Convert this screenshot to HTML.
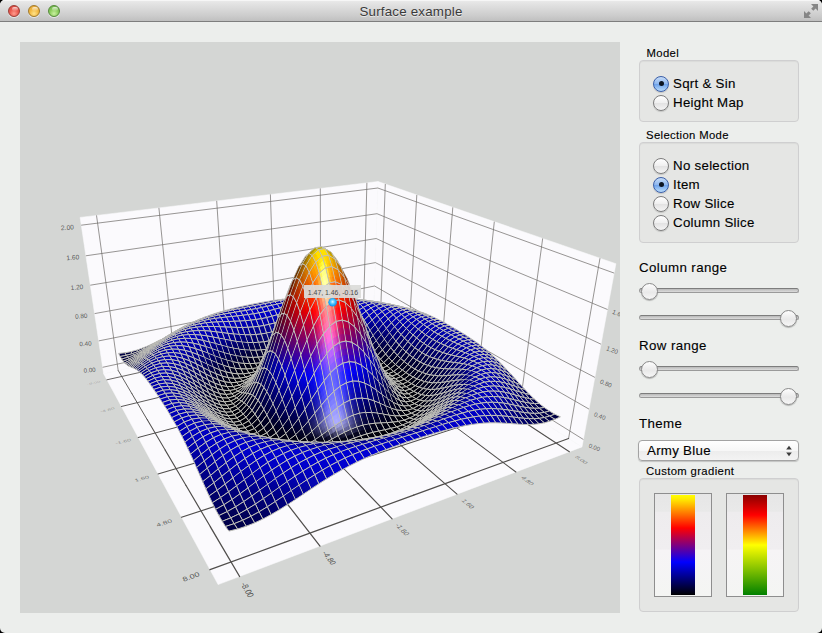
<!DOCTYPE html>
<html><head><meta charset="utf-8"><title>Surface example</title>
<style>
html,body{margin:0;padding:0;background:#000;}
body{width:822px;height:633px;overflow:hidden;position:relative;font-family:"Liberation Sans",sans-serif;color:#000;}
#win{position:absolute;left:0;top:0;width:822px;height:633px;border-radius:5px;background:#eceeec;overflow:hidden;}
#tb{position:absolute;left:0;top:0;width:822px;height:21px;background:linear-gradient(#ebebeb 0%,#e2e2e2 20%,#cccccc 75%,#bfbfbf 100%);border-bottom:1px solid #7e7e7e;box-shadow:inset 0 1px 0 #f6f6f6;}
#title{position:absolute;left:0;top:4px;width:822px;text-align:center;font-size:13.3px;color:#3a3a3a;letter-spacing:0.22px;text-shadow:0 1px 0 rgba(255,255,255,.6);}
.tl{position:absolute;top:5px;width:12px;height:12px;border-radius:6px;box-sizing:border-box;box-shadow:0 1px 0 rgba(255,255,255,.55);}
.tl:after{content:"";position:absolute;left:2.5px;top:1px;width:6px;height:4px;border-radius:3px;background:linear-gradient(rgba(255,255,255,.75),rgba(255,255,255,.05));}
#view{position:absolute;left:20px;top:42px;width:600px;height:571px;background:#d4d6d4;}
.gb{position:absolute;box-sizing:border-box;background:#e5e6e4;border:1px solid #cfcfd0;border-radius:4px;box-shadow:inset 0 1px 1px rgba(0,0,0,.05);}
.t11{position:absolute;font-size:11.3px;white-space:nowrap;line-height:14px;letter-spacing:0.36px;-webkit-text-stroke:0.12px #000;}
.t13{position:absolute;font-size:13.3px;white-space:nowrap;line-height:16px;letter-spacing:0.28px;-webkit-text-stroke:0.12px #000;}
.rb{position:absolute;width:16px;height:16px;border-radius:8px;box-sizing:border-box;border:1px solid #7d7d7d;background:linear-gradient(#ffffff,#efefef 50%,#e2e2e2 51%,#f4f4f4);box-shadow:0 1px 1px rgba(0,0,0,.15);}
.rb.on{border-color:#3b5fa8;background:linear-gradient(#c6dcf7,#8db6ee 50%,#6ea2ea 51%,#b9dcfb);}
.rb.on i{position:absolute;left:4.5px;top:4.5px;width:5px;height:5px;border-radius:3px;background:#0c1420;}
.sl{position:absolute;left:639px;width:160px;height:5px;box-sizing:border-box;border-radius:3px;border:1px solid #9a9a9a;border-top-color:#7d7d7d;background:linear-gradient(#b9b9b9,#dcdcdc);}
.kn{position:absolute;width:17px;height:17px;border-radius:9px;box-sizing:border-box;border:1px solid #8a8a8a;background:linear-gradient(#fdfdfd,#e9e9e9 55%,#f6f6f6);box-shadow:0 1px 1px rgba(0,0,0,.25);}
#combo{position:absolute;left:638px;top:440px;width:161px;height:21px;box-sizing:border-box;border:1px solid #a3a3a3;border-radius:4px;background:linear-gradient(#ffffff,#f7f7f7 50%,#ececec 51%,#f3f3f3);box-shadow:0 1px 1px rgba(0,0,0,.18);}
.gbtn{position:absolute;top:493px;width:58px;height:104px;box-sizing:border-box;border:1px solid #8e8e8e;background:linear-gradient(#e6e6e6 0%,#e9e9e9 17%,#eeecee 18%,#f0eef0 54%,#f6f4f6 55%,#f4f5f3 100%);}
#sf path{stroke:none}
.gbtn b{position:absolute;left:16px;top:1px;width:24px;height:100px;}
</style></head><body><div id="win">
<div id="tb"></div>
<div class="tl" style="left:8px;border:1px solid #9c3d36;background:radial-gradient(circle at 50% 75%,#ff9d8e 0%,#ec5d52 45%,#cf4038 100%)"></div>
<div class="tl" style="left:28px;border:1px solid #a17a2c;background:radial-gradient(circle at 50% 75%,#ffe38a 0%,#f3bb45 45%,#dd9c2a 100%)"></div>
<div class="tl" style="left:48px;border:1px solid #568a3c;background:radial-gradient(circle at 50% 75%,#c9f0a0 0%,#8fcf5f 45%,#62a843 100%)"></div>
<div id="title">Surface example</div>
<svg style="position:absolute;left:804px;top:4px" width="14" height="14" viewBox="0 0 14 14"><path d="M7 0H14V7L11.6 4.600L9.340 6.860L7.140 4.660L9.400 2.400ZM7 14H0V7L2.400 9.400L4.660 7.140L6.860 9.340L4.600 11.6Z" fill="#868686"/></svg>
<div id="view"><svg width="600" height="571" viewBox="20 42 600 571" style="position:absolute;left:0;top:0;font-family:'Liberation Sans',sans-serif">
<polygon points="103.6,373.7 373.7,314.3 582.0,446.9 218.1,584.6" fill="#fbfafd" stroke="#fbfafd" stroke-width="0.5"/>
<polygon points="103.6,373.7 373.7,314.3 378.0,181.5 80.1,217.4" fill="#fbfafd" stroke="#fbfafd" stroke-width="0.5"/>
<polygon points="373.7,314.3 582.0,446.9 615.9,263.7 378.0,181.5" fill="#fbfafd" stroke="#fbfafd" stroke-width="0.5"/>
<g stroke="#6b6966" stroke-width="0.7"><line x1="118.2" y1="370.5" x2="96.5" y2="215.4"/>
<line x1="380.4" y1="318.6" x2="385.3" y2="184.0"/>
<line x1="174.2" y1="358.2" x2="158.9" y2="207.9"/>
<line x1="408.8" y1="336.7" x2="416.8" y2="194.9"/>
<line x1="226.3" y1="346.7" x2="216.7" y2="200.9"/>
<line x1="441.0" y1="357.2" x2="452.8" y2="207.3"/>
<line x1="275.0" y1="336.0" x2="270.4" y2="194.4"/>
<line x1="477.6" y1="380.5" x2="494.3" y2="221.7"/>
<line x1="320.7" y1="326.0" x2="320.3" y2="188.4"/>
<line x1="519.7" y1="407.3" x2="542.7" y2="238.4"/>
<line x1="363.4" y1="316.6" x2="366.9" y2="182.8"/>
<line x1="568.6" y1="438.4" x2="600.0" y2="258.2"/>
<line x1="102.6" y1="367.3" x2="373.9" y2="308.8"/>
<line x1="373.9" y1="308.8" x2="583.4" y2="439.5"/>
<line x1="98.7" y1="340.9" x2="374.6" y2="286.0"/>
<line x1="374.6" y1="286.0" x2="589.0" y2="409.1"/>
<line x1="94.6" y1="313.6" x2="375.4" y2="262.6"/>
<line x1="375.4" y1="262.6" x2="594.9" y2="377.4"/>
<line x1="90.3" y1="285.2" x2="376.2" y2="238.5"/>
<line x1="376.2" y1="238.5" x2="601.0" y2="344.2"/>
<line x1="85.8" y1="255.8" x2="377.0" y2="213.7"/>
<line x1="377.0" y1="213.7" x2="607.5" y2="309.5"/>
<line x1="81.2" y1="225.2" x2="377.8" y2="188.0"/>
<line x1="377.8" y1="188.0" x2="614.2" y2="273.1"/></g>
<g stroke="#504e4c" stroke-linecap="round"><line x1="106.9" y1="379.8" x2="160.1" y2="367.9" stroke-width="0.86"/><line x1="160.1" y1="367.9" x2="209.8" y2="356.8" stroke-width="0.84"/><line x1="209.8" y1="356.8" x2="256.4" y2="346.3" stroke-width="0.81"/><line x1="256.4" y1="346.3" x2="300.2" y2="336.5" stroke-width="0.79"/><line x1="300.2" y1="336.5" x2="341.5" y2="327.3" stroke-width="0.76"/><line x1="341.5" y1="327.3" x2="380.4" y2="318.6" stroke-width="0.74"/>
<line x1="118.2" y1="370.5" x2="131.8" y2="393.5" stroke-width="0.88"/><line x1="131.8" y1="393.5" x2="147.3" y2="419.8" stroke-width="0.94"/><line x1="147.3" y1="419.8" x2="165.2" y2="450.1" stroke-width="1.01"/><line x1="165.2" y1="450.1" x2="185.9" y2="485.3" stroke-width="1.09"/><line x1="185.9" y1="485.3" x2="210.4" y2="526.8" stroke-width="1.19"/><line x1="210.4" y1="526.8" x2="239.6" y2="576.5" stroke-width="1.30"/>
<line x1="121.4" y1="406.5" x2="177.8" y2="392.8" stroke-width="0.93"/><line x1="177.8" y1="392.8" x2="230.4" y2="380.0" stroke-width="0.90"/><line x1="230.4" y1="380.0" x2="279.5" y2="368.1" stroke-width="0.86"/><line x1="279.5" y1="368.1" x2="325.4" y2="357.0" stroke-width="0.84"/><line x1="325.4" y1="357.0" x2="368.4" y2="346.5" stroke-width="0.81"/><line x1="368.4" y1="346.5" x2="408.8" y2="336.7" stroke-width="0.79"/>
<line x1="174.2" y1="358.2" x2="190.8" y2="379.6" stroke-width="0.85"/><line x1="190.8" y1="379.6" x2="209.7" y2="403.9" stroke-width="0.91"/><line x1="209.7" y1="403.9" x2="231.3" y2="431.7" stroke-width="0.97"/><line x1="231.3" y1="431.7" x2="256.2" y2="463.9" stroke-width="1.04"/><line x1="256.2" y1="463.9" x2="285.4" y2="501.5" stroke-width="1.13"/><line x1="285.4" y1="501.5" x2="320.0" y2="546.1" stroke-width="1.23"/>
<line x1="138.2" y1="437.5" x2="198.4" y2="421.5" stroke-width="1.00"/><line x1="198.4" y1="421.5" x2="254.1" y2="406.8" stroke-width="0.96"/><line x1="254.1" y1="406.8" x2="305.8" y2="393.0" stroke-width="0.93"/><line x1="305.8" y1="393.0" x2="354.0" y2="380.3" stroke-width="0.90"/><line x1="354.0" y1="380.3" x2="398.9" y2="368.3" stroke-width="0.87"/><line x1="398.9" y1="368.3" x2="441.0" y2="357.2" stroke-width="0.84"/>
<line x1="226.3" y1="346.7" x2="245.5" y2="366.7" stroke-width="0.82"/><line x1="245.5" y1="366.7" x2="267.2" y2="389.2" stroke-width="0.87"/><line x1="267.2" y1="389.2" x2="291.9" y2="414.8" stroke-width="0.93"/><line x1="291.9" y1="414.8" x2="320.3" y2="444.3" stroke-width="1.00"/><line x1="320.3" y1="444.3" x2="353.3" y2="478.5" stroke-width="1.08"/><line x1="353.3" y1="478.5" x2="392.1" y2="518.8" stroke-width="1.17"/>
<line x1="158.0" y1="473.9" x2="222.3" y2="455.1" stroke-width="1.09"/><line x1="222.3" y1="455.1" x2="281.5" y2="437.8" stroke-width="1.04"/><line x1="281.5" y1="437.8" x2="336.2" y2="421.8" stroke-width="1.00"/><line x1="336.2" y1="421.8" x2="386.8" y2="407.0" stroke-width="0.96"/><line x1="386.8" y1="407.0" x2="433.9" y2="393.3" stroke-width="0.93"/><line x1="433.9" y1="393.3" x2="477.6" y2="380.5" stroke-width="0.90"/>
<line x1="275.0" y1="336.0" x2="296.4" y2="354.6" stroke-width="0.79"/><line x1="296.4" y1="354.6" x2="320.5" y2="375.6" stroke-width="0.84"/><line x1="320.5" y1="375.6" x2="347.8" y2="399.3" stroke-width="0.90"/><line x1="347.8" y1="399.3" x2="379.0" y2="426.4" stroke-width="0.96"/><line x1="379.0" y1="426.4" x2="415.0" y2="457.7" stroke-width="1.03"/><line x1="415.0" y1="457.7" x2="457.0" y2="494.2" stroke-width="1.11"/>
<line x1="181.5" y1="517.2" x2="250.6" y2="494.8" stroke-width="1.19"/><line x1="250.6" y1="494.8" x2="313.8" y2="474.2" stroke-width="1.13"/><line x1="313.8" y1="474.2" x2="371.7" y2="455.4" stroke-width="1.09"/><line x1="371.7" y1="455.4" x2="425.0" y2="438.1" stroke-width="1.04"/><line x1="425.0" y1="438.1" x2="474.2" y2="422.1" stroke-width="1.00"/><line x1="474.2" y1="422.1" x2="519.7" y2="407.3" stroke-width="0.96"/>
<line x1="320.7" y1="326.0" x2="343.9" y2="343.4" stroke-width="0.77"/><line x1="343.9" y1="343.4" x2="370.0" y2="362.9" stroke-width="0.81"/><line x1="370.0" y1="362.9" x2="399.4" y2="384.9" stroke-width="0.86"/><line x1="399.4" y1="384.9" x2="432.9" y2="410.0" stroke-width="0.92"/><line x1="432.9" y1="410.0" x2="471.3" y2="438.7" stroke-width="0.99"/><line x1="471.3" y1="438.7" x2="515.9" y2="472.0" stroke-width="1.06"/>
<line x1="210.0" y1="569.7" x2="284.6" y2="542.4" stroke-width="1.31"/><line x1="284.6" y1="542.4" x2="352.2" y2="517.6" stroke-width="1.25"/><line x1="352.2" y1="517.6" x2="413.7" y2="495.1" stroke-width="1.19"/><line x1="413.7" y1="495.1" x2="469.8" y2="474.6" stroke-width="1.14"/><line x1="469.8" y1="474.6" x2="521.2" y2="455.7" stroke-width="1.09"/><line x1="521.2" y1="455.7" x2="568.6" y2="438.4" stroke-width="1.04"/>
<line x1="363.4" y1="316.6" x2="388.3" y2="332.9" stroke-width="0.74"/><line x1="388.3" y1="332.9" x2="416.1" y2="351.1" stroke-width="0.79"/><line x1="416.1" y1="351.1" x2="447.3" y2="371.6" stroke-width="0.83"/><line x1="447.3" y1="371.6" x2="482.6" y2="394.8" stroke-width="0.89"/><line x1="482.6" y1="394.8" x2="522.9" y2="421.2" stroke-width="0.95"/><line x1="522.9" y1="421.2" x2="569.4" y2="451.7" stroke-width="1.02"/></g>
<g id="sf" stroke="#c0c0b9" stroke-width="1.0" stroke-linejoin="round">
<polygon points="282.4,299.3 284.8,299.8 289.8,299.1 287.4,298.8" fill="#000075"/>
<polygon points="277.4,299.9 279.8,300.7 284.8,299.8 282.4,299.3" fill="#00007f"/>
<polygon points="272.4,300.6 274.7,301.7 279.8,300.7 277.4,299.9" fill="#000087"/>
<polygon points="267.3,301.5 269.6,302.7 274.7,301.7 272.4,300.6" fill="#00008d"/>
<polygon points="262.2,302.3 264.5,303.7 269.6,302.7 267.3,301.5" fill="#000092"/>
<polygon points="257.1,303.3 259.3,304.7 264.5,303.7 262.2,302.3" fill="#000094"/>
<polygon points="251.9,304.3 254.1,305.7 259.3,304.7 257.1,303.3" fill="#000096"/>
<polygon points="246.7,305.4 248.9,306.7 254.1,305.7 251.9,304.3" fill="#000095"/>
<polygon points="241.4,306.5 243.6,307.8 248.9,306.7 246.7,305.4" fill="#000093"/>
<polygon points="236.1,307.7 238.3,308.8 243.6,307.8 241.4,306.5" fill="#00008f"/>
<polygon points="230.8,309.0 232.9,309.9 238.3,308.8 236.1,307.7" fill="#000089"/>
<polygon points="225.5,310.4 227.5,311.1 232.9,309.9 230.8,309.0" fill="#000082"/>
<polygon points="220.1,311.9 222.1,312.3 227.5,311.1 225.5,310.4" fill="#00007a"/>
<polygon points="214.7,313.6 216.6,313.8 222.1,312.3 220.1,311.9" fill="#000071"/>
<polygon points="209.3,315.5 211.2,315.3 216.6,313.8 214.7,313.6" fill="#000068"/>
<polygon points="203.9,317.5 205.7,317.1 211.2,315.3 209.3,315.5" fill="#00005f"/>
<polygon points="198.4,319.8 200.1,319.2 205.7,317.1 203.9,317.5" fill="#000056"/>
<polygon points="192.9,322.3 194.6,321.5 200.1,319.2 198.4,319.8" fill="#000028"/>
<polygon points="187.4,325.0 189.1,324.0 194.6,321.5 192.9,322.3" fill="#000026"/>
<polygon points="181.9,327.9 183.5,326.8 189.1,324.0 187.4,325.0" fill="#000024"/>
<polygon points="176.4,330.9 178.0,329.8 183.5,326.8 181.9,327.9" fill="#000022"/>
<polygon points="165.3,337.1 166.8,336.3 172.4,333.0 170.9,334.0" fill="#00001d"/>
<polygon points="154.1,343.0 155.5,342.9 161.2,339.7 159.7,340.1" fill="#000035"/>
<polygon points="148.4,345.7 149.8,346.1 155.5,342.9 154.1,343.0" fill="#000035"/>
<polygon points="142.6,348.1 144.1,349.0 149.8,346.1 148.4,345.7" fill="#000037"/>
<polygon points="136.8,350.1 138.2,351.5 144.1,349.0 142.6,348.1" fill="#000039"/>
<polygon points="130.8,351.7 132.3,353.7 138.2,351.5 136.8,350.1" fill="#00003c"/>
<polygon points="124.8,352.8 126.3,355.3 132.3,353.7 130.8,351.7" fill="#000040"/>
<polygon points="118.6,353.4 120.2,356.5 126.3,355.3 124.8,352.8" fill="#000045"/>
<polygon points="279.8,300.7 282.2,302.9 287.2,301.7 284.8,299.8" fill="#0000a8"/>
<polygon points="274.7,301.7 277.1,304.1 282.2,302.9 279.8,300.7" fill="#0000af"/>
<polygon points="269.6,302.7 272.0,305.3 277.1,304.1 274.7,301.7" fill="#0000b4"/>
<polygon points="264.5,303.7 266.9,306.4 272.0,305.3 269.6,302.7" fill="#0000b7"/>
<polygon points="259.3,304.7 261.7,307.5 266.9,306.4 264.5,303.7" fill="#0000b9"/>
<polygon points="254.1,305.7 256.4,308.6 261.7,307.5 259.3,304.7" fill="#0000ba"/>
<polygon points="248.9,306.7 251.2,309.5 256.4,308.6 254.1,305.7" fill="#0000b9"/>
<polygon points="243.6,307.8 245.9,310.5 251.2,309.5 248.9,306.7" fill="#0000b7"/>
<polygon points="238.3,308.8 240.5,311.3 245.9,310.5 243.6,307.8" fill="#0000b4"/>
<polygon points="232.9,309.9 235.1,312.2 240.5,311.3 238.3,308.8" fill="#0000af"/>
<polygon points="227.5,311.1 229.7,313.1 235.1,312.2 232.9,309.9" fill="#0000a8"/>
<polygon points="222.1,312.3 224.2,314.0 229.7,313.1 227.5,311.1" fill="#0000a0"/>
<polygon points="216.6,313.8 218.7,315.0 224.2,314.0 222.1,312.3" fill="#000096"/>
<polygon points="211.2,315.3 213.1,316.3 218.7,315.0 216.6,313.8" fill="#00008b"/>
<polygon points="205.7,317.1 207.6,317.7 213.1,316.3 211.2,315.3" fill="#00007f"/>
<polygon points="200.1,319.2 202.0,319.3 207.6,317.7 205.7,317.1" fill="#000072"/>
<polygon points="194.6,321.5 196.4,321.3 202.0,319.3 200.1,319.2" fill="#000066"/>
<polygon points="189.1,324.0 190.8,323.5 196.4,321.3 194.6,321.5" fill="#00005b"/>
<polygon points="183.5,326.8 185.1,326.1 190.8,323.5 189.1,324.0" fill="#000051"/>
<polygon points="178.0,329.8 179.5,328.9 185.1,326.1 183.5,326.8" fill="#000049"/>
<polygon points="172.4,333.0 173.9,332.1 179.5,328.9 178.0,329.8" fill="#000024"/>
<polygon points="161.2,339.7 162.6,339.0 168.3,335.5 166.8,336.3" fill="#00003a"/>
<polygon points="155.5,342.9 156.9,342.5 162.6,339.0 161.2,339.7" fill="#000038"/>
<polygon points="149.8,346.1 151.2,346.0 156.9,342.5 155.5,342.9" fill="#000037"/>
<polygon points="144.1,349.0 145.5,349.4 151.2,346.0 149.8,346.1" fill="#000037"/>
<polygon points="138.2,351.5 139.7,352.4 145.5,349.4 144.1,349.0" fill="#000037"/>
<polygon points="132.3,353.7 133.8,355.1 139.7,352.4 138.2,351.5" fill="#000039"/>
<polygon points="126.3,355.3 127.8,357.3 133.8,355.1 132.3,353.7" fill="#00003c"/>
<polygon points="120.2,356.5 121.7,359.0 127.8,357.3 126.3,355.3" fill="#000040"/>
<polygon points="282.2,302.9 284.7,306.4 289.7,304.9 287.2,301.7" fill="#0000c4"/>
<polygon points="277.1,304.1 279.6,307.9 284.7,306.4 282.2,302.9" fill="#0000c8"/>
<polygon points="272.0,305.3 274.5,309.4 279.6,307.9 277.1,304.1" fill="#0000c9"/>
<polygon points="266.9,306.4 269.3,310.7 274.5,309.4 272.0,305.3" fill="#0000ca"/>
<polygon points="261.7,307.5 264.1,311.9 269.3,310.7 266.9,306.4" fill="#0000ca"/>
<polygon points="256.4,308.6 258.9,312.9 264.1,311.9 261.7,307.5" fill="#0000c9"/>
<polygon points="251.2,309.5 253.6,313.8 258.9,312.9 256.4,308.6" fill="#0000c9"/>
<polygon points="245.9,310.5 248.2,314.6 253.6,313.8 251.2,309.5" fill="#0000c8"/>
<polygon points="240.5,311.3 242.8,315.3 248.2,314.6 245.9,310.5" fill="#0000c6"/>
<polygon points="235.1,312.2 237.4,315.9 242.8,315.3 240.5,311.3" fill="#0000c4"/>
<polygon points="229.7,313.1 231.9,316.5 237.4,315.9 235.1,312.2" fill="#0000c1"/>
<polygon points="224.2,314.0 226.4,317.0 231.9,316.5 229.7,313.1" fill="#0000bd"/>
<polygon points="218.7,315.0 220.8,317.7 226.4,317.0 224.2,314.0" fill="#0000b6"/>
<polygon points="213.1,316.3 215.2,318.4 220.8,317.7 218.7,315.0" fill="#0000ad"/>
<polygon points="207.6,317.7 209.6,319.3 215.2,318.4 213.1,316.3" fill="#0000a1"/>
<polygon points="202.0,319.3 203.9,320.5 209.6,319.3 207.6,317.7" fill="#000094"/>
<polygon points="196.4,321.3 198.3,322.0 203.9,320.5 202.0,319.3" fill="#000085"/>
<polygon points="190.8,323.5 192.6,323.8 198.3,322.0 196.4,321.3" fill="#000076"/>
<polygon points="185.1,326.1 186.9,325.9 192.6,323.8 190.8,323.5" fill="#000067"/>
<polygon points="179.5,328.9 181.2,328.5 186.9,325.9 185.1,326.1" fill="#00005b"/>
<polygon points="173.9,332.1 175.5,331.4 181.2,328.5 179.5,328.9" fill="#000050"/>
<polygon points="168.3,335.5 169.8,334.7 175.5,331.4 173.9,332.1" fill="#000048"/>
<polygon points="162.6,339.0 164.1,338.2 169.8,334.7 168.3,335.5" fill="#000042"/>
<polygon points="156.9,342.5 158.4,341.9 164.1,338.2 162.6,339.0" fill="#00003d"/>
<polygon points="151.2,346.0 152.6,345.7 158.4,341.9 156.9,342.5" fill="#00003a"/>
<polygon points="145.5,349.4 146.9,349.4 152.6,345.7 151.2,346.0" fill="#000038"/>
<polygon points="139.7,352.4 141.1,352.9 146.9,349.4 145.5,349.4" fill="#000038"/>
<polygon points="133.8,355.1 135.2,356.1 141.1,352.9 139.7,352.4" fill="#000038"/>
<polygon points="127.8,357.3 129.2,358.9 135.2,356.1 133.8,355.1" fill="#00003a"/>
<polygon points="121.7,359.0 123.2,361.2 129.2,358.9 127.8,357.3" fill="#00003d"/>
<polygon points="279.6,307.9 282.1,313.2 287.2,311.4 284.7,306.4" fill="#0000c9"/>
<polygon points="274.5,309.4 277.0,314.8 282.1,313.2 279.6,307.9" fill="#0000c7"/>
<polygon points="269.3,310.7 271.8,316.3 277.0,314.8 274.5,309.4" fill="#0000c5"/>
<polygon points="264.1,311.9 266.6,317.6 271.8,316.3 269.3,310.7" fill="#0000c3"/>
<polygon points="258.9,312.9 261.4,318.7 266.6,317.6 264.1,311.9" fill="#0000c2"/>
<polygon points="253.6,313.8 256.0,319.5 261.4,318.7 258.9,312.9" fill="#0000c2"/>
<polygon points="248.2,314.6 250.7,320.2 256.0,319.5 253.6,313.8" fill="#0000c2"/>
<polygon points="242.8,315.3 245.3,320.7 250.7,320.2 248.2,314.6" fill="#0000c3"/>
<polygon points="237.4,315.9 239.8,321.1 245.3,320.7 242.8,315.3" fill="#0000c4"/>
<polygon points="231.9,316.5 234.3,321.3 239.8,321.1 237.4,315.9" fill="#0000c5"/>
<polygon points="226.4,317.0 228.7,321.5 234.3,321.3 231.9,316.5" fill="#0000c5"/>
<polygon points="220.8,317.7 223.1,321.7 228.7,321.5 226.4,317.0" fill="#0000c4"/>
<polygon points="215.2,318.4 217.4,321.9 223.1,321.7 220.8,317.7" fill="#0000c0"/>
<polygon points="209.6,319.3 211.7,322.3 217.4,321.9 215.2,318.4" fill="#0000ba"/>
<polygon points="203.9,320.5 206.0,322.8 211.7,322.3 209.6,319.3" fill="#0000b1"/>
<polygon points="198.3,322.0 200.2,323.7 206.0,322.8 203.9,320.5" fill="#0000a4"/>
<polygon points="192.6,323.8 194.5,325.0 200.2,323.7 198.3,322.0" fill="#000095"/>
<polygon points="186.9,325.9 188.7,326.6 194.5,325.0 192.6,323.8" fill="#000084"/>
<polygon points="181.2,328.5 182.9,328.7 188.7,326.6 186.9,325.9" fill="#000073"/>
<polygon points="175.5,331.4 177.1,331.3 182.9,328.7 181.2,328.5" fill="#000064"/>
<polygon points="169.8,334.7 171.3,334.3 177.1,331.3 175.5,331.4" fill="#000057"/>
<polygon points="164.1,338.2 165.6,337.6 171.3,334.3 169.8,334.7" fill="#00004d"/>
<polygon points="158.4,341.9 159.8,341.3 165.6,337.6 164.1,338.2" fill="#000046"/>
<polygon points="152.6,345.7 154.1,345.2 159.8,341.3 158.4,341.9" fill="#000040"/>
<polygon points="146.9,349.4 148.3,349.2 154.1,345.2 152.6,345.7" fill="#00003d"/>
<polygon points="141.1,352.9 142.5,353.1 148.3,349.2 146.9,349.4" fill="#00003a"/>
<polygon points="135.2,356.1 136.6,356.7 142.5,353.1 141.1,352.9" fill="#000039"/>
<polygon points="129.2,358.9 130.6,360.0 136.6,356.7 135.2,356.1" fill="#00003a"/>
<polygon points="123.2,361.2 124.6,362.9 130.6,360.0 129.2,358.9" fill="#00003b"/>
<polygon points="277.0,314.8 279.6,321.4 284.7,319.6 282.1,313.2" fill="#0202b6"/>
<polygon points="271.8,316.3 274.4,323.0 279.6,321.4 277.0,314.8" fill="#0303b2"/>
<polygon points="266.6,317.6 269.2,324.4 274.4,323.0 271.8,316.3" fill="#0202af"/>
<polygon points="261.4,318.7 263.9,325.5 269.2,324.4 266.6,317.6" fill="#0202ad"/>
<polygon points="256.0,319.5 258.6,326.4 263.9,325.5 261.4,318.7" fill="#0101ac"/>
<polygon points="250.7,320.2 253.2,327.0 258.6,326.4 256.0,319.5" fill="#0101ad"/>
<polygon points="245.3,320.7 247.8,327.3 253.2,327.0 250.7,320.2" fill="#0000af"/>
<polygon points="239.8,321.1 242.3,327.5 247.8,327.3 245.3,320.7" fill="#0000b2"/>
<polygon points="234.3,321.3 236.8,327.4 242.3,327.5 239.8,321.1" fill="#0000b5"/>
<polygon points="228.7,321.5 231.2,327.2 236.8,327.4 234.3,321.3" fill="#0000ba"/>
<polygon points="223.1,321.7 225.5,327.0 231.2,327.2 228.7,321.5" fill="#0000bd"/>
<polygon points="217.4,321.9 219.8,326.7 225.5,327.0 223.1,321.7" fill="#0000c0"/>
<polygon points="211.7,322.3 214.0,326.5 219.8,326.7 217.4,321.9" fill="#0000c1"/>
<polygon points="206.0,322.8 208.2,326.4 214.0,326.5 211.7,322.3" fill="#0000c0"/>
<polygon points="200.2,323.7 202.4,326.6 208.2,326.4 206.0,322.8" fill="#0000ba"/>
<polygon points="194.5,325.0 196.5,327.2 202.4,326.6 200.2,323.7" fill="#0000af"/>
<polygon points="188.7,326.6 190.6,328.2 196.5,327.2 194.5,325.0" fill="#0000a1"/>
<polygon points="182.9,328.7 184.7,329.7 190.6,328.2 188.7,326.6" fill="#00008f"/>
<polygon points="177.1,331.3 178.9,331.7 184.7,329.7 182.9,328.7" fill="#00007d"/>
<polygon points="171.3,334.3 173.0,334.3 178.9,331.7 177.1,331.3" fill="#00006c"/>
<polygon points="165.6,337.6 167.2,337.4 173.0,334.3 171.3,334.3" fill="#00005d"/>
<polygon points="159.8,341.3 161.3,340.9 167.2,337.4 165.6,337.6" fill="#000052"/>
<polygon points="154.1,345.2 155.5,344.8 161.3,340.9 159.8,341.3" fill="#000049"/>
<polygon points="148.3,349.2 149.7,348.9 155.5,344.8 154.1,345.2" fill="#000043"/>
<polygon points="142.5,353.1 143.8,353.0 149.7,348.9 148.3,349.2" fill="#00003f"/>
<polygon points="136.6,356.7 138.0,357.1 143.8,353.0 142.5,353.1" fill="#00003c"/>
<polygon points="130.6,360.0 132.0,360.8 138.0,357.1 136.6,356.7" fill="#00003b"/>
<polygon points="124.6,362.9 126.0,364.2 132.0,360.8 130.6,360.0" fill="#00003b"/>
<polygon points="274.4,323.0 277.0,330.5 282.2,328.8 279.6,321.4" fill="#0c0c9d"/>
<polygon points="269.2,324.4 271.8,332.0 277.0,330.5 274.4,323.0" fill="#0a0a97"/>
<polygon points="263.9,325.5 266.5,333.1 271.8,332.0 269.2,324.4" fill="#070793"/>
<polygon points="258.6,326.4 261.2,334.0 266.5,333.1 263.9,325.5" fill="#050591"/>
<polygon points="253.2,327.0 255.8,334.5 261.2,334.0 258.6,326.4" fill="#030390"/>
<polygon points="247.8,327.3 250.4,334.8 255.8,334.5 253.2,327.0" fill="#010192"/>
<polygon points="242.3,327.5 244.9,334.8 250.4,334.8 247.8,327.3" fill="#010196"/>
<polygon points="236.8,327.4 239.3,334.5 244.9,334.8 242.3,327.5" fill="#00009b"/>
<polygon points="231.2,327.2 233.7,334.0 239.3,334.5 236.8,327.4" fill="#0000a2"/>
<polygon points="225.5,327.0 228.0,333.4 233.7,334.0 231.2,327.2" fill="#0000a9"/>
<polygon points="219.8,326.7 222.2,332.6 228.0,333.4 225.5,327.0" fill="#0000b1"/>
<polygon points="214.0,326.5 216.4,331.9 222.2,332.6 219.8,326.7" fill="#0000b7"/>
<polygon points="208.2,326.4 210.5,331.2 216.4,331.9 214.0,326.5" fill="#0000bc"/>
<polygon points="202.4,326.6 204.6,330.7 210.5,331.2 208.2,326.4" fill="#0000bf"/>
<polygon points="196.5,327.2 198.6,330.6 204.6,330.7 202.4,326.6" fill="#0000bd"/>
<polygon points="190.6,328.2 192.7,330.9 198.6,330.6 196.5,327.2" fill="#0000b5"/>
<polygon points="184.7,329.7 186.7,331.7 192.7,330.9 190.6,328.2" fill="#0000a8"/>
<polygon points="178.9,331.7 180.7,333.0 186.7,331.7 184.7,329.7" fill="#000097"/>
<polygon points="173.0,334.3 174.7,335.0 180.7,333.0 178.9,331.7" fill="#000084"/>
<polygon points="167.2,337.4 168.8,337.7 174.7,335.0 173.0,334.3" fill="#000072"/>
<polygon points="161.3,340.9 162.9,340.9 168.8,337.7 167.2,337.4" fill="#000062"/>
<polygon points="155.5,344.8 157.0,344.6 162.9,340.9 161.3,340.9" fill="#000056"/>
<polygon points="149.7,348.9 151.1,348.6 157.0,344.6 155.5,344.8" fill="#00004c"/>
<polygon points="143.8,353.0 145.2,352.9 151.1,348.6 149.7,348.9" fill="#000045"/>
<polygon points="138.0,357.1 139.3,357.2 145.2,352.9 143.8,353.0" fill="#000040"/>
<polygon points="132.0,360.8 133.4,361.4 139.3,357.2 138.0,357.1" fill="#00003d"/>
<polygon points="126.0,364.2 127.4,365.2 133.4,361.4 132.0,360.8" fill="#00003c"/>
<polygon points="356.3,299.1 359.2,299.6 363.8,299.9 360.9,299.9" fill="#00002b"/>
<polygon points="351.6,298.8 354.4,299.9 359.2,299.6 356.3,299.1" fill="#000079"/>
<polygon points="271.8,332.0 274.4,339.8 279.7,338.3 277.0,330.5" fill="#0f0f79"/>
<polygon points="266.5,333.1 269.2,340.9 274.4,339.8 271.8,332.0" fill="#0a0a73"/>
<path d="M267.0 333.5L268.2 337.0L270.5 336.4L269.3 333.0" fill="#0a0a7a"/>
<path d="M269.3 333.0L270.5 336.4L272.8 335.9L271.7 332.5" fill="#0b0b7c"/>
<path d="M268.2 337.0L269.3 340.4L271.7 339.9L270.5 336.4" fill="#0a0a6a"/>
<path d="M270.5 336.4L271.7 339.9L274.0 339.4L272.8 335.9" fill="#0b0b6c"/>
<polygon points="261.2,334.0 263.8,341.8 269.2,340.9 266.5,333.1" fill="#070770"/>
<polygon points="255.8,334.5 258.4,342.4 263.8,341.8 261.2,334.0" fill="#04046f"/>
<polygon points="250.4,334.8 253.0,342.6 258.4,342.4 255.8,334.5" fill="#020271"/>
<polygon points="244.9,334.8 247.5,342.5 253.0,342.6 250.4,334.8" fill="#010176"/>
<polygon points="239.3,334.5 241.9,342.1 247.5,342.5 244.9,334.8" fill="#00007c"/>
<path d="M239.8 335.0L240.9 338.3L243.4 338.5L242.2 335.1" fill="#000085"/>
<path d="M242.2 335.1L243.4 338.5L245.8 338.6L244.7 335.2" fill="#000082"/>
<path d="M240.9 338.3L242.1 341.7L244.5 341.9L243.4 338.5" fill="#000077"/>
<path d="M243.4 338.5L244.5 341.9L247.0 342.0L245.8 338.6" fill="#000073"/>
<polygon points="233.7,334.0 236.2,341.5 241.9,342.1 239.3,334.5" fill="#000084"/>
<path d="M234.2 334.5L235.3 337.8L237.8 338.0L236.6 334.7" fill="#00008d"/>
<path d="M236.6 334.7L237.8 338.0L240.3 338.3L239.1 334.9" fill="#000089"/>
<path d="M235.3 337.8L236.4 341.0L238.9 341.3L237.8 338.0" fill="#00007f"/>
<path d="M237.8 338.0L238.9 341.3L241.4 341.6L240.3 338.3" fill="#00007b"/>
<polygon points="228.0,333.4 230.5,340.5 236.2,341.5 233.7,334.0" fill="#00008e"/>
<polygon points="222.2,332.6 224.7,339.4 230.5,340.5 228.0,333.4" fill="#000098"/>
<polygon points="216.4,331.9 218.8,338.2 224.7,339.4 222.2,332.6" fill="#0000a2"/>
<polygon points="210.5,331.2 212.9,337.0 218.8,338.2 216.4,331.9" fill="#0000ac"/>
<polygon points="204.6,330.7 206.9,335.9 212.9,337.0 210.5,331.2" fill="#0000b4"/>
<polygon points="198.6,330.6 200.9,335.1 206.9,335.9 204.6,330.7" fill="#0000ba"/>
<polygon points="192.7,330.9 194.8,334.6 200.9,335.1 198.6,330.6" fill="#0000bc"/>
<polygon points="186.7,331.7 188.7,334.6 194.8,334.6 192.7,330.9" fill="#0000b8"/>
<polygon points="180.7,333.0 182.7,335.2 188.7,334.6 186.7,331.7" fill="#0000ad"/>
<polygon points="174.7,335.0 176.6,336.5 182.7,335.2 180.7,333.0" fill="#00009c"/>
<polygon points="168.8,337.7 170.6,338.6 176.6,336.5 174.7,335.0" fill="#000089"/>
<polygon points="162.9,340.9 164.5,341.3 170.6,338.6 168.8,337.7" fill="#000075"/>
<polygon points="157.0,344.6 158.6,344.6 164.5,341.3 162.9,340.9" fill="#000065"/>
<polygon points="151.1,348.6 152.6,348.5 158.6,344.6 157.0,344.6" fill="#000058"/>
<polygon points="145.2,352.9 146.7,352.8 152.6,348.5 151.1,348.6" fill="#00004e"/>
<polygon points="139.3,357.2 140.7,357.3 146.7,352.8 145.2,352.9" fill="#000047"/>
<polygon points="133.4,361.4 134.8,361.7 140.7,357.3 139.3,357.2" fill="#000042"/>
<polygon points="127.4,365.2 128.7,366.0 134.8,361.7 133.4,361.4" fill="#00003e"/>
<polygon points="363.8,299.9 366.8,300.5 371.5,300.9 368.5,300.8" fill="#00002b"/>
<polygon points="359.2,299.6 362.1,300.7 366.8,300.5 363.8,299.9" fill="#00007a"/>
<polygon points="354.4,299.9 357.3,301.7 362.1,300.7 359.2,299.6" fill="#000096"/>
<polygon points="349.6,300.8 352.5,303.4 357.3,301.7 354.4,299.9" fill="#0000af"/>
<polygon points="263.8,341.8 266.5,349.3 271.8,348.4 269.2,340.9" fill="#04044c"/>
<polygon points="258.4,342.4 261.1,349.9 266.5,349.3 263.8,341.8" fill="#03034c"/>
<polygon points="253.0,342.6 255.6,350.2 261.1,349.9 258.4,342.4" fill="#02024f"/>
<path d="M253.5 343.0L254.6 346.4L257.0 346.3L255.9 342.9" fill="#020257"/>
<path d="M255.9 342.9L257.0 346.3L259.4 346.2L258.3 342.8" fill="#020255"/>
<path d="M254.6 346.4L255.8 349.8L258.2 349.6L257.0 346.3" fill="#010148"/>
<path d="M257.0 346.3L258.2 349.6L260.6 349.5L259.4 346.2" fill="#010146"/>
<polygon points="247.5,342.5 250.1,350.2 255.6,350.2 253.0,342.6" fill="#010154"/>
<path d="M248.0 343.0L249.1 346.4L251.5 346.4L250.4 343.0" fill="#01015c"/>
<path d="M250.4 343.0L251.5 346.4L254.0 346.4L252.8 343.0" fill="#01015a"/>
<path d="M249.1 346.4L250.3 349.8L252.7 349.8L251.5 346.4" fill="#01014e"/>
<path d="M251.5 346.4L252.7 349.8L255.1 349.8L254.0 346.4" fill="#01014b"/>
<polygon points="241.9,342.1 244.5,349.9 250.1,350.2 247.5,342.5" fill="#00005b"/>
<path d="M242.4 342.6L243.5 346.0L246.0 346.2L244.8 342.8" fill="#000064"/>
<path d="M244.8 342.8L246.0 346.2L248.4 346.3L247.3 342.9" fill="#000060"/>
<path d="M243.5 346.0L244.7 349.4L247.1 349.6L246.0 346.2" fill="#000056"/>
<path d="M246.0 346.2L247.1 349.6L249.6 349.7L248.4 346.3" fill="#000052"/>
<polygon points="236.2,341.5 238.8,349.2 244.5,349.9 241.9,342.1" fill="#000064"/>
<path d="M236.7 342.0L237.9 345.3L240.4 345.6L239.2 342.3" fill="#00006d"/>
<path d="M239.2 342.3L240.4 345.6L242.9 345.9L241.7 342.5" fill="#000069"/>
<path d="M237.9 345.3L239.0 348.7L241.5 349.1L240.4 345.6" fill="#00005f"/>
<path d="M240.4 345.6L241.5 349.1L244.0 349.4L242.9 345.9" fill="#00005b"/>
<polygon points="230.5,340.5 233.1,348.1 238.8,349.2 236.2,341.5" fill="#00006f"/>
<path d="M231.0 341.1L232.1 344.4L234.7 344.8L233.5 341.5" fill="#000078"/>
<path d="M233.5 341.5L234.7 344.8L237.2 345.2L236.0 341.9" fill="#000073"/>
<path d="M232.1 344.4L233.3 347.7L235.8 348.2L234.7 344.8" fill="#00006a"/>
<path d="M234.7 344.8L235.8 348.2L238.3 348.6L237.2 345.2" fill="#000065"/>
<polygon points="224.7,339.4 227.3,346.8 233.1,348.1 230.5,340.5" fill="#00007b"/>
<path d="M225.2 340.0L226.3 343.2L228.9 343.7L227.8 340.4" fill="#000084"/>
<path d="M227.8 340.4L228.9 343.7L231.4 344.3L230.3 340.9" fill="#00007f"/>
<path d="M226.3 343.2L227.5 346.5L230.0 347.0L228.9 343.7" fill="#000077"/>
<path d="M228.9 343.7L230.0 347.0L232.6 347.6L231.4 344.3" fill="#000071"/>
<polygon points="218.8,338.2 221.4,345.3 227.3,346.8 224.7,339.4" fill="#000087"/>
<path d="M219.3 338.7L220.5 341.8L223.1 342.4L221.9 339.3" fill="#000090"/>
<path d="M221.9 339.3L223.1 342.4L225.6 343.0L224.5 339.8" fill="#00008b"/>
<path d="M220.5 341.8L221.6 345.0L224.2 345.6L223.1 342.4" fill="#000084"/>
<path d="M223.1 342.4L224.2 345.6L226.8 346.3L225.6 343.0" fill="#00007e"/>
<polygon points="212.9,337.0 215.4,343.6 221.4,345.3 218.8,338.2" fill="#000094"/>
<polygon points="206.9,335.9 209.3,342.0 215.4,343.6 212.9,337.0" fill="#0000a1"/>
<polygon points="200.9,335.1 203.2,340.5 209.3,342.0 206.9,335.9" fill="#0000ac"/>
<polygon points="194.8,334.6 197.1,339.2 203.2,340.5 200.9,335.1" fill="#0000b5"/>
<polygon points="188.7,334.6 190.9,338.5 197.1,339.2 194.8,334.6" fill="#0000ba"/>
<polygon points="182.7,335.2 184.7,338.3 190.9,338.5 188.7,334.6" fill="#0000b8"/>
<polygon points="176.6,336.5 178.6,338.8 184.7,338.3 182.7,335.2" fill="#0000af"/>
<polygon points="170.6,338.6 172.4,340.2 178.6,338.8 176.6,336.5" fill="#00009f"/>
<polygon points="164.5,341.3 166.3,342.3 172.4,340.2 170.6,338.6" fill="#00008b"/>
<polygon points="158.6,344.6 160.2,345.2 166.3,342.3 164.5,341.3" fill="#000077"/>
<polygon points="152.6,348.5 154.2,348.8 160.2,345.2 158.6,344.6" fill="#000066"/>
<polygon points="146.7,352.8 148.1,352.9 154.2,348.8 152.6,348.5" fill="#000059"/>
<polygon points="140.7,357.3 142.2,357.4 148.1,352.9 146.7,352.8" fill="#00004f"/>
<polygon points="134.8,361.7 136.2,362.0 142.2,357.4 140.7,357.3" fill="#000048"/>
<polygon points="128.7,366.0 130.1,366.6 136.2,362.0 134.8,361.7" fill="#000042"/>
<polygon points="371.5,300.9 374.5,301.5 379.1,302.1 376.0,302.0" fill="#00002b"/>
<polygon points="366.8,300.5 369.8,301.6 374.5,301.5 371.5,300.9" fill="#000078"/>
<polygon points="362.1,300.7 365.0,302.5 369.8,301.6 366.8,300.5" fill="#000095"/>
<polygon points="357.3,301.7 360.2,304.2 365.0,302.5 362.1,300.7" fill="#0000af"/>
<polygon points="352.5,303.4 355.4,306.7 360.2,304.2 357.3,301.7" fill="#0000c1"/>
<polygon points="261.1,349.9 263.7,356.7 269.1,355.9 266.5,349.3" fill="#01012c"/>
<polygon points="255.6,350.2 258.2,357.2 263.7,356.7 261.1,349.9" fill="#000030"/>
<polygon points="250.1,350.2 252.7,357.4 258.2,357.2 255.6,350.2" fill="#000035"/>
<polygon points="244.5,349.9 247.1,357.2 252.7,357.4 250.1,350.2" fill="#00003c"/>
<path d="M245.0 350.3L246.1 353.5L248.6 353.7L247.5 350.5" fill="#000044"/>
<path d="M247.5 350.5L248.6 353.7L251.0 353.8L249.9 350.6" fill="#000040"/>
<path d="M246.1 353.5L247.3 356.8L249.7 356.8L248.6 353.7" fill="#000037"/>
<path d="M248.6 353.7L249.7 356.8L252.2 356.9L251.0 353.8" fill="#000033"/>
<polygon points="238.8,349.2 241.4,356.6 247.1,357.2 244.5,349.9" fill="#000045"/>
<path d="M239.3 349.7L240.5 352.9L243.0 353.2L241.8 350.0" fill="#00004e"/>
<path d="M241.8 350.0L243.0 353.2L245.5 353.5L244.3 350.3" fill="#000049"/>
<path d="M240.5 352.9L241.6 356.2L244.1 356.5L243.0 353.2" fill="#000040"/>
<path d="M243.0 353.2L244.1 356.5L246.6 356.7L245.5 353.5" fill="#00003c"/>
<polygon points="233.1,348.1 235.7,355.7 241.4,356.6 238.8,349.2" fill="#000050"/>
<path d="M233.6 348.7L234.7 352.0L237.3 352.4L236.1 349.1" fill="#000059"/>
<path d="M236.1 349.1L237.3 352.4L239.8 352.8L238.6 349.6" fill="#000054"/>
<path d="M234.7 352.0L235.9 355.3L238.4 355.7L237.3 352.4" fill="#00004c"/>
<path d="M237.3 352.4L238.4 355.7L240.9 356.1L239.8 352.8" fill="#000047"/>
<polygon points="227.3,346.8 229.9,354.4 235.7,355.7 233.1,348.1" fill="#00005d"/>
<path d="M227.8 347.4L228.9 350.7L231.5 351.3L230.3 347.9" fill="#000066"/>
<path d="M230.3 347.9L231.5 351.3L234.0 351.8L232.9 348.5" fill="#000060"/>
<path d="M228.9 350.7L230.0 354.0L232.6 354.6L231.5 351.3" fill="#000059"/>
<path d="M231.5 351.3L232.6 354.6L235.2 355.2L234.0 351.8" fill="#000053"/>
<polygon points="221.4,345.3 223.9,352.7 229.9,354.4 227.3,346.8" fill="#00006a"/>
<path d="M221.9 345.8L223.0 349.1L225.6 349.8L224.5 346.5" fill="#000074"/>
<path d="M224.5 346.5L225.6 349.8L228.2 350.5L227.1 347.2" fill="#00006e"/>
<path d="M223.0 349.1L224.1 352.3L226.7 353.1L225.6 349.8" fill="#000067"/>
<path d="M225.6 349.8L226.7 353.1L229.3 353.8L228.2 350.5" fill="#000061"/>
<polygon points="215.4,343.6 217.9,350.8 223.9,352.7 221.4,345.3" fill="#000079"/>
<path d="M215.9 344.2L217.0 347.3L219.7 348.1L218.5 344.9" fill="#000082"/>
<path d="M218.5 344.9L219.7 348.1L222.3 348.9L221.2 345.6" fill="#00007c"/>
<path d="M217.0 347.3L218.1 350.4L220.8 351.3L219.7 348.1" fill="#000076"/>
<path d="M219.7 348.1L220.8 351.3L223.4 352.1L222.3 348.9" fill="#000070"/>
<polygon points="209.3,342.0 211.8,348.7 217.9,350.8 215.4,343.6" fill="#000088"/>
<path d="M209.9 342.5L211.0 345.4L213.6 346.3L212.5 343.2" fill="#000091"/>
<path d="M212.5 343.2L213.6 346.3L216.3 347.1L215.2 344.0" fill="#00008b"/>
<path d="M211.0 345.4L212.1 348.4L214.7 349.3L213.6 346.3" fill="#000086"/>
<path d="M213.6 346.3L214.7 349.3L217.4 350.2L216.3 347.1" fill="#00007f"/>
<polygon points="203.2,340.5 205.7,346.6 211.8,348.7 209.3,342.0" fill="#000097"/>
<polygon points="197.1,339.2 199.5,344.7 205.7,346.6 203.2,340.5" fill="#0000a5"/>
<polygon points="190.9,338.5 193.2,343.2 199.5,344.7 197.1,339.2" fill="#0000b0"/>
<polygon points="184.7,338.3 186.9,342.2 193.2,343.2 190.9,338.5" fill="#0000b7"/>
<polygon points="178.6,338.8 180.6,342.0 186.9,342.2 184.7,338.3" fill="#0000b7"/>
<polygon points="172.4,340.2 174.3,342.5 180.6,342.0 178.6,338.8" fill="#0000af"/>
<polygon points="166.3,342.3 168.1,343.9 174.3,342.5 172.4,340.2" fill="#00009f"/>
<polygon points="160.2,345.2 161.9,346.2 168.1,343.9 166.3,342.3" fill="#00008b"/>
<polygon points="154.2,348.8 155.8,349.4 161.9,346.2 160.2,345.2" fill="#000077"/>
<polygon points="148.1,352.9 149.7,353.2 155.8,349.4 154.2,348.8" fill="#000066"/>
<polygon points="142.2,357.4 143.6,357.6 149.7,353.2 148.1,352.9" fill="#000059"/>
<polygon points="136.2,362.0 137.6,362.4 143.6,357.6 142.2,357.4" fill="#00004f"/>
<polygon points="130.1,366.6 131.5,367.2 137.6,362.4 136.2,362.0" fill="#000048"/>
<polygon points="379.1,302.1 382.2,302.7 386.8,303.6 383.7,303.4" fill="#00002a"/>
<polygon points="374.5,301.5 377.5,302.6 382.2,302.7 379.1,302.1" fill="#000074"/>
<polygon points="369.8,301.6 372.8,303.3 377.5,302.6 374.5,301.5" fill="#000091"/>
<polygon points="365.0,302.5 368.0,305.0 372.8,303.3 369.8,301.6" fill="#0000ac"/>
<polygon points="360.2,304.2 363.2,307.4 368.0,305.0 365.0,302.5" fill="#0000bf"/>
<polygon points="355.4,306.7 358.3,310.6 363.2,307.4 360.2,304.2" fill="#0000c6"/>
<polygon points="258.2,357.2 260.8,362.8 266.2,362.0 263.7,356.7" fill="#000017"/>
<polygon points="252.7,357.4 255.2,363.4 260.8,362.8 258.2,357.2" fill="#00001c"/>
<polygon points="247.1,357.2 249.7,363.6 255.2,363.4 252.7,357.4" fill="#000022"/>
<polygon points="241.4,356.6 244.0,363.4 249.7,363.6 247.1,357.2" fill="#00002a"/>
<polygon points="235.7,355.7 238.3,362.8 244.0,363.4 241.4,356.6" fill="#000034"/>
<path d="M236.2 356.2L237.3 359.3L239.8 359.6L238.7 356.6" fill="#00003c"/>
<path d="M238.7 356.6L239.8 359.6L242.4 360.0L241.2 357.0" fill="#000037"/>
<path d="M237.3 359.3L238.5 362.4L241.0 362.7L239.8 359.6" fill="#000030"/>
<path d="M239.8 359.6L241.0 362.7L243.5 363.0L242.4 360.0" fill="#00002b"/>
<polygon points="229.9,354.4 232.4,361.6 238.3,362.8 235.7,355.7" fill="#000041"/>
<path d="M230.4 354.9L231.5 358.1L234.1 358.6L232.9 355.5" fill="#000049"/>
<path d="M232.9 355.5L234.1 358.6L236.6 359.2L235.5 356.0" fill="#000043"/>
<path d="M231.5 358.1L232.6 361.3L235.2 361.8L234.1 358.6" fill="#00003d"/>
<path d="M234.1 358.6L235.2 361.8L237.8 362.3L236.6 359.2" fill="#000037"/>
<polygon points="223.9,352.7 226.5,360.1 232.4,361.6 229.9,354.4" fill="#00004e"/>
<path d="M224.4 353.2L225.6 356.5L228.2 357.2L227.1 354.0" fill="#000057"/>
<path d="M227.1 354.0L228.2 357.2L230.8 357.9L229.7 354.7" fill="#000051"/>
<path d="M225.6 356.5L226.7 359.7L229.3 360.4L228.2 357.2" fill="#00004b"/>
<path d="M228.2 357.2L229.3 360.4L231.9 361.1L230.8 357.9" fill="#000045"/>
<polygon points="217.9,350.8 220.5,358.1 226.5,360.1 223.9,352.7" fill="#00005e"/>
<path d="M218.4 351.3L219.6 354.5L222.2 355.4L221.1 352.2" fill="#000067"/>
<path d="M221.1 352.2L222.2 355.4L224.9 356.2L223.7 353.0" fill="#000060"/>
<path d="M219.6 354.5L220.7 357.7L223.4 358.6L222.2 355.4" fill="#00005b"/>
<path d="M222.2 355.4L223.4 358.6L226.0 359.5L224.9 356.2" fill="#000054"/>
<polygon points="211.8,348.7 214.4,355.8 220.5,358.1 217.9,350.8" fill="#00006e"/>
<path d="M212.4 349.2L213.5 352.3L216.2 353.3L215.0 350.2" fill="#000077"/>
<path d="M215.0 350.2L216.2 353.3L218.8 354.3L217.7 351.1" fill="#000070"/>
<path d="M213.5 352.3L214.6 355.5L217.3 356.5L216.2 353.3" fill="#00006c"/>
<path d="M216.2 353.3L217.3 356.5L220.0 357.5L218.8 354.3" fill="#000064"/>
<polygon points="205.7,346.6 208.2,353.3 214.4,355.8 211.8,348.7" fill="#00007f"/>
<path d="M206.2 347.2L207.3 350.1L210.0 351.1L208.9 348.1" fill="#000088"/>
<path d="M208.9 348.1L210.0 351.1L212.7 352.1L211.6 349.0" fill="#000081"/>
<path d="M207.3 350.1L208.4 353.0L211.1 354.1L210.0 351.1" fill="#00007d"/>
<path d="M210.0 351.1L211.1 354.1L213.8 355.2L212.7 352.1" fill="#000076"/>
<polygon points="199.5,344.7 201.9,350.9 208.2,353.3 205.7,346.6" fill="#00008f"/>
<polygon points="193.2,343.2 195.5,348.7 201.9,350.9 199.5,344.7" fill="#00009f"/>
<polygon points="186.9,342.2 189.2,346.9 195.5,348.7 193.2,343.2" fill="#0000ac"/>
<polygon points="180.6,342.0 182.8,345.8 189.2,346.9 186.9,342.2" fill="#0000b4"/>
<polygon points="174.3,342.5 176.4,345.6 182.8,345.8 180.6,342.0" fill="#0000b6"/>
<polygon points="168.1,343.9 170.0,346.2 176.4,345.6 174.3,342.5" fill="#0000ad"/>
<polygon points="161.9,346.2 163.7,347.8 170.0,346.2 168.1,343.9" fill="#00009d"/>
<polygon points="155.8,349.4 157.5,350.5 163.7,347.8 161.9,346.2" fill="#000089"/>
<polygon points="149.7,353.2 151.3,353.9 157.5,350.5 155.8,349.4" fill="#000075"/>
<polygon points="143.6,357.6 145.1,358.1 151.3,353.9 149.7,353.2" fill="#000065"/>
<polygon points="137.6,362.4 139.0,362.8 145.1,358.1 143.6,357.6" fill="#000058"/>
<polygon points="131.5,367.2 132.9,367.7 139.0,362.8 137.6,362.4" fill="#00004f"/>
<polygon points="386.8,303.6 390.0,304.1 394.5,305.3 391.3,305.0" fill="#000029"/>
<polygon points="382.2,302.7 385.3,303.7 390.0,304.1 386.8,303.6" fill="#00006d"/>
<polygon points="377.5,302.6 380.6,304.2 385.3,303.7 382.2,302.7" fill="#00008a"/>
<polygon points="372.8,303.3 375.8,305.6 380.6,304.2 377.5,302.6" fill="#0000a7"/>
<polygon points="368.0,305.0 371.0,308.0 375.8,305.6 372.8,303.3" fill="#0000bc"/>
<polygon points="363.2,307.4 366.1,311.2 371.0,308.0 368.0,305.0" fill="#0000c4"/>
<polygon points="358.3,310.6 361.2,315.2 366.1,311.2 363.2,307.4" fill="#0000c0"/>
<polygon points="255.2,363.4 257.8,367.8 263.3,366.7 260.8,362.8" fill="#00000c"/>
<polygon points="249.7,363.6 252.2,368.6 257.8,367.8 255.2,363.4" fill="#00000f"/>
<polygon points="244.0,363.4 246.5,369.0 252.2,368.6 249.7,363.6" fill="#000015"/>
<polygon points="238.3,362.8 240.8,368.9 246.5,369.0 244.0,363.4" fill="#00001e"/>
<polygon points="232.4,361.6 235.0,368.3 240.8,368.9 238.3,362.8" fill="#000028"/>
<polygon points="226.5,360.1 229.1,367.0 235.0,368.3 232.4,361.6" fill="#000035"/>
<path d="M227.0 360.6L228.1 363.6L230.8 364.2L229.6 361.3" fill="#00003d"/>
<path d="M229.6 361.3L230.8 364.2L233.4 364.9L232.2 361.9" fill="#000036"/>
<path d="M228.1 363.6L229.3 366.7L231.9 367.2L230.8 364.2" fill="#000032"/>
<path d="M230.8 364.2L231.9 367.2L234.5 367.8L233.4 364.9" fill="#00002c"/>
<polygon points="220.5,358.1 223.1,365.2 229.1,367.0 226.5,360.1" fill="#000044"/>
<path d="M221.0 358.6L222.1 361.7L224.8 362.6L223.7 359.5" fill="#00004c"/>
<path d="M223.7 359.5L224.8 362.6L227.4 363.4L226.3 360.3" fill="#000045"/>
<path d="M222.1 361.7L223.3 364.9L225.9 365.7L224.8 362.6" fill="#000041"/>
<path d="M224.8 362.6L225.9 365.7L228.6 366.5L227.4 363.4" fill="#00003a"/>
<polygon points="214.4,355.8 216.9,362.9 223.1,365.2 220.5,358.1" fill="#000055"/>
<path d="M214.9 356.3L216.0 359.4L218.7 360.5L217.6 357.3" fill="#00005d"/>
<path d="M217.6 357.3L218.7 360.5L221.4 361.5L220.3 358.3" fill="#000056"/>
<path d="M216.0 359.4L217.1 362.6L219.8 363.6L218.7 360.5" fill="#000053"/>
<path d="M218.7 360.5L219.8 363.6L222.5 364.6L221.4 361.5" fill="#00004b"/>
<polygon points="208.2,353.3 210.7,360.2 216.9,362.9 214.4,355.8" fill="#000066"/>
<path d="M208.7 353.9L209.8 356.9L212.5 358.0L211.4 354.9" fill="#00006f"/>
<path d="M211.4 354.9L212.5 358.0L215.3 359.1L214.2 356.0" fill="#000067"/>
<path d="M209.8 356.9L210.9 360.0L213.7 361.1L212.5 358.0" fill="#000065"/>
<path d="M212.5 358.0L213.7 361.1L216.4 362.3L215.3 359.1" fill="#00005d"/>
<polygon points="201.9,350.9 204.4,357.4 210.7,360.2 208.2,353.3" fill="#000078"/>
<path d="M202.4 351.4L203.5 354.3L206.3 355.4L205.2 352.5" fill="#000082"/>
<path d="M205.2 352.5L206.3 355.4L209.1 356.6L207.9 353.6" fill="#00007a"/>
<path d="M203.5 354.3L204.6 357.2L207.4 358.4L206.3 355.4" fill="#000078"/>
<path d="M206.3 355.4L207.4 358.4L210.2 359.6L209.1 356.6" fill="#00006f"/>
<polygon points="195.5,348.7 198.0,354.7 204.4,357.4 201.9,350.9" fill="#00008b"/>
<polygon points="189.2,346.9 191.5,352.2 198.0,354.7 195.5,348.7" fill="#00009b"/>
<polygon points="182.8,345.8 185.0,350.4 191.5,352.2 189.2,346.9" fill="#0000aa"/>
<polygon points="176.4,345.6 178.5,349.3 185.0,350.4 182.8,345.8" fill="#0000b3"/>
<polygon points="170.0,346.2 172.0,349.1 178.5,349.3 176.4,345.6" fill="#0000b4"/>
<polygon points="163.7,347.8 165.6,350.0 172.0,349.1 170.0,346.2" fill="#0000ab"/>
<polygon points="157.5,350.5 159.3,352.0 165.6,350.0 163.7,347.8" fill="#000099"/>
<polygon points="151.3,353.9 153.0,355.0 159.3,352.0 157.5,350.5" fill="#000085"/>
<polygon points="145.1,358.1 146.7,358.9 153.0,355.0 151.3,353.9" fill="#000072"/>
<polygon points="139.0,362.8 140.5,363.4 146.7,358.9 145.1,358.1" fill="#000063"/>
<polygon points="132.9,367.7 134.4,368.4 140.5,363.4 139.0,362.8" fill="#000057"/>
<polygon points="394.5,305.3 397.7,305.8 402.3,307.3 399.0,307.0" fill="#000028"/>
<polygon points="390.0,304.1 393.1,305.0 397.7,305.8 394.5,305.3" fill="#000065"/>
<polygon points="385.3,303.7 388.5,305.1 393.1,305.0 390.0,304.1" fill="#000081"/>
<polygon points="380.6,304.2 383.7,306.2 388.5,305.1 385.3,303.7" fill="#00009f"/>
<polygon points="375.8,305.6 378.9,308.4 383.7,306.2 380.6,304.2" fill="#0000b7"/>
<polygon points="371.0,308.0 374.0,311.5 378.9,308.4 375.8,305.6" fill="#0000c2"/>
<polygon points="366.1,311.2 369.1,315.5 374.0,311.5 371.0,308.0" fill="#0000c0"/>
<polygon points="361.2,315.2 364.1,320.1 369.1,315.5 366.1,311.2" fill="#0000b3"/>
<polygon points="356.3,319.7 359.2,325.2 364.1,320.1 361.2,315.2" fill="#0000a1"/>
<polygon points="252.2,368.6 254.6,371.9 260.2,370.3 257.8,367.8" fill="#000007"/>
<polygon points="246.5,369.0 249.0,373.1 254.6,371.9 252.2,368.6" fill="#000009"/>
<polygon points="240.8,368.9 243.3,373.8 249.0,373.1 246.5,369.0" fill="#00000e"/>
<polygon points="235.0,368.3 237.5,373.9 243.3,373.8 240.8,368.9" fill="#000015"/>
<polygon points="229.1,367.0 231.6,373.2 237.5,373.9 235.0,368.3" fill="#000020"/>
<polygon points="223.1,365.2 225.6,371.8 231.6,373.2 229.1,367.0" fill="#00002d"/>
<polygon points="216.9,362.9 219.5,369.7 225.6,371.8 223.1,365.2" fill="#00003d"/>
<path d="M217.5 363.4L218.6 366.4L221.3 367.4L220.2 364.4" fill="#000045"/>
<path d="M220.2 364.4L221.3 367.4L224.0 368.4L222.8 365.4" fill="#00003e"/>
<path d="M218.6 366.4L219.7 369.4L222.4 370.4L221.3 367.4" fill="#00003b"/>
<path d="M221.3 367.4L222.4 370.4L225.1 371.3L224.0 368.4" fill="#000034"/>
<polygon points="210.7,360.2 213.2,367.1 219.5,369.7 216.9,362.9" fill="#00004f"/>
<path d="M211.2 360.8L212.3 363.8L215.1 365.0L214.0 362.0" fill="#000058"/>
<path d="M214.0 362.0L215.1 365.0L217.8 366.1L216.7 363.1" fill="#00004f"/>
<path d="M212.3 363.8L213.5 366.8L216.2 368.0L215.1 365.0" fill="#00004e"/>
<path d="M215.1 365.0L216.2 368.0L219.0 369.2L217.8 366.1" fill="#000045"/>
<polygon points="204.4,357.4 206.9,364.1 213.2,367.1 210.7,360.2" fill="#000062"/>
<path d="M204.9 358.0L206.0 360.9L208.8 362.2L207.7 359.2" fill="#00006b"/>
<path d="M207.7 359.2L208.8 362.2L211.6 363.5L210.5 360.5" fill="#000062"/>
<path d="M206.0 360.9L207.1 363.9L209.9 365.2L208.8 362.2" fill="#000061"/>
<path d="M208.8 362.2L209.9 365.2L212.7 366.5L211.6 363.5" fill="#000058"/>
<polygon points="198.0,354.7 200.4,361.0 206.9,364.1 204.4,357.4" fill="#000075"/>
<path d="M198.5 355.2L199.6 358.0L202.4 359.3L201.3 356.4" fill="#00007e"/>
<path d="M201.3 356.4L202.4 359.3L205.2 360.6L204.1 357.6" fill="#000076"/>
<path d="M199.6 358.0L200.7 360.8L203.5 362.2L202.4 359.3" fill="#000075"/>
<path d="M202.4 359.3L203.5 362.2L206.3 363.5L205.2 360.6" fill="#00006c"/>
<polygon points="191.5,352.2 193.9,358.0 200.4,361.0 198.0,354.7" fill="#000088"/>
<polygon points="185.0,350.4 187.3,355.4 193.9,358.0 191.5,352.2" fill="#00009a"/>
<polygon points="178.5,349.3 180.7,353.6 187.3,355.4 185.0,350.4" fill="#0000a9"/>
<polygon points="172.0,349.1 174.1,352.6 180.7,353.6 178.5,349.3" fill="#0000b2"/>
<polygon points="165.6,350.0 167.6,352.8 174.1,352.6 172.0,349.1" fill="#0000b2"/>
<polygon points="159.3,352.0 161.1,354.1 167.6,352.8 165.6,350.0" fill="#0000a7"/>
<polygon points="153.0,355.0 154.7,356.5 161.1,354.1 159.3,352.0" fill="#000094"/>
<polygon points="146.7,358.9 148.4,360.0 154.7,356.5 153.0,355.0" fill="#000080"/>
<polygon points="140.5,363.4 142.1,364.3 148.4,360.0 146.7,358.9" fill="#00006e"/>
<polygon points="134.4,368.4 135.9,369.2 142.1,364.3 140.5,363.4" fill="#000060"/>
<polygon points="397.7,305.8 401.0,306.6 405.5,307.8 402.3,307.3" fill="#00002a"/>
<polygon points="393.1,305.0 396.4,306.3 401.0,306.6 397.7,305.8" fill="#000076"/>
<polygon points="388.5,305.1 391.7,307.0 396.4,306.3 393.1,305.0" fill="#000094"/>
<polygon points="383.7,306.2 386.9,308.7 391.7,307.0 388.5,305.1" fill="#0000b0"/>
<polygon points="378.9,308.4 382.0,311.6 386.9,308.7 383.7,306.2" fill="#0000bf"/>
<polygon points="374.0,311.5 377.1,315.4 382.0,311.6 378.9,308.4" fill="#0000c0"/>
<polygon points="369.1,315.5 372.1,320.1 377.1,315.4 374.0,311.5" fill="#0000b5"/>
<polygon points="364.1,320.1 367.1,325.3 372.1,320.1 369.1,315.5" fill="#0000a3"/>
<polygon points="359.2,325.2 362.1,330.8 367.1,325.3 364.1,320.1" fill="#00008c"/>
<polygon points="254.6,371.9 257.0,373.1 262.6,370.4 260.2,370.3" fill="#000007"/>
<polygon points="249.0,373.1 251.4,375.4 257.0,373.1 254.6,371.9" fill="#000006"/>
<polygon points="243.3,373.8 245.7,377.2 251.4,375.4 249.0,373.1" fill="#000007"/>
<polygon points="237.5,373.9 240.0,378.2 245.7,377.2 243.3,373.8" fill="#00000a"/>
<polygon points="231.6,373.2 234.1,378.4 240.0,378.2 237.5,373.9" fill="#000011"/>
<polygon points="225.6,371.8 228.1,377.7 234.1,378.4 231.6,373.2" fill="#00001b"/>
<polygon points="219.5,369.7 222.0,376.1 228.1,377.7 225.6,371.8" fill="#000029"/>
<polygon points="213.2,367.1 215.8,373.7 222.0,376.1 219.5,369.7" fill="#00003a"/>
<polygon points="206.9,364.1 209.4,370.8 215.8,373.7 213.2,367.1" fill="#00004c"/>
<path d="M207.4 364.7L208.5 367.6L211.3 368.9L210.2 366.0" fill="#000055"/>
<path d="M210.2 366.0L211.3 368.9L214.1 370.2L213.0 367.3" fill="#00004c"/>
<path d="M208.5 367.6L209.6 370.5L212.5 371.8L211.3 368.9" fill="#00004c"/>
<path d="M211.3 368.9L212.5 371.8L215.3 373.2L214.1 370.2" fill="#000043"/>
<polygon points="200.4,361.0 202.9,367.4 209.4,370.8 206.9,364.1" fill="#000060"/>
<path d="M201.0 361.6L202.1 364.4L204.9 365.8L203.8 362.9" fill="#000069"/>
<path d="M203.8 362.9L204.9 365.8L207.8 367.2L206.7 364.3" fill="#000060"/>
<path d="M202.1 364.4L203.2 367.2L206.0 368.7L204.9 365.8" fill="#000060"/>
<path d="M204.9 365.8L206.0 368.7L208.9 370.2L207.8 367.2" fill="#000057"/>
<polygon points="193.9,358.0 196.4,364.0 202.9,367.4 200.4,361.0" fill="#000074"/>
<polygon points="187.3,355.4 189.7,360.9 196.4,364.0 193.9,358.0" fill="#000088"/>
<polygon points="180.7,353.6 183.0,358.4 189.7,360.9 187.3,355.4" fill="#00009b"/>
<polygon points="174.1,352.6 176.3,356.7 183.0,358.4 180.7,353.6" fill="#0000aa"/>
<polygon points="167.6,352.8 169.7,356.0 176.3,356.7 174.1,352.6" fill="#0000b2"/>
<polygon points="161.1,354.1 163.1,356.6 169.7,356.0 167.6,352.8" fill="#0000af"/>
<polygon points="154.7,356.5 156.5,358.4 163.1,356.6 161.1,354.1" fill="#0000a1"/>
<polygon points="148.4,360.0 150.1,361.4 156.5,358.4 154.7,356.5" fill="#00008e"/>
<polygon points="142.1,364.3 143.7,365.4 150.1,361.4 148.4,360.0" fill="#00007a"/>
<polygon points="135.9,369.2 137.4,370.2 143.7,365.4 142.1,364.3" fill="#00006a"/>
<polygon points="405.5,307.8 408.9,308.5 413.4,310.1 410.0,309.6" fill="#000028"/>
<polygon points="401.0,306.6 404.3,307.7 408.9,308.5 405.5,307.8" fill="#00006a"/>
<polygon points="396.4,306.3 399.6,307.9 404.3,307.7 401.0,306.6" fill="#000087"/>
<polygon points="391.7,307.0 394.9,309.1 399.6,307.9 396.4,306.3" fill="#0000a5"/>
<polygon points="386.9,308.7 390.0,311.6 394.9,309.1 391.7,307.0" fill="#0000ba"/>
<polygon points="382.0,311.6 385.1,315.1 390.0,311.6 386.9,308.7" fill="#0000c0"/>
<polygon points="377.1,315.4 380.1,319.6 385.1,315.1 382.0,311.6" fill="#0000b8"/>
<polygon points="372.1,320.1 375.1,324.9 380.1,319.6 377.1,315.4" fill="#0000a7"/>
<polygon points="367.1,325.3 370.1,330.5 375.1,324.9 372.1,320.1" fill="#000090"/>
<path d="M367.6 325.3L368.9 327.6L371.1 325.2L369.8 323.0" fill="#00008f"/>
<path d="M369.8 323.0L371.1 325.2L373.3 322.8L372.0 320.7" fill="#00009a"/>
<path d="M368.9 327.6L370.2 329.9L372.4 327.4L371.1 325.2" fill="#000086"/>
<path d="M371.1 325.2L372.4 327.4L374.6 324.9L373.3 322.8" fill="#000092"/>
<polygon points="362.1,330.8 365.0,336.3 370.1,330.5 367.1,325.3" fill="#000077"/>
<polygon points="251.4,375.4 253.8,375.7 259.4,372.1 257.0,373.1" fill="#000009"/>
<polygon points="245.7,377.2 248.1,378.8 253.8,375.7 251.4,375.4" fill="#000007"/>
<polygon points="240.0,378.2 242.4,381.1 248.1,378.8 245.7,377.2" fill="#000006"/>
<polygon points="234.1,378.4 236.6,382.4 242.4,381.1 240.0,378.2" fill="#000008"/>
<polygon points="228.1,377.7 230.6,382.7 236.6,382.4 234.1,378.4" fill="#00000e"/>
<polygon points="222.0,376.1 224.5,381.8 230.6,382.7 228.1,377.7" fill="#000019"/>
<polygon points="215.8,373.7 218.3,379.9 224.5,381.8 222.0,376.1" fill="#000028"/>
<polygon points="209.4,370.8 211.9,377.1 218.3,379.9 215.8,373.7" fill="#000039"/>
<polygon points="202.9,367.4 205.4,373.8 211.9,377.1 209.4,370.8" fill="#00004d"/>
<polygon points="196.4,364.0 198.8,370.2 205.4,373.8 202.9,367.4" fill="#000061"/>
<polygon points="189.7,360.9 192.1,366.6 198.8,370.2 196.4,364.0" fill="#000076"/>
<polygon points="183.0,358.4 185.3,363.4 192.1,366.6 189.7,360.9" fill="#00008b"/>
<polygon points="176.3,356.7 178.6,361.0 185.3,363.4 183.0,358.4" fill="#00009d"/>
<polygon points="169.7,356.0 171.8,359.7 178.6,361.0 176.3,356.7" fill="#0000ac"/>
<polygon points="163.1,356.6 165.1,359.6 171.8,359.7 169.7,356.0" fill="#0000b1"/>
<polygon points="156.5,358.4 158.4,360.7 165.1,359.6 163.1,356.6" fill="#0000ab"/>
<polygon points="150.1,361.4 151.9,363.2 158.4,360.7 156.5,358.4" fill="#00009a"/>
<polygon points="143.7,365.4 145.4,366.9 151.9,363.2 150.1,361.4" fill="#000087"/>
<polygon points="137.4,370.2 139.0,371.4 145.4,366.9 143.7,365.4" fill="#000074"/>
<polygon points="408.9,308.5 412.2,309.6 416.8,310.9 413.4,310.1" fill="#000029"/>
<polygon points="404.3,307.7 407.6,309.1 412.2,309.6 408.9,308.5" fill="#000078"/>
<polygon points="399.6,307.9 402.9,309.8 407.6,309.1 404.3,307.7" fill="#000096"/>
<polygon points="394.9,309.1 398.1,311.6 402.9,309.8 399.6,307.9" fill="#0000b1"/>
<polygon points="390.0,311.6 393.2,314.7 398.1,311.6 394.9,309.1" fill="#0000be"/>
<polygon points="385.1,315.1 388.2,318.9 393.2,314.7 390.0,311.6" fill="#0000bb"/>
<polygon points="380.1,319.6 383.2,324.0 388.2,318.9 385.1,315.1" fill="#0000ac"/>
<polygon points="375.1,324.9 378.2,329.7 383.2,324.0 380.1,319.6" fill="#000097"/>
<path d="M375.6 324.9L376.9 327.0L379.2 324.6L377.8 322.5" fill="#000095"/>
<path d="M377.8 322.5L379.2 324.6L381.4 322.2L380.0 320.2" fill="#0000a0"/>
<path d="M376.9 327.0L378.3 329.1L380.5 326.6L379.2 324.6" fill="#00008e"/>
<path d="M379.2 324.6L380.5 326.6L382.7 324.1L381.4 322.2" fill="#000099"/>
<polygon points="370.1,330.5 373.1,335.7 378.2,329.7 375.1,324.9" fill="#00007d"/>
<path d="M370.6 330.5L371.9 332.8L374.1 330.2L372.8 328.0" fill="#00007c"/>
<path d="M372.8 328.0L374.1 330.2L376.3 327.7L375.0 325.5" fill="#000087"/>
<path d="M371.9 332.8L373.2 335.1L375.5 332.4L374.1 330.2" fill="#000073"/>
<path d="M374.1 330.2L375.5 332.4L377.7 329.8L376.3 327.7" fill="#00007f"/>
<polygon points="365.0,336.3 368.0,341.7 373.1,335.7 370.1,330.5" fill="#000063"/>
<path d="M365.5 336.3L366.8 338.6L369.1 336.1L367.7 333.8" fill="#000061"/>
<path d="M367.7 333.8L369.1 336.1L371.3 333.5L370.0 331.2" fill="#00006d"/>
<path d="M366.8 338.6L368.2 341.0L370.4 338.4L369.1 336.1" fill="#000058"/>
<path d="M369.1 336.1L370.4 338.4L372.6 335.8L371.3 333.5" fill="#000064"/>
<polygon points="248.1,378.8 250.5,378.7 256.1,374.1 253.8,375.7" fill="#00000b"/>
<polygon points="242.4,381.1 244.8,382.5 250.5,378.7 248.1,378.8" fill="#000009"/>
<polygon points="236.6,382.4 239.0,385.2 244.8,382.5 242.4,381.1" fill="#000007"/>
<polygon points="230.6,382.7 233.1,386.6 239.0,385.2 236.6,382.4" fill="#000008"/>
<polygon points="224.5,381.8 227.0,386.6 233.1,386.6 230.6,382.7" fill="#00000e"/>
<polygon points="218.3,379.9 220.8,385.4 227.0,386.6 224.5,381.8" fill="#00001a"/>
<polygon points="211.9,377.1 214.5,383.1 220.8,385.4 218.3,379.9" fill="#000029"/>
<polygon points="205.4,373.8 208.0,380.0 214.5,383.1 211.9,377.1" fill="#00003c"/>
<polygon points="198.8,370.2 201.3,376.2 208.0,380.0 205.4,373.8" fill="#000050"/>
<polygon points="192.1,366.6 194.6,372.4 201.3,376.2 198.8,370.2" fill="#000065"/>
<polygon points="185.3,363.4 187.7,368.7 194.6,372.4 192.1,366.6" fill="#00007b"/>
<polygon points="178.6,361.0 180.9,365.7 187.7,368.7 185.3,363.4" fill="#00008f"/>
<polygon points="171.8,359.7 174.0,363.7 180.9,365.7 178.6,361.0" fill="#0000a2"/>
<polygon points="165.1,359.6 167.1,362.9 174.0,363.7 171.8,359.7" fill="#0000ae"/>
<polygon points="158.4,360.7 160.4,363.4 167.1,362.9 165.1,359.6" fill="#0000af"/>
<polygon points="151.9,363.2 153.7,365.4 160.4,363.4 158.4,360.7" fill="#0000a4"/>
<polygon points="145.4,366.9 147.2,368.6 153.7,365.4 151.9,363.2" fill="#000092"/>
<polygon points="139.0,371.4 140.7,372.9 147.2,368.6 145.4,366.9" fill="#00007f"/>
<polygon points="412.2,309.6 415.6,310.8 420.2,311.9 416.8,310.9" fill="#00006a"/>
<polygon points="407.6,309.1 411.0,310.8 415.6,310.8 412.2,309.6" fill="#000086"/>
<polygon points="402.9,309.8 406.2,311.9 411.0,310.8 407.6,309.1" fill="#0000a4"/>
<polygon points="398.1,311.6 401.4,314.4 406.2,311.9 402.9,309.8" fill="#0000b8"/>
<polygon points="393.2,314.7 396.4,318.1 401.4,314.4 398.1,311.6" fill="#0000bd"/>
<polygon points="388.2,318.9 391.4,322.8 396.4,318.1 393.2,314.7" fill="#0000b3"/>
<polygon points="383.2,324.0 386.3,328.5 391.4,322.8 388.2,318.9" fill="#00009f"/>
<polygon points="378.2,329.7 381.3,334.6 386.3,328.5 383.2,324.0" fill="#000086"/>
<path d="M378.7 329.7L380.0 331.8L382.2 329.2L380.9 327.2" fill="#000084"/>
<path d="M380.9 327.2L382.2 329.2L384.5 326.6L383.1 324.6" fill="#000090"/>
<path d="M380.0 331.8L381.4 333.9L383.6 331.2L382.2 329.2" fill="#00007d"/>
<path d="M382.2 329.2L383.6 331.2L385.8 328.6L384.5 326.6" fill="#000089"/>
<polygon points="373.1,335.7 376.2,340.8 381.3,334.6 378.2,329.7" fill="#00006b"/>
<path d="M373.6 335.7L374.9 337.9L377.2 335.2L375.8 333.0" fill="#000069"/>
<path d="M375.8 333.0L377.2 335.2L379.4 332.5L378.0 330.4" fill="#000075"/>
<path d="M374.9 337.9L376.3 340.1L378.5 337.4L377.2 335.2" fill="#000061"/>
<path d="M377.2 335.2L378.5 337.4L380.8 334.6L379.4 332.5" fill="#00006d"/>
<polygon points="368.0,341.7 371.1,346.7 376.2,340.8 373.1,335.7" fill="#000050"/>
<path d="M368.5 341.6L369.9 343.8L372.1 341.2L370.8 339.0" fill="#00004e"/>
<path d="M370.8 339.0L372.1 341.2L374.3 338.6L373.0 336.4" fill="#00005a"/>
<path d="M369.9 343.8L371.2 346.0L373.4 343.4L372.1 341.2" fill="#000046"/>
<path d="M372.1 341.2L373.4 343.4L375.7 340.8L374.3 338.6" fill="#000052"/>
<polygon points="244.8,382.5 247.1,382.4 252.7,377.0 250.5,378.7" fill="#00000d"/>
<polygon points="239.0,385.2 241.3,386.6 247.1,382.4 244.8,382.5" fill="#000009"/>
<polygon points="233.1,386.6 235.5,389.4 241.3,386.6 239.0,385.2" fill="#000007"/>
<polygon points="227.0,386.6 229.5,390.6 235.5,389.4 233.1,386.6" fill="#000008"/>
<polygon points="220.8,385.4 223.3,390.3 229.5,390.6 227.0,386.6" fill="#000010"/>
<polygon points="214.5,383.1 217.0,388.6 223.3,390.3 220.8,385.4" fill="#00001c"/>
<polygon points="208.0,380.0 210.5,385.8 217.0,388.6 214.5,383.1" fill="#00002d"/>
<polygon points="201.3,376.2 203.8,382.1 210.5,385.8 208.0,380.0" fill="#000040"/>
<polygon points="194.6,372.4 197.0,378.1 203.8,382.1 201.3,376.2" fill="#000055"/>
<polygon points="187.7,368.7 190.1,374.1 197.0,378.1 194.6,372.4" fill="#00006b"/>
<polygon points="180.9,365.7 183.2,370.6 190.1,374.1 187.7,368.7" fill="#000081"/>
<polygon points="174.0,363.7 176.2,367.9 183.2,370.6 180.9,365.7" fill="#000096"/>
<polygon points="167.1,362.9 169.3,366.5 176.2,367.9 174.0,363.7" fill="#0000a7"/>
<polygon points="160.4,363.4 162.4,366.4 169.3,366.5 167.1,362.9" fill="#0000af"/>
<polygon points="153.7,365.4 155.6,367.8 162.4,366.4 160.4,363.4" fill="#0000ab"/>
<polygon points="147.2,368.6 149.0,370.6 155.6,367.8 153.7,365.4" fill="#00009c"/>
<polygon points="140.7,372.9 142.4,374.6 149.0,370.6 147.2,368.6" fill="#000089"/>
<polygon points="415.6,310.8 419.1,312.3 423.7,313.0 420.2,311.9" fill="#000075"/>
<polygon points="411.0,310.8 414.4,312.6 419.1,312.3 415.6,310.8" fill="#000092"/>
<polygon points="406.2,311.9 409.6,314.3 414.4,312.6 411.0,310.8" fill="#0000ad"/>
<polygon points="401.4,314.4 404.7,317.3 409.6,314.3 406.2,311.9" fill="#0000bb"/>
<polygon points="396.4,318.1 399.7,321.5 404.7,317.3 401.4,314.4" fill="#0000b8"/>
<polygon points="391.4,322.8 394.6,326.8 399.7,321.5 396.4,318.1" fill="#0000a8"/>
<polygon points="386.3,328.5 389.5,332.8 394.6,326.8 391.4,322.8" fill="#000091"/>
<polygon points="381.3,334.6 384.4,339.2 389.5,332.8 386.3,328.5" fill="#000077"/>
<path d="M381.7 334.5L383.1 336.5L385.4 333.8L384.0 331.8" fill="#000074"/>
<path d="M384.0 331.8L385.4 333.8L387.6 331.0L386.2 329.1" fill="#000080"/>
<path d="M383.1 336.5L384.5 338.6L386.7 335.8L385.4 333.8" fill="#00006d"/>
<path d="M385.4 333.8L386.7 335.8L389.0 333.0L387.6 331.0" fill="#000079"/>
<polygon points="376.2,340.8 379.3,345.5 384.4,339.2 381.3,334.6" fill="#00005b"/>
<path d="M376.7 340.7L378.0 342.7L380.3 340.0L378.9 337.9" fill="#000058"/>
<path d="M378.9 337.9L380.3 340.0L382.5 337.3L381.1 335.2" fill="#000064"/>
<path d="M378.0 342.7L379.4 344.8L381.6 342.1L380.3 340.0" fill="#000051"/>
<path d="M380.3 340.0L381.6 342.1L383.9 339.3L382.5 337.3" fill="#00005d"/>
<polygon points="371.1,346.7 374.2,351.3 379.3,345.5 376.2,340.8" fill="#000040"/>
<path d="M371.6 346.6L372.9 348.6L375.2 346.0L373.8 344.0" fill="#00003d"/>
<path d="M373.8 344.0L375.2 346.0L377.4 343.5L376.0 341.4" fill="#000049"/>
<path d="M372.9 348.6L374.3 350.6L376.5 348.1L375.2 346.0" fill="#000037"/>
<path d="M375.2 346.0L376.5 348.1L378.8 345.6L377.4 343.5" fill="#000042"/>
<polygon points="247.1,382.4 249.4,381.1 255.0,373.8 252.7,377.0" fill="#000011"/>
<polygon points="241.3,386.6 243.7,387.0 249.4,381.1 247.1,382.4" fill="#00000e"/>
<polygon points="235.5,389.4 237.9,391.3 243.7,387.0 241.3,386.6" fill="#000009"/>
<polygon points="229.5,390.6 231.9,393.8 237.9,391.3 235.5,389.4" fill="#000007"/>
<polygon points="223.3,390.3 225.8,394.5 231.9,393.8 229.5,390.6" fill="#000009"/>
<polygon points="217.0,388.6 219.5,393.6 225.8,394.5 223.3,390.3" fill="#000013"/>
<polygon points="210.5,385.8 213.0,391.2 219.5,393.6 217.0,388.6" fill="#000021"/>
<polygon points="203.8,382.1 206.3,387.7 213.0,391.2 210.5,385.8" fill="#000033"/>
<polygon points="197.0,378.1 199.5,383.7 206.3,387.7 203.8,382.1" fill="#000047"/>
<polygon points="190.1,374.1 192.6,379.4 199.5,383.7 197.0,378.1" fill="#00005d"/>
<polygon points="183.2,370.6 185.5,375.5 192.6,379.4 190.1,374.1" fill="#000073"/>
<polygon points="176.2,367.9 178.5,372.3 185.5,375.5 183.2,370.6" fill="#000089"/>
<polygon points="169.3,366.5 171.5,370.3 178.5,372.3 176.2,367.9" fill="#00009e"/>
<polygon points="162.4,366.4 164.5,369.6 171.5,370.3 169.3,366.5" fill="#0000ac"/>
<polygon points="155.6,367.8 157.6,370.5 164.5,369.6 162.4,366.4" fill="#0000ae"/>
<polygon points="149.0,370.6 150.8,372.9 157.6,370.5 155.6,367.8" fill="#0000a4"/>
<polygon points="142.4,374.6 144.2,376.6 150.8,372.9 149.0,370.6" fill="#000092"/>
<polygon points="419.1,312.3 422.6,313.9 427.2,314.4 423.7,313.0" fill="#00007f"/>
<polygon points="414.4,312.6 417.8,314.7 422.6,313.9 419.1,312.3" fill="#00009d"/>
<polygon points="409.6,314.3 413.0,316.8 417.8,314.7 414.4,312.6" fill="#0000b4"/>
<polygon points="404.7,317.3 408.0,320.3 413.0,316.8 409.6,314.3" fill="#0000bb"/>
<polygon points="399.7,321.5 403.0,325.0 408.0,320.3 404.7,317.3" fill="#0000b1"/>
<polygon points="394.6,326.8 397.8,330.7 403.0,325.0 399.7,321.5" fill="#00009d"/>
<polygon points="389.5,332.8 392.7,337.1 397.8,330.7 394.6,326.8" fill="#000084"/>
<path d="M390.0 332.7L391.4 334.6L393.7 331.9L392.2 330.1" fill="#000081"/>
<path d="M392.2 330.1L393.7 331.9L395.9 329.1L394.5 327.4" fill="#00008d"/>
<path d="M391.4 334.6L392.8 336.5L395.1 333.7L393.7 331.9" fill="#00007b"/>
<path d="M393.7 331.9L395.1 333.7L397.3 330.9L395.9 329.1" fill="#000087"/>
<polygon points="384.4,339.2 387.5,343.7 392.7,337.1 389.5,332.8" fill="#000068"/>
<path d="M384.9 339.1L386.3 341.0L388.5 338.2L387.1 336.3" fill="#000065"/>
<path d="M387.1 336.3L388.5 338.2L390.8 335.3L389.4 333.5" fill="#000071"/>
<path d="M386.3 341.0L387.7 343.0L389.9 340.1L388.5 338.2" fill="#00005f"/>
<path d="M388.5 338.2L389.9 340.1L392.2 337.2L390.8 335.3" fill="#00006b"/>
<polygon points="379.3,345.5 382.4,349.9 387.5,343.7 384.4,339.2" fill="#00004c"/>
<path d="M379.8 345.4L381.1 347.3L383.4 344.6L382.0 342.6" fill="#000049"/>
<path d="M382.0 342.6L383.4 344.6L385.6 341.8L384.3 339.9" fill="#000055"/>
<path d="M381.1 347.3L382.5 349.3L384.8 346.5L383.4 344.6" fill="#000043"/>
<path d="M383.4 344.6L384.8 346.5L387.0 343.8L385.6 341.8" fill="#00004f"/>
<polygon points="374.2,351.3 377.3,355.5 382.4,349.9 379.3,345.5" fill="#000033"/>
<polygon points="369.1,356.1 372.2,359.8 377.3,355.5 374.2,351.3" fill="#00001d"/>
<polygon points="249.4,381.1 251.7,378.8 257.3,369.6 255.0,373.8" fill="#000016"/>
<polygon points="243.7,387.0 246.0,386.5 251.7,378.8 249.4,381.1" fill="#000013"/>
<polygon points="237.9,391.3 240.2,392.4 246.0,386.5 243.7,387.0" fill="#00000e"/>
<polygon points="231.9,393.8 234.3,396.2 240.2,392.4 237.9,391.3" fill="#000008"/>
<polygon points="225.8,394.5 228.2,398.1 234.3,396.2 231.9,393.8" fill="#000007"/>
<polygon points="219.5,393.6 221.9,397.9 228.2,398.1 225.8,394.5" fill="#00000c"/>
<polygon points="213.0,391.2 215.5,396.1 221.9,397.9 219.5,393.6" fill="#000018"/>
<polygon points="206.3,387.7 208.8,393.0 215.5,396.1 213.0,391.2" fill="#000028"/>
<polygon points="199.5,383.7 202.0,389.0 208.8,393.0 206.3,387.7" fill="#00003c"/>
<polygon points="192.6,379.4 195.0,384.6 202.0,389.0 199.5,383.7" fill="#000050"/>
<polygon points="185.5,375.5 187.9,380.4 195.0,384.6 192.6,379.4" fill="#000067"/>
<polygon points="178.5,372.3 180.8,376.7 187.9,380.4 185.5,375.5" fill="#00007d"/>
<polygon points="171.5,370.3 173.7,374.2 180.8,376.7 178.5,372.3" fill="#000094"/>
<polygon points="164.5,369.6 166.6,373.0 173.7,374.2 171.5,370.3" fill="#0000a6"/>
<polygon points="157.6,370.5 159.6,373.4 166.6,373.0 164.5,369.6" fill="#0000af"/>
<polygon points="150.8,372.9 152.8,375.4 159.6,373.4 157.6,370.5" fill="#0000aa"/>
<polygon points="144.2,376.6 146.0,378.8 152.8,375.4 150.8,372.9" fill="#00009a"/>
<polygon points="422.6,313.9 426.1,315.7 430.7,315.9 427.2,314.4" fill="#000089"/>
<polygon points="417.8,314.7 421.3,316.8 426.1,315.7 422.6,313.9" fill="#0000a5"/>
<polygon points="413.0,316.8 416.4,319.4 421.3,316.8 417.8,314.7" fill="#0000b7"/>
<polygon points="408.0,320.3 411.4,323.3 416.4,319.4 413.0,316.8" fill="#0000b7"/>
<polygon points="403.0,325.0 406.3,328.5 411.4,323.3 408.0,320.3" fill="#0000a9"/>
<polygon points="397.8,330.7 401.1,334.6 406.3,328.5 403.0,325.0" fill="#000093"/>
<polygon points="392.7,337.1 395.9,341.2 401.1,334.6 397.8,330.7" fill="#000078"/>
<polygon points="387.5,343.7 390.8,347.8 395.9,341.2 392.7,337.1" fill="#00005b"/>
<path d="M388.0 343.5L389.5 345.3L391.7 342.4L390.3 340.6" fill="#000058"/>
<path d="M390.3 340.6L391.7 342.4L394.0 339.5L392.6 337.7" fill="#000064"/>
<path d="M389.5 345.3L390.9 347.2L393.2 344.3L391.7 342.4" fill="#000052"/>
<path d="M391.7 342.4L393.2 344.3L395.4 341.3L394.0 339.5" fill="#00005f"/>
<polygon points="382.4,349.9 385.6,354.0 390.8,347.8 387.5,343.7" fill="#000040"/>
<polygon points="377.3,355.5 380.5,359.3 385.6,354.0 382.4,349.9" fill="#000028"/>
<polygon points="372.2,359.8 375.4,363.1 380.5,359.3 377.3,355.5" fill="#000015"/>
<polygon points="251.7,378.8 254.0,375.9 259.6,364.8 257.3,369.6" fill="#00001e"/>
<polygon points="246.0,386.5 248.4,385.4 254.0,375.9 251.7,378.8" fill="#00001a"/>
<polygon points="240.2,392.4 242.6,392.9 248.4,385.4 246.0,386.5" fill="#000014"/>
<polygon points="234.3,396.2 236.7,398.1 242.6,392.9 240.2,392.4" fill="#00000c"/>
<polygon points="228.2,398.1 230.7,401.1 236.7,398.1 234.3,396.2" fill="#000007"/>
<polygon points="221.9,397.9 224.4,401.9 230.7,401.1 228.2,398.1" fill="#000008"/>
<polygon points="215.5,396.1 218.0,400.7 224.4,401.9 221.9,397.9" fill="#000011"/>
<polygon points="208.8,393.0 211.3,397.9 218.0,400.7 215.5,396.1" fill="#000020"/>
<polygon points="202.0,389.0 204.4,394.1 211.3,397.9 208.8,393.0" fill="#000032"/>
<polygon points="195.0,384.6 197.4,389.6 204.4,394.1 202.0,389.0" fill="#000046"/>
<polygon points="187.9,380.4 190.3,385.1 197.4,389.6 195.0,384.6" fill="#00005b"/>
<polygon points="180.8,376.7 183.1,381.2 190.3,385.1 187.9,380.4" fill="#000072"/>
<polygon points="173.7,374.2 175.9,378.2 183.1,381.2 180.8,376.7" fill="#000089"/>
<polygon points="166.6,373.0 168.8,376.6 175.9,378.2 173.7,374.2" fill="#00009f"/>
<polygon points="159.6,373.4 161.7,376.5 168.8,376.6 166.6,373.0" fill="#0000ac"/>
<polygon points="152.8,375.4 154.7,378.1 161.7,376.5 159.6,373.4" fill="#0000ad"/>
<polygon points="146.0,378.8 147.9,381.2 154.7,378.1 152.8,375.4" fill="#0000a1"/>
<polygon points="426.1,315.7 429.6,317.6 434.3,317.6 430.7,315.9" fill="#000091"/>
<polygon points="421.3,316.8 424.8,319.1 429.6,317.6 426.1,315.7" fill="#0000ab"/>
<polygon points="416.4,319.4 419.9,322.0 424.8,319.1 421.3,316.8" fill="#0000b8"/>
<polygon points="411.4,323.3 414.8,326.3 419.9,322.0 416.4,319.4" fill="#0000b3"/>
<polygon points="406.3,328.5 409.7,331.8 414.8,326.3 411.4,323.3" fill="#0000a1"/>
<polygon points="401.1,334.6 404.5,338.2 409.7,331.8 406.3,328.5" fill="#000088"/>
<polygon points="395.9,341.2 399.2,345.0 404.5,338.2 401.1,334.6" fill="#00006d"/>
<polygon points="390.8,347.8 394.0,351.7 399.2,345.0 395.9,341.2" fill="#000051"/>
<polygon points="385.6,354.0 388.8,357.8 394.0,351.7 390.8,347.8" fill="#000036"/>
<polygon points="380.5,359.3 383.7,362.7 388.8,357.8 385.6,354.0" fill="#00001f"/>
<polygon points="375.4,363.1 378.6,366.0 383.7,362.7 380.5,359.3" fill="#00000f"/>
<polygon points="259.6,364.8 262.0,360.0 267.6,345.9 265.2,352.7" fill="#00002d"/>
<polygon points="254.0,375.9 256.4,372.9 262.0,360.0 259.6,364.8" fill="#000029"/>
<polygon points="248.4,385.4 250.8,384.1 256.4,372.9 254.0,375.9" fill="#000023"/>
<polygon points="242.6,392.9 245.0,393.1 250.8,384.1 248.4,385.4" fill="#00001b"/>
<polygon points="236.7,398.1 239.2,399.7 245.0,393.1 242.6,392.9" fill="#000011"/>
<polygon points="230.7,401.1 233.1,403.8 239.2,399.7 236.7,398.1" fill="#000009"/>
<polygon points="224.4,401.9 226.9,405.4 233.1,403.8 230.7,401.1" fill="#000007"/>
<polygon points="218.0,400.7 220.4,404.9 226.9,405.4 224.4,401.9" fill="#00000d"/>
<polygon points="211.3,397.9 213.8,402.5 220.4,404.9 218.0,400.7" fill="#000019"/>
<polygon points="204.4,394.1 206.9,398.8 213.8,402.5 211.3,397.9" fill="#00002a"/>
<polygon points="197.4,389.6 199.9,394.4 206.9,398.8 204.4,394.1" fill="#00003d"/>
<polygon points="190.3,385.1 192.7,389.7 199.9,394.4 197.4,389.6" fill="#000052"/>
<polygon points="183.1,381.2 185.5,385.5 192.7,389.7 190.3,385.1" fill="#000068"/>
<polygon points="175.9,378.2 178.2,382.1 185.5,385.5 183.1,381.2" fill="#000080"/>
<polygon points="168.8,376.6 171.0,380.1 178.2,382.1 175.9,378.2" fill="#000097"/>
<polygon points="161.7,376.5 163.8,379.7 171.0,380.1 168.8,376.6" fill="#0000a9"/>
<polygon points="154.7,378.1 156.8,381.0 163.8,379.7 161.7,376.5" fill="#0000af"/>
<polygon points="147.9,381.2 149.8,383.8 156.8,381.0 154.7,378.1" fill="#0000a6"/>
<polygon points="429.6,317.6 433.2,319.7 438.0,319.4 434.3,317.6" fill="#000097"/>
<polygon points="424.8,319.1 428.4,321.4 433.2,319.7 429.6,317.6" fill="#0000af"/>
<polygon points="419.9,322.0 423.4,324.6 428.4,321.4 424.8,319.1" fill="#0000b7"/>
<polygon points="414.8,326.3 418.3,329.2 423.4,324.6 419.9,322.0" fill="#0000ae"/>
<polygon points="409.7,331.8 413.1,335.0 418.3,329.2 414.8,326.3" fill="#000099"/>
<polygon points="404.5,338.2 407.9,341.6 413.1,335.0 409.7,331.8" fill="#000080"/>
<polygon points="399.2,345.0 402.6,348.6 407.9,341.6 404.5,338.2" fill="#000063"/>
<polygon points="394.0,351.7 397.4,355.3 402.6,348.6 399.2,345.0" fill="#000048"/>
<polygon points="388.8,357.8 392.1,361.3 397.4,355.3 394.0,351.7" fill="#00002e"/>
<polygon points="383.7,362.7 387.0,365.9 392.1,361.3 388.8,357.8" fill="#000019"/>
<polygon points="378.6,366.0 381.9,368.7 387.0,365.9 383.7,362.7" fill="#00000b"/>
<polygon points="267.6,345.9 270.1,340.0 275.8,323.8 273.2,331.5" fill="#0f002a"/>
<polygon points="262.0,360.0 264.5,355.7 270.1,340.0 267.6,345.9" fill="#00003f"/>
<polygon points="256.4,372.9 258.9,370.3 264.5,355.7 262.0,360.0" fill="#000039"/>
<polygon points="250.8,384.1 253.2,383.0 258.9,370.3 256.4,372.9" fill="#00002f"/>
<polygon points="245.0,393.1 247.5,393.4 253.2,383.0 250.8,384.1" fill="#000023"/>
<polygon points="239.2,399.7 241.6,401.2 247.5,393.4 245.0,393.1" fill="#000017"/>
<polygon points="233.1,403.8 235.6,406.2 241.6,401.2 239.2,399.7" fill="#00000c"/>
<polygon points="226.9,405.4 229.4,408.7 235.6,406.2 233.1,403.8" fill="#000007"/>
<polygon points="220.4,404.9 222.9,408.7 229.4,408.7 226.9,405.4" fill="#00000a"/>
<polygon points="213.8,402.5 216.3,406.7 222.9,408.7 220.4,404.9" fill="#000014"/>
<polygon points="206.9,398.8 209.4,403.3 216.3,406.7 213.8,402.5" fill="#000023"/>
<polygon points="199.9,394.4 202.3,398.8 209.4,403.3 206.9,398.8" fill="#000035"/>
<polygon points="192.7,389.7 195.1,394.1 202.3,398.8 199.9,394.4" fill="#00004a"/>
<polygon points="185.5,385.5 187.8,389.6 195.1,394.1 192.7,389.7" fill="#000060"/>
<polygon points="178.2,382.1 180.5,386.0 187.8,389.6 185.5,385.5" fill="#000077"/>
<polygon points="171.0,380.1 173.2,383.7 180.5,386.0 178.2,382.1" fill="#00008f"/>
<polygon points="163.8,379.7 166.0,383.0 173.2,383.7 171.0,380.1" fill="#0000a4"/>
<polygon points="156.8,381.0 158.8,384.0 166.0,383.0 163.8,379.7" fill="#0000af"/>
<polygon points="149.8,383.8 151.8,386.6 158.8,384.0 156.8,381.0" fill="#0000aa"/>
<polygon points="433.2,319.7 436.9,321.8 441.7,321.3 438.0,319.4" fill="#00009c"/>
<polygon points="428.4,321.4 432.0,323.7 436.9,321.8 433.2,319.7" fill="#0000b1"/>
<polygon points="423.4,324.6 427.0,327.1 432.0,323.7 428.4,321.4" fill="#0000b5"/>
<polygon points="418.3,329.2 421.8,332.0 427.0,327.1 423.4,324.6" fill="#0000a9"/>
<polygon points="413.1,335.0 416.6,338.0 421.8,332.0 418.3,329.2" fill="#000093"/>
<polygon points="407.9,341.6 411.3,344.8 416.6,338.0 413.1,335.0" fill="#000078"/>
<polygon points="402.6,348.6 406.0,351.9 411.3,344.8 407.9,341.6" fill="#00005c"/>
<polygon points="397.4,355.3 400.7,358.6 406.0,351.9 402.6,348.6" fill="#000041"/>
<polygon points="392.1,361.3 395.5,364.5 400.7,358.6 397.4,355.3" fill="#000028"/>
<polygon points="387.0,365.9 390.3,368.8 395.5,364.5 392.1,361.3" fill="#000015"/>
<polygon points="381.9,368.7 385.2,371.2 390.3,368.8 387.0,365.9" fill="#000009"/>
<polygon points="376.8,369.3 380.1,371.2 385.2,371.2 381.9,368.7" fill="#000007"/>
<polygon points="275.8,323.8 278.4,317.7 284.3,300.7 281.5,308.1" fill="#290011"/>
<polygon points="270.1,340.0 272.7,335.4 278.4,317.7 275.8,323.8" fill="#1d0028"/>
<polygon points="264.5,355.7 267.0,352.6 272.7,335.4 270.1,340.0" fill="#0a0045"/>
<polygon points="258.9,370.3 261.4,368.5 267.0,352.6 264.5,355.7" fill="#00004c"/>
<polygon points="253.2,383.0 255.7,382.5 261.4,368.5 258.9,370.3" fill="#00003d"/>
<polygon points="247.5,393.4 250.0,394.0 255.7,382.5 253.2,383.0" fill="#00002c"/>
<polygon points="241.6,401.2 244.1,402.8 250.0,394.0 247.5,393.4" fill="#00001d"/>
<polygon points="235.6,406.2 238.1,408.7 244.1,402.8 241.6,401.2" fill="#000010"/>
<polygon points="229.4,408.7 231.9,411.8 238.1,408.7 235.6,406.2" fill="#000008"/>
<polygon points="222.9,408.7 225.5,412.3 231.9,411.8 229.4,408.7" fill="#000008"/>
<polygon points="216.3,406.7 218.8,410.7 225.5,412.3 222.9,408.7" fill="#000011"/>
<polygon points="209.4,403.3 211.9,407.4 218.8,410.7 216.3,406.7" fill="#00001f"/>
<polygon points="202.3,398.8 204.8,403.0 211.9,407.4 209.4,403.3" fill="#000030"/>
<polygon points="195.1,394.1 197.6,398.2 204.8,403.0 202.3,398.8" fill="#000043"/>
<polygon points="187.8,389.6 190.2,393.6 197.6,398.2 195.1,394.1" fill="#000058"/>
<polygon points="180.5,386.0 182.8,389.8 190.2,393.6 187.8,389.6" fill="#000070"/>
<polygon points="173.2,383.7 175.5,387.2 182.8,389.8 180.5,386.0" fill="#000089"/>
<polygon points="166.0,383.0 168.1,386.3 175.5,387.2 173.2,383.7" fill="#0000a0"/>
<polygon points="158.8,384.0 160.9,387.0 168.1,386.3 166.0,383.0" fill="#0000ae"/>
<polygon points="151.8,386.6 153.8,389.5 160.9,387.0 158.8,384.0" fill="#0000ad"/>
<polygon points="436.9,321.8 440.6,323.9 445.4,323.3 441.7,321.3" fill="#0000a0"/>
<polygon points="432.0,323.7 435.7,326.0 440.6,323.9 436.9,321.8" fill="#0000b2"/>
<polygon points="427.0,327.1 430.6,329.6 435.7,326.0 432.0,323.7" fill="#0000b2"/>
<polygon points="421.8,332.0 425.4,334.7 430.6,329.6 427.0,327.1" fill="#0000a4"/>
<polygon points="416.6,338.0 420.1,340.9 425.4,334.7 421.8,332.0" fill="#00008d"/>
<polygon points="411.3,344.8 414.8,347.8 420.1,340.9 416.6,338.0" fill="#000072"/>
<polygon points="406.0,351.9 409.5,354.9 414.8,347.8 411.3,344.8" fill="#000056"/>
<polygon points="400.7,358.6 404.2,361.6 409.5,354.9 406.0,351.9" fill="#00003b"/>
<polygon points="395.5,364.5 398.9,367.4 404.2,361.6 400.7,358.6" fill="#000024"/>
<polygon points="390.3,368.8 393.7,371.6 398.9,367.4 395.5,364.5" fill="#000012"/>
<polygon points="385.2,371.2 388.6,373.7 393.7,371.6 390.3,368.8" fill="#000008"/>
<polygon points="380.1,371.2 383.5,373.3 388.6,373.7 385.2,371.2" fill="#000008"/>
<polygon points="290.2,285.3 293.2,279.7 299.3,266.1 296.3,272.4" fill="#3f1800"/>
<polygon points="284.3,300.7 287.2,296.0 293.2,279.7 290.2,285.3" fill="#4a0a00"/>
<polygon points="278.4,317.7 281.3,314.1 287.2,296.0 284.3,300.7" fill="#47000c"/>
<path d="M279.0 316.5L280.2 314.9L282.8 307.2L281.5 309.0" fill="#3c0012"/>
<path d="M281.5 309.0L282.8 307.2L285.4 299.4L284.1 301.5" fill="#430007"/>
<path d="M280.2 314.9L281.4 313.2L284.0 305.3L282.8 307.2" fill="#4a0010"/>
<path d="M282.8 307.2L284.0 305.3L286.6 297.4L285.4 299.4" fill="#530004"/>
<polygon points="272.7,335.4 275.5,332.7 281.3,314.1 278.4,317.7" fill="#320029"/>
<path d="M273.2 334.1L274.4 333.0L277.0 325.0L275.7 326.4" fill="#28002f"/>
<path d="M275.7 326.4L277.0 325.0L279.5 317.0L278.3 318.6" fill="#320021"/>
<path d="M274.4 333.0L275.7 331.8L278.2 323.6L277.0 325.0" fill="#310030"/>
<path d="M277.0 325.0L278.2 323.6L280.7 315.4L279.5 317.0" fill="#3d0021"/>
<polygon points="267.0,352.6 269.8,351.0 275.5,332.7 272.7,335.4" fill="#17004b"/>
<path d="M267.5 351.4L268.7 350.7L271.2 343.0L270.0 343.9" fill="#0e0051"/>
<path d="M270.0 343.9L271.2 343.0L273.7 335.1L272.5 336.2" fill="#1a0041"/>
<path d="M268.7 350.7L269.9 350.0L272.4 342.0L271.2 343.0" fill="#140054"/>
<path d="M271.2 343.0L272.4 342.0L275.0 334.0L273.7 335.1" fill="#210044"/>
<polygon points="261.4,368.5 264.1,368.0 269.8,351.0 267.0,352.6" fill="#000063"/>
<path d="M261.9 367.5L263.1 367.3L265.6 360.0L264.4 360.5" fill="#000059"/>
<path d="M264.4 360.5L265.6 360.0L268.1 352.8L266.9 353.4" fill="#000063"/>
<path d="M263.1 367.3L264.2 367.0L266.7 359.6L265.6 360.0" fill="#000063"/>
<path d="M265.6 360.0L266.7 359.6L269.2 352.1L268.1 352.8" fill="#02006a"/>
<polygon points="255.7,382.5 258.4,382.9 264.1,368.0 261.4,368.5" fill="#00004c"/>
<polygon points="250.0,394.0 252.6,395.3 258.4,382.9 255.7,382.5" fill="#000036"/>
<polygon points="244.1,402.8 246.7,404.8 252.6,395.3 250.0,394.0" fill="#000023"/>
<polygon points="238.1,408.7 240.7,411.3 246.7,404.8 244.1,402.8" fill="#000013"/>
<polygon points="231.9,411.8 234.5,414.9 240.7,411.3 238.1,408.7" fill="#000009"/>
<polygon points="225.5,412.3 228.0,415.8 234.5,414.9 231.9,411.8" fill="#000007"/>
<polygon points="218.8,410.7 221.3,414.4 228.0,415.8 225.5,412.3" fill="#00000f"/>
<polygon points="211.9,407.4 214.4,411.2 221.3,414.4 218.8,410.7" fill="#00001b"/>
<polygon points="204.8,403.0 207.3,406.9 214.4,411.2 211.9,407.4" fill="#00002b"/>
<polygon points="197.6,398.2 200.0,402.1 207.3,406.9 204.8,403.0" fill="#00003e"/>
<polygon points="190.2,393.6 192.6,397.4 200.0,402.1 197.6,398.2" fill="#000052"/>
<polygon points="182.8,389.8 185.2,393.4 192.6,397.4 190.2,393.6" fill="#00006a"/>
<polygon points="175.5,387.2 177.7,390.7 185.2,393.4 182.8,389.8" fill="#000083"/>
<polygon points="168.1,386.3 170.3,389.6 177.7,390.7 175.5,387.2" fill="#00009b"/>
<polygon points="160.9,387.0 163.1,390.2 170.3,389.6 168.1,386.3" fill="#0000ac"/>
<polygon points="153.8,389.5 155.9,392.6 163.1,390.2 160.9,387.0" fill="#0000af"/>
<polygon points="440.6,323.9 444.4,326.1 449.2,325.4 445.4,323.3" fill="#0000a2"/>
<polygon points="435.7,326.0 439.4,328.2 444.4,326.1 440.6,323.9" fill="#0000b2"/>
<polygon points="430.6,329.6 434.3,332.0 439.4,328.2 435.7,326.0" fill="#0000b0"/>
<polygon points="425.4,334.7 429.1,337.1 434.3,332.0 430.6,329.6" fill="#0000a0"/>
<polygon points="420.1,340.9 423.8,343.4 429.1,337.1 425.4,334.7" fill="#000088"/>
<polygon points="414.8,347.8 418.4,350.4 423.8,343.4 420.1,340.9" fill="#00006d"/>
<polygon points="409.5,354.9 413.0,357.6 418.4,350.4 414.8,347.8" fill="#000051"/>
<polygon points="404.2,361.6 407.7,364.4 413.0,357.6 409.5,354.9" fill="#000038"/>
<polygon points="398.9,367.4 402.4,370.1 407.7,364.4 404.2,361.6" fill="#000021"/>
<polygon points="393.7,371.6 397.2,374.2 402.4,370.1 398.9,367.4" fill="#000010"/>
<polygon points="388.6,373.7 392.0,376.2 397.2,374.2 393.7,371.6" fill="#000007"/>
<polygon points="383.5,373.3 387.0,375.6 392.0,376.2 388.6,373.7" fill="#000008"/>
<polygon points="305.5,256.2 308.8,253.5 315.1,247.7 311.8,250.5" fill="#604e00"/>
<polygon points="299.3,266.1 302.5,263.8 308.8,253.5 305.5,256.2" fill="#694900"/>
<polygon points="293.2,279.7 296.3,277.8 302.5,263.8 299.3,266.1" fill="#6d3600"/>
<path d="M293.7 278.8L295.1 277.9L297.8 271.9L296.4 272.8" fill="#632c00"/>
<path d="M296.4 272.8L297.8 271.9L300.5 265.8L299.1 266.8" fill="#603400"/>
<path d="M295.1 277.9L296.5 277.1L299.2 270.9L297.8 271.9" fill="#773900"/>
<path d="M297.8 271.9L299.2 270.9L301.9 264.8L300.5 265.8" fill="#784500"/>
<polygon points="287.2,296.0 290.2,294.7 296.3,277.8 293.2,279.7" fill="#6f1b00"/>
<path d="M287.7 295.0L289.0 294.4L291.7 287.1L290.3 287.8" fill="#671200"/>
<path d="M290.3 287.8L291.7 287.1L294.4 279.8L293.0 280.6" fill="#651e00"/>
<path d="M289.0 294.4L290.4 293.7L293.0 286.4L291.7 287.1" fill="#771900"/>
<path d="M291.7 287.1L293.0 286.4L295.7 278.9L294.4 279.8" fill="#772800"/>
<polygon points="281.3,314.1 284.2,313.3 290.2,294.7 287.2,296.0" fill="#6b0006"/>
<path d="M281.8 313.0L283.1 312.6L285.7 304.6L284.4 305.0" fill="#5d000e"/>
<path d="M284.4 305.0L285.7 304.6L288.3 296.5L287.0 297.0" fill="#690100"/>
<path d="M283.1 312.6L284.4 312.2L287.0 304.1L285.7 304.6" fill="#6b000c"/>
<path d="M285.7 304.6L287.0 304.1L289.7 295.9L288.3 296.5" fill="#770400"/>
<polygon points="275.5,332.7 278.4,332.6 284.2,313.3 281.3,314.1" fill="#48002b"/>
<path d="M276.0 331.6L277.3 331.5L279.8 323.2L278.5 323.4" fill="#3d0032"/>
<path d="M278.5 323.4L279.8 323.2L282.4 314.8L281.1 315.2" fill="#4b0021"/>
<path d="M277.3 331.5L278.5 331.5L281.1 323.0L279.8 323.2" fill="#460034"/>
<path d="M279.8 323.2L281.1 323.0L283.7 314.5L282.4 314.8" fill="#560022"/>
<polygon points="269.8,351.0 272.6,351.5 278.4,332.6 275.5,332.7" fill="#240053"/>
<path d="M270.3 349.9L271.5 350.1L274.0 342.0L272.8 341.9" fill="#1a0059"/>
<path d="M272.8 341.9L274.0 342.0L276.6 333.8L275.3 333.8" fill="#290047"/>
<path d="M271.5 350.1L272.8 350.3L275.3 342.1L274.0 342.0" fill="#1e005e"/>
<path d="M274.0 342.0L275.3 342.1L277.8 333.7L276.6 333.8" fill="#30004b"/>
<polygon points="264.1,368.0 266.9,369.0 272.6,351.5 269.8,351.0" fill="#00007b"/>
<path d="M264.6 367.0L265.8 367.5L268.3 359.9L267.1 359.6" fill="#00006f"/>
<path d="M267.1 359.6L268.3 359.9L270.8 352.3L269.6 352.1" fill="#060070"/>
<path d="M265.8 367.5L267.0 367.9L269.5 360.2L268.3 359.9" fill="#000078"/>
<path d="M268.3 359.9L269.5 360.2L272.1 352.5L270.8 352.3" fill="#090076"/>
<polygon points="258.4,382.9 261.1,384.5 266.9,369.0 264.1,368.0" fill="#00005c"/>
<path d="M258.9 382.1L260.1 382.8L262.6 376.1L261.4 375.5" fill="#000052"/>
<path d="M261.4 375.5L262.6 376.1L265.1 369.4L263.9 368.9" fill="#00005e"/>
<path d="M260.1 382.8L261.3 383.5L263.8 376.7L262.6 376.1" fill="#000058"/>
<path d="M262.6 376.1L263.8 376.7L266.3 369.9L265.1 369.4" fill="#000066"/>
<polygon points="252.6,395.3 255.3,397.4 261.1,384.5 258.4,382.9" fill="#000040"/>
<polygon points="246.7,404.8 249.4,407.3 255.3,397.4 252.6,395.3" fill="#000029"/>
<polygon points="240.7,411.3 243.3,414.2 249.4,407.3 246.7,404.8" fill="#000016"/>
<polygon points="234.5,414.9 237.0,418.0 243.3,414.2 240.7,411.3" fill="#00000a"/>
<polygon points="228.0,415.8 230.6,419.1 237.0,418.0 234.5,414.9" fill="#000007"/>
<polygon points="221.3,414.4 223.8,417.9 230.6,419.1 228.0,415.8" fill="#00000d"/>
<polygon points="214.4,411.2 216.9,414.8 223.8,417.9 221.3,414.4" fill="#000019"/>
<polygon points="207.3,406.9 209.8,410.5 216.9,414.8 214.4,411.2" fill="#000028"/>
<polygon points="200.0,402.1 202.4,405.6 209.8,410.5 207.3,406.9" fill="#00003a"/>
<polygon points="192.6,397.4 195.0,400.9 202.4,405.6 200.0,402.1" fill="#00004e"/>
<polygon points="185.2,393.4 187.5,396.8 195.0,400.9 192.6,397.4" fill="#000065"/>
<polygon points="177.7,390.7 180.0,394.0 187.5,396.8 185.2,393.4" fill="#00007e"/>
<polygon points="170.3,389.6 172.6,392.9 180.0,394.0 177.7,390.7" fill="#000098"/>
<polygon points="163.1,390.2 165.3,393.4 172.6,392.9 170.3,389.6" fill="#0000ab"/>
<polygon points="155.9,392.6 158.0,395.8 165.3,393.4 163.1,390.2" fill="#0000b0"/>
<polygon points="444.4,326.1 448.2,328.3 453.0,327.6 449.2,325.4" fill="#0000a4"/>
<polygon points="439.4,328.2 443.2,330.5 448.2,328.3 444.4,326.1" fill="#0000b1"/>
<polygon points="434.3,332.0 438.1,334.2 443.2,330.5 439.4,328.2" fill="#0000ae"/>
<polygon points="429.1,337.1 432.8,339.4 438.1,334.2 434.3,332.0" fill="#00009d"/>
<polygon points="423.8,343.4 427.5,345.8 432.8,339.4 429.1,337.1" fill="#000084"/>
<polygon points="418.4,350.4 422.1,352.8 427.5,345.8 423.8,343.4" fill="#000069"/>
<polygon points="413.0,357.6 416.6,360.1 422.1,352.8 418.4,350.4" fill="#00004f"/>
<polygon points="407.7,364.4 411.3,366.9 416.6,360.1 413.0,357.6" fill="#000035"/>
<polygon points="402.4,370.1 405.9,372.6 411.3,366.9 407.7,364.4" fill="#000020"/>
<polygon points="397.2,374.2 400.7,376.8 405.9,372.6 402.4,370.1" fill="#00000f"/>
<polygon points="392.0,376.2 395.5,378.8 400.7,376.8 397.2,374.2" fill="#000007"/>
<polygon points="387.0,375.6 390.4,378.2 395.5,378.8 392.0,376.2" fill="#000009"/>
<polygon points="381.9,372.2 385.4,374.8 390.4,378.2 387.0,375.6" fill="#000010"/>
<polygon points="321.4,246.7 324.9,248.6 331.1,252.3 327.7,250.4" fill="#362e00"/>
<polygon points="315.1,247.7 318.5,249.7 324.9,248.6 321.4,246.7" fill="#c1ad00"/>
<polygon points="308.8,253.5 312.1,255.5 318.5,249.7 315.1,247.7" fill="#c4a800"/>
<path d="M309.3 253.3L310.8 254.2L313.6 251.6L312.1 250.7" fill="#ab9200"/>
<path d="M312.1 250.7L313.6 251.6L316.4 249.0L314.9 248.2" fill="#af9c00"/>
<path d="M310.8 254.2L312.3 255.0L315.1 252.5L313.6 251.6" fill="#d1b300"/>
<path d="M313.6 251.6L315.1 252.5L317.9 249.9L316.4 249.0" fill="#dcc400"/>
<polygon points="302.5,263.8 305.8,265.8 312.1,255.5 308.8,253.5" fill="#af8000"/>
<path d="M303.1 263.3L304.5 264.2L307.3 259.7L305.8 258.8" fill="#9d7000"/>
<path d="M305.8 258.8L307.3 259.7L310.1 255.1L308.6 254.3" fill="#a38000"/>
<path d="M304.5 264.2L306.0 265.1L308.8 260.6L307.3 259.7" fill="#b88300"/>
<path d="M307.3 259.7L308.8 260.6L311.6 256.0L310.1 255.1" fill="#c29800"/>
<polygon points="296.3,277.8 299.5,280.0 305.8,265.8 302.5,263.8" fill="#9f5500"/>
<path d="M296.9 277.1L298.3 278.0L301.0 271.9L299.6 270.9" fill="#924900"/>
<path d="M299.6 270.9L301.0 271.9L303.8 265.6L302.3 264.7" fill="#965a00"/>
<path d="M298.3 278.0L299.7 279.0L302.5 272.8L301.0 271.9" fill="#a75300"/>
<path d="M301.0 271.9L302.5 272.8L305.2 266.6L303.8 265.6" fill="#ad6800"/>
<polygon points="290.2,294.7 293.4,297.0 299.5,280.0 296.3,277.8" fill="#962a00"/>
<path d="M290.8 293.8L292.1 294.8L294.8 287.4L293.4 286.4" fill="#8c2000"/>
<path d="M293.4 286.4L294.8 287.4L297.5 279.9L296.1 278.9" fill="#8e3200"/>
<path d="M292.1 294.8L293.6 295.8L296.3 288.4L294.8 287.4" fill="#9c2300"/>
<path d="M294.8 287.4L296.3 288.4L299.0 280.9L297.5 279.9" fill="#a03800"/>
<polygon points="284.2,313.3 287.3,315.7 293.4,297.0 290.2,294.7" fill="#8d0004"/>
<path d="M284.8 312.3L286.1 313.4L288.8 305.2L287.4 304.2" fill="#7d000c"/>
<path d="M287.4 304.2L288.8 305.2L291.4 296.9L290.0 295.9" fill="#8a0800"/>
<path d="M286.1 313.4L287.5 314.5L290.2 306.2L288.8 305.2" fill="#89000d"/>
<path d="M288.8 305.2L290.2 306.2L292.8 298.0L291.4 296.9" fill="#980800"/>
<polygon points="278.4,332.6 281.4,335.2 287.3,315.7 284.2,313.3" fill="#5c0031"/>
<path d="M278.9 331.6L280.2 332.7L282.8 324.2L281.5 323.1" fill="#500038"/>
<path d="M281.5 323.1L282.8 324.2L285.4 315.7L284.1 314.6" fill="#630024"/>
<path d="M280.2 332.7L281.6 333.9L284.2 325.4L282.8 324.2" fill="#56003c"/>
<path d="M282.8 324.2L284.2 325.4L286.8 316.8L285.4 315.7" fill="#6c0027"/>
<polygon points="272.6,351.5 275.6,354.2 281.4,335.2 278.4,332.6" fill="#2e005f"/>
<path d="M273.1 350.5L274.4 351.7L277.0 343.4L275.6 342.2" fill="#230065"/>
<path d="M275.6 342.2L277.0 343.4L279.5 335.0L278.2 333.9" fill="#360051"/>
<path d="M274.4 351.7L275.7 352.9L278.3 344.6L277.0 343.4" fill="#25006c"/>
<path d="M277.0 343.4L278.3 344.6L280.9 336.2L279.5 335.0" fill="#3a0057"/>
<polygon points="266.9,369.0 269.8,371.9 275.6,354.2 272.6,351.5" fill="#01008d"/>
<path d="M267.4 368.2L268.6 369.4L271.2 361.7L269.9 360.5" fill="#000083"/>
<path d="M269.9 360.5L271.2 361.7L273.7 353.9L272.4 352.7" fill="#0b007f"/>
<path d="M268.6 369.4L269.9 370.7L272.5 362.9L271.2 361.7" fill="#00008b"/>
<path d="M271.2 361.7L272.5 362.9L275.0 355.1L273.7 353.9" fill="#0b0086"/>
<polygon points="261.1,384.5 263.9,387.5 269.8,371.9 266.9,369.0" fill="#000069"/>
<path d="M261.6 383.8L262.9 385.1L265.4 378.2L264.1 377.0" fill="#00005f"/>
<path d="M264.1 377.0L265.4 378.2L267.9 371.4L266.7 370.1" fill="#00006e"/>
<path d="M262.9 385.1L264.1 386.4L266.7 379.5L265.4 378.2" fill="#000063"/>
<path d="M265.4 378.2L266.7 379.5L269.2 372.7L267.9 371.4" fill="#000074"/>
<polygon points="255.3,397.4 258.1,400.4 263.9,387.5 261.1,384.5" fill="#000048"/>
<polygon points="249.4,407.3 252.1,410.4 258.1,400.4 255.3,397.4" fill="#00002d"/>
<polygon points="243.3,414.2 246.0,417.3 252.1,410.4 249.4,407.3" fill="#000018"/>
<polygon points="237.0,418.0 239.7,421.2 246.0,417.3 243.3,414.2" fill="#00000a"/>
<polygon points="230.6,419.1 233.2,422.4 239.7,421.2 237.0,418.0" fill="#000007"/>
<polygon points="223.8,417.9 226.4,421.1 233.2,422.4 230.6,419.1" fill="#00000d"/>
<polygon points="216.9,414.8 219.4,418.0 226.4,421.1 223.8,417.9" fill="#000018"/>
<polygon points="209.8,410.5 212.2,413.7 219.4,418.0 216.9,414.8" fill="#000026"/>
<polygon points="202.4,405.6 204.9,408.8 212.2,413.7 209.8,410.5" fill="#000037"/>
<polygon points="195.0,400.9 197.4,404.1 204.9,408.8 202.4,405.6" fill="#00004a"/>
<polygon points="187.5,396.8 189.9,400.1 197.4,404.1 195.0,400.9" fill="#000061"/>
<polygon points="180.0,394.0 182.3,397.3 189.9,400.1 187.5,396.8" fill="#00007b"/>
<polygon points="172.6,392.9 174.9,396.1 182.3,397.3 180.0,394.0" fill="#000095"/>
<polygon points="165.3,393.4 167.5,396.7 174.9,396.1 172.6,392.9" fill="#0000aa"/>
<polygon points="158.0,395.8 160.2,399.1 167.5,396.7 165.3,393.4" fill="#0000b1"/>
<polygon points="448.2,328.3 452.0,330.5 456.9,329.8 453.0,327.6" fill="#0000a4"/>
<polygon points="443.2,330.5 447.0,332.6 452.0,330.5 448.2,328.3" fill="#0000b1"/>
<polygon points="438.1,334.2 441.9,336.3 447.0,332.6 443.2,330.5" fill="#0000ad"/>
<polygon points="432.8,339.4 436.6,341.5 441.9,336.3 438.1,334.2" fill="#00009b"/>
<polygon points="427.5,345.8 431.2,347.8 436.6,341.5 432.8,339.4" fill="#000082"/>
<polygon points="422.1,352.8 425.8,354.9 431.2,347.8 427.5,345.8" fill="#000068"/>
<polygon points="416.6,360.1 420.3,362.2 425.8,354.9 422.1,352.8" fill="#00004d"/>
<polygon points="411.3,366.9 414.9,369.1 420.3,362.2 416.6,360.1" fill="#000035"/>
<polygon points="405.9,372.6 409.5,375.0 414.9,369.1 411.3,366.9" fill="#000020"/>
<polygon points="400.7,376.8 404.2,379.3 409.5,375.0 405.9,372.6" fill="#00000f"/>
<polygon points="395.5,378.8 399.0,381.4 404.2,379.3 400.7,376.8" fill="#000007"/>
<polygon points="390.4,378.2 393.9,381.1 399.0,381.4 395.5,378.8" fill="#000009"/>
<polygon points="385.4,374.8 388.9,378.0 393.9,381.1 390.4,378.2" fill="#000011"/>
<polygon points="331.1,252.3 334.7,258.9 340.8,266.7 337.3,260.3" fill="#9b6c00"/>
<polygon points="324.9,248.6 328.4,255.3 334.7,258.9 331.1,252.3" fill="#d3ac00"/>
<path d="M325.5 249.2L327.0 252.2L329.8 253.8L328.2 250.9" fill="#d6ba00"/>
<path d="M328.2 250.9L329.8 253.8L332.5 255.4L331.0 252.5" fill="#b99a00"/>
<path d="M327.0 252.2L328.5 255.2L331.3 256.7L329.8 253.8" fill="#e8c100"/>
<path d="M329.8 253.8L331.3 256.7L334.1 258.3L332.5 255.4" fill="#cea400"/>
<polygon points="318.5,249.7 322.0,256.4 328.4,255.3 324.9,248.6" fill="#ffe100"/>
<polygon points="312.1,255.5 315.6,262.2 322.0,256.4 318.5,249.7" fill="#ffd300"/>
<path d="M312.7 255.6L314.2 258.5L317.1 255.9L315.5 253.0" fill="#f4cb00"/>
<path d="M315.5 253.0L317.1 255.9L319.9 253.4L318.3 250.4" fill="#ffdf00"/>
<path d="M314.2 258.5L315.8 261.5L318.6 258.9L317.1 255.9" fill="#ffce00"/>
<path d="M317.1 255.9L318.6 258.9L321.4 256.4L319.9 253.4" fill="#ffe101"/>
<polygon points="305.8,265.8 309.2,272.4 315.6,262.2 312.1,255.5" fill="#e49e00"/>
<path d="M306.4 265.6L307.4 267.5L309.2 264.5L308.2 262.6" fill="#cf8d00"/>
<path d="M308.2 262.6L309.2 264.5L311.1 261.5L310.1 259.6" fill="#d79e00"/>
<path d="M310.1 259.6L311.1 261.5L313.0 258.5L312.0 256.5" fill="#e1ae00"/>
<path d="M307.4 267.5L308.4 269.5L310.3 266.5L309.2 264.5" fill="#db9100"/>
<path d="M309.2 264.5L310.3 266.5L312.1 263.5L311.1 261.5" fill="#e4a200"/>
<path d="M311.1 261.5L312.1 263.5L314.0 260.5L313.0 258.5" fill="#edb300"/>
<path d="M308.4 269.5L309.4 271.4L311.3 268.4L310.3 266.5" fill="#e59200"/>
<path d="M310.3 266.5L311.3 268.4L313.1 265.4L312.1 263.5" fill="#eea300"/>
<path d="M312.1 263.5L313.1 265.4L315.0 262.4L314.0 260.5" fill="#f7b400"/>
<polygon points="299.5,280.0 302.9,286.3 309.2,272.4 305.8,265.8" fill="#ca6500"/>
<path d="M300.1 279.5L301.1 281.4L302.9 277.2L301.9 275.4" fill="#b95600"/>
<path d="M301.9 275.4L302.9 277.2L304.8 273.1L303.8 271.2" fill="#bf6600"/>
<path d="M303.8 271.2L304.8 273.1L306.6 269.0L305.6 267.1" fill="#c57600"/>
<path d="M301.1 281.4L302.1 283.2L303.9 279.1L302.9 277.2" fill="#c45700"/>
<path d="M302.9 277.2L303.9 279.1L305.8 275.0L304.8 273.1" fill="#ca6800"/>
<path d="M304.8 273.1L305.8 275.0L307.6 270.9L306.6 269.0" fill="#d17900"/>
<path d="M302.1 283.2L303.1 285.1L304.9 281.0L303.9 279.1" fill="#ce5600"/>
<path d="M303.9 279.1L304.9 281.0L306.8 276.9L305.8 275.0" fill="#d46800"/>
<path d="M305.8 275.0L306.8 276.9L308.6 272.8L307.6 270.9" fill="#db7900"/>
<polygon points="293.4,297.0 296.7,303.0 302.9,286.3 299.5,280.0" fill="#b92d00"/>
<path d="M293.9 296.3L294.9 298.1L296.7 293.2L295.7 291.4" fill="#ab2000"/>
<path d="M295.7 291.4L296.7 293.2L298.5 288.2L297.6 286.4" fill="#af3000"/>
<path d="M297.6 286.4L298.5 288.2L300.3 283.2L299.4 281.4" fill="#b34000"/>
<path d="M294.9 298.1L295.9 299.9L297.7 295.0L296.7 293.2" fill="#b41f00"/>
<path d="M296.7 293.2L297.7 295.0L299.5 290.0L298.5 288.2" fill="#b82f00"/>
<path d="M298.5 288.2L299.5 290.0L301.3 285.1L300.3 283.2" fill="#bd4000"/>
<path d="M295.9 299.9L296.9 301.7L298.7 296.8L297.7 295.0" fill="#bd1c00"/>
<path d="M297.7 295.0L298.7 296.8L300.5 291.9L299.5 290.0" fill="#c12d00"/>
<path d="M299.5 290.0L300.5 291.9L302.3 286.9L301.3 285.1" fill="#c63e00"/>
<polygon points="287.3,315.7 290.6,321.5 296.7,303.0 293.4,297.0" fill="#a3000a"/>
<path d="M287.9 315.0L288.8 316.7L290.6 311.2L289.7 309.5" fill="#8f0014"/>
<path d="M289.7 309.5L290.6 311.2L292.4 305.7L291.4 304.0" fill="#a00005"/>
<path d="M291.4 304.0L292.4 305.7L294.2 300.2L293.2 298.5" fill="#a70b00"/>
<path d="M288.8 316.7L289.8 318.3L291.6 312.9L290.6 311.2" fill="#930017"/>
<path d="M290.6 311.2L291.6 312.9L293.4 307.5L292.4 305.7" fill="#a50008"/>
<path d="M292.4 305.7L293.4 307.5L295.1 302.0L294.2 300.2" fill="#b00800"/>
<path d="M289.8 318.3L290.7 320.0L292.5 314.6L291.6 312.9" fill="#96001c"/>
<path d="M291.6 312.9L292.5 314.6L294.3 309.2L293.4 307.5" fill="#a9000c"/>
<path d="M293.4 307.5L294.3 309.2L296.1 303.8L295.1 302.0" fill="#b80400"/>
<polygon points="281.4,335.2 284.6,340.6 290.6,321.5 287.3,315.7" fill="#68003e"/>
<path d="M281.9 334.3L282.9 335.9L284.6 330.3L283.7 328.7" fill="#570047"/>
<path d="M283.7 328.7L284.6 330.3L286.4 324.6L285.4 323.0" fill="#670038"/>
<path d="M285.4 323.0L286.4 324.6L288.1 318.9L287.2 317.3" fill="#770029"/>
<path d="M282.9 335.9L283.8 337.5L285.5 331.9L284.6 330.3" fill="#58004c"/>
<path d="M284.6 330.3L285.5 331.9L287.3 326.3L286.4 324.6" fill="#69003c"/>
<path d="M286.4 324.6L287.3 326.3L289.1 320.6L288.1 318.9" fill="#7a002d"/>
<path d="M283.8 337.5L284.7 339.1L286.5 333.5L285.5 331.9" fill="#590052"/>
<path d="M285.5 331.9L286.5 333.5L288.2 327.9L287.3 326.3" fill="#6a0042"/>
<path d="M287.3 326.3L288.2 327.9L290.0 322.3L289.1 320.6" fill="#7c0032"/>
<polygon points="275.6,354.2 278.6,359.2 284.6,340.6 281.4,335.2" fill="#310071"/>
<path d="M276.1 353.4L277.0 354.8L278.7 349.3L277.8 347.8" fill="#230078"/>
<path d="M277.8 347.8L278.7 349.3L280.4 343.8L279.5 342.2" fill="#32006a"/>
<path d="M279.5 342.2L280.4 343.8L282.2 338.2L281.2 336.7" fill="#41005b"/>
<path d="M277.0 354.8L277.9 356.3L279.6 350.8L278.7 349.3" fill="#22007f"/>
<path d="M278.7 349.3L279.6 350.8L281.4 345.3L280.4 343.8" fill="#320070"/>
<path d="M280.4 343.8L281.4 345.3L283.1 339.8L282.2 338.2" fill="#420061"/>
<path d="M277.9 356.3L278.8 357.8L280.5 352.3L279.6 350.8" fill="#210086"/>
<path d="M279.6 350.8L280.5 352.3L282.3 346.9L281.4 345.3" fill="#310077"/>
<path d="M281.4 345.3L282.3 346.9L284.0 341.4L283.1 339.8" fill="#410067"/>
<polygon points="269.8,371.9 272.8,376.6 278.6,359.2 275.6,354.2" fill="#0000a0"/>
<path d="M270.3 371.1L271.2 372.5L272.9 367.4L272.0 366.0" fill="#00008e"/>
<path d="M272.0 366.0L272.9 367.4L274.6 362.2L273.7 360.8" fill="#00009b"/>
<path d="M273.7 360.8L274.6 362.2L276.3 357.0L275.4 355.6" fill="#0e008d"/>
<path d="M271.2 372.5L272.0 373.9L273.8 368.8L272.9 367.4" fill="#000091"/>
<path d="M272.9 367.4L273.8 368.8L275.5 363.6L274.6 362.2" fill="#0000a0"/>
<path d="M274.6 362.2L275.5 363.6L277.2 358.5L276.3 357.0" fill="#0d0094"/>
<path d="M272.0 373.9L272.9 375.2L274.7 370.2L273.8 368.8" fill="#000094"/>
<path d="M273.8 368.8L274.7 370.2L276.4 365.1L275.5 363.6" fill="#0000a3"/>
<path d="M275.5 363.6L276.4 365.1L278.1 360.0L277.2 358.5" fill="#0b009b"/>
<polygon points="263.9,387.5 266.9,391.8 272.8,376.6 269.8,371.9" fill="#000072"/>
<path d="M264.5 386.8L265.8 388.7L268.3 381.9L267.0 380.0" fill="#000068"/>
<path d="M267.0 380.0L268.3 381.9L270.9 375.1L269.6 373.1" fill="#00007a"/>
<path d="M265.8 388.7L267.1 390.6L269.6 383.9L268.3 381.9" fill="#00006a"/>
<path d="M268.3 381.9L269.6 383.9L272.2 377.2L270.9 375.1" fill="#00007d"/>
<polygon points="258.1,400.4 261.0,404.5 266.9,391.8 263.9,387.5" fill="#00004d"/>
<polygon points="252.1,410.4 254.9,414.2 261.0,404.5 258.1,400.4" fill="#00002f"/>
<polygon points="246.0,417.3 248.7,420.9 254.9,414.2 252.1,410.4" fill="#000018"/>
<polygon points="239.7,421.2 242.4,424.6 248.7,420.9 246.0,417.3" fill="#00000a"/>
<polygon points="233.2,422.4 235.8,425.5 242.4,424.6 239.7,421.2" fill="#000007"/>
<polygon points="226.4,421.1 229.0,424.2 235.8,425.5 233.2,422.4" fill="#00000d"/>
<polygon points="219.4,418.0 222.0,421.0 229.0,424.2 226.4,421.1" fill="#000017"/>
<polygon points="212.2,413.7 214.7,416.7 222.0,421.0 219.4,418.0" fill="#000025"/>
<polygon points="204.9,408.8 207.3,411.8 214.7,416.7 212.2,413.7" fill="#000035"/>
<polygon points="197.4,404.1 199.8,407.1 207.3,411.8 204.9,408.8" fill="#000048"/>
<polygon points="189.9,400.1 192.3,403.1 199.8,407.1 197.4,404.1" fill="#00005e"/>
<polygon points="182.3,397.3 184.7,400.4 192.3,403.1 189.9,400.1" fill="#000078"/>
<polygon points="174.9,396.1 177.2,399.3 184.7,400.4 182.3,397.3" fill="#000094"/>
<polygon points="167.5,396.7 169.7,400.0 177.2,399.3 174.9,396.1" fill="#0000aa"/>
<polygon points="160.2,399.1 162.4,402.5 169.7,400.0 167.5,396.7" fill="#0000b2"/>
<polygon points="452.0,330.5 456.0,332.7 460.8,332.2 456.9,329.8" fill="#0000a4"/>
<polygon points="447.0,332.6 451.0,334.7 456.0,332.7 452.0,330.5" fill="#0000b0"/>
<polygon points="441.9,336.3 445.8,338.4 451.0,334.7 447.0,332.6" fill="#0000ac"/>
<polygon points="436.6,341.5 440.5,343.4 445.8,338.4 441.9,336.3" fill="#00009a"/>
<polygon points="431.2,347.8 435.1,349.7 440.5,343.4 436.6,341.5" fill="#000081"/>
<polygon points="425.8,354.9 429.6,356.7 435.1,349.7 431.2,347.8" fill="#000067"/>
<polygon points="420.3,362.2 424.1,364.0 429.6,356.7 425.8,354.9" fill="#00004d"/>
<polygon points="414.9,369.1 418.6,371.0 424.1,364.0 420.3,362.2" fill="#000035"/>
<polygon points="409.5,375.0 413.2,377.1 418.6,371.0 414.9,369.1" fill="#000020"/>
<polygon points="404.2,379.3 407.9,381.6 413.2,377.1 409.5,375.0" fill="#000010"/>
<polygon points="399.0,381.4 402.6,384.1 407.9,381.6 404.2,379.3" fill="#000008"/>
<polygon points="393.9,381.1 397.5,384.2 402.6,384.1 399.0,381.4" fill="#000008"/>
<polygon points="388.9,378.0 392.4,381.6 397.5,384.2 393.9,381.1" fill="#000011"/>
<polygon points="346.8,278.0 350.3,287.9 356.0,301.0 352.5,291.9" fill="#821200"/>
<polygon points="340.8,266.7 344.3,277.3 350.3,287.9 346.8,278.0" fill="#9b3c00"/>
<path d="M341.4 268.0L342.9 272.7L345.5 277.5L344.0 273.0" fill="#9b4b00"/>
<path d="M344.0 273.0L345.5 277.5L348.2 282.3L346.6 278.0" fill="#8e3600"/>
<path d="M342.9 272.7L344.4 277.3L347.1 282.0L345.5 277.5" fill="#a84600"/>
<path d="M345.5 277.5L347.1 282.0L349.7 286.7L348.2 282.3" fill="#9b3100"/>
<polygon points="334.7,258.9 338.2,269.9 344.3,277.3 340.8,266.7" fill="#bf6e00"/>
<path d="M335.2 260.1L336.8 264.9L339.5 268.2L338.0 263.5" fill="#c38000"/>
<path d="M338.0 263.5L339.5 268.2L342.2 271.5L340.6 266.9" fill="#b06700"/>
<path d="M336.8 264.9L338.3 269.7L341.0 273.0L339.5 268.2" fill="#cd7900"/>
<path d="M339.5 268.2L341.0 273.0L343.7 276.2L342.2 271.5" fill="#bc6200"/>
<polygon points="328.4,255.3 331.9,266.6 338.2,269.9 334.7,258.9" fill="#eba300"/>
<path d="M329.0 256.2L330.5 261.2L333.3 262.7L331.7 257.8" fill="#f2b900"/>
<path d="M331.7 257.8L333.3 262.7L336.0 264.2L334.5 259.4" fill="#dda100"/>
<path d="M330.5 261.2L332.1 266.2L334.8 267.6L333.3 262.7" fill="#f6aa00"/>
<path d="M333.3 262.7L334.8 267.6L337.6 269.1L336.0 264.2" fill="#e49600"/>
<polygon points="322.0,256.4 325.5,267.8 331.9,266.6 328.4,255.3" fill="#ffcd08"/>
<path d="M322.6 257.0L323.6 260.4L325.5 260.0L324.5 256.7" fill="#ffe60c"/>
<path d="M324.5 256.7L325.5 260.0L327.4 259.7L326.3 256.4" fill="#ffda03"/>
<path d="M326.3 256.4L327.4 259.7L329.2 259.4L328.2 256.1" fill="#ffd000"/>
<path d="M323.6 260.4L324.7 263.7L326.5 263.4L325.5 260.0" fill="#ffea1d"/>
<path d="M325.5 260.0L326.5 263.4L328.4 263.0L327.4 259.7" fill="#ffd208"/>
<path d="M327.4 259.7L328.4 263.0L330.3 262.7L329.2 259.4" fill="#ffc501"/>
<path d="M324.7 263.7L325.7 267.0L327.6 266.7L326.5 263.4" fill="#ffee30"/>
<path d="M326.5 263.4L327.6 266.7L329.4 266.4L328.4 263.0" fill="#ffca0e"/>
<path d="M328.4 263.0L329.4 266.4L331.3 266.0L330.3 262.7" fill="#ffb902"/>
<polygon points="315.6,262.2 319.1,273.4 325.5,267.8 322.0,256.4" fill="#ffe629"/>
<path d="M316.2 262.5L317.2 265.8L319.1 264.1L318.1 260.8" fill="#ffc605"/>
<path d="M318.1 260.8L319.1 264.1L321.0 262.5L319.9 259.1" fill="#ffdb0e"/>
<path d="M319.9 259.1L321.0 262.5L322.9 260.8L321.8 257.5" fill="#ffeb16"/>
<path d="M317.2 265.8L318.2 269.1L320.1 267.4L319.1 264.1" fill="#ffcb14"/>
<path d="M319.1 264.1L320.1 267.4L322.0 265.8L321.0 262.5" fill="#ffec2a"/>
<path d="M321.0 262.5L322.0 265.8L323.9 264.1L322.9 260.8" fill="#ffff37"/>
<path d="M318.2 269.1L319.3 272.4L321.2 270.7L320.1 267.4" fill="#ffda2f"/>
<path d="M320.1 267.4L321.2 270.7L323.0 269.1L322.0 265.8" fill="#ffff51"/>
<path d="M322.0 265.8L323.0 269.1L324.9 267.4L323.9 264.1" fill="#ffff5d"/>
<polygon points="309.2,272.4 312.7,283.2 319.1,273.4 315.6,262.2" fill="#fd9201"/>
<path d="M309.8 272.4L310.8 275.6L312.7 272.7L311.7 269.5" fill="#f08d00"/>
<path d="M311.7 269.5L312.7 272.7L314.6 269.7L313.5 266.5" fill="#f89d00"/>
<path d="M313.5 266.5L314.6 269.7L316.4 266.8L315.4 263.5" fill="#ffae00"/>
<path d="M310.8 275.6L311.8 278.8L313.7 275.9L312.7 272.7" fill="#f58500"/>
<path d="M312.7 272.7L313.7 275.9L315.6 273.0L314.6 269.7" fill="#fd9601"/>
<path d="M314.6 269.7L315.6 273.0L317.5 270.0L316.4 266.8" fill="#ffa803"/>
<path d="M311.8 278.8L312.9 282.0L314.8 279.1L313.7 275.9" fill="#fa7c01"/>
<path d="M313.7 275.9L314.8 279.1L316.6 276.2L315.6 273.0" fill="#ff8e03"/>
<path d="M315.6 273.0L316.6 276.2L318.5 273.3L317.5 270.0" fill="#ffa60c"/>
<polygon points="302.9,286.3 306.3,296.6 312.7,283.2 309.2,272.4" fill="#e65900"/>
<path d="M303.5 286.1L304.5 289.1L306.3 285.1L305.3 282.0" fill="#d95100"/>
<path d="M305.3 282.0L306.3 285.1L308.2 281.1L307.2 278.0" fill="#df6300"/>
<path d="M307.2 278.0L308.2 281.1L310.1 277.0L309.0 273.9" fill="#e67400"/>
<path d="M304.5 289.1L305.5 292.1L307.4 288.2L306.3 285.1" fill="#df4b00"/>
<path d="M306.3 285.1L307.4 288.2L309.2 284.2L308.2 281.1" fill="#e55c00"/>
<path d="M308.2 281.1L309.2 284.2L311.1 280.2L310.1 277.0" fill="#ec6e00"/>
<path d="M305.5 292.1L306.5 295.2L308.4 291.2L307.4 288.2" fill="#e54200"/>
<path d="M307.4 288.2L308.4 291.2L310.2 287.3L309.2 284.2" fill="#eb5300"/>
<path d="M309.2 284.2L310.2 287.3L312.1 283.4L311.1 280.2" fill="#f16500"/>
<polygon points="296.7,303.0 300.1,312.6 306.3,296.6 302.9,286.3" fill="#d31d00"/>
<path d="M297.3 302.6L298.2 305.4L300.1 300.6L299.1 297.7" fill="#c71500"/>
<path d="M299.1 297.7L300.1 300.6L301.9 295.8L300.9 292.8" fill="#cc2700"/>
<path d="M300.9 292.8L301.9 295.8L303.7 290.9L302.7 287.9" fill="#d13800"/>
<path d="M298.2 305.4L299.2 308.2L301.1 303.5L300.1 300.6" fill="#ce0e00"/>
<path d="M300.1 300.6L301.1 303.5L302.9 298.7L301.9 295.8" fill="#d32000"/>
<path d="M301.9 295.8L302.9 298.7L304.7 293.9L303.7 290.9" fill="#d83200"/>
<path d="M299.2 308.2L300.2 311.1L302.1 306.4L301.1 303.5" fill="#d40600"/>
<path d="M301.1 303.5L302.1 306.4L303.9 301.7L302.9 298.7" fill="#d91800"/>
<path d="M302.9 298.7L303.9 301.7L305.8 296.9L304.7 293.9" fill="#dd2900"/>
<polygon points="290.6,321.5 293.9,330.3 300.1,312.6 296.7,303.0" fill="#a8001d"/>
<path d="M291.1 320.9L292.1 323.5L293.9 318.2L292.9 315.5" fill="#970024"/>
<path d="M292.9 315.5L293.9 318.2L295.7 312.9L294.7 310.1" fill="#ab0014"/>
<path d="M294.7 310.1L295.7 312.9L297.5 307.5L296.5 304.7" fill="#bf0003"/>
<path d="M292.1 323.5L293.1 326.1L294.9 320.8L293.9 318.2" fill="#96002c"/>
<path d="M293.9 318.2L294.9 320.8L296.7 315.6L295.7 312.9" fill="#aa001b"/>
<path d="M295.7 312.9L296.7 315.6L298.5 310.3L297.5 307.5" fill="#be000a"/>
<path d="M293.1 326.1L294.1 328.7L295.9 323.5L294.9 320.8" fill="#930034"/>
<path d="M294.9 320.8L295.9 323.5L297.7 318.3L296.7 315.6" fill="#a70023"/>
<path d="M296.7 315.6L297.7 318.3L299.5 313.1L298.5 310.3" fill="#bc0012"/>
<polygon points="284.6,340.6 287.8,348.5 293.9,330.3 290.6,321.5" fill="#670055"/>
<path d="M285.1 339.9L286.1 342.3L287.8 336.8L286.9 334.3" fill="#58005b"/>
<path d="M286.9 334.3L287.8 336.8L289.6 331.3L288.6 328.8" fill="#6a004b"/>
<path d="M288.6 328.8L289.6 331.3L291.4 325.7L290.4 323.2" fill="#7c003b"/>
<path d="M286.1 342.3L287.0 344.6L288.8 339.2L287.8 336.8" fill="#550063"/>
<path d="M287.8 336.8L288.8 339.2L290.6 333.7L289.6 331.3" fill="#680053"/>
<path d="M289.6 331.3L290.6 333.7L292.4 328.3L291.4 325.7" fill="#7b0043"/>
<path d="M287.0 344.6L288.0 347.0L289.8 341.6L288.8 339.2" fill="#52006c"/>
<path d="M288.8 339.2L289.8 341.6L291.6 336.3L290.6 333.7" fill="#64005c"/>
<path d="M290.6 333.7L291.6 336.3L293.3 330.9L292.4 328.3" fill="#78004c"/>
<polygon points="278.6,359.2 281.8,366.4 287.8,348.5 284.6,340.6" fill="#2b008a"/>
<path d="M279.2 358.5L280.1 360.7L281.9 355.3L280.9 353.1" fill="#1e0091"/>
<path d="M280.9 353.1L281.9 355.3L283.6 349.9L282.7 347.6" fill="#2e0081"/>
<path d="M282.7 347.6L283.6 349.9L285.4 344.5L284.4 342.2" fill="#3f0072"/>
<path d="M280.1 360.7L281.1 362.8L282.8 357.5L281.9 355.3" fill="#1b0099"/>
<path d="M281.9 355.3L282.8 357.5L284.6 352.2L283.6 349.9" fill="#2b008a"/>
<path d="M283.6 349.9L284.6 352.2L286.3 346.8L285.4 344.5" fill="#3c007a"/>
<path d="M281.1 362.8L282.0 364.9L283.7 359.7L282.8 357.5" fill="#1700a2"/>
<path d="M282.8 357.5L283.7 359.7L285.5 354.4L284.6 352.2" fill="#270093"/>
<path d="M284.6 352.2L285.5 354.4L287.3 349.1L286.3 346.8" fill="#390083"/>
<polygon points="272.8,376.6 275.9,382.9 281.8,366.4 278.6,359.2" fill="#0000a7"/>
<path d="M273.3 375.9L274.2 377.8L275.9 372.8L275.0 370.9" fill="#000096"/>
<path d="M275.0 370.9L275.9 372.8L277.7 367.8L276.7 365.8" fill="#0000a6"/>
<path d="M276.7 365.8L277.7 367.8L279.4 362.8L278.5 360.7" fill="#0800a6"/>
<path d="M274.2 377.8L275.1 379.7L276.9 374.7L275.9 372.8" fill="#000097"/>
<path d="M275.9 372.8L276.9 374.7L278.6 369.8L277.7 367.8" fill="#0000a7"/>
<path d="M277.7 367.8L278.6 369.8L280.3 364.9L279.4 362.8" fill="#0400af"/>
<path d="M275.1 379.7L276.0 381.5L277.8 376.7L276.9 374.7" fill="#000097"/>
<path d="M276.9 374.7L277.8 376.7L279.5 371.8L278.6 369.8" fill="#0000a7"/>
<path d="M278.6 369.8L279.5 371.8L281.3 367.0L280.3 364.9" fill="#0000b8"/>
<polygon points="266.9,391.8 269.9,397.4 275.9,382.9 272.8,376.6" fill="#000076"/>
<path d="M267.4 391.2L268.3 392.9L270.0 388.5L269.1 386.8" fill="#000068"/>
<path d="M269.1 386.8L270.0 388.5L271.8 384.1L270.9 382.3" fill="#000075"/>
<path d="M270.9 382.3L271.8 384.1L273.5 379.7L272.6 377.9" fill="#000082"/>
<path d="M268.3 392.9L269.2 394.5L270.9 390.2L270.0 388.5" fill="#000068"/>
<path d="M270.0 388.5L270.9 390.2L272.7 385.9L271.8 384.1" fill="#000075"/>
<path d="M271.8 384.1L272.7 385.9L274.4 381.5L273.5 379.7" fill="#000083"/>
<path d="M269.2 394.5L270.1 396.2L271.8 392.0L270.9 390.2" fill="#000068"/>
<path d="M270.9 390.2L271.8 392.0L273.6 387.7L272.7 385.9" fill="#000075"/>
<path d="M272.7 385.9L273.6 387.7L275.3 383.4L274.4 381.5" fill="#000082"/>
<polygon points="261.0,404.5 263.9,409.4 269.9,397.4 266.9,391.8" fill="#00004d"/>
<path d="M261.5 404.0L262.8 406.2L265.4 400.8L264.1 398.5" fill="#000045"/>
<path d="M264.1 398.5L265.4 400.8L268.0 395.3L266.7 392.9" fill="#000055"/>
<path d="M262.8 406.2L264.1 408.4L266.7 403.1L265.4 400.8" fill="#000044"/>
<path d="M265.4 400.8L266.7 403.1L269.4 397.8L268.0 395.3" fill="#000054"/>
<polygon points="254.9,414.2 257.8,418.5 263.9,409.4 261.0,404.5" fill="#00002e"/>
<polygon points="248.7,420.9 251.5,424.7 257.8,418.5 254.9,414.2" fill="#000017"/>
<polygon points="242.4,424.6 245.1,427.9 251.5,424.7 248.7,420.9" fill="#000009"/>
<polygon points="235.8,425.5 238.5,428.6 245.1,427.9 242.4,424.6" fill="#000007"/>
<polygon points="229.0,424.2 231.6,427.0 238.5,428.6 235.8,425.5" fill="#00000d"/>
<polygon points="222.0,421.0 224.5,423.7 231.6,427.0 229.0,424.2" fill="#000018"/>
<polygon points="214.7,416.7 217.3,419.3 224.5,423.7 222.0,421.0" fill="#000025"/>
<polygon points="207.3,411.8 209.8,414.4 217.3,419.3 214.7,416.7" fill="#000034"/>
<polygon points="199.8,407.1 202.3,409.8 209.8,414.4 207.3,411.8" fill="#000047"/>
<polygon points="192.3,403.1 194.7,405.9 202.3,409.8 199.8,407.1" fill="#00005d"/>
<polygon points="184.7,400.4 187.1,403.4 194.7,405.9 192.3,403.1" fill="#000078"/>
<polygon points="177.2,399.3 179.5,402.5 187.1,403.4 184.7,400.4" fill="#000094"/>
<polygon points="169.7,400.0 172.0,403.4 179.5,402.5 177.2,399.3" fill="#0000ab"/>
<polygon points="162.4,402.5 164.7,406.0 172.0,403.4 169.7,400.0" fill="#0000b3"/>
<polygon points="456.0,332.7 459.9,335.0 464.8,334.6 460.8,332.2" fill="#0000a3"/>
<polygon points="451.0,334.7 454.9,336.9 459.9,335.0 456.0,332.7" fill="#0000af"/>
<polygon points="445.8,338.4 449.7,340.3 454.9,336.9 451.0,334.7" fill="#0000ab"/>
<polygon points="440.5,343.4 444.4,345.2 449.7,340.3 445.8,338.4" fill="#00009a"/>
<polygon points="435.1,349.7 439.0,351.3 444.4,345.2 440.5,343.4" fill="#000081"/>
<polygon points="429.6,356.7 433.5,358.2 439.0,351.3 435.1,349.7" fill="#000067"/>
<polygon points="424.1,364.0 427.9,365.5 433.5,358.2 429.6,356.7" fill="#00004e"/>
<polygon points="418.6,371.0 422.4,372.6 427.9,365.5 424.1,364.0" fill="#000037"/>
<polygon points="413.2,377.1 417.0,378.9 422.4,372.6 418.6,371.0" fill="#000022"/>
<polygon points="407.9,381.6 411.6,383.8 417.0,378.9 413.2,377.1" fill="#000012"/>
<polygon points="402.6,384.1 406.3,386.8 411.6,383.8 407.9,381.6" fill="#000008"/>
<polygon points="397.5,384.2 401.1,387.5 406.3,386.8 402.6,384.1" fill="#000007"/>
<polygon points="392.4,381.6 395.9,385.7 401.1,387.5 397.5,384.2" fill="#00000f"/>
<polygon points="387.4,376.2 390.9,381.1 395.9,385.7 392.4,381.6" fill="#00001c"/>
<polygon points="382.3,368.0 385.8,374.0 390.9,381.1 387.4,376.2" fill="#00002d"/>
<polygon points="361.6,315.5 365.0,326.4 370.4,339.9 366.9,330.3" fill="#340047"/>
<polygon points="356.0,301.0 359.4,313.1 365.0,326.4 361.6,315.5" fill="#610028"/>
<polygon points="350.3,287.9 353.7,301.1 359.4,313.1 356.0,301.0" fill="#970004"/>
<path d="M350.8 289.5L352.3 295.3L354.9 300.8L353.4 295.3" fill="#9a0d00"/>
<path d="M353.4 295.3L354.9 300.8L357.4 306.3L355.9 301.0" fill="#8d0004"/>
<path d="M352.3 295.3L353.8 301.1L356.4 306.4L354.9 300.8" fill="#a30000"/>
<path d="M354.9 300.8L356.4 306.4L358.9 311.7L357.4 306.3" fill="#890011"/>
<polygon points="344.3,277.3 347.8,291.4 353.7,301.1 350.3,287.9" fill="#b32500"/>
<path d="M344.9 278.8L346.4 285.0L349.0 289.5L347.5 283.5" fill="#b53900"/>
<path d="M347.5 283.5L349.0 289.5L351.6 293.9L350.1 288.1" fill="#a82500"/>
<path d="M346.4 285.0L347.9 291.1L350.5 295.5L349.0 289.5" fill="#bd2900"/>
<path d="M349.0 289.5L350.5 295.5L353.1 299.8L351.6 293.9" fill="#b11700"/>
<polygon points="338.2,269.9 341.7,284.7 347.8,291.4 344.3,277.3" fill="#d15100"/>
<path d="M338.7 271.3L340.3 277.8L343.0 280.9L341.5 274.5" fill="#d66700"/>
<path d="M341.5 274.5L343.0 280.9L345.7 283.9L344.1 277.7" fill="#c75200"/>
<path d="M340.3 277.8L341.8 284.3L344.5 287.2L343.0 280.9" fill="#db5400"/>
<path d="M343.0 280.9L344.5 287.2L347.2 290.2L345.7 283.9" fill="#cd4100"/>
<polygon points="331.9,266.6 335.4,281.8 341.7,284.7 338.2,269.9" fill="#f17800"/>
<path d="M332.5 267.7L333.5 272.2L335.4 273.1L334.3 268.7" fill="#f99500"/>
<path d="M334.3 268.7L335.4 273.1L337.2 274.1L336.2 269.7" fill="#f08b00"/>
<path d="M336.2 269.7L337.2 274.1L339.0 275.0L338.0 270.6" fill="#e67f00"/>
<path d="M333.5 272.2L334.5 276.6L336.4 277.5L335.4 273.1" fill="#f98500"/>
<path d="M335.4 273.1L336.4 277.5L338.2 278.4L337.2 274.1" fill="#f17c00"/>
<path d="M337.2 274.1L338.2 278.4L340.1 279.3L339.0 275.0" fill="#e87200"/>
<path d="M334.5 276.6L335.6 281.1L337.4 282.0L336.4 277.5" fill="#f97400"/>
<path d="M336.4 277.5L337.4 282.0L339.2 282.8L338.2 278.4" fill="#f16b00"/>
<path d="M338.2 278.4L339.2 282.8L341.1 283.7L340.1 279.3" fill="#e96200"/>
<polygon points="325.5,267.8 329.0,283.0 335.4,281.8 331.9,266.6" fill="#ffa81b"/>
<path d="M326.1 268.6L327.1 273.1L329.0 272.7L328.0 268.3" fill="#ffe842"/>
<path d="M328.0 268.3L329.0 272.7L330.9 272.4L329.9 267.9" fill="#ffbb17"/>
<path d="M329.9 267.9L330.9 272.4L332.8 272.1L331.7 267.6" fill="#ffa404"/>
<path d="M327.1 273.1L328.2 277.6L330.1 277.2L329.0 272.7" fill="#ffdb48"/>
<path d="M329.0 272.7L330.1 277.2L331.9 276.9L330.9 272.4" fill="#ffad1b"/>
<path d="M330.9 272.4L331.9 276.9L333.8 276.5L332.8 272.1" fill="#ff9506"/>
<path d="M328.2 277.6L329.2 282.0L331.1 281.7L330.1 277.2" fill="#ffc849"/>
<path d="M330.1 277.2L331.1 281.7L333.0 281.3L331.9 276.9" fill="#ff9c1d"/>
<path d="M331.9 276.9L333.0 281.3L334.8 281.0L333.8 276.5" fill="#ff8308"/>
<polygon points="319.1,273.4 322.6,288.4 329.0,283.0 325.5,267.8" fill="#ffff9e"/>
<path d="M319.7 274.0L320.7 278.4L322.6 276.7L321.6 272.3" fill="#fff661"/>
<path d="M321.6 272.3L322.6 276.7L324.5 275.1L323.5 270.7" fill="#ffff86"/>
<path d="M323.5 270.7L324.5 275.1L326.4 273.5L325.3 269.0" fill="#ffff84"/>
<path d="M320.7 278.4L321.8 282.8L323.7 281.2L322.6 276.7" fill="#ffff81"/>
<path d="M322.6 276.7L323.7 281.2L325.5 279.6L324.5 275.1" fill="#ffff9f"/>
<path d="M324.5 275.1L325.5 279.6L327.4 278.0L326.4 273.5" fill="#ffff92"/>
<path d="M321.8 282.8L322.8 287.2L324.7 285.6L323.7 281.2" fill="#ffff97"/>
<path d="M323.7 281.2L324.7 285.6L326.6 284.0L325.5 279.6" fill="#ffffab"/>
<path d="M325.5 279.6L326.6 284.0L328.5 282.4L327.4 278.0" fill="#ffff94"/>
<polygon points="312.7,283.2 316.2,297.7 322.6,288.4 319.1,273.4" fill="#ff811d"/>
<path d="M313.3 283.5L314.3 287.7L316.2 284.9L315.2 280.6" fill="#ff6e05"/>
<path d="M315.2 280.6L316.2 284.9L318.1 282.1L317.1 277.8" fill="#ff870f"/>
<path d="M317.1 277.8L318.1 282.1L320.0 279.3L318.9 274.9" fill="#ffab26"/>
<path d="M314.3 287.7L315.4 292.0L317.2 289.2L316.2 284.9" fill="#ff660b"/>
<path d="M316.2 284.9L317.2 289.2L319.1 286.4L318.1 282.1" fill="#ff851d"/>
<path d="M318.1 282.1L319.1 286.4L321.0 283.7L320.0 279.3" fill="#ffb33f"/>
<path d="M315.4 292.0L316.4 296.2L318.3 293.5L317.2 289.2" fill="#ff5f15"/>
<path d="M317.2 289.2L318.3 293.5L320.2 290.8L319.1 286.4" fill="#ff862f"/>
<path d="M319.1 286.4L320.2 290.8L322.0 288.1L321.0 283.7" fill="#ffba57"/>
<polygon points="306.3,296.6 309.8,310.2 316.2,297.7 312.7,283.2" fill="#f43301"/>
<path d="M306.9 296.6L308.0 300.6L309.8 296.8L308.8 292.7" fill="#eb3300"/>
<path d="M308.8 292.7L309.8 296.8L311.7 292.9L310.7 288.8" fill="#f14400"/>
<path d="M310.7 288.8L311.7 292.9L313.6 289.1L312.5 284.9" fill="#f65501"/>
<path d="M308.0 300.6L309.0 304.6L310.9 300.9L309.8 296.8" fill="#ef2600"/>
<path d="M309.8 296.8L310.9 300.9L312.7 297.1L311.7 292.9" fill="#f43701"/>
<path d="M311.7 292.9L312.7 297.1L314.6 293.3L313.6 289.1" fill="#fb4802"/>
<path d="M309.0 304.6L310.0 308.6L311.9 304.9L310.9 300.9" fill="#f21700"/>
<path d="M310.9 300.9L311.9 304.9L313.8 301.3L312.7 297.1" fill="#f82802"/>
<path d="M312.7 297.1L313.8 301.3L315.6 297.6L314.6 293.3" fill="#ff3b05"/>
<polygon points="300.1,312.6 303.5,325.2 309.8,310.2 306.3,296.6" fill="#de0006"/>
<path d="M300.7 312.4L301.7 316.1L303.5 311.5L302.5 307.7" fill="#d30008"/>
<path d="M302.5 307.7L303.5 311.5L305.4 306.9L304.3 303.1" fill="#e00900"/>
<path d="M304.3 303.1L305.4 306.9L307.2 302.3L306.2 298.4" fill="#e41b00"/>
<path d="M301.7 316.1L302.7 319.8L304.5 315.3L303.5 311.5" fill="#cc0014"/>
<path d="M303.5 311.5L304.5 315.3L306.4 310.8L305.4 306.9" fill="#e10003"/>
<path d="M305.4 306.9L306.4 310.8L308.2 306.3L307.2 302.3" fill="#e80e00"/>
<path d="M302.7 319.8L303.7 323.6L305.6 319.1L304.5 315.3" fill="#c30021"/>
<path d="M304.5 315.3L305.6 319.1L307.4 314.7L306.4 310.8" fill="#d70010"/>
<path d="M306.4 310.8L307.4 314.7L309.3 310.3L308.2 306.3" fill="#ec0000"/>
<polygon points="293.9,330.3 297.3,341.7 303.5,325.2 300.1,312.6" fill="#98003e"/>
<path d="M294.5 329.9L295.5 333.3L297.3 328.2L296.3 324.8" fill="#8d0042"/>
<path d="M296.3 324.8L297.3 328.2L299.1 323.2L298.1 319.6" fill="#a10031"/>
<path d="M298.1 319.6L299.1 323.2L300.9 318.1L299.9 314.4" fill="#b50020"/>
<path d="M295.5 333.3L296.5 336.7L298.3 331.7L297.3 328.2" fill="#86004d"/>
<path d="M297.3 328.2L298.3 331.7L300.1 326.8L299.1 323.2" fill="#9a003d"/>
<path d="M299.1 323.2L300.1 326.8L301.9 321.8L300.9 318.1" fill="#af002c"/>
<path d="M296.5 336.7L297.5 340.1L299.3 335.2L298.3 331.7" fill="#7e005a"/>
<path d="M298.3 331.7L299.3 335.2L301.1 330.3L300.1 326.8" fill="#920049"/>
<path d="M300.1 326.8L301.1 330.3L303.0 325.5L301.9 321.8" fill="#a60038"/>
<polygon points="287.8,348.5 291.2,358.8 297.3,341.7 293.9,330.3" fill="#560076"/>
<path d="M288.4 348.1L289.4 351.1L291.2 345.9L290.2 342.8" fill="#4b007a"/>
<path d="M290.2 342.8L291.2 345.9L292.9 340.6L292.0 337.4" fill="#5e006a"/>
<path d="M292.0 337.4L292.9 340.6L294.7 335.4L293.7 332.1" fill="#71005a"/>
<path d="M289.4 351.1L290.4 354.1L292.1 349.0L291.2 345.9" fill="#450085"/>
<path d="M291.2 345.9L292.1 349.0L293.9 343.9L292.9 340.6" fill="#570075"/>
<path d="M292.9 340.6L293.9 343.9L295.7 338.7L294.7 335.4" fill="#6a0065"/>
<path d="M290.4 354.1L291.3 357.1L293.1 352.1L292.1 349.0" fill="#3d0091"/>
<path d="M292.1 349.0L293.1 352.1L294.9 347.1L293.9 343.9" fill="#500081"/>
<path d="M293.9 343.9L294.9 347.1L296.7 342.1L295.7 338.7" fill="#630071"/>
<polygon points="281.8,366.4 285.1,375.4 291.2,358.8 287.8,348.5" fill="#1a00ac"/>
<path d="M282.4 365.9L283.3 368.5L285.1 363.4L284.1 360.7" fill="#0f00b1"/>
<path d="M284.1 360.7L285.1 363.4L286.9 358.3L285.9 355.5" fill="#2000a1"/>
<path d="M285.9 355.5L286.9 358.3L288.6 353.2L287.7 350.2" fill="#320091"/>
<path d="M283.3 368.5L284.3 371.2L286.1 366.2L285.1 363.4" fill="#0900bb"/>
<path d="M285.1 363.4L286.1 366.2L287.8 361.2L286.9 358.3" fill="#1a00ac"/>
<path d="M286.9 358.3L287.8 361.2L289.6 356.2L288.6 353.2" fill="#2b009c"/>
<path d="M284.3 371.2L285.3 373.8L287.0 368.9L286.1 366.2" fill="#0200c7"/>
<path d="M286.1 366.2L287.0 368.9L288.8 364.1L287.8 361.2" fill="#1300b7"/>
<path d="M287.8 361.2L288.8 364.1L290.6 359.2L289.6 356.2" fill="#2400a8"/>
<polygon points="275.9,382.9 279.1,390.7 285.1,375.4 281.8,366.4" fill="#0000a4"/>
<path d="M276.4 382.4L277.4 384.7L279.1 380.0L278.2 377.6" fill="#000096"/>
<path d="M278.2 377.6L279.1 380.0L280.9 375.3L279.9 372.8" fill="#0000a6"/>
<path d="M279.9 372.8L280.9 375.3L282.6 370.5L281.7 367.9" fill="#0000b7"/>
<path d="M277.4 384.7L278.3 387.0L280.0 382.4L279.1 380.0" fill="#000094"/>
<path d="M279.1 380.0L280.0 382.4L281.8 377.8L280.9 375.3" fill="#0000a4"/>
<path d="M280.9 375.3L281.8 377.8L283.6 373.1L282.6 370.5" fill="#0000b5"/>
<path d="M278.3 387.0L279.2 389.3L281.0 384.8L280.0 382.4" fill="#000092"/>
<path d="M280.0 382.4L281.0 384.8L282.8 380.3L281.8 377.8" fill="#0000a1"/>
<path d="M281.8 377.8L282.8 380.3L284.5 375.7L283.6 373.1" fill="#0000b2"/>
<polygon points="269.9,397.4 273.0,404.1 279.1,390.7 275.9,382.9" fill="#000072"/>
<path d="M270.5 397.0L271.4 398.9L273.1 394.8L272.2 392.7" fill="#000066"/>
<path d="M272.2 392.7L273.1 394.8L274.9 390.6L273.9 388.5" fill="#000073"/>
<path d="M273.9 388.5L274.9 390.6L276.6 386.5L275.7 384.2" fill="#000081"/>
<path d="M271.4 398.9L272.3 400.9L274.0 396.8L273.1 394.8" fill="#000064"/>
<path d="M273.1 394.8L274.0 396.8L275.8 392.8L274.9 390.6" fill="#000071"/>
<path d="M274.9 390.6L275.8 392.8L277.6 388.8L276.6 386.5" fill="#00007f"/>
<path d="M272.3 400.9L273.2 402.9L275.0 398.9L274.0 396.8" fill="#000062"/>
<path d="M274.0 396.8L275.0 398.9L276.7 395.0L275.8 392.8" fill="#00006f"/>
<path d="M275.8 392.8L276.7 395.0L278.5 391.0L277.6 388.8" fill="#00007d"/>
<polygon points="263.9,409.4 266.9,415.0 273.0,404.1 269.9,397.4" fill="#000049"/>
<path d="M264.4 409.0L265.8 411.5L268.4 406.5L267.1 403.8" fill="#000042"/>
<path d="M267.1 403.8L268.4 406.5L271.1 401.4L269.7 398.5" fill="#000052"/>
<path d="M265.8 411.5L267.1 414.0L269.8 409.2L268.4 406.5" fill="#00003f"/>
<path d="M268.4 406.5L269.8 409.2L272.5 404.3L271.1 401.4" fill="#00004f"/>
<polygon points="257.8,418.5 260.7,423.2 266.9,415.0 263.9,409.4" fill="#00002a"/>
<polygon points="251.5,424.7 254.4,428.6 260.7,423.2 257.8,418.5" fill="#000014"/>
<polygon points="245.1,427.9 247.9,431.3 254.4,428.6 251.5,424.7" fill="#000008"/>
<polygon points="238.5,428.6 241.2,431.5 247.9,431.3 245.1,427.9" fill="#000008"/>
<polygon points="231.6,427.0 234.2,429.5 241.2,431.5 238.5,428.6" fill="#00000e"/>
<polygon points="224.5,423.7 227.1,426.0 234.2,429.5 231.6,427.0" fill="#000019"/>
<polygon points="217.3,419.3 219.8,421.6 227.1,426.0 224.5,423.7" fill="#000025"/>
<polygon points="209.8,414.4 212.3,416.7 219.8,421.6 217.3,419.3" fill="#000034"/>
<polygon points="202.3,409.8 204.7,412.2 212.3,416.7 209.8,414.4" fill="#000047"/>
<polygon points="194.7,405.9 197.1,408.6 204.7,412.2 202.3,409.8" fill="#00005d"/>
<polygon points="187.1,403.4 189.5,406.3 197.1,408.6 194.7,405.9" fill="#000078"/>
<polygon points="179.5,402.5 181.9,405.7 189.5,406.3 187.1,403.4" fill="#000095"/>
<polygon points="172.0,403.4 174.4,406.8 181.9,405.7 179.5,402.5" fill="#0000ac"/>
<polygon points="164.7,406.0 167.0,409.7 174.4,406.8 172.0,403.4" fill="#0000b4"/>
<polygon points="459.9,335.0 464.0,337.4 468.8,337.2 464.8,334.6" fill="#0000a2"/>
<polygon points="454.9,336.9 459.0,339.0 464.0,337.4 459.9,335.0" fill="#0000ae"/>
<polygon points="449.7,340.3 453.8,342.1 459.0,339.0 454.9,336.9" fill="#0000ab"/>
<polygon points="444.4,345.2 448.4,346.8 453.8,342.1 449.7,340.3" fill="#00009a"/>
<polygon points="439.0,351.3 443.0,352.7 448.4,346.8 444.4,345.2" fill="#000083"/>
<polygon points="433.5,358.2 437.5,359.5 443.0,352.7 439.0,351.3" fill="#000069"/>
<polygon points="427.9,365.5 431.9,366.7 437.5,359.5 433.5,358.2" fill="#000050"/>
<polygon points="422.4,372.6 426.3,373.9 431.9,366.7 427.9,365.5" fill="#000039"/>
<polygon points="417.0,378.9 420.8,380.4 426.3,373.9 422.4,372.6" fill="#000025"/>
<polygon points="411.6,383.8 415.3,385.7 420.8,380.4 417.0,378.9" fill="#000015"/>
<polygon points="406.3,386.8 410.0,389.3 415.3,385.7 411.6,383.8" fill="#00000a"/>
<polygon points="401.1,387.5 404.7,390.8 410.0,389.3 406.3,386.8" fill="#000007"/>
<polygon points="395.9,385.7 399.5,389.9 404.7,390.8 401.1,387.5" fill="#00000d"/>
<polygon points="390.9,381.1 394.4,386.5 399.5,389.9 395.9,385.7" fill="#000019"/>
<polygon points="385.8,374.0 389.3,380.6 394.4,386.5 390.9,381.1" fill="#00002b"/>
<polygon points="380.7,364.4 384.2,372.4 389.3,380.6 385.8,374.0" fill="#000042"/>
<polygon points="375.6,352.8 379.0,362.4 384.2,372.4 380.7,364.4" fill="#00005f"/>
<polygon points="370.4,339.9 373.7,351.1 379.0,362.4 375.6,352.8" fill="#000085"/>
<polygon points="365.0,326.4 368.4,339.1 373.7,351.1 370.4,339.9" fill="#25006a"/>
<polygon points="359.4,313.1 362.8,327.4 368.4,339.1 365.0,326.4" fill="#51004b"/>
<path d="M360.0 314.8L361.5 321.0L363.9 326.5L362.4 320.6" fill="#620039"/>
<path d="M362.4 320.6L363.9 326.5L366.3 332.0L364.9 326.3" fill="#4c0048"/>
<path d="M361.5 321.0L362.9 327.3L365.4 332.5L363.9 326.5" fill="#58004b"/>
<path d="M363.9 326.5L365.4 332.5L367.8 337.7L366.3 332.0" fill="#43005a"/>
<polygon points="353.7,301.1 357.1,316.8 362.8,327.4 359.4,313.1" fill="#850028"/>
<path d="M354.2 302.8L355.7 309.7L358.3 314.7L356.8 308.1" fill="#980016"/>
<path d="M356.8 308.1L358.3 314.7L360.8 319.6L359.3 313.3" fill="#800026"/>
<path d="M355.7 309.7L357.2 316.5L359.8 321.3L358.3 314.7" fill="#8c0029"/>
<path d="M358.3 314.7L359.8 321.3L362.3 325.9L360.8 319.6" fill="#740038"/>
<polygon points="347.8,291.4 351.2,308.3 357.1,316.8 353.7,301.1" fill="#be0005"/>
<path d="M348.3 293.0L349.8 300.4L352.5 304.4L351.0 297.3" fill="#c51100"/>
<path d="M351.0 297.3L352.5 304.4L355.0 308.4L353.5 301.5" fill="#ba0001"/>
<path d="M349.8 300.4L351.3 307.8L354.0 311.6L352.5 304.4" fill="#c40006"/>
<path d="M352.5 304.4L354.0 311.6L356.5 315.4L355.0 308.4" fill="#ab0015"/>
<polygon points="341.7,284.7 345.1,302.5 351.2,308.3 347.8,291.4" fill="#db1e00"/>
<path d="M342.2 286.2L343.2 291.4L345.0 293.3L344.0 288.2" fill="#e03c00"/>
<path d="M344.0 288.2L345.0 293.3L346.8 295.1L345.8 290.1" fill="#d83200"/>
<path d="M345.8 290.1L346.8 295.1L348.6 297.0L347.6 292.0" fill="#d12700"/>
<path d="M343.2 291.4L344.3 296.6L346.1 298.4L345.0 293.3" fill="#e22b00"/>
<path d="M345.0 293.3L346.1 298.4L347.8 300.2L346.8 295.1" fill="#db2100"/>
<path d="M346.8 295.1L347.8 300.2L349.6 301.9L348.6 297.0" fill="#d31700"/>
<path d="M344.3 296.6L345.3 301.7L347.1 303.5L346.1 298.4" fill="#e31800"/>
<path d="M346.1 298.4L347.1 303.5L348.8 305.2L347.8 300.2" fill="#dc0f00"/>
<path d="M347.8 300.2L348.8 305.2L350.6 306.9L349.6 301.9" fill="#d60600"/>
<polygon points="335.4,281.8 338.9,300.0 345.1,302.5 341.7,284.7" fill="#f23b00"/>
<path d="M336.0 283.1L337.0 288.4L338.9 289.2L337.8 283.9" fill="#f95901"/>
<path d="M337.8 283.9L338.9 289.2L340.7 290.0L339.7 284.8" fill="#f25200"/>
<path d="M339.7 284.8L340.7 290.0L342.5 290.8L341.5 285.6" fill="#eb4a00"/>
<path d="M337.0 288.4L338.0 293.8L339.9 294.5L338.9 289.2" fill="#f84501"/>
<path d="M338.9 289.2L339.9 294.5L341.7 295.3L340.7 290.0" fill="#f23e00"/>
<path d="M340.7 290.0L341.7 295.3L343.5 296.0L342.5 290.8" fill="#eb3700"/>
<path d="M338.0 293.8L339.1 299.1L340.9 299.8L339.9 294.5" fill="#f83001"/>
<path d="M339.9 294.5L340.9 299.8L342.7 300.5L341.7 295.3" fill="#f22a00"/>
<path d="M341.7 295.3L342.7 300.5L344.5 301.2L343.5 296.0" fill="#ec2300"/>
<polygon points="329.0,283.0 332.6,301.3 338.9,300.0 335.4,281.8" fill="#ff641d"/>
<path d="M329.6 284.1L330.7 289.4L332.5 289.1L331.5 283.7" fill="#ffa645"/>
<path d="M331.5 283.7L332.5 289.1L334.4 288.7L333.4 283.3" fill="#ff7f1d"/>
<path d="M333.4 283.3L334.4 288.7L336.3 288.3L335.2 283.0" fill="#ff6809"/>
<path d="M330.7 289.4L331.7 294.8L333.6 294.4L332.5 289.1" fill="#ff8c40"/>
<path d="M332.5 289.1L333.6 294.4L335.4 294.0L334.4 288.7" fill="#ff681d"/>
<path d="M334.4 288.7L335.4 294.0L337.3 293.7L336.3 288.3" fill="#ff5309"/>
<path d="M331.7 294.8L332.7 300.1L334.6 299.8L333.6 294.4" fill="#ff6f3b"/>
<path d="M333.6 294.4L334.6 299.8L336.5 299.4L335.4 294.0" fill="#ff501b"/>
<path d="M335.4 294.0L336.5 299.4L338.3 299.0L337.3 293.7" fill="#ff3d0a"/>
<polygon points="322.6,288.4 326.2,306.4 332.6,301.3 329.0,283.0" fill="#ffe2a2"/>
<path d="M323.2 289.2L324.3 294.4L326.2 292.9L325.1 287.6" fill="#fff9a6"/>
<path d="M325.1 287.6L326.2 292.9L328.0 291.4L327.0 286.0" fill="#ffffaa"/>
<path d="M327.0 286.0L328.0 291.4L329.9 289.8L328.9 284.5" fill="#ffea8c"/>
<path d="M324.3 294.4L325.3 299.7L327.2 298.2L326.2 292.9" fill="#ffe4a7"/>
<path d="M326.2 292.9L327.2 298.2L329.1 296.7L328.0 291.4" fill="#ffe6a2"/>
<path d="M328.0 291.4L329.1 296.7L330.9 295.2L329.9 289.8" fill="#ffc981"/>
<path d="M325.3 299.7L326.3 305.0L328.2 303.5L327.2 298.2" fill="#ffc8a1"/>
<path d="M327.2 298.2L328.2 303.5L330.1 302.0L329.1 296.7" fill="#ffc496"/>
<path d="M329.1 296.7L330.1 302.0L332.0 300.5L330.9 295.2" fill="#ffa775"/>
<polygon points="316.2,297.7 319.8,314.9 326.2,306.4 322.6,288.4" fill="#ff7d59"/>
<path d="M316.8 298.1L317.9 303.2L319.7 300.6L318.7 295.4" fill="#ff5727"/>
<path d="M318.7 295.4L319.7 300.6L321.6 297.9L320.6 292.7" fill="#ff8549"/>
<path d="M320.6 292.7L321.6 297.9L323.5 295.3L322.5 290.0" fill="#ffba74"/>
<path d="M317.9 303.2L318.9 308.3L320.8 305.7L319.7 300.6" fill="#ff5135"/>
<path d="M319.7 300.6L320.8 305.7L322.7 303.1L321.6 297.9" fill="#ff8059"/>
<path d="M321.6 297.9L322.7 303.1L324.5 300.6L323.5 295.3" fill="#ffb281"/>
<path d="M318.9 308.3L319.9 313.4L321.8 310.8L320.8 305.7" fill="#ff4a42"/>
<path d="M320.8 305.7L321.8 310.8L323.7 308.3L322.7 303.1" fill="#ff7765"/>
<path d="M322.7 303.1L323.7 308.3L325.6 305.8L324.5 300.6" fill="#ffa488"/>
<polygon points="309.8,310.2 313.4,326.4 319.8,314.9 316.2,297.7" fill="#fd0a10"/>
<path d="M310.4 310.4L311.5 315.2L313.3 311.6L312.3 306.8" fill="#f70202"/>
<path d="M312.3 306.8L313.3 311.6L315.2 308.1L314.2 303.1" fill="#fe1405"/>
<path d="M314.2 303.1L315.2 308.1L317.1 304.5L316.1 299.5" fill="#ff2a0d"/>
<path d="M311.5 315.2L312.5 320.0L314.4 316.5L313.3 311.6" fill="#e90415"/>
<path d="M313.3 311.6L314.4 316.5L316.3 313.0L315.2 308.1" fill="#ff090d"/>
<path d="M315.2 308.1L316.3 313.0L318.1 309.5L317.1 304.5" fill="#ff1f15"/>
<path d="M312.5 320.0L313.5 324.7L315.4 321.4L314.4 316.5" fill="#db072b"/>
<path d="M314.4 316.5L315.4 321.4L317.3 318.0L316.3 313.0" fill="#f40f25"/>
<path d="M316.3 313.0L317.3 318.0L319.2 314.6L318.1 309.5" fill="#ff1e28"/>
<polygon points="303.5,325.2 307.0,340.1 313.4,326.4 309.8,310.2" fill="#b70038"/>
<path d="M304.1 325.2L305.2 329.6L307.0 325.4L306.0 320.8" fill="#b30035"/>
<path d="M306.0 320.8L307.0 325.4L308.9 321.1L307.8 316.5" fill="#c70025"/>
<path d="M307.8 316.5L308.9 321.1L310.7 316.8L309.7 312.1" fill="#da0016"/>
<path d="M305.2 329.6L306.2 334.0L308.0 329.9L307.0 325.4" fill="#a60045"/>
<path d="M307.0 325.4L308.0 329.9L309.9 325.7L308.9 321.1" fill="#b90036"/>
<path d="M308.9 321.1L309.9 325.7L311.7 321.5L310.7 316.8" fill="#cc0127"/>
<path d="M306.2 334.0L307.2 338.4L309.1 334.4L308.0 329.9" fill="#980056"/>
<path d="M308.0 329.9L309.1 334.4L310.9 330.3L309.9 325.7" fill="#ab0148"/>
<path d="M309.9 325.7L310.9 330.3L312.8 326.3L311.7 321.5" fill="#be023a"/>
<polygon points="297.3,341.7 300.8,355.2 307.0,340.1 303.5,325.2" fill="#77006d"/>
<path d="M297.9 341.6L298.9 345.5L300.7 340.8L299.7 336.8" fill="#71006d"/>
<path d="M299.7 336.8L300.7 340.8L302.6 336.2L301.5 331.9" fill="#84005c"/>
<path d="M301.5 331.9L302.6 336.2L304.4 331.4L303.4 327.1" fill="#97004c"/>
<path d="M298.9 345.5L299.9 349.5L301.8 344.9L300.7 340.8" fill="#65007b"/>
<path d="M300.7 340.8L301.8 344.9L303.6 340.4L302.6 336.2" fill="#78006b"/>
<path d="M302.6 336.2L303.6 340.4L305.4 335.8L304.4 331.4" fill="#8b005b"/>
<path d="M299.9 349.5L300.9 353.5L302.8 349.0L301.8 344.9" fill="#59008b"/>
<path d="M301.8 344.9L302.8 349.0L304.6 344.6L303.6 340.4" fill="#6b007b"/>
<path d="M303.6 340.4L304.6 344.6L306.5 340.1L305.4 335.8" fill="#7e006c"/>
<polygon points="291.2,358.8 294.6,370.6 300.8,355.2 297.3,341.7" fill="#3800a2"/>
<path d="M291.7 358.5L292.7 362.0L294.5 357.2L293.5 353.5" fill="#3100a3"/>
<path d="M293.5 353.5L294.5 357.2L296.4 352.3L295.3 348.5" fill="#430093"/>
<path d="M295.3 348.5L296.4 352.3L298.2 347.5L297.2 343.6" fill="#560083"/>
<path d="M292.7 362.0L293.7 365.5L295.5 360.8L294.5 357.2" fill="#2700b1"/>
<path d="M294.5 357.2L295.5 360.8L297.4 356.1L296.4 352.3" fill="#3900a1"/>
<path d="M296.4 352.3L297.4 356.1L299.2 351.4L298.2 347.5" fill="#4b0091"/>
<path d="M293.7 365.5L294.7 369.0L296.6 364.4L295.5 360.8" fill="#1d00bf"/>
<path d="M295.5 360.8L296.6 364.4L298.4 359.9L297.4 356.1" fill="#2e00b0"/>
<path d="M297.4 356.1L298.4 359.9L300.2 355.3L299.2 351.4" fill="#4000a0"/>
<polygon points="285.1,375.4 288.4,385.7 294.6,370.6 291.2,358.8" fill="#0000d2"/>
<path d="M285.7 375.0L286.6 378.0L288.4 373.3L287.4 370.2" fill="#0000c5"/>
<path d="M287.4 370.2L288.4 373.3L290.2 368.6L289.2 365.3" fill="#0700c9"/>
<path d="M289.2 365.3L290.2 368.6L292.0 363.9L291.0 360.5" fill="#1800b9"/>
<path d="M286.6 378.0L287.6 381.1L289.4 376.5L288.4 373.3" fill="#0000c0"/>
<path d="M288.4 373.3L289.4 376.5L291.2 372.0L290.2 368.6" fill="#0000d2"/>
<path d="M290.2 368.6L291.2 372.0L293.0 367.4L292.0 363.9" fill="#0f00c7"/>
<path d="M287.6 381.1L288.6 384.1L290.4 379.7L289.4 376.5" fill="#0000ba"/>
<path d="M289.4 376.5L290.4 379.7L292.2 375.3L291.2 372.0" fill="#0000cc"/>
<path d="M291.2 372.0L292.2 375.3L294.0 370.8L293.0 367.4" fill="#0500d4"/>
<polygon points="279.1,390.7 282.3,399.5 288.4,385.7 285.1,375.4" fill="#000098"/>
<path d="M279.6 390.3L280.6 392.9L282.3 388.6L281.4 385.8" fill="#00008d"/>
<path d="M281.4 385.8L282.3 388.6L284.1 384.2L283.2 381.4" fill="#00009c"/>
<path d="M283.2 381.4L284.1 384.2L285.9 379.9L284.9 376.9" fill="#0000ad"/>
<path d="M280.6 392.9L281.5 395.5L283.3 391.3L282.3 388.6" fill="#000089"/>
<path d="M282.3 388.6L283.3 391.3L285.1 387.1L284.1 384.2" fill="#000098"/>
<path d="M284.1 384.2L285.1 387.1L286.9 382.9L285.9 379.9" fill="#0000a8"/>
<path d="M281.5 395.5L282.5 398.1L284.3 394.0L283.3 391.3" fill="#000084"/>
<path d="M283.3 391.3L284.3 394.0L286.1 390.0L285.1 387.1" fill="#000093"/>
<path d="M285.1 387.1L286.1 390.0L287.9 385.9L286.9 382.9" fill="#0000a3"/>
<polygon points="273.0,404.1 276.2,411.4 282.3,399.5 279.1,390.7" fill="#000068"/>
<path d="M273.6 403.7L274.5 405.9L276.3 402.1L275.3 399.8" fill="#00005e"/>
<path d="M275.3 399.8L276.3 402.1L278.1 398.3L277.1 395.9" fill="#00006b"/>
<path d="M277.1 395.9L278.1 398.3L279.8 394.5L278.9 392.0" fill="#000078"/>
<path d="M274.5 405.9L275.4 408.1L277.2 404.4L276.3 402.1" fill="#00005a"/>
<path d="M276.3 402.1L277.2 404.4L279.0 400.8L278.1 398.3" fill="#000067"/>
<path d="M278.1 398.3L279.0 400.8L280.8 397.1L279.8 394.5" fill="#000074"/>
<path d="M275.4 408.1L276.3 410.2L278.1 406.7L277.2 404.4" fill="#000056"/>
<path d="M277.2 404.4L278.1 406.7L279.9 403.2L279.0 400.8" fill="#000063"/>
<path d="M279.0 400.8L279.9 403.2L281.7 399.6L280.8 397.1" fill="#000070"/>
<polygon points="266.9,415.0 270.0,421.1 276.2,411.4 273.0,404.1" fill="#000041"/>
<path d="M267.5 414.7L268.8 417.4L271.5 412.9L270.1 409.9" fill="#00003a"/>
<path d="M270.1 409.9L271.5 412.9L274.2 408.3L272.8 405.1" fill="#00004a"/>
<path d="M268.8 417.4L270.2 420.1L272.9 415.8L271.5 412.9" fill="#000036"/>
<path d="M271.5 412.9L272.9 415.8L275.6 411.5L274.2 408.3" fill="#000045"/>
<polygon points="260.7,423.2 263.7,428.1 270.0,421.1 266.9,415.0" fill="#000023"/>
<polygon points="254.4,428.6 257.3,432.6 263.7,428.1 260.7,423.2" fill="#000010"/>
<polygon points="247.9,431.3 250.7,434.5 257.3,432.6 254.4,428.6" fill="#000007"/>
<polygon points="241.2,431.5 243.9,434.1 250.7,434.5 247.9,431.3" fill="#000009"/>
<polygon points="219.8,421.6 222.3,423.5 229.7,428.0 227.1,426.0" fill="#000026"/>
<polygon points="212.3,416.7 214.8,418.8 222.3,423.5 219.8,421.6" fill="#000035"/>
<polygon points="204.7,412.2 207.2,414.5 214.8,418.8 212.3,416.7" fill="#000047"/>
<polygon points="197.1,408.6 199.5,411.1 207.2,414.5 204.7,412.2" fill="#00005f"/>
<polygon points="189.5,406.3 191.9,409.2 199.5,411.1 197.1,408.6" fill="#00007a"/>
<polygon points="181.9,405.7 184.3,408.9 191.9,409.2 189.5,406.3" fill="#000098"/>
<polygon points="174.4,406.8 176.7,410.4 184.3,408.9 181.9,405.7" fill="#0000af"/>
<polygon points="167.0,409.7 169.3,413.6 176.7,410.4 174.4,406.8" fill="#0000b6"/>
<polygon points="464.0,337.4 468.1,339.8 472.9,339.9 468.8,337.2" fill="#00009f"/>
<polygon points="459.0,339.0 463.1,341.1 468.1,339.8 464.0,337.4" fill="#0000ad"/>
<polygon points="453.8,342.1 457.9,344.0 463.1,341.1 459.0,339.0" fill="#0000ac"/>
<polygon points="448.4,346.8 452.5,348.3 457.9,344.0 453.8,342.1" fill="#00009c"/>
<polygon points="443.0,352.7 447.1,353.9 452.5,348.3 448.4,346.8" fill="#000085"/>
<polygon points="437.5,359.5 441.5,360.5 447.1,353.9 443.0,352.7" fill="#00006c"/>
<polygon points="431.9,366.7 435.9,367.7 441.5,360.5 437.5,359.5" fill="#000054"/>
<polygon points="426.3,373.9 430.3,374.9 435.9,367.7 431.9,366.7" fill="#00003d"/>
<polygon points="420.8,380.4 424.7,381.6 430.3,374.9 426.3,373.9" fill="#000029"/>
<polygon points="415.3,385.7 419.2,387.3 424.7,381.6 420.8,380.4" fill="#000019"/>
<polygon points="410.0,389.3 413.8,391.5 419.2,387.3 415.3,385.7" fill="#00000c"/>
<polygon points="404.7,390.8 408.4,393.9 413.8,391.5 410.0,389.3" fill="#000007"/>
<polygon points="399.5,389.9 403.1,394.0 408.4,393.9 404.7,390.8" fill="#00000a"/>
<polygon points="394.4,386.5 397.9,391.9 403.1,394.0 399.5,389.9" fill="#000015"/>
<polygon points="389.3,380.6 392.8,387.5 397.9,391.9 394.4,386.5" fill="#000025"/>
<polygon points="384.2,372.4 387.6,380.9 392.8,387.5 389.3,380.6" fill="#00003c"/>
<polygon points="379.0,362.4 382.4,372.7 387.6,380.9 384.2,372.4" fill="#000059"/>
<polygon points="373.7,351.1 377.1,363.2 382.4,372.7 379.0,362.4" fill="#00007e"/>
<path d="M374.3 352.5L375.7 357.7L378.1 362.4L376.6 357.4" fill="#000089"/>
<path d="M376.6 357.4L378.1 362.4L380.4 366.9L378.9 362.3" fill="#000077"/>
<path d="M375.7 357.7L377.2 363.0L379.6 367.3L378.1 362.4" fill="#000084"/>
<path d="M378.1 362.4L379.6 367.3L381.9 371.5L380.4 366.9" fill="#000072"/>
<polygon points="368.4,339.1 371.7,353.1 377.1,363.2 373.7,351.1" fill="#0b0095"/>
<path d="M368.9 340.7L370.4 346.8L372.7 351.6L371.3 345.9" fill="#1b0084"/>
<path d="M371.3 345.9L372.7 351.6L375.1 356.5L373.6 351.1" fill="#090091"/>
<path d="M370.4 346.8L371.8 352.9L374.2 357.4L372.7 351.6" fill="#0d0099"/>
<path d="M372.7 351.6L374.2 357.4L376.6 361.9L375.1 356.5" fill="#00009d"/>
<polygon points="362.8,327.4 366.2,343.1 371.7,353.1 368.4,339.1" fill="#340078"/>
<path d="M363.4 329.1L364.8 335.9L367.3 340.7L365.8 334.2" fill="#460065"/>
<path d="M365.8 334.2L367.3 340.7L369.7 345.5L368.2 339.3" fill="#320073"/>
<path d="M364.8 335.9L366.3 342.8L368.8 347.2L367.3 340.7" fill="#36007b"/>
<path d="M367.3 340.7L368.8 347.2L371.2 351.6L369.7 345.5" fill="#230088"/>
<polygon points="357.1,316.8 360.5,334.1 366.2,343.1 362.8,327.4" fill="#620059"/>
<path d="M357.6 318.5L359.1 326.1L361.6 330.4L360.2 323.2" fill="#770045"/>
<path d="M360.2 323.2L361.6 330.4L364.2 334.7L362.7 327.7" fill="#610053"/>
<path d="M359.1 326.1L360.6 333.6L363.1 337.7L361.6 330.4" fill="#63005e"/>
<path d="M361.6 330.4L363.1 337.7L365.6 341.7L364.2 334.7" fill="#4f006b"/>
<polygon points="351.2,308.3 354.6,326.9 360.5,334.1 357.1,316.8" fill="#92003c"/>
<path d="M351.8 309.9L352.7 315.3L354.5 317.7L353.5 312.4" fill="#b1001f"/>
<path d="M353.5 312.4L354.5 317.7L356.2 320.1L355.2 314.9" fill="#a20028"/>
<path d="M355.2 314.9L356.2 320.1L357.9 322.5L356.9 317.4" fill="#930032"/>
<path d="M352.7 315.3L353.7 320.8L355.5 323.1L354.5 317.7" fill="#a10031"/>
<path d="M354.5 317.7L355.5 323.1L357.2 325.3L356.2 320.1" fill="#93003a"/>
<path d="M356.2 320.1L357.2 325.3L358.9 327.6L357.9 322.5" fill="#850043"/>
<path d="M353.7 320.8L354.7 326.2L356.5 328.4L355.5 323.1" fill="#910044"/>
<path d="M355.5 323.1L356.5 328.4L358.2 330.5L357.2 325.3" fill="#84004c"/>
<path d="M357.2 325.3L358.2 330.5L359.9 332.7L358.9 327.6" fill="#760054"/>
<polygon points="345.1,302.5 348.5,322.0 354.6,326.9 351.2,308.3" fill="#bf0021"/>
<path d="M345.7 304.0L346.7 309.7L348.5 311.3L347.5 305.7" fill="#e10004"/>
<path d="M347.5 305.7L348.5 311.3L350.3 312.9L349.3 307.4" fill="#d4000b"/>
<path d="M349.3 307.4L350.3 312.9L352.0 314.5L351.0 309.0" fill="#c50013"/>
<path d="M346.7 309.7L347.7 315.4L349.5 317.0L348.5 311.3" fill="#cd0018"/>
<path d="M348.5 311.3L349.5 317.0L351.3 318.5L350.3 312.9" fill="#c1001f"/>
<path d="M350.3 312.9L351.3 318.5L353.0 320.0L352.0 314.5" fill="#b40026"/>
<path d="M347.7 315.4L348.7 321.2L350.5 322.6L349.5 317.0" fill="#b9002d"/>
<path d="M349.5 317.0L350.5 322.6L352.2 324.0L351.3 318.5" fill="#ae0033"/>
<path d="M351.3 318.5L352.2 324.0L354.0 325.5L353.0 320.0" fill="#a2003a"/>
<polygon points="338.9,300.0 342.3,320.1 348.5,322.0 345.1,302.5" fill="#e4000e"/>
<path d="M339.5 301.4L340.5 307.3L342.3 307.9L341.3 302.1" fill="#f81102"/>
<path d="M341.3 302.1L342.3 307.9L344.1 308.6L343.1 302.8" fill="#f20b00"/>
<path d="M343.1 302.8L344.1 308.6L346.0 309.2L344.9 303.5" fill="#ec0600"/>
<path d="M340.5 307.3L341.5 313.2L343.3 313.8L342.3 307.9" fill="#f00209"/>
<path d="M342.3 307.9L343.3 313.8L345.1 314.4L344.1 308.6" fill="#e7000b"/>
<path d="M344.1 308.6L345.1 314.4L347.0 315.0L346.0 309.2" fill="#dd0010"/>
<path d="M341.5 313.2L342.5 319.1L344.3 319.6L343.3 313.8" fill="#d90220"/>
<path d="M343.3 313.8L344.3 319.6L346.1 320.2L345.1 314.4" fill="#d00022"/>
<path d="M345.1 314.4L346.1 320.2L348.0 320.7L347.0 315.0" fill="#c80025"/>
<polygon points="332.6,301.3 336.1,321.5 342.3,320.1 338.9,300.0" fill="#ff171d"/>
<path d="M333.2 302.5L334.2 308.4L336.0 308.0L335.0 302.1" fill="#ff4733"/>
<path d="M335.0 302.1L336.0 308.0L337.9 307.6L336.9 301.7" fill="#ff2d19"/>
<path d="M336.9 301.7L337.9 307.6L339.7 307.2L338.7 301.3" fill="#ff1d0a"/>
<path d="M334.2 308.4L335.2 314.3L337.1 313.9L336.0 308.0" fill="#ff2e32"/>
<path d="M336.0 308.0L337.1 313.9L338.9 313.5L337.9 307.6" fill="#ff171a"/>
<path d="M337.9 307.6L338.9 313.5L340.7 313.1L339.7 307.2" fill="#ff090e"/>
<path d="M335.2 314.3L336.2 320.2L338.1 319.8L337.1 313.9" fill="#ff2945"/>
<path d="M337.1 313.9L338.1 319.8L339.9 319.4L338.9 313.5" fill="#f71530"/>
<path d="M338.9 313.5L339.9 319.4L341.8 319.0L340.7 313.1" fill="#e80925"/>
<polygon points="326.2,306.4 329.7,326.2 336.1,321.5 332.6,301.3" fill="#ff7886"/>
<path d="M326.8 307.3L327.8 313.1L329.7 311.6L328.6 305.8" fill="#ff9b94"/>
<path d="M328.6 305.8L329.7 311.6L331.5 310.2L330.5 304.3" fill="#ff9084"/>
<path d="M330.5 304.3L331.5 310.2L333.4 308.8L332.4 302.8" fill="#ff7565"/>
<path d="M327.8 313.1L328.8 318.9L330.7 317.5L329.7 311.6" fill="#ff899b"/>
<path d="M329.7 311.6L330.7 317.5L332.6 316.1L331.5 310.2" fill="#ff7783"/>
<path d="M331.5 310.2L332.6 316.1L334.4 314.7L333.4 308.8" fill="#ff5a61"/>
<path d="M328.8 318.9L329.9 324.7L331.7 323.4L330.7 317.5" fill="#ff7ea7"/>
<path d="M330.7 317.5L331.7 323.4L333.6 322.0L332.6 316.1" fill="#ff6b8f"/>
<path d="M332.6 316.1L333.6 322.0L335.5 320.6L334.4 314.7" fill="#ff506f"/>
<polygon points="319.8,314.9 323.3,333.9 329.7,326.2 326.2,306.4" fill="#ff749a"/>
<path d="M320.4 315.5L321.4 321.1L323.3 318.7L322.2 313.1" fill="#ff5168"/>
<path d="M322.2 313.1L323.3 318.7L325.2 316.3L324.1 310.6" fill="#ff707d"/>
<path d="M324.1 310.6L325.2 316.3L327.0 313.9L326.0 308.1" fill="#ff8a8e"/>
<path d="M321.4 321.1L322.4 326.7L324.3 324.4L323.3 318.7" fill="#ff5986"/>
<path d="M323.3 318.7L324.3 324.4L326.2 322.0L325.2 316.3" fill="#ff7397"/>
<path d="M325.2 316.3L326.2 322.0L328.1 319.7L327.0 313.9" fill="#ff87a2"/>
<path d="M322.4 326.7L323.5 332.3L325.3 330.0L324.3 324.4" fill="#ff5ea1"/>
<path d="M324.3 324.4L325.3 330.0L327.2 327.8L326.2 322.0" fill="#ff74ae"/>
<path d="M326.2 322.0L327.2 327.8L329.1 325.5L328.1 319.7" fill="#ff82b4"/>
<polygon points="313.4,326.4 316.9,344.2 323.3,333.9 319.8,314.9" fill="#d4206a"/>
<path d="M314.0 326.8L315.0 332.1L316.9 328.8L315.8 323.4" fill="#c70d4c"/>
<path d="M315.8 323.4L316.9 328.8L318.8 325.6L317.7 320.1" fill="#e3194b"/>
<path d="M317.7 320.1L318.8 325.6L320.6 322.3L319.6 316.7" fill="#ff2b52"/>
<path d="M315.0 332.1L316.0 337.3L317.9 334.2L316.9 328.8" fill="#b91266"/>
<path d="M316.9 328.8L317.9 334.2L319.8 331.0L318.8 325.6" fill="#d62068"/>
<path d="M318.8 325.6L319.8 331.0L321.7 327.9L320.6 322.3" fill="#f73470"/>
<path d="M316.0 337.3L317.1 342.6L319.0 339.5L317.9 334.2" fill="#ab1881"/>
<path d="M317.9 334.2L319.0 339.5L320.8 336.5L319.8 331.0" fill="#c92884"/>
<path d="M319.8 331.0L320.8 336.5L322.7 333.4L321.7 327.9" fill="#ea3c8e"/>
<polygon points="307.0,340.1 310.6,356.5 316.9,344.2 313.4,326.4" fill="#840479"/>
<path d="M307.6 340.3L308.7 345.1L310.5 341.3L309.5 336.3" fill="#830170"/>
<path d="M309.5 336.3L310.5 341.3L312.4 337.4L311.3 332.3" fill="#950262"/>
<path d="M311.3 332.3L312.4 337.4L314.2 333.5L313.2 328.3" fill="#a80557"/>
<path d="M308.7 345.1L309.7 349.9L311.6 346.2L310.5 341.3" fill="#730283"/>
<path d="M310.5 341.3L311.6 346.2L313.4 342.5L312.4 337.4" fill="#850477"/>
<path d="M312.4 337.4L313.4 342.5L315.3 338.7L314.2 333.5" fill="#99076d"/>
<path d="M309.7 349.9L310.7 354.8L312.6 351.2L311.6 346.2" fill="#620397"/>
<path d="M311.6 346.2L312.6 351.2L314.5 347.5L313.4 342.5" fill="#75068d"/>
<path d="M313.4 342.5L314.5 347.5L316.3 343.9L315.3 338.7" fill="#890b85"/>
<polygon points="300.8,355.2 304.3,369.8 310.6,356.5 307.0,340.1" fill="#4800a5"/>
<path d="M301.4 355.2L302.4 359.5L304.2 355.3L303.2 350.8" fill="#4600a1"/>
<path d="M303.2 350.8L304.2 355.3L306.1 351.0L305.0 346.4" fill="#580092"/>
<path d="M305.0 346.4L306.1 351.0L307.9 346.8L306.9 342.0" fill="#690084"/>
<path d="M302.4 359.5L303.4 363.8L305.2 359.7L304.2 355.3" fill="#3800b2"/>
<path d="M304.2 355.3L305.2 359.7L307.1 355.6L306.1 351.0" fill="#4900a4"/>
<path d="M306.1 351.0L307.1 355.6L308.9 351.5L307.9 346.8" fill="#5a0096"/>
<path d="M303.4 363.8L304.4 368.2L306.3 364.2L305.2 359.7" fill="#2900c4"/>
<path d="M305.2 359.7L306.3 364.2L308.1 360.3L307.1 355.6" fill="#3a00b6"/>
<path d="M307.1 355.6L308.1 360.3L310.0 356.3L308.9 351.5" fill="#4a01a9"/>
<polygon points="294.6,370.6 298.0,383.5 304.3,369.8 300.8,355.2" fill="#1000d6"/>
<path d="M295.2 370.5L296.2 374.3L298.0 370.0L297.0 366.0" fill="#0c00d4"/>
<path d="M297.0 366.0L298.0 370.0L299.8 365.6L298.8 361.5" fill="#1d00c5"/>
<path d="M298.8 361.5L299.8 365.6L301.6 361.2L300.6 357.0" fill="#2e00b6"/>
<path d="M296.2 374.3L297.2 378.1L299.0 373.9L298.0 370.0" fill="#0000e4"/>
<path d="M298.0 370.0L299.0 373.9L300.8 369.7L299.8 365.6" fill="#1000d5"/>
<path d="M299.8 365.6L300.8 369.7L302.7 365.5L301.6 361.2" fill="#2100c7"/>
<path d="M297.2 378.1L298.2 381.9L300.0 377.9L299.0 373.9" fill="#0000d9"/>
<path d="M299.0 373.9L300.0 377.9L301.8 373.8L300.8 369.7" fill="#0300e6"/>
<path d="M300.8 369.7L301.8 373.8L303.7 369.8L302.7 365.5" fill="#1200d8"/>
<polygon points="288.4,385.7 291.8,396.7 298.0,383.5 294.6,370.6" fill="#0000ba"/>
<path d="M289.0 385.4L290.0 388.7L291.8 384.5L290.8 381.1" fill="#0000b1"/>
<path d="M290.8 381.1L291.8 384.5L293.6 380.3L292.6 376.7" fill="#0000c2"/>
<path d="M292.6 376.7L293.6 380.3L295.4 376.1L294.4 372.3" fill="#0000d3"/>
<path d="M290.0 388.7L291.0 392.0L292.8 387.9L291.8 384.5" fill="#0000a9"/>
<path d="M291.8 384.5L292.8 387.9L294.6 383.9L293.6 380.3" fill="#0000b9"/>
<path d="M293.6 380.3L294.6 383.9L296.4 379.8L295.4 376.1" fill="#0000ca"/>
<path d="M291.0 392.0L292.0 395.3L293.8 391.4L292.8 387.9" fill="#0000a1"/>
<path d="M292.8 387.9L293.8 391.4L295.6 387.5L294.6 383.9" fill="#0000b0"/>
<path d="M294.6 383.9L295.6 387.5L297.4 383.5L296.4 379.8" fill="#0000c1"/>
<polygon points="282.3,399.5 285.6,408.8 291.8,396.7 288.4,385.7" fill="#000085"/>
<path d="M282.9 399.2L283.8 401.9L285.6 398.1L284.7 395.2" fill="#00007c"/>
<path d="M284.7 395.2L285.6 398.1L287.4 394.2L286.5 391.2" fill="#00008a"/>
<path d="M286.5 391.2L287.4 394.2L289.2 390.4L288.3 387.1" fill="#00009a"/>
<path d="M283.8 401.9L284.8 404.7L286.6 401.0L285.6 398.1" fill="#000076"/>
<path d="M285.6 398.1L286.6 401.0L288.4 397.3L287.4 394.2" fill="#000084"/>
<path d="M287.4 394.2L288.4 397.3L290.2 393.6L289.2 390.4" fill="#000093"/>
<path d="M284.8 404.7L285.8 407.5L287.6 403.9L286.6 401.0" fill="#00006f"/>
<path d="M286.6 401.0L287.6 403.9L289.4 400.4L288.4 397.3" fill="#00007d"/>
<path d="M288.4 397.3L289.4 400.4L291.2 396.8L290.2 393.6" fill="#00008b"/>
<polygon points="276.2,411.4 279.4,419.1 285.6,408.8 282.3,399.5" fill="#000058"/>
<path d="M276.7 411.1L277.7 413.4L279.5 410.1L278.5 407.7" fill="#000050"/>
<path d="M278.5 407.7L279.5 410.1L281.3 406.8L280.3 404.2" fill="#00005c"/>
<path d="M280.3 404.2L281.3 406.8L283.1 403.4L282.1 400.7" fill="#000069"/>
<path d="M277.7 413.4L278.6 415.7L280.4 412.5L279.5 410.1" fill="#00004c"/>
<path d="M279.5 410.1L280.4 412.5L282.2 409.3L281.3 406.8" fill="#000057"/>
<path d="M281.3 406.8L282.2 409.3L284.1 406.1L283.1 403.4" fill="#000063"/>
<path d="M278.6 415.7L279.6 418.0L281.4 414.9L280.4 412.5" fill="#000047"/>
<path d="M280.4 412.5L281.4 414.9L283.2 411.9L282.2 409.3" fill="#000052"/>
<path d="M282.2 409.3L283.2 411.9L285.0 408.8L284.1 406.1" fill="#00005e"/>
<polygon points="270.0,421.1 273.1,427.2 279.4,419.1 276.2,411.4" fill="#000035"/>
<path d="M270.5 420.9L271.9 423.6L274.6 419.7L273.3 416.6" fill="#000030"/>
<path d="M273.3 416.6L274.6 419.7L277.4 415.8L276.0 412.4" fill="#00003e"/>
<path d="M271.9 423.6L273.3 426.4L276.0 422.7L274.6 419.7" fill="#00002a"/>
<path d="M274.6 419.7L276.0 422.7L278.8 419.1L277.4 415.8" fill="#000037"/>
<polygon points="263.7,428.1 266.7,433.0 273.1,427.2 270.0,421.1" fill="#00001b"/>
<polygon points="257.3,432.6 260.2,436.4 266.7,433.0 263.7,428.1" fill="#00000b"/>
<polygon points="250.7,434.5 253.5,437.4 260.2,436.4 257.3,432.6" fill="#000007"/>
<polygon points="214.8,418.8 217.4,420.6 224.9,425.1 222.3,423.5" fill="#000036"/>
<polygon points="207.2,414.5 209.7,416.5 217.4,420.6 214.8,418.8" fill="#00004a"/>
<polygon points="199.5,411.1 202.0,413.6 209.7,416.5 207.2,414.5" fill="#000062"/>
<polygon points="191.9,409.2 194.4,412.0 202.0,413.6 199.5,411.1" fill="#00007e"/>
<polygon points="184.3,408.9 186.7,412.2 194.4,412.0 191.9,409.2" fill="#00009c"/>
<polygon points="176.7,410.4 179.2,414.1 186.7,412.2 184.3,408.9" fill="#0000b2"/>
<polygon points="169.3,413.6 171.7,417.7 179.2,414.1 176.7,410.4" fill="#0000b7"/>
<polygon points="468.1,339.8 472.2,342.4 477.0,342.8 472.9,339.9" fill="#00009d"/>
<polygon points="463.1,341.1 467.2,343.4 472.2,342.4 468.1,339.8" fill="#0000ac"/>
<polygon points="457.9,344.0 462.0,345.8 467.2,343.4 463.1,341.1" fill="#0000ad"/>
<polygon points="452.5,348.3 456.7,349.7 462.0,345.8 457.9,344.0" fill="#00009f"/>
<polygon points="447.1,353.9 451.2,355.0 456.7,349.7 452.5,348.3" fill="#000089"/>
<polygon points="441.5,360.5 445.7,361.3 451.2,355.0 447.1,353.9" fill="#000070"/>
<polygon points="435.9,367.7 440.0,368.3 445.7,361.3 441.5,360.5" fill="#000058"/>
<polygon points="430.3,374.9 434.4,375.5 440.0,368.3 435.9,367.7" fill="#000041"/>
<polygon points="424.7,381.6 428.7,382.4 434.4,375.5 430.3,374.9" fill="#00002e"/>
<polygon points="419.2,387.3 423.2,388.5 428.7,382.4 424.7,381.6" fill="#00001d"/>
<polygon points="413.8,391.5 417.6,393.4 423.2,388.5 419.2,387.3" fill="#000010"/>
<polygon points="408.4,393.9 412.2,396.6 417.6,393.4 413.8,391.5" fill="#000008"/>
<polygon points="403.1,394.0 406.9,397.9 412.2,396.6 408.4,393.9" fill="#000007"/>
<polygon points="397.9,391.9 401.6,397.1 406.9,397.9 403.1,394.0" fill="#00000f"/>
<polygon points="392.8,387.5 396.3,394.2 401.6,397.1 397.9,391.9" fill="#00001e"/>
<polygon points="387.6,380.9 391.1,389.5 396.3,394.2 392.8,387.5" fill="#000032"/>
<polygon points="382.4,372.7 385.8,383.1 391.1,389.5 387.6,380.9" fill="#00004c"/>
<path d="M382.9 373.8L384.4 378.3L386.7 381.6L385.2 377.4" fill="#000056"/>
<path d="M385.2 377.4L386.7 381.6L389.0 384.8L387.5 381.0" fill="#000048"/>
<path d="M384.4 378.3L385.9 382.9L388.2 385.7L386.7 381.6" fill="#00004f"/>
<path d="M386.7 381.6L388.2 385.7L390.6 388.6L389.0 384.8" fill="#000042"/>
<polygon points="377.1,363.2 380.5,375.6 385.8,383.1 382.4,372.7" fill="#00006e"/>
<path d="M377.6 364.5L379.1 369.9L381.5 373.7L380.0 368.6" fill="#00007a"/>
<path d="M380.0 368.6L381.5 373.7L383.8 377.4L382.3 372.8" fill="#000069"/>
<path d="M379.1 369.9L380.6 375.3L383.0 378.7L381.5 373.7" fill="#000071"/>
<path d="M381.5 373.7L383.0 378.7L385.3 382.0L383.8 377.4" fill="#000061"/>
<polygon points="371.7,353.1 375.0,367.4 380.5,375.6 377.1,363.2" fill="#000097"/>
<path d="M372.2 354.6L373.7 360.8L376.1 364.8L374.6 359.0" fill="#0000a6"/>
<path d="M374.6 359.0L376.1 364.8L378.5 368.8L377.0 363.3" fill="#000092"/>
<path d="M373.7 360.8L375.2 367.1L377.6 370.7L376.1 364.8" fill="#00009b"/>
<path d="M376.1 364.8L377.6 370.7L380.0 374.3L378.5 368.8" fill="#000088"/>
<polygon points="366.2,343.1 369.5,359.4 375.0,367.4 371.7,353.1" fill="#0d00ac"/>
<path d="M366.7 344.7L368.2 351.8L370.6 355.8L369.2 349.1" fill="#1f009a"/>
<path d="M369.2 349.1L370.6 355.8L373.0 359.7L371.6 353.4" fill="#0e00a6"/>
<path d="M368.2 351.8L369.6 358.9L372.1 362.5L370.6 355.8" fill="#0b00b3"/>
<path d="M370.6 355.8L372.1 362.5L374.5 366.1L373.0 359.7" fill="#0000b4"/>
<polygon points="360.5,334.1 363.8,352.1 369.5,359.4 366.2,343.1" fill="#330093"/>
<path d="M361.0 335.8L362.5 343.6L365.0 347.2L363.5 339.7" fill="#48007f"/>
<path d="M363.5 339.7L365.0 347.2L367.5 350.8L366.0 343.6" fill="#36008b"/>
<path d="M362.5 343.6L363.9 351.4L366.5 354.7L365.0 347.2" fill="#31009a"/>
<path d="M365.0 347.2L366.5 354.7L369.0 358.0L367.5 350.8" fill="#2000a5"/>
<polygon points="354.6,326.9 357.9,346.2 363.8,352.1 360.5,334.1" fill="#5a007b"/>
<path d="M355.1 328.5L356.1 334.1L357.8 336.1L356.9 330.6" fill="#78005f"/>
<path d="M356.9 330.6L357.8 336.1L359.6 338.1L358.6 332.7" fill="#6c0066"/>
<path d="M358.6 332.7L359.6 338.1L361.3 340.1L360.3 334.8" fill="#60006e"/>
<path d="M356.1 334.1L357.1 339.8L358.8 341.6L357.8 336.1" fill="#660073"/>
<path d="M357.8 336.1L358.8 341.6L360.5 343.5L359.6 338.1" fill="#5b007a"/>
<path d="M359.6 338.1L360.5 343.5L362.3 345.4L361.3 340.1" fill="#500081"/>
<path d="M357.1 339.8L358.1 345.4L359.8 347.1L358.8 341.6" fill="#530088"/>
<path d="M358.8 341.6L359.8 347.1L361.5 348.9L360.5 343.5" fill="#49008e"/>
<path d="M360.5 343.5L361.5 348.9L363.2 350.6L362.3 345.4" fill="#3f0094"/>
<polygon points="348.5,322.0 351.9,342.4 357.9,346.2 354.6,326.9" fill="#7d0067"/>
<path d="M349.1 323.5L350.1 329.5L351.9 330.8L350.9 325.0" fill="#9c004b"/>
<path d="M350.9 325.0L351.9 330.8L353.6 332.1L352.7 326.4" fill="#930050"/>
<path d="M352.7 326.4L353.6 332.1L355.4 333.4L354.4 327.7" fill="#880056"/>
<path d="M350.1 329.5L351.1 335.5L352.9 336.7L351.9 330.8" fill="#870061"/>
<path d="M351.9 330.8L352.9 336.7L354.6 337.9L353.6 332.1" fill="#7e0065"/>
<path d="M353.6 332.1L354.6 337.9L356.4 339.1L355.4 333.4" fill="#74006b"/>
<path d="M351.1 335.5L352.1 341.4L353.8 342.5L352.9 336.7" fill="#720077"/>
<path d="M352.9 336.7L353.8 342.5L355.6 343.7L354.6 337.9" fill="#6a007b"/>
<path d="M354.6 337.9L355.6 343.7L357.4 344.8L356.4 339.1" fill="#610080"/>
<polygon points="342.3,320.1 345.8,341.1 351.9,342.4 348.5,322.0" fill="#98015b"/>
<path d="M342.9 321.5L343.9 327.7L345.7 328.2L344.7 322.1" fill="#b80241"/>
<path d="M344.7 322.1L345.7 328.2L347.6 328.6L346.6 322.6" fill="#b10142"/>
<path d="M346.6 322.6L347.6 328.6L349.4 329.1L348.4 323.1" fill="#a90045"/>
<path d="M343.9 327.7L344.9 333.8L346.7 334.2L345.7 328.2" fill="#a10258"/>
<path d="M345.7 328.2L346.7 334.2L348.5 334.7L347.6 328.6" fill="#9a0159"/>
<path d="M347.6 328.6L348.5 334.7L350.3 335.1L349.4 329.1" fill="#92005b"/>
<path d="M344.9 333.8L345.9 339.9L347.7 340.3L346.7 334.2" fill="#890270"/>
<path d="M346.7 334.2L347.7 340.3L349.5 340.7L348.5 334.7" fill="#830170"/>
<path d="M348.5 334.7L349.5 340.7L351.3 341.1L350.3 335.1" fill="#7c0072"/>
<polygon points="336.1,321.5 339.5,342.5 345.8,341.1 342.3,320.1" fill="#b61269"/>
<path d="M336.6 322.7L337.7 328.9L339.5 328.5L338.5 322.3" fill="#e42462"/>
<path d="M338.5 322.3L339.5 328.5L341.3 328.1L340.3 321.9" fill="#d21350"/>
<path d="M340.3 321.9L341.3 328.1L343.2 327.6L342.2 321.5" fill="#c50945"/>
<path d="M337.7 328.9L338.7 335.0L340.5 334.6L339.5 328.5" fill="#c82177"/>
<path d="M339.5 328.5L340.5 334.6L342.3 334.2L341.3 328.1" fill="#b81267"/>
<path d="M341.3 328.1L342.3 334.2L344.2 333.8L343.2 327.6" fill="#ac085d"/>
<path d="M338.7 335.0L339.7 341.2L341.5 340.8L340.5 334.6" fill="#ac1e8d"/>
<path d="M340.5 334.6L341.5 340.8L343.4 340.3L342.3 334.2" fill="#9e117e"/>
<path d="M342.3 334.2L343.4 340.3L345.2 339.9L344.2 333.8" fill="#940875"/>
<polygon points="329.7,326.2 333.2,346.8 339.5,342.5 336.1,321.5" fill="#f554b4"/>
<path d="M330.3 327.2L331.3 333.2L333.2 331.9L332.1 325.8" fill="#ff70ba"/>
<path d="M332.1 325.8L333.2 331.9L335.0 330.6L334.0 324.4" fill="#ff5da2"/>
<path d="M334.0 324.4L335.0 330.6L336.9 329.2L335.9 323.1" fill="#ff4486"/>
<path d="M331.3 333.2L332.3 339.3L334.2 338.0L333.2 331.9" fill="#ff66c9"/>
<path d="M333.2 331.9L334.2 338.0L336.1 336.7L335.0 330.6" fill="#f654b1"/>
<path d="M335.0 330.6L336.1 336.7L337.9 335.4L336.9 329.2" fill="#e33e97"/>
<path d="M332.3 339.3L333.4 345.3L335.2 344.1L334.2 338.0" fill="#e45ed9"/>
<path d="M334.2 338.0L335.2 344.1L337.1 342.8L336.1 336.7" fill="#d64cc2"/>
<path d="M336.1 336.7L337.1 342.8L338.9 341.5L337.9 335.4" fill="#c438aa"/>
<polygon points="323.3,333.9 326.8,353.7 333.2,346.8 329.7,326.2" fill="#fd70e4"/>
<path d="M323.9 334.7L324.9 340.5L326.8 338.3L325.8 332.4" fill="#ff62c6"/>
<path d="M325.8 332.4L326.8 338.3L328.7 336.1L327.6 330.2" fill="#ff72cd"/>
<path d="M327.6 330.2L328.7 336.1L330.5 333.9L329.5 327.9" fill="#ff79cc"/>
<path d="M324.9 340.5L326.0 346.3L327.8 344.2L326.8 338.3" fill="#e964de"/>
<path d="M326.8 338.3L327.8 344.2L329.7 342.1L328.7 336.1" fill="#fe6fe2"/>
<path d="M328.7 336.1L329.7 342.1L331.6 340.0L330.5 333.9" fill="#ff72de"/>
<path d="M326.0 346.3L327.0 352.1L328.9 350.1L327.8 344.2" fill="#d264f6"/>
<path d="M327.8 344.2L328.9 350.1L330.7 348.0L329.7 342.1" fill="#e36cf6"/>
<path d="M329.7 342.1L330.7 348.0L332.6 346.0L331.6 340.0" fill="#ea6cef"/>
<polygon points="316.9,344.2 320.4,362.7 326.8,353.7 323.3,333.9" fill="#a439cc"/>
<path d="M317.5 344.7L318.5 350.2L320.4 347.3L319.4 341.7" fill="#9722a8"/>
<path d="M319.4 341.7L320.4 347.3L322.3 344.4L321.2 338.7" fill="#b432ad"/>
<path d="M321.2 338.7L322.3 344.4L324.2 341.5L323.1 335.7" fill="#d446b7"/>
<path d="M318.5 350.2L319.6 355.6L321.4 352.9L320.4 347.3" fill="#8928c4"/>
<path d="M320.4 347.3L321.4 352.9L323.3 350.1L322.3 344.4" fill="#a539ca"/>
<path d="M322.3 344.4L323.3 350.1L325.2 347.3L324.2 341.5" fill="#c34bd3"/>
<path d="M319.6 355.6L320.6 361.1L322.5 358.4L321.4 352.9" fill="#7a2fe1"/>
<path d="M321.4 352.9L322.5 358.4L324.3 355.7L323.3 350.1" fill="#953fe7"/>
<path d="M323.3 350.1L324.3 355.7L326.2 353.0L325.2 347.3" fill="#b150ee"/>
<polygon points="310.6,356.5 314.1,373.4 320.4,362.7 316.9,344.2" fill="#4e0ec7"/>
<path d="M311.2 356.8L312.2 361.8L314.0 358.3L313.0 353.2" fill="#4c06b6"/>
<path d="M313.0 353.2L314.0 358.3L315.9 354.9L314.9 349.7" fill="#5f0aae"/>
<path d="M314.9 349.7L315.9 354.9L317.8 351.5L316.7 346.1" fill="#7411a8"/>
<path d="M312.2 361.8L313.2 366.7L315.1 363.5L314.0 358.3" fill="#3c08cc"/>
<path d="M314.0 358.3L315.1 363.5L316.9 360.2L315.9 354.9" fill="#4f0ec6"/>
<path d="M315.9 354.9L316.9 360.2L318.8 356.9L317.8 351.5" fill="#6516c3"/>
<path d="M313.2 366.7L314.2 371.7L316.1 368.6L315.1 363.5" fill="#2c0ce4"/>
<path d="M315.1 363.5L316.1 368.6L318.0 365.4L316.9 360.2" fill="#4013df"/>
<path d="M316.9 360.2L318.0 365.4L319.8 362.3L318.8 356.9" fill="#561cdd"/>
<polygon points="304.3,369.8 307.8,384.9 314.1,373.4 310.6,356.5" fill="#1302e5"/>
<path d="M304.8 370.0L305.9 374.4L307.7 370.7L306.7 366.1" fill="#1301de"/>
<path d="M306.7 366.1L307.7 370.7L309.6 367.0L308.5 362.2" fill="#2301d1"/>
<path d="M308.5 362.2L309.6 367.0L311.4 363.2L310.4 358.3" fill="#3302c5"/>
<path d="M305.9 374.4L306.9 378.9L308.7 375.3L307.7 370.7" fill="#0401f0"/>
<path d="M307.7 370.7L308.7 375.3L310.6 371.7L309.6 367.0" fill="#1302e4"/>
<path d="M309.6 367.0L310.6 371.7L312.5 368.1L311.4 363.2" fill="#2304d9"/>
<path d="M306.9 378.9L307.9 383.3L309.8 379.9L308.7 375.3" fill="#0202e8"/>
<path d="M308.7 375.3L309.8 379.9L311.6 376.5L310.6 371.7" fill="#0303f9"/>
<path d="M310.6 371.7L311.6 376.5L313.5 373.1L312.5 368.1" fill="#1306ef"/>
<polygon points="298.0,383.5 301.5,396.7 307.8,384.9 304.3,369.8" fill="#0000ce"/>
<path d="M298.6 383.5L299.6 387.4L301.4 383.6L300.4 379.5" fill="#0000c9"/>
<path d="M300.4 379.5L301.4 383.6L303.3 379.8L302.3 375.6" fill="#0000da"/>
<path d="M302.3 375.6L303.3 379.8L305.1 376.0L304.1 371.6" fill="#0000eb"/>
<path d="M299.6 387.4L300.6 391.3L302.5 387.6L301.4 383.6" fill="#0000be"/>
<path d="M301.4 383.6L302.5 387.6L304.3 384.0L303.3 379.8" fill="#0000ce"/>
<path d="M303.3 379.8L304.3 384.0L306.1 380.3L305.1 376.0" fill="#0000de"/>
<path d="M300.6 391.3L301.6 395.2L303.5 391.7L302.5 387.6" fill="#0000b2"/>
<path d="M302.5 387.6L303.5 391.7L305.3 388.2L304.3 384.0" fill="#0000c1"/>
<path d="M304.3 384.0L305.3 388.2L307.2 384.7L306.1 380.3" fill="#0101d1"/>
<polygon points="291.8,396.7 295.2,407.9 301.5,396.7 298.0,383.5" fill="#00009a"/>
<path d="M292.4 396.6L293.4 399.9L295.2 396.3L294.2 392.8" fill="#000094"/>
<path d="M294.2 392.8L295.2 396.3L297.0 392.6L296.0 388.9" fill="#0000a3"/>
<path d="M296.0 388.9L297.0 392.6L298.9 388.9L297.8 385.1" fill="#0000b3"/>
<path d="M293.4 399.9L294.4 403.3L296.2 399.8L295.2 396.3" fill="#00008b"/>
<path d="M295.2 396.3L296.2 399.8L298.0 396.3L297.0 392.6" fill="#000099"/>
<path d="M297.0 392.6L298.0 396.3L299.9 392.7L298.9 388.9" fill="#0000a8"/>
<path d="M294.4 403.3L295.4 406.6L297.2 403.3L296.2 399.8" fill="#000081"/>
<path d="M296.2 399.8L297.2 403.3L299.0 399.9L298.0 396.3" fill="#00008f"/>
<path d="M298.0 396.3L299.0 399.9L300.9 396.6L299.9 392.7" fill="#00009d"/>
<polygon points="285.6,408.8 288.9,418.1 295.2,407.9 291.8,396.7" fill="#00006c"/>
<path d="M286.2 408.6L287.1 411.4L289.0 408.0L288.0 405.1" fill="#000066"/>
<path d="M288.0 405.1L289.0 408.0L290.8 404.7L289.8 401.6" fill="#000073"/>
<path d="M289.8 401.6L290.8 404.7L292.6 401.4L291.6 398.1" fill="#000080"/>
<path d="M287.1 411.4L288.1 414.1L289.9 411.0L289.0 408.0" fill="#00005f"/>
<path d="M289.0 408.0L289.9 411.0L291.8 407.8L290.8 404.7" fill="#00006b"/>
<path d="M290.8 404.7L291.8 407.8L293.6 404.6L292.6 401.4" fill="#000078"/>
<path d="M288.1 414.1L289.1 416.9L290.9 413.9L289.9 411.0" fill="#000057"/>
<path d="M289.9 411.0L290.9 413.9L292.8 410.9L291.8 407.8" fill="#000063"/>
<path d="M291.8 407.8L292.8 410.9L294.6 407.9L293.6 404.6" fill="#00006f"/>
<polygon points="279.4,419.1 282.6,426.6 288.9,418.1 285.6,408.8" fill="#000045"/>
<path d="M279.9 418.9L280.9 421.1L282.7 418.3L281.8 415.9" fill="#000040"/>
<path d="M281.8 415.9L282.7 418.3L284.6 415.5L283.6 412.9" fill="#00004a"/>
<path d="M283.6 412.9L284.6 415.5L286.4 412.6L285.4 409.9" fill="#000055"/>
<path d="M280.9 421.1L281.8 423.4L283.7 420.7L282.7 418.3" fill="#00003a"/>
<path d="M282.7 418.3L283.7 420.7L285.5 418.0L284.6 415.5" fill="#000044"/>
<path d="M284.6 415.5L285.5 418.0L287.4 415.3L286.4 412.6" fill="#00004f"/>
<path d="M281.8 423.4L282.8 425.6L284.6 423.1L283.7 420.7" fill="#000035"/>
<path d="M283.7 420.7L284.6 423.1L286.5 420.6L285.5 418.0" fill="#00003e"/>
<path d="M285.5 418.0L286.5 420.6L288.3 418.0L287.4 415.3" fill="#000048"/>
<polygon points="273.1,427.2 276.2,433.2 282.6,426.6 279.4,419.1" fill="#000027"/>
<path d="M273.7 427.1L275.0 429.7L277.8 426.5L276.4 423.5" fill="#000023"/>
<path d="M276.4 423.5L277.8 426.5L280.6 423.3L279.2 420.0" fill="#00002f"/>
<path d="M275.0 429.7L276.4 432.4L279.2 429.5L277.8 426.5" fill="#00001e"/>
<path d="M277.8 426.5L279.2 429.5L282.0 426.5L280.6 423.3" fill="#000028"/>
<polygon points="266.7,433.0 269.8,437.6 276.2,433.2 273.1,427.2" fill="#000013"/>
<polygon points="260.2,436.4 263.1,439.8 269.8,437.6 266.7,433.0" fill="#000008"/>
<polygon points="217.4,420.6 219.9,422.1 227.5,426.5 224.9,425.1" fill="#00001b"/>
<polygon points="209.7,416.5 212.3,418.5 219.9,422.1 217.4,420.6" fill="#00004d"/>
<polygon points="202.0,413.6 204.6,415.9 212.3,418.5 209.7,416.5" fill="#000066"/>
<polygon points="194.4,412.0 196.9,414.9 204.6,415.9 202.0,413.6" fill="#000084"/>
<polygon points="186.7,412.2 189.2,415.6 196.9,414.9 194.4,412.0" fill="#0000a2"/>
<polygon points="179.2,414.1 181.7,418.0 189.2,415.6 186.7,412.2" fill="#0000b5"/>
<polygon points="171.7,417.7 174.2,422.0 181.7,418.0 179.2,414.1" fill="#0000b7"/>
<polygon points="472.2,342.4 476.4,345.2 481.2,345.9 477.0,342.8" fill="#00009a"/>
<polygon points="467.2,343.4 471.4,345.8 476.4,345.2 472.2,342.4" fill="#0000aa"/>
<polygon points="462.0,345.8 466.3,347.8 471.4,345.8 467.2,343.4" fill="#0000ae"/>
<polygon points="456.7,349.7 460.9,351.2 466.3,347.8 462.0,345.8" fill="#0000a3"/>
<polygon points="451.2,355.0 455.5,356.0 460.9,351.2 456.7,349.7" fill="#00008e"/>
<polygon points="445.7,361.3 449.9,361.9 455.5,356.0 451.2,355.0" fill="#000075"/>
<polygon points="440.0,368.3 444.2,368.7 449.9,361.9 445.7,361.3" fill="#00005d"/>
<polygon points="434.4,375.5 438.5,375.8 444.2,368.7 440.0,368.3" fill="#000047"/>
<polygon points="428.7,382.4 432.9,382.8 438.5,375.8 434.4,375.5" fill="#000033"/>
<polygon points="423.2,388.5 427.2,389.3 432.9,382.8 428.7,382.4" fill="#000022"/>
<polygon points="417.6,393.4 421.6,394.7 427.2,389.3 423.2,388.5" fill="#000015"/>
<polygon points="412.2,396.6 416.1,398.8 421.6,394.7 417.6,393.4" fill="#00000b"/>
<polygon points="406.9,397.9 410.6,401.2 416.1,398.8 412.2,396.6" fill="#000007"/>
<polygon points="401.6,397.1 405.3,401.8 410.6,401.2 406.9,397.9" fill="#00000a"/>
<polygon points="396.3,394.2 399.9,400.5 405.3,401.8 401.6,397.1" fill="#000015"/>
<polygon points="391.1,389.5 394.6,397.6 399.9,400.5 396.3,394.2" fill="#000026"/>
<polygon points="385.8,383.1 389.3,393.1 394.6,397.6 391.1,389.5" fill="#00003c"/>
<path d="M386.3 384.1L387.9 388.4L390.2 390.8L388.7 386.9" fill="#000045"/>
<path d="M388.7 386.9L390.2 390.8L392.5 393.2L391.0 389.6" fill="#000039"/>
<path d="M387.9 388.4L389.4 392.8L391.7 394.8L390.2 390.8" fill="#00003d"/>
<path d="M390.2 390.8L391.7 394.8L394.1 396.8L392.5 393.2" fill="#000032"/>
<polygon points="380.5,375.6 383.9,387.6 389.3,393.1 385.8,383.1" fill="#000059"/>
<path d="M381.0 376.7L382.5 382.0L384.9 384.9L383.4 380.0" fill="#000065"/>
<path d="M383.4 380.0L384.9 384.9L387.2 387.7L385.7 383.3" fill="#000056"/>
<path d="M382.5 382.0L384.0 387.2L386.4 389.7L384.9 384.9" fill="#00005a"/>
<path d="M384.9 384.9L386.4 389.7L388.7 392.2L387.2 387.7" fill="#00004d"/>
<polygon points="375.0,367.4 378.4,381.4 383.9,387.6 380.5,375.6" fill="#00007b"/>
<path d="M375.6 368.8L377.1 374.9L379.5 378.0L378.0 372.3" fill="#00008a"/>
<path d="M378.0 372.3L379.5 378.0L381.8 381.2L380.4 375.8" fill="#000079"/>
<path d="M377.1 374.9L378.5 381.0L380.9 383.8L379.5 378.0" fill="#00007c"/>
<path d="M379.5 378.0L380.9 383.8L383.3 386.5L381.8 381.2" fill="#00006d"/>
<polygon points="369.5,359.4 372.8,375.3 378.4,381.4 375.0,367.4" fill="#0000a3"/>
<path d="M370.0 360.8L371.5 367.8L374.0 370.9L372.5 364.3" fill="#0000b5"/>
<path d="M372.5 364.3L374.0 370.9L376.4 374.0L374.9 367.8" fill="#0000a1"/>
<path d="M371.5 367.8L373.0 374.7L375.4 377.5L374.0 370.9" fill="#0000a3"/>
<path d="M374.0 370.9L375.4 377.5L377.9 380.2L376.4 374.0" fill="#000092"/>
<polygon points="363.8,352.1 367.1,369.7 372.8,375.3 369.5,359.4" fill="#0000ce"/>
<path d="M364.3 353.6L365.8 361.3L368.3 364.1L366.9 356.7" fill="#1200be"/>
<path d="M366.9 356.7L368.3 364.1L370.8 366.9L369.4 359.9" fill="#0300c8"/>
<path d="M365.8 361.3L367.3 369.0L369.8 371.5L368.3 364.1" fill="#0000cc"/>
<path d="M368.3 364.1L369.8 371.5L372.3 374.0L370.8 366.9" fill="#0000ba"/>
<polygon points="357.9,346.2 361.3,365.2 367.1,369.7 363.8,352.1" fill="#1c00bf"/>
<path d="M358.5 347.7L359.5 353.3L361.2 354.8L360.2 349.4" fill="#3800a5"/>
<path d="M360.2 349.4L361.2 354.8L362.9 356.4L361.9 351.1" fill="#2f00aa"/>
<path d="M361.9 351.1L362.9 356.4L364.6 358.0L363.6 352.8" fill="#2600b0"/>
<path d="M359.5 353.3L360.4 358.8L362.2 360.3L361.2 354.8" fill="#2500ba"/>
<path d="M361.2 354.8L362.2 360.3L363.9 361.7L362.9 356.4" fill="#1d00be"/>
<path d="M362.9 356.4L363.9 361.7L365.6 363.2L364.6 358.0" fill="#1400c3"/>
<path d="M360.4 358.8L361.4 364.4L363.1 365.7L362.2 360.3" fill="#1200ce"/>
<path d="M362.2 360.3L363.1 365.7L364.9 367.0L363.9 361.7" fill="#0a00d3"/>
<path d="M363.9 361.7L364.9 367.0L366.6 368.3L365.6 363.2" fill="#0200d7"/>
<polygon points="351.9,342.4 355.3,362.4 361.3,365.2 357.9,346.2" fill="#3700b1"/>
<path d="M352.5 343.8L353.5 349.7L355.2 350.7L354.2 344.9" fill="#530096"/>
<path d="M354.2 344.9L355.2 350.7L357.0 351.7L356.0 346.0" fill="#4c009a"/>
<path d="M356.0 346.0L357.0 351.7L358.7 352.7L357.8 347.1" fill="#44009e"/>
<path d="M353.5 349.7L354.4 355.6L356.2 356.5L355.2 350.7" fill="#3e00ad"/>
<path d="M355.2 350.7L356.2 356.5L358.0 357.4L357.0 351.7" fill="#3700b0"/>
<path d="M357.0 351.7L358.0 357.4L359.7 358.3L358.7 352.7" fill="#3000b3"/>
<path d="M354.4 355.6L355.4 361.4L357.2 362.2L356.2 356.5" fill="#2800c3"/>
<path d="M356.2 356.5L357.2 362.2L359.0 363.1L358.0 357.4" fill="#2200c6"/>
<path d="M358.0 357.4L359.0 363.1L360.7 363.9L359.7 358.3" fill="#1c00c9"/>
<polygon points="345.8,341.1 349.2,361.7 355.3,362.4 351.9,342.4" fill="#4a01a9"/>
<path d="M346.3 342.4L347.3 348.5L349.1 348.8L348.1 342.8" fill="#680291"/>
<path d="M348.1 342.8L349.1 348.8L350.9 349.1L349.9 343.1" fill="#620191"/>
<path d="M349.9 343.1L350.9 349.1L352.7 349.4L351.7 343.5" fill="#5c0092"/>
<path d="M347.3 348.5L348.3 354.5L350.1 354.8L349.1 348.8" fill="#5103a9"/>
<path d="M349.1 348.8L350.1 354.8L351.9 355.0L350.9 349.1" fill="#4b01a8"/>
<path d="M350.9 349.1L351.9 355.0L353.7 355.3L352.7 349.4" fill="#4600a9"/>
<path d="M348.3 354.5L349.3 360.5L351.1 360.8L350.1 354.8" fill="#3a03c1"/>
<path d="M350.1 354.8L351.1 360.8L352.9 361.0L351.9 355.0" fill="#3501c0"/>
<path d="M351.9 355.0L352.9 361.0L354.7 361.2L353.7 355.3" fill="#3000c0"/>
<polygon points="339.5,342.5 342.9,363.3 349.2,361.7 345.8,341.1" fill="#610fb8"/>
<path d="M340.1 343.7L341.1 349.8L342.9 349.4L341.9 343.3" fill="#861bac"/>
<path d="M341.9 343.3L342.9 349.4L344.8 348.9L343.8 342.8" fill="#7b109f"/>
<path d="M343.8 342.8L344.8 348.9L346.6 348.5L345.6 342.4" fill="#710896"/>
<path d="M341.1 349.8L342.1 355.9L343.9 355.4L342.9 349.4" fill="#6c1ac3"/>
<path d="M342.9 349.4L343.9 355.4L345.8 355.0L344.8 348.9" fill="#620fb6"/>
<path d="M344.8 348.9L345.8 355.0L347.6 354.5L346.6 348.5" fill="#5908ae"/>
<path d="M342.1 355.9L343.1 361.9L344.9 361.5L343.9 355.4" fill="#5319d9"/>
<path d="M343.9 355.4L344.9 361.5L346.8 361.0L345.8 355.0" fill="#490fce"/>
<path d="M345.8 355.0L346.8 361.0L348.6 360.6L347.6 354.5" fill="#4208c6"/>
<polygon points="333.2,346.8 336.6,367.1 342.9,363.3 339.5,342.5" fill="#8d40f1"/>
<path d="M333.8 347.8L334.8 353.8L336.6 352.6L335.6 346.5" fill="#b754f1"/>
<path d="M335.6 346.5L336.6 352.6L338.5 351.3L337.5 345.3" fill="#ab44dc"/>
<path d="M337.5 345.3L338.5 351.3L340.3 350.1L339.3 344.0" fill="#9b32c6"/>
<path d="M334.8 353.8L335.8 359.7L337.7 358.6L336.6 352.6" fill="#9a4fff"/>
<path d="M336.6 352.6L337.7 358.6L339.5 357.4L338.5 351.3" fill="#8d3fef"/>
<path d="M338.5 351.3L339.5 357.4L341.4 356.2L340.3 350.1" fill="#7f2edb"/>
<path d="M335.8 359.7L336.8 365.7L338.7 364.5L337.7 358.6" fill="#7e4bff"/>
<path d="M337.7 358.6L338.7 364.5L340.5 363.4L339.5 357.4" fill="#723bff"/>
<path d="M339.5 357.4L340.5 363.4L342.4 362.3L341.4 356.2" fill="#642cf0"/>
<polygon points="326.8,353.7 330.3,373.1 336.6,367.1 333.2,346.8" fill="#a266ff"/>
<path d="M327.4 354.4L328.4 360.2L330.3 358.2L329.3 352.4" fill="#b164ff"/>
<path d="M329.3 352.4L330.3 358.2L332.2 356.3L331.1 350.4" fill="#bd68ff"/>
<path d="M331.1 350.4L332.2 356.3L334.0 354.4L333.0 348.4" fill="#c064ff"/>
<path d="M328.4 360.2L329.5 365.9L331.3 364.0L330.3 358.2" fill="#9a63ff"/>
<path d="M330.3 358.2L331.3 364.0L333.2 362.2L332.2 356.3" fill="#a265ff"/>
<path d="M332.2 356.3L333.2 362.2L335.0 360.4L334.0 354.4" fill="#a360ff"/>
<path d="M329.5 365.9L330.5 371.6L332.3 369.8L331.3 364.0" fill="#8364ff"/>
<path d="M331.3 364.0L332.3 369.8L334.2 368.1L333.2 362.2" fill="#8963ff"/>
<path d="M333.2 362.2L334.2 368.1L336.1 366.3L335.0 360.4" fill="#885cff"/>
<polygon points="320.4,362.7 323.9,380.9 330.3,373.1 326.8,353.7" fill="#6e4dff"/>
<path d="M321.0 363.3L322.1 368.6L323.9 366.1L322.9 360.7" fill="#6538ff"/>
<path d="M322.9 360.7L323.9 366.1L325.8 363.6L324.8 358.0" fill="#7e47ff"/>
<path d="M324.8 358.0L325.8 363.6L327.7 361.1L326.6 355.4" fill="#9655ff"/>
<path d="M322.1 368.6L323.1 374.0L325.0 371.6L323.9 366.1" fill="#563eff"/>
<path d="M323.9 366.1L325.0 371.6L326.8 369.2L325.8 363.6" fill="#6e4cff"/>
<path d="M325.8 363.6L326.8 369.2L328.7 366.8L327.7 361.1" fill="#8358ff"/>
<path d="M323.1 374.0L324.1 379.3L326.0 377.0L325.0 371.6" fill="#4845ff"/>
<path d="M325.0 371.6L326.0 377.0L327.9 374.7L326.8 369.2" fill="#5d52ff"/>
<path d="M326.8 369.2L327.9 374.7L329.7 372.4L328.7 366.8" fill="#705cff"/>
<polygon points="314.1,373.4 317.6,389.9 323.9,380.9 320.4,362.7" fill="#2121ff"/>
<path d="M314.7 373.7L315.7 378.6L317.6 375.7L316.5 370.6" fill="#1812ff"/>
<path d="M316.5 370.6L317.6 375.7L319.4 372.7L318.4 367.6" fill="#2c1aff"/>
<path d="M318.4 367.6L319.4 372.7L321.3 369.8L320.3 364.5" fill="#4225ff"/>
<path d="M315.7 378.6L316.7 383.5L318.6 380.7L317.6 375.7" fill="#1717ff"/>
<path d="M317.6 375.7L318.6 380.7L320.5 377.9L319.4 372.7" fill="#2121ff"/>
<path d="M319.4 372.7L320.5 377.9L322.3 375.1L321.3 369.8" fill="#352cff"/>
<path d="M316.7 383.5L317.8 388.4L319.6 385.7L318.6 380.7" fill="#1e1efa"/>
<path d="M318.6 380.7L319.6 385.7L321.5 383.0L320.5 377.9" fill="#2828ff"/>
<path d="M320.5 377.9L321.5 383.0L323.4 380.4L322.3 375.1" fill="#3333ff"/>
<polygon points="307.8,384.9 311.2,399.7 317.6,389.9 314.1,373.4" fill="#0909d8"/>
<path d="M308.3 385.1L309.4 389.5L311.2 386.3L310.2 381.8" fill="#0404d4"/>
<path d="M310.2 381.8L311.2 386.3L313.1 383.1L312.1 378.4" fill="#0606e5"/>
<path d="M312.1 378.4L313.1 383.1L314.9 379.9L313.9 375.1" fill="#0a0af7"/>
<path d="M309.4 389.5L310.4 393.8L312.2 390.8L311.2 386.3" fill="#0606c7"/>
<path d="M311.2 386.3L312.2 390.8L314.1 387.7L313.1 383.1" fill="#0909d8"/>
<path d="M313.1 383.1L314.1 387.7L316.0 384.7L314.9 379.9" fill="#0e0ee9"/>
<path d="M310.4 393.8L311.4 398.2L313.3 395.3L312.2 390.8" fill="#0909bb"/>
<path d="M312.2 390.8L313.3 395.3L315.1 392.4L314.1 387.7" fill="#0d0dcb"/>
<path d="M314.1 387.7L315.1 392.4L317.0 389.5L316.0 384.7" fill="#1313dd"/>
<polygon points="301.5,396.7 304.9,409.4 311.2,399.7 307.8,384.9" fill="#0202a3"/>
<path d="M302.0 396.8L303.1 400.5L304.9 397.3L303.9 393.3" fill="#0101a1"/>
<path d="M303.9 393.3L304.9 397.3L306.8 394.0L305.7 389.9" fill="#0101af"/>
<path d="M305.7 389.9L306.8 394.0L308.6 390.8L307.6 386.5" fill="#0202be"/>
<path d="M303.1 400.5L304.1 404.3L305.9 401.2L304.9 397.3" fill="#010195"/>
<path d="M304.9 397.3L305.9 401.2L307.8 398.2L306.8 394.0" fill="#0202a3"/>
<path d="M306.8 394.0L307.8 398.2L309.6 395.1L308.6 390.8" fill="#0303b1"/>
<path d="M304.1 404.3L305.1 408.1L306.9 405.2L305.9 401.2" fill="#02028a"/>
<path d="M305.9 401.2L306.9 405.2L308.8 402.3L307.8 398.2" fill="#040497"/>
<path d="M307.8 398.2L308.8 402.3L310.7 399.4L309.6 395.1" fill="#0505a5"/>
<polygon points="295.2,407.9 298.6,418.7 304.9,409.4 301.5,396.7" fill="#000077"/>
<path d="M295.8 407.9L296.8 411.1L298.6 408.0L297.6 404.7" fill="#000074"/>
<path d="M297.6 404.7L298.6 408.0L300.5 404.9L299.4 401.4" fill="#000080"/>
<path d="M299.4 401.4L300.5 404.9L302.3 401.8L301.3 398.1" fill="#00008d"/>
<path d="M296.8 411.1L297.8 414.3L299.6 411.4L298.6 408.0" fill="#00006a"/>
<path d="M298.6 408.0L299.6 411.4L301.5 408.5L300.5 404.9" fill="#000076"/>
<path d="M300.5 404.9L301.5 408.5L303.3 405.5L302.3 401.8" fill="#010182"/>
<path d="M297.8 414.3L298.8 417.5L300.6 414.7L299.6 411.4" fill="#010161"/>
<path d="M299.6 411.4L300.6 414.7L302.5 412.0L301.5 408.5" fill="#01016c"/>
<path d="M301.5 408.5L302.5 412.0L304.3 409.2L303.3 405.5" fill="#010178"/>
<polygon points="288.9,418.1 292.2,426.9 298.6,418.7 295.2,407.9" fill="#000051"/>
<path d="M289.5 418.0L290.5 420.6L292.3 417.8L291.3 415.1" fill="#00004d"/>
<path d="M291.3 415.1L292.3 417.8L294.2 415.1L293.2 412.1" fill="#000057"/>
<path d="M293.2 412.1L294.2 415.1L296.0 412.3L295.0 409.2" fill="#000063"/>
<path d="M290.5 420.6L291.4 423.2L293.3 420.6L292.3 417.8" fill="#000045"/>
<path d="M292.3 417.8L293.3 420.6L295.1 418.0L294.2 415.1" fill="#00004f"/>
<path d="M294.2 415.1L295.1 418.0L297.0 415.4L296.0 412.3" fill="#00005a"/>
<path d="M291.4 423.2L292.4 425.9L294.3 423.4L293.3 420.6" fill="#00003e"/>
<path d="M293.3 420.6L294.3 423.4L296.1 421.0L295.1 418.0" fill="#000048"/>
<path d="M295.1 418.0L296.1 421.0L298.0 418.6L297.0 415.4" fill="#000052"/>
<polygon points="282.6,426.6 285.8,433.6 292.2,426.9 288.9,418.1" fill="#000031"/>
<path d="M283.2 426.5L284.1 428.6L286.0 426.3L285.0 424.0" fill="#00002d"/>
<path d="M285.0 424.0L286.0 426.3L287.8 424.0L286.9 421.6" fill="#000036"/>
<path d="M286.9 421.6L287.8 424.0L289.7 421.7L288.7 419.1" fill="#00003f"/>
<path d="M284.1 428.6L285.1 430.7L286.9 428.5L286.0 426.3" fill="#000028"/>
<path d="M286.0 426.3L286.9 428.5L288.8 426.4L287.8 424.0" fill="#000030"/>
<path d="M287.8 424.0L288.8 426.4L290.7 424.2L289.7 421.7" fill="#000038"/>
<path d="M285.1 430.7L286.0 432.8L287.9 430.8L286.9 428.5" fill="#000023"/>
<path d="M286.9 428.5L287.9 430.8L289.8 428.8L288.8 426.4" fill="#00002a"/>
<path d="M288.8 426.4L289.8 428.8L291.7 426.8L290.7 424.2" fill="#000032"/>
<polygon points="276.2,433.2 279.4,438.6 285.8,433.6 282.6,426.6" fill="#00001a"/>
<polygon points="269.8,437.6 272.8,441.6 279.4,438.6 276.2,433.2" fill="#00000b"/>
<polygon points="263.1,439.8 266.1,442.6 272.8,441.6 269.8,437.6" fill="#000007"/>
<polygon points="219.9,422.1 222.6,423.5 230.2,427.5 227.5,426.5" fill="#00001e"/>
<polygon points="212.3,418.5 214.9,420.3 222.6,423.5 219.9,422.1" fill="#000052"/>
<polygon points="204.6,415.9 207.2,418.4 214.9,420.3 212.3,418.5" fill="#00006d"/>
<polygon points="196.9,414.9 199.5,418.0 207.2,418.4 204.6,415.9" fill="#00008c"/>
<polygon points="189.2,415.6 191.8,419.2 199.5,418.0 196.9,414.9" fill="#0000a9"/>
<polygon points="181.7,418.0 184.2,422.1 191.8,419.2 189.2,415.6" fill="#0000b8"/>
<polygon points="174.2,422.0 176.8,426.5 184.2,422.1 181.7,418.0" fill="#0000b8"/>
<polygon points="476.4,345.2 480.6,348.3 485.4,349.2 481.2,345.9" fill="#000096"/>
<polygon points="471.4,345.8 475.7,348.4 480.6,348.3 476.4,345.2" fill="#0000a7"/>
<polygon points="466.3,347.8 470.5,349.9 475.7,348.4 471.4,345.8" fill="#0000ae"/>
<polygon points="460.9,351.2 465.3,352.8 470.5,349.9 466.3,347.8" fill="#0000a7"/>
<polygon points="455.5,356.0 459.8,357.0 465.3,352.8 460.9,351.2" fill="#000094"/>
<polygon points="449.9,361.9 454.2,362.5 459.8,357.0 455.5,356.0" fill="#00007c"/>
<polygon points="444.2,368.7 448.6,368.9 454.2,362.5 449.9,361.9" fill="#000063"/>
<polygon points="438.5,375.8 442.8,375.8 448.6,368.9 444.2,368.7" fill="#00004d"/>
<polygon points="432.9,382.8 437.1,382.8 442.8,375.8 438.5,375.8" fill="#000039"/>
<polygon points="427.2,389.3 431.4,389.5 437.1,382.8 432.9,382.8" fill="#000028"/>
<polygon points="421.6,394.7 425.7,395.5 431.4,389.5 427.2,389.3" fill="#00001a"/>
<polygon points="416.1,398.8 420.1,400.3 425.7,395.5 421.6,394.7" fill="#000010"/>
<polygon points="410.6,401.2 414.5,403.8 420.1,400.3 416.1,398.8" fill="#000008"/>
<polygon points="405.3,401.8 409.1,405.7 414.5,403.8 410.6,401.2" fill="#000007"/>
<polygon points="399.9,400.5 403.6,406.0 409.1,405.7 405.3,401.8" fill="#00000d"/>
<polygon points="394.6,397.6 398.2,404.7 403.6,406.0 399.9,400.5" fill="#000019"/>
<polygon points="389.3,393.1 392.8,402.2 398.2,404.7 394.6,397.6" fill="#00002b"/>
<path d="M389.8 393.9L391.3 397.9L393.7 399.4L392.2 395.8" fill="#000032"/>
<path d="M392.2 395.8L393.7 399.4L396.1 400.9L394.5 397.7" fill="#000029"/>
<path d="M391.3 397.9L392.9 401.8L395.3 403.0L393.7 399.4" fill="#00002a"/>
<path d="M393.7 399.4L395.3 403.0L397.7 404.2L396.1 400.9" fill="#000022"/>
<polygon points="383.9,387.6 387.3,398.6 392.8,402.2 389.3,393.1" fill="#000042"/>
<path d="M384.4 388.6L385.9 393.4L388.3 395.4L386.8 391.0" fill="#00004c"/>
<path d="M386.8 391.0L388.3 395.4L390.7 397.4L389.2 393.3" fill="#000040"/>
<path d="M385.9 393.4L387.4 398.2L389.9 399.8L388.3 395.4" fill="#000041"/>
<path d="M388.3 395.4L389.9 399.8L392.2 401.4L390.7 397.4" fill="#000036"/>
<polygon points="378.4,381.4 381.8,394.4 387.3,398.6 383.9,387.6" fill="#00005d"/>
<path d="M378.9 382.6L380.4 388.2L382.9 390.5L381.4 385.3" fill="#00006a"/>
<path d="M381.4 385.3L382.9 390.5L385.3 392.8L383.8 387.9" fill="#00005c"/>
<path d="M380.4 388.2L381.9 393.9L384.4 395.8L382.9 390.5" fill="#00005c"/>
<path d="M382.9 390.5L384.4 395.8L386.8 397.7L385.3 392.8" fill="#000050"/>
<polygon points="372.8,375.3 376.2,390.1 381.8,394.4 378.4,381.4" fill="#00007d"/>
<path d="M373.4 376.5L374.8 383.0L377.3 385.3L375.8 379.2" fill="#00008c"/>
<path d="M375.8 379.2L377.3 385.3L379.8 387.6L378.3 381.9" fill="#00007d"/>
<path d="M374.8 383.0L376.3 389.5L378.8 391.4L377.3 385.3" fill="#00007a"/>
<path d="M377.3 385.3L378.8 391.4L381.3 393.4L379.8 387.6" fill="#00006d"/>
<polygon points="367.1,369.7 370.5,386.2 376.2,390.1 372.8,375.3" fill="#00009e"/>
<path d="M367.7 371.0L369.1 378.2L371.7 380.3L370.2 373.4" fill="#0000b0"/>
<path d="M370.2 373.4L371.7 380.3L374.2 382.4L372.7 375.8" fill="#0000a0"/>
<path d="M369.1 378.2L370.6 385.4L373.1 387.2L371.7 380.3" fill="#00009a"/>
<path d="M371.7 380.3L373.1 387.2L375.6 389.0L374.2 382.4" fill="#00008c"/>
<polygon points="361.3,365.2 364.6,383.1 370.5,386.2 367.1,369.7" fill="#0000bf"/>
<path d="M361.8 366.6L362.8 371.8L364.5 372.9L363.5 367.8" fill="#0000d9"/>
<path d="M363.5 367.8L364.5 372.9L366.2 374.1L365.3 369.1" fill="#0000cf"/>
<path d="M365.3 369.1L366.2 374.1L367.9 375.3L367.0 370.4" fill="#0000c5"/>
<path d="M362.8 371.8L363.8 377.0L365.5 378.0L364.5 372.9" fill="#0000c8"/>
<path d="M364.5 372.9L365.5 378.0L367.2 379.1L366.2 374.1" fill="#0000bf"/>
<path d="M366.2 374.1L367.2 379.1L368.9 380.1L367.9 375.3" fill="#0000b5"/>
<path d="M363.8 377.0L364.8 382.2L366.5 383.1L365.5 378.0" fill="#0000b6"/>
<path d="M365.5 378.0L366.5 383.1L368.2 384.1L367.2 379.1" fill="#0000ae"/>
<path d="M367.2 379.1L368.2 384.1L369.9 385.0L368.9 380.1" fill="#0000a5"/>
<polygon points="355.3,362.4 358.6,381.3 364.6,383.1 361.3,365.2" fill="#0000dc"/>
<path d="M355.8 363.7L356.8 369.3L358.6 370.0L357.6 364.5" fill="#0b00e2"/>
<path d="M357.6 364.5L358.6 370.0L360.3 370.7L359.4 365.3" fill="#0500e4"/>
<path d="M359.4 365.3L360.3 370.7L362.1 371.4L361.1 366.1" fill="#0000e7"/>
<path d="M356.8 369.3L357.8 374.8L359.6 375.4L358.6 370.0" fill="#0000e3"/>
<path d="M358.6 370.0L359.6 375.4L361.3 376.0L360.3 370.7" fill="#0000dc"/>
<path d="M360.3 370.7L361.3 376.0L363.1 376.6L362.1 371.4" fill="#0000d4"/>
<path d="M357.8 374.8L358.8 380.3L360.6 380.8L359.6 375.4" fill="#0000cf"/>
<path d="M359.6 375.4L360.6 380.8L362.3 381.4L361.3 376.0" fill="#0000c9"/>
<path d="M361.3 376.0L362.3 381.4L364.0 381.9L363.1 376.6" fill="#0000c1"/>
<polygon points="349.2,361.7 352.5,381.1 358.6,381.3 355.3,362.4" fill="#0202f3"/>
<path d="M349.7 362.9L350.7 368.6L352.5 368.8L351.5 363.1" fill="#1a03e2"/>
<path d="M351.5 363.1L352.5 368.8L354.3 368.9L353.3 363.3" fill="#1501e0"/>
<path d="M353.3 363.3L354.3 368.9L356.1 369.1L355.1 363.5" fill="#1101e0"/>
<path d="M350.7 368.6L351.7 374.3L353.5 374.4L352.5 368.8" fill="#0403f9"/>
<path d="M352.5 368.8L353.5 374.4L355.3 374.5L354.3 368.9" fill="#0202f3"/>
<path d="M354.3 368.9L355.3 374.5L357.1 374.6L356.1 369.1" fill="#0101ed"/>
<path d="M351.7 374.3L352.7 380.0L354.5 380.0L353.5 374.4" fill="#0404e4"/>
<path d="M353.5 374.4L354.5 380.0L356.3 380.1L355.3 374.5" fill="#0202de"/>
<path d="M355.3 374.5L356.3 380.1L358.1 380.2L357.1 374.6" fill="#0101d8"/>
<polygon points="342.9,363.3 346.4,382.8 352.5,381.1 349.2,361.7" fill="#110fff"/>
<path d="M343.5 364.4L344.5 370.1L346.4 369.6L345.3 363.9" fill="#3118fa"/>
<path d="M345.3 363.9L346.4 369.6L348.2 369.2L347.2 363.4" fill="#280eef"/>
<path d="M347.2 363.4L348.2 369.2L350.0 368.7L349.0 363.0" fill="#2108e7"/>
<path d="M344.5 370.1L345.5 375.8L347.4 375.3L346.4 369.6" fill="#1a18ff"/>
<path d="M346.4 369.6L347.4 375.3L349.2 374.9L348.2 369.2" fill="#110fff"/>
<path d="M348.2 369.2L349.2 374.9L351.0 374.4L350.0 368.7" fill="#0b08ff"/>
<path d="M345.5 375.8L346.5 381.5L348.4 381.0L347.4 375.3" fill="#1818ff"/>
<path d="M347.4 375.3L348.4 381.0L350.2 380.5L349.2 374.9" fill="#0f0ff6"/>
<path d="M349.2 374.9L350.2 380.5L352.0 380.1L351.0 374.4" fill="#0909ee"/>
<polygon points="336.6,367.1 340.1,386.2 346.4,382.8 342.9,363.3" fill="#3838ff"/>
<path d="M337.2 368.1L338.2 373.7L340.1 372.6L339.1 366.9" fill="#5947ff"/>
<path d="M339.1 366.9L340.1 372.6L341.9 371.5L340.9 365.8" fill="#4d38ff"/>
<path d="M340.9 365.8L341.9 371.5L343.8 370.4L342.8 364.7" fill="#4129ff"/>
<path d="M338.2 373.7L339.3 379.3L341.1 378.2L340.1 372.6" fill="#4646ff"/>
<path d="M340.1 372.6L341.1 378.2L342.9 377.2L341.9 371.5" fill="#3737ff"/>
<path d="M341.9 371.5L342.9 377.2L344.8 376.1L343.8 370.4" fill="#2928ff"/>
<path d="M339.3 379.3L340.3 384.9L342.1 383.9L341.1 378.2" fill="#4545ff"/>
<path d="M341.1 378.2L342.1 383.9L344.0 382.8L342.9 377.2" fill="#3636ff"/>
<path d="M342.9 377.2L344.0 382.8L345.8 381.8L344.8 376.1" fill="#2828ff"/>
<polygon points="330.3,373.1 333.8,391.4 340.1,386.2 336.6,367.1" fill="#6363ff"/>
<path d="M330.9 373.9L331.9 379.2L333.8 377.6L332.8 372.1" fill="#6565ff"/>
<path d="M332.8 372.1L333.8 377.6L335.6 375.9L334.6 370.4" fill="#6761ff"/>
<path d="M334.6 370.4L335.6 375.9L337.5 374.2L336.5 368.6" fill="#6459ff"/>
<path d="M331.9 379.2L332.9 384.6L334.8 383.0L333.8 377.6" fill="#6767ff"/>
<path d="M333.8 377.6L334.8 383.0L336.7 381.4L335.6 375.9" fill="#6262ff"/>
<path d="M335.6 375.9L336.7 381.4L338.5 379.8L337.5 374.2" fill="#5858ff"/>
<path d="M332.9 384.6L334.0 390.0L335.8 388.4L334.8 383.0" fill="#6a6aff"/>
<path d="M334.8 383.0L335.8 388.4L337.7 386.9L336.7 381.4" fill="#6363ff"/>
<path d="M336.7 381.4L337.7 386.9L339.5 385.4L338.5 379.8" fill="#5959ff"/>
<polygon points="323.9,380.9 327.4,397.9 333.8,391.4 330.3,373.1" fill="#6262ff"/>
<path d="M324.5 381.5L325.6 386.5L327.4 384.3L326.4 379.2" fill="#5050ff"/>
<path d="M326.4 379.2L327.4 384.3L329.3 382.2L328.3 376.9" fill="#5a5aff"/>
<path d="M328.3 376.9L329.3 382.2L331.2 380.0L330.1 374.7" fill="#6161ff"/>
<path d="M325.6 386.5L326.6 391.5L328.5 389.4L327.4 384.3" fill="#5858ff"/>
<path d="M327.4 384.3L328.5 389.4L330.3 387.4L329.3 382.2" fill="#6161ff"/>
<path d="M329.3 382.2L330.3 387.4L332.2 385.4L331.2 380.0" fill="#6666ff"/>
<path d="M326.6 391.5L327.6 396.5L329.5 394.5L328.5 389.4" fill="#6161ff"/>
<path d="M328.5 389.4L329.5 394.5L331.3 392.6L330.3 387.4" fill="#6868ff"/>
<path d="M330.3 387.4L331.3 392.6L333.2 390.7L332.2 385.4" fill="#6c6cff"/>
<polygon points="317.6,389.9 321.1,405.4 327.4,397.9 323.9,380.9" fill="#3d3df9"/>
<path d="M318.2 390.3L319.2 394.9L321.1 392.4L320.0 387.7" fill="#2929eb"/>
<path d="M320.0 387.7L321.1 392.4L322.9 389.9L321.9 385.1" fill="#3333ff"/>
<path d="M321.9 385.1L322.9 389.9L324.8 387.4L323.8 382.5" fill="#3f3fff"/>
<path d="M319.2 394.9L320.2 399.4L322.1 397.1L321.1 392.4" fill="#3232e3"/>
<path d="M321.1 392.4L322.1 397.1L324.0 394.7L322.9 389.9" fill="#3d3df8"/>
<path d="M322.9 389.9L324.0 394.7L325.8 392.4L324.8 387.4" fill="#4949ff"/>
<path d="M320.2 399.4L321.3 404.0L323.1 401.8L322.1 397.1" fill="#3d3ddd"/>
<path d="M322.1 397.1L323.1 401.8L325.0 399.5L324.0 394.7" fill="#4848f1"/>
<path d="M324.0 394.7L325.0 399.5L326.9 397.3L325.8 392.4" fill="#5353ff"/>
<polygon points="311.2,399.7 314.7,413.3 321.1,405.4 317.6,389.9" fill="#1c1cb5"/>
<path d="M311.8 399.9L312.9 403.9L314.7 401.3L313.7 397.1" fill="#0f0fac"/>
<path d="M313.7 397.1L314.7 401.3L316.6 398.6L315.6 394.3" fill="#1515bd"/>
<path d="M315.6 394.3L316.6 398.6L318.4 395.9L317.4 391.4" fill="#1c1ccf"/>
<path d="M312.9 403.9L313.9 408.0L315.7 405.4L314.7 401.3" fill="#1616a3"/>
<path d="M314.7 401.3L315.7 405.4L317.6 402.9L316.6 398.6" fill="#1c1cb4"/>
<path d="M316.6 398.6L317.6 402.9L319.5 400.4L318.4 395.9" fill="#2424c7"/>
<path d="M313.9 408.0L314.9 412.0L316.8 409.6L315.7 405.4" fill="#1d1d9c"/>
<path d="M315.7 405.4L316.8 409.6L318.6 407.3L317.6 402.9" fill="#2525ae"/>
<path d="M317.6 402.9L318.6 407.3L320.5 404.9L319.5 400.4" fill="#2e2ec1"/>
<polygon points="304.9,409.4 308.4,421.2 314.7,413.3 311.2,399.7" fill="#0b0b80"/>
<path d="M305.5 409.6L306.5 413.0L308.4 410.4L307.4 406.7" fill="#05057b"/>
<path d="M307.4 406.7L308.4 410.4L310.2 407.7L309.2 403.9" fill="#070788"/>
<path d="M309.2 403.9L310.2 407.7L312.1 405.0L311.1 401.1" fill="#0a0a96"/>
<path d="M306.5 413.0L307.5 416.5L309.4 414.0L308.4 410.4" fill="#080872"/>
<path d="M308.4 410.4L309.4 414.0L311.3 411.5L310.2 407.7" fill="#0b0b7f"/>
<path d="M310.2 407.7L311.3 411.5L313.1 409.0L312.1 405.0" fill="#0e0e8d"/>
<path d="M307.5 416.5L308.5 420.0L310.4 417.6L309.4 414.0" fill="#0c0c6a"/>
<path d="M309.4 414.0L310.4 417.6L312.3 415.3L311.3 411.5" fill="#101078"/>
<path d="M311.3 411.5L312.3 415.3L314.1 413.0L313.1 409.0" fill="#141486"/>
<polygon points="298.6,418.7 302.0,428.5 308.4,421.2 304.9,409.4" fill="#040457"/>
<path d="M299.2 418.7L300.2 421.6L302.0 419.1L301.0 416.1" fill="#020254"/>
<path d="M301.0 416.1L302.0 419.1L303.9 416.6L302.9 413.4" fill="#02025f"/>
<path d="M302.9 413.4L303.9 416.6L305.7 414.1L304.7 410.7" fill="#03036a"/>
<path d="M300.2 421.6L301.2 424.5L303.0 422.2L302.0 419.1" fill="#03034c"/>
<path d="M302.0 419.1L303.0 422.2L304.9 419.9L303.9 416.6" fill="#040456"/>
<path d="M303.9 416.6L304.9 419.9L306.8 417.5L305.7 414.1" fill="#050561"/>
<path d="M301.2 424.5L302.2 427.5L304.0 425.3L303.0 422.2" fill="#040444"/>
<path d="M303.0 422.2L304.0 425.3L305.9 423.1L304.9 419.9" fill="#06064e"/>
<path d="M304.9 419.9L305.9 423.1L307.8 420.9L306.8 417.5" fill="#080859"/>
<polygon points="292.2,426.9 295.6,434.8 302.0,428.5 298.6,418.7" fill="#010137"/>
<path d="M292.8 426.9L293.8 429.2L295.7 427.0L294.7 424.5" fill="#000034"/>
<path d="M294.7 424.5L295.7 427.0L297.5 424.8L296.5 422.2" fill="#01013d"/>
<path d="M296.5 422.2L297.5 424.8L299.4 422.6L298.4 419.8" fill="#010146"/>
<path d="M293.8 429.2L294.8 431.6L296.7 429.5L295.7 427.0" fill="#01012e"/>
<path d="M295.7 427.0L296.7 429.5L298.5 427.5L297.5 424.8" fill="#010136"/>
<path d="M297.5 424.8L298.5 427.5L300.4 425.4L299.4 422.6" fill="#02023e"/>
<path d="M294.8 431.6L295.8 433.9L297.6 432.1L296.7 429.5" fill="#010127"/>
<path d="M296.7 429.5L297.6 432.1L299.5 430.2L298.5 427.5" fill="#01012f"/>
<path d="M298.5 427.5L299.5 430.2L301.4 428.3L300.4 425.4" fill="#020237"/>
<polygon points="285.8,433.6 289.1,439.8 295.6,434.8 292.2,426.9" fill="#00001f"/>
<path d="M286.4 433.6L287.9 436.3L290.7 433.8L289.2 430.7" fill="#00001c"/>
<path d="M289.2 430.7L290.7 433.8L293.5 431.2L292.1 427.8" fill="#000026"/>
<path d="M287.9 436.3L289.3 439.1L292.1 436.9L290.7 433.8" fill="#000015"/>
<path d="M290.7 433.8L292.1 436.9L295.0 434.6L293.5 431.2" fill="#00001e"/>
<polygon points="279.4,438.6 282.6,443.1 289.1,439.8 285.8,433.6" fill="#00000f"/>
<polygon points="272.8,441.6 275.9,444.8 282.6,443.1 279.4,438.6" fill="#000007"/>
<polygon points="222.6,423.5 225.2,424.8 232.9,428.4 230.2,427.5" fill="#000020"/>
<polygon points="214.9,420.3 217.5,422.2 225.2,424.8 222.6,423.5" fill="#000059"/>
<polygon points="207.2,418.4 209.8,420.9 217.5,422.2 214.9,420.3" fill="#000076"/>
<polygon points="199.5,418.0 202.1,421.2 209.8,420.9 207.2,418.4" fill="#000096"/>
<path d="M200.1 418.2L201.2 419.6L204.6 419.6L203.5 418.4" fill="#00009b"/>
<path d="M203.5 418.4L204.6 419.6L208.0 419.7L206.8 418.5" fill="#00008d"/>
<path d="M201.2 419.6L202.4 421.0L205.8 420.9L204.6 419.6" fill="#00009f"/>
<path d="M204.6 419.6L205.8 420.9L209.2 420.8L208.0 419.7" fill="#000092"/>
<polygon points="191.8,419.2 194.4,423.1 202.1,421.2 199.5,418.0" fill="#0000b0"/>
<polygon points="184.2,422.1 186.9,426.6 194.4,423.1 191.8,419.2" fill="#0000bb"/>
<polygon points="176.8,426.5 179.4,431.4 186.9,426.6 184.2,422.1" fill="#0000b7"/>
<polygon points="480.6,348.3 484.9,351.5 489.6,352.8 485.4,349.2" fill="#000091"/>
<polygon points="475.7,348.4 480.0,351.3 484.9,351.5 480.6,348.3" fill="#0000a3"/>
<polygon points="470.5,349.9 474.9,352.2 480.0,351.3 475.7,348.4" fill="#0000ae"/>
<polygon points="465.3,352.8 469.6,354.5 474.9,352.2 470.5,349.9" fill="#0000ab"/>
<polygon points="459.8,357.0 464.2,358.1 469.6,354.5 465.3,352.8" fill="#00009a"/>
<polygon points="454.2,362.5 458.6,363.0 464.2,358.1 459.8,357.0" fill="#000083"/>
<polygon points="448.6,368.9 452.9,369.0 458.6,363.0 454.2,362.5" fill="#00006b"/>
<polygon points="442.8,375.8 447.2,375.6 452.9,369.0 448.6,368.9" fill="#000055"/>
<polygon points="437.1,382.8 441.4,382.5 447.2,375.6 442.8,375.8" fill="#000040"/>
<polygon points="431.4,389.5 435.7,389.3 441.4,382.5 437.1,382.8" fill="#00002f"/>
<polygon points="425.7,395.5 429.9,395.6 435.7,389.3 431.4,389.5" fill="#000021"/>
<polygon points="420.1,400.3 424.2,401.1 429.9,395.6 425.7,395.5" fill="#000015"/>
<polygon points="414.5,403.8 418.6,405.5 424.2,401.1 420.1,400.3" fill="#00000d"/>
<polygon points="409.1,405.7 413.0,408.6 418.6,405.5 414.5,403.8" fill="#000007"/>
<polygon points="403.6,406.0 407.4,410.3 413.0,408.6 409.1,405.7" fill="#000008"/>
<polygon points="398.2,404.7 401.9,410.7 407.4,410.3 403.6,406.0" fill="#00000e"/>
<polygon points="392.8,402.2 396.4,409.9 401.9,410.7 398.2,404.7" fill="#00001a"/>
<polygon points="387.3,398.6 390.9,408.1 396.4,409.9 392.8,402.2" fill="#00002b"/>
<path d="M387.9 399.4L389.4 403.5L391.9 404.7L390.3 400.9" fill="#000033"/>
<path d="M390.3 400.9L391.9 404.7L394.3 405.9L392.7 402.4" fill="#00002a"/>
<path d="M389.4 403.5L391.0 407.7L393.4 408.5L391.9 404.7" fill="#000029"/>
<path d="M391.9 404.7L393.4 408.5L395.9 409.3L394.3 405.9" fill="#000021"/>
<polygon points="381.8,394.4 385.3,405.8 390.9,408.1 387.3,398.6" fill="#000040"/>
<path d="M382.3 395.3L383.9 400.3L386.3 401.7L384.8 397.1" fill="#00004a"/>
<path d="M384.8 397.1L386.3 401.7L388.8 403.2L387.2 398.9" fill="#000040"/>
<path d="M383.9 400.3L385.4 405.3L387.9 406.3L386.3 401.7" fill="#00003d"/>
<path d="M386.3 401.7L387.9 406.3L390.3 407.4L388.8 403.2" fill="#000034"/>
<polygon points="376.2,390.1 379.6,403.2 385.3,405.8 381.8,394.4" fill="#000057"/>
<path d="M376.7 391.1L378.2 396.9L380.7 398.4L379.2 393.0" fill="#000064"/>
<path d="M379.2 393.0L380.7 398.4L383.2 399.9L381.7 394.8" fill="#000059"/>
<path d="M378.2 396.9L379.7 402.6L382.2 403.8L380.7 398.4" fill="#000054"/>
<path d="M380.7 398.4L382.2 403.8L384.7 404.9L383.2 399.9" fill="#00004a"/>
<polygon points="370.5,386.2 373.9,400.8 379.6,403.2 376.2,390.1" fill="#000070"/>
<path d="M371.0 387.3L372.5 393.7L375.0 395.1L373.5 389.0" fill="#00007f"/>
<path d="M373.5 389.0L375.0 395.1L377.6 396.5L376.0 390.7" fill="#000073"/>
<path d="M372.5 393.7L374.0 400.1L376.5 401.2L375.0 395.1" fill="#00006b"/>
<path d="M375.0 395.1L376.5 401.2L379.1 402.3L377.6 396.5" fill="#000061"/>
<polygon points="364.6,383.1 368.0,399.0 373.9,400.8 370.5,386.2" fill="#000088"/>
<path d="M365.2 384.2L366.2 388.9L367.9 389.6L366.9 385.1" fill="#00009e"/>
<path d="M366.9 385.1L367.9 389.6L369.6 390.4L368.6 386.0" fill="#000097"/>
<path d="M368.6 386.0L369.6 390.4L371.3 391.2L370.3 386.9" fill="#000090"/>
<path d="M366.2 388.9L367.2 393.5L368.9 394.2L367.9 389.6" fill="#00008e"/>
<path d="M367.9 389.6L368.9 394.2L370.6 394.8L369.6 390.4" fill="#000088"/>
<path d="M369.6 390.4L370.6 394.8L372.3 395.5L371.3 391.2" fill="#000081"/>
<path d="M367.2 393.5L368.1 398.2L369.9 398.7L368.9 394.2" fill="#00007f"/>
<path d="M368.9 394.2L369.9 398.7L371.6 399.3L370.6 394.8" fill="#000079"/>
<path d="M370.6 394.8L371.6 399.3L373.3 399.8L372.3 395.5" fill="#000072"/>
<polygon points="358.6,381.3 362.0,398.2 368.0,399.0 364.6,383.1" fill="#00009e"/>
<path d="M359.2 382.4L360.2 387.3L362.0 387.8L361.0 382.9" fill="#0000b5"/>
<path d="M361.0 382.9L362.0 387.8L363.7 388.2L362.7 383.4" fill="#0000af"/>
<path d="M362.7 383.4L363.7 388.2L365.4 388.6L364.5 383.9" fill="#0000a8"/>
<path d="M360.2 387.3L361.2 392.3L362.9 392.6L362.0 387.8" fill="#0000a2"/>
<path d="M362.0 387.8L362.9 392.6L364.7 393.0L363.7 388.2" fill="#00009d"/>
<path d="M363.7 388.2L364.7 393.0L366.4 393.3L365.4 388.6" fill="#000097"/>
<path d="M361.2 392.3L362.2 397.2L363.9 397.5L362.9 392.6" fill="#010191"/>
<path d="M362.9 392.6L363.9 397.5L365.7 397.7L364.7 393.0" fill="#00008c"/>
<path d="M364.7 393.0L365.7 397.7L367.4 398.0L366.4 393.3" fill="#000087"/>
<polygon points="352.5,381.1 356.0,398.5 362.0,398.2 358.6,381.3" fill="#0303b0"/>
<path d="M353.1 382.2L354.1 387.3L355.9 387.3L354.9 382.2" fill="#0404c8"/>
<path d="M354.9 382.2L355.9 387.3L357.7 387.3L356.7 382.3" fill="#0202c2"/>
<path d="M356.7 382.3L357.7 387.3L359.5 387.3L358.5 382.3" fill="#0101bc"/>
<path d="M354.1 387.3L355.1 392.4L356.9 392.3L355.9 387.3" fill="#0505b4"/>
<path d="M355.9 387.3L356.9 392.3L358.7 392.3L357.7 387.3" fill="#0303af"/>
<path d="M357.7 387.3L358.7 392.3L360.5 392.2L359.5 387.3" fill="#0101aa"/>
<path d="M355.1 392.4L356.1 397.5L357.9 397.4L356.9 392.3" fill="#0606a2"/>
<path d="M356.9 392.3L357.9 397.4L359.7 397.3L358.7 392.3" fill="#03039d"/>
<path d="M358.7 392.3L359.7 397.3L361.5 397.2L360.5 392.2" fill="#020298"/>
<polygon points="346.4,382.8 349.8,400.2 356.0,398.5 352.5,381.1" fill="#1212c7"/>
<path d="M346.9 383.7L348.0 388.9L349.8 388.4L348.8 383.2" fill="#1919e2"/>
<path d="M348.8 383.2L349.8 388.4L351.6 387.9L350.6 382.8" fill="#1010d9"/>
<path d="M350.6 382.8L351.6 387.9L353.4 387.4L352.4 382.3" fill="#0a0ad1"/>
<path d="M348.0 388.9L349.0 394.0L350.8 393.5L349.8 388.4" fill="#1b1bcf"/>
<path d="M349.8 388.4L350.8 393.5L352.6 393.0L351.6 387.9" fill="#1111c6"/>
<path d="M351.6 387.9L352.6 393.0L354.4 392.5L353.4 387.4" fill="#0b0bbe"/>
<path d="M349.0 394.0L350.0 399.1L351.8 398.6L350.8 393.5" fill="#1d1dbe"/>
<path d="M350.8 393.5L351.8 398.6L353.6 398.1L352.6 393.0" fill="#1313b4"/>
<path d="M352.6 393.0L353.6 398.1L355.4 397.6L354.4 392.5" fill="#0c0cac"/>
<polygon points="340.1,386.2 343.6,403.3 349.8,400.2 346.4,382.8" fill="#3b3bef"/>
<path d="M340.7 387.1L341.7 392.1L343.5 391.1L342.5 386.0" fill="#4747ff"/>
<path d="M342.5 386.0L343.5 391.1L345.4 390.1L344.4 385.0" fill="#3838ff"/>
<path d="M344.4 385.0L345.4 390.1L347.2 389.2L346.2 384.0" fill="#2a2af3"/>
<path d="M341.7 392.1L342.7 397.1L344.6 396.2L343.5 391.1" fill="#4949fb"/>
<path d="M343.5 391.1L344.6 396.2L346.4 395.2L345.4 390.1" fill="#3a3aed"/>
<path d="M345.4 390.1L346.4 395.2L348.2 394.3L347.2 389.2" fill="#2b2be0"/>
<path d="M342.7 397.1L343.7 402.1L345.6 401.2L344.6 396.2" fill="#4d4deb"/>
<path d="M344.6 396.2L345.6 401.2L347.4 400.3L346.4 395.2" fill="#3d3ddd"/>
<path d="M346.4 395.2L347.4 400.3L349.2 399.4L348.2 394.3" fill="#2e2ecf"/>
<polygon points="333.8,391.4 337.3,407.7 343.6,403.3 340.1,386.2" fill="#6e6eff"/>
<path d="M334.4 392.1L335.4 396.8L337.3 395.4L336.2 390.6" fill="#7171ff"/>
<path d="M336.2 390.6L337.3 395.4L339.1 394.0L338.1 389.1" fill="#6868ff"/>
<path d="M338.1 389.1L339.1 394.0L341.0 392.6L339.9 387.6" fill="#5b5bff"/>
<path d="M335.4 396.8L336.4 401.6L338.3 400.3L337.3 395.4" fill="#7777ff"/>
<path d="M337.3 395.4L338.3 400.3L340.1 398.9L339.1 394.0" fill="#6c6cff"/>
<path d="M339.1 394.0L340.1 398.9L342.0 397.6L341.0 392.6" fill="#5f5fff"/>
<path d="M336.4 401.6L337.4 406.4L339.3 405.2L338.3 400.3" fill="#7f7fff"/>
<path d="M338.3 400.3L339.3 405.2L341.1 403.9L340.1 398.9" fill="#7373ff"/>
<path d="M340.1 398.9L341.1 403.9L343.0 402.6L342.0 397.6" fill="#6464fe"/>
<polygon points="327.4,397.9 331.0,413.0 337.3,407.7 333.8,391.4" fill="#8181ff"/>
<path d="M328.0 398.4L329.1 402.9L330.9 401.1L329.9 396.5" fill="#7171ff"/>
<path d="M329.9 396.5L330.9 401.1L332.8 399.3L331.8 394.6" fill="#7575ff"/>
<path d="M331.8 394.6L332.8 399.3L334.6 397.5L333.6 392.7" fill="#7676ff"/>
<path d="M329.1 402.9L330.1 407.3L332.0 405.6L330.9 401.1" fill="#7d7dff"/>
<path d="M330.9 401.1L332.0 405.6L333.8 404.0L332.8 399.3" fill="#8080ff"/>
<path d="M332.8 399.3L333.8 404.0L335.7 402.3L334.6 397.5" fill="#7f7fff"/>
<path d="M330.1 407.3L331.1 411.8L333.0 410.2L332.0 405.6" fill="#8b8bff"/>
<path d="M332.0 405.6L333.0 410.2L334.8 408.6L333.8 404.0" fill="#8c8cff"/>
<path d="M333.8 404.0L334.8 408.6L336.7 407.0L335.7 402.3" fill="#8a8aff"/>
<polygon points="321.1,405.4 324.6,419.0 331.0,413.0 327.4,397.9" fill="#6969eb"/>
<path d="M321.7 405.7L322.7 409.8L324.6 407.7L323.5 403.6" fill="#4f4fd8"/>
<path d="M323.5 403.6L324.6 407.7L326.4 405.7L325.4 401.4" fill="#5a5aec"/>
<path d="M325.4 401.4L326.4 405.7L328.3 403.7L327.3 399.2" fill="#6565fe"/>
<path d="M322.7 409.8L323.7 413.8L325.6 411.9L324.6 407.7" fill="#5e5ed7"/>
<path d="M324.6 407.7L325.6 411.9L327.5 410.0L326.4 405.7" fill="#6969ea"/>
<path d="M326.4 405.7L327.5 410.0L329.3 408.1L328.3 403.7" fill="#7373fb"/>
<path d="M323.7 413.8L324.8 417.8L326.6 416.1L325.6 411.9" fill="#6d6dd8"/>
<path d="M325.6 411.9L326.6 416.1L328.5 414.3L327.5 410.0" fill="#7979ea"/>
<path d="M327.5 410.0L328.5 414.3L330.4 412.5L329.3 408.1" fill="#8282fa"/>
<polygon points="314.7,413.3 318.2,425.3 324.6,419.0 321.1,405.4" fill="#4141a9"/>
<path d="M315.3 413.5L316.3 417.1L318.2 414.9L317.2 411.2" fill="#2b2b97"/>
<path d="M317.2 411.2L318.2 414.9L320.1 412.8L319.1 408.9" fill="#3434a9"/>
<path d="M319.1 408.9L320.1 412.8L321.9 410.6L320.9 406.7" fill="#3f3fbc"/>
<path d="M316.3 417.1L317.4 420.6L319.2 418.6L318.2 414.9" fill="#363695"/>
<path d="M318.2 414.9L319.2 418.6L321.1 416.6L320.1 412.8" fill="#4141a8"/>
<path d="M320.1 412.8L321.1 416.6L323.0 414.6L321.9 410.6" fill="#4d4dbb"/>
<path d="M317.4 420.6L318.4 424.2L320.3 422.3L319.2 418.6" fill="#414193"/>
<path d="M319.2 418.6L320.3 422.3L322.1 420.5L321.1 416.6" fill="#4e4ea7"/>
<path d="M321.1 416.6L322.1 420.5L324.0 418.6L323.0 414.6" fill="#5b5bbc"/>
<polygon points="308.4,421.2 311.8,431.4 318.2,425.3 314.7,413.3" fill="#1f1f6c"/>
<path d="M309.0 421.3L310.0 424.3L311.8 422.2L310.8 419.0" fill="#131362"/>
<path d="M310.8 419.0L311.8 422.2L313.7 420.1L312.7 416.8" fill="#181870"/>
<path d="M312.7 416.8L313.7 420.1L315.6 418.0L314.6 414.5" fill="#1f1f7f"/>
<path d="M310.0 424.3L311.0 427.4L312.9 425.4L311.8 422.2" fill="#18185c"/>
<path d="M311.8 422.2L312.9 425.4L314.7 423.4L313.7 420.1" fill="#1f1f6b"/>
<path d="M313.7 420.1L314.7 423.4L316.6 421.4L315.6 418.0" fill="#28287c"/>
<path d="M311.0 427.4L312.0 430.4L313.9 428.6L312.9 425.4" fill="#1b1b56"/>
<path d="M312.9 425.4L313.9 428.6L315.8 426.8L314.7 423.4" fill="#252566"/>
<path d="M314.7 423.4L315.8 426.8L317.6 424.9L316.6 421.4" fill="#303078"/>
<polygon points="302.0,428.5 305.4,436.9 311.8,431.4 308.4,421.2" fill="#0a0a3f"/>
<path d="M302.6 428.6L303.6 431.0L305.4 429.1L304.4 426.4" fill="#06063a"/>
<path d="M304.4 426.4L305.4 429.1L307.3 427.1L306.3 424.3" fill="#090944"/>
<path d="M306.3 424.3L307.3 427.1L309.2 425.2L308.2 422.2" fill="#0c0c50"/>
<path d="M303.6 431.0L304.6 433.5L306.5 431.7L305.4 429.1" fill="#060633"/>
<path d="M305.4 429.1L306.5 431.7L308.3 429.9L307.3 427.1" fill="#0a0a3d"/>
<path d="M307.3 427.1L308.3 429.9L310.2 428.1L309.2 425.2" fill="#0f0f49"/>
<path d="M304.6 433.5L305.6 436.0L307.5 434.4L306.5 431.7" fill="#06062a"/>
<path d="M306.5 431.7L307.5 434.4L309.3 432.7L308.3 429.9" fill="#0a0a35"/>
<path d="M308.3 429.9L309.3 432.7L311.2 431.1L310.2 428.1" fill="#101041"/>
<polygon points="295.6,434.8 298.9,441.4 305.4,436.9 302.0,428.5" fill="#010121"/>
<path d="M296.2 434.8L297.6 437.8L300.5 435.4L299.0 432.1" fill="#01011f"/>
<path d="M299.0 432.1L300.5 435.4L303.3 433.0L301.8 429.4" fill="#020229"/>
<path d="M297.6 437.8L299.1 440.7L302.0 438.7L300.5 435.4" fill="#000016"/>
<path d="M300.5 435.4L302.0 438.7L304.8 436.6L303.3 433.0" fill="#02021f"/>
<polygon points="289.1,439.8 292.4,444.7 298.9,441.4 295.6,434.8" fill="#000010"/>
<polygon points="282.6,443.1 285.8,446.7 292.4,444.7 289.1,439.8" fill="#000008"/>
<polygon points="225.2,424.8 227.9,426.2 235.6,429.2 232.9,428.4" fill="#000023"/>
<polygon points="217.5,422.2 220.2,424.3 227.9,426.2 225.2,424.8" fill="#000063"/>
<polygon points="209.8,420.9 212.5,423.7 220.2,424.3 217.5,422.2" fill="#000081"/>
<polygon points="202.1,421.2 204.8,424.7 212.5,423.7 209.8,420.9" fill="#0000a1"/>
<path d="M202.7 421.4L203.9 422.9L207.3 422.6L206.1 421.3" fill="#0000a5"/>
<path d="M206.1 421.3L207.3 422.6L210.7 422.4L209.5 421.1" fill="#000098"/>
<path d="M203.9 422.9L205.1 424.5L208.5 424.0L207.3 422.6" fill="#0000aa"/>
<path d="M207.3 422.6L208.5 424.0L211.9 423.6L210.7 422.4" fill="#00009e"/>
<polygon points="194.4,423.1 197.1,427.3 204.8,424.7 202.1,421.2" fill="#0000b7"/>
<polygon points="186.9,426.6 189.6,431.3 197.1,427.3 194.4,423.1" fill="#0000bd"/>
<polygon points="179.4,431.4 182.0,436.6 189.6,431.3 186.9,426.6" fill="#0000b5"/>
<polygon points="484.9,351.5 489.2,355.1 493.9,356.7 489.6,352.8" fill="#00008c"/>
<polygon points="480.0,351.3 484.3,354.4 489.2,355.1 484.9,351.5" fill="#00009f"/>
<polygon points="474.9,352.2 479.3,354.8 484.3,354.4 480.0,351.3" fill="#0000ac"/>
<polygon points="469.6,354.5 474.0,356.5 479.3,354.8 474.9,352.2" fill="#0000ae"/>
<polygon points="464.2,358.1 468.6,359.5 474.0,356.5 469.6,354.5" fill="#0000a2"/>
<polygon points="458.6,363.0 463.1,363.7 468.6,359.5 464.2,358.1" fill="#00008c"/>
<polygon points="452.9,369.0 457.4,369.1 463.1,363.7 458.6,363.0" fill="#000074"/>
<polygon points="447.2,375.6 451.7,375.2 457.4,369.1 452.9,369.0" fill="#00005d"/>
<polygon points="441.4,382.5 445.9,381.9 451.7,375.2 447.2,375.6" fill="#000049"/>
<polygon points="435.7,389.3 440.1,388.6 445.9,381.9 441.4,382.5" fill="#000037"/>
<polygon points="429.9,395.6 434.2,395.2 440.1,388.6 435.7,389.3" fill="#000028"/>
<polygon points="424.2,401.1 428.5,401.1 434.2,395.2 429.9,395.6" fill="#00001c"/>
<polygon points="418.6,405.5 422.7,406.3 428.5,401.1 424.2,401.1" fill="#000012"/>
<polygon points="413.0,408.6 417.0,410.4 422.7,406.3 418.6,405.5" fill="#00000b"/>
<polygon points="407.4,410.3 411.4,413.3 417.0,410.4 413.0,408.6" fill="#000007"/>
<polygon points="401.9,410.7 405.8,415.2 411.4,413.3 407.4,410.3" fill="#000008"/>
<polygon points="396.4,409.9 400.1,415.9 405.8,415.2 401.9,410.7" fill="#00000d"/>
<polygon points="390.9,408.1 394.5,415.8 400.1,415.9 396.4,409.9" fill="#000018"/>
<polygon points="385.3,405.8 388.9,415.1 394.5,415.8 390.9,408.1" fill="#000026"/>
<path d="M385.8 406.5L387.4 410.5L389.9 411.2L388.3 407.5" fill="#00002e"/>
<path d="M388.3 407.5L389.9 411.2L392.4 411.9L390.7 408.5" fill="#000026"/>
<path d="M387.4 410.5L389.0 414.6L391.5 415.0L389.9 411.2" fill="#000023"/>
<path d="M389.9 411.2L391.5 415.0L394.0 415.3L392.4 411.9" fill="#00001d"/>
<polygon points="379.6,403.2 383.1,414.1 388.9,415.1 385.3,405.8" fill="#000037"/>
<path d="M380.2 404.0L381.7 408.8L384.2 409.6L382.7 405.1" fill="#000040"/>
<path d="M382.7 405.1L384.2 409.6L386.7 410.3L385.2 406.2" fill="#000038"/>
<path d="M381.7 408.8L383.3 413.5L385.8 414.0L384.2 409.6" fill="#000032"/>
<path d="M384.2 409.6L385.8 414.0L388.3 414.5L386.7 410.3" fill="#00002b"/>
<polygon points="373.9,400.8 377.3,413.2 383.1,414.1 379.6,403.2" fill="#000048"/>
<path d="M374.4 401.7L375.9 407.1L378.5 407.8L377.0 402.7" fill="#000053"/>
<path d="M377.0 402.7L378.5 407.8L381.0 408.6L379.5 403.7" fill="#00004b"/>
<path d="M375.9 407.1L377.5 412.5L380.0 412.9L378.5 407.8" fill="#000042"/>
<path d="M378.5 407.8L380.0 412.9L382.6 413.4L381.0 408.6" fill="#00003b"/>
<polygon points="368.0,399.0 371.5,412.5 377.3,413.2 373.9,400.8" fill="#000059"/>
<path d="M368.6 399.9L370.1 405.8L372.7 406.4L371.1 400.7" fill="#000065"/>
<path d="M371.1 400.7L372.7 406.4L375.2 406.9L373.7 401.5" fill="#00005e"/>
<path d="M370.1 405.8L371.6 411.8L374.2 412.1L372.7 406.4" fill="#000052"/>
<path d="M372.7 406.4L374.2 412.1L376.8 412.4L375.2 406.9" fill="#00004b"/>
<polygon points="362.0,398.2 365.5,412.5 371.5,412.5 368.0,399.0" fill="#010168"/>
<path d="M362.6 399.1L363.6 403.3L365.4 403.4L364.4 399.3" fill="#01017a"/>
<path d="M364.4 399.3L365.4 403.4L367.1 403.6L366.1 399.5" fill="#000076"/>
<path d="M366.1 399.5L367.1 403.6L368.9 403.8L367.8 399.8" fill="#000071"/>
<path d="M363.6 403.3L364.6 407.5L366.4 407.6L365.4 403.4" fill="#01016b"/>
<path d="M365.4 403.4L366.4 407.6L368.1 407.6L367.1 403.6" fill="#010167"/>
<path d="M367.1 403.6L368.1 407.6L369.9 407.7L368.9 403.8" fill="#000063"/>
<path d="M364.6 407.5L365.6 411.7L367.4 411.7L366.4 407.6" fill="#02025d"/>
<path d="M366.4 407.6L367.4 411.7L369.2 411.7L368.1 407.6" fill="#010159"/>
<path d="M368.1 407.6L369.2 411.7L370.9 411.7L369.9 407.7" fill="#000055"/>
<polygon points="356.0,398.5 359.4,413.3 365.5,412.5 362.0,398.2" fill="#050577"/>
<path d="M356.5 399.4L357.6 403.7L359.3 403.6L358.3 399.3" fill="#07078b"/>
<path d="M358.3 399.3L359.3 403.6L361.1 403.4L360.1 399.2" fill="#040485"/>
<path d="M360.1 399.2L361.1 403.4L362.9 403.3L361.9 399.1" fill="#020281"/>
<path d="M357.6 403.7L358.6 408.1L360.4 407.9L359.3 403.6" fill="#09097c"/>
<path d="M359.3 403.6L360.4 407.9L362.1 407.7L361.1 403.4" fill="#050576"/>
<path d="M361.1 403.4L362.1 407.7L363.9 407.5L362.9 403.3" fill="#030371"/>
<path d="M358.6 408.1L359.6 412.4L361.4 412.2L360.4 407.9" fill="#0a0a6e"/>
<path d="M360.4 407.9L361.4 412.2L363.1 411.9L362.1 407.7" fill="#060668"/>
<path d="M362.1 407.7L363.1 411.9L364.9 411.7L363.9 407.5" fill="#040463"/>
<polygon points="349.8,400.2 353.3,415.1 359.4,413.3 356.0,398.5" fill="#191990"/>
<path d="M350.4 401.0L351.4 405.4L353.2 404.9L352.2 400.5" fill="#2020a8"/>
<path d="M352.2 400.5L353.2 404.9L355.0 404.4L354.0 400.0" fill="#16169d"/>
<path d="M354.0 400.0L355.0 404.4L356.8 403.9L355.8 399.5" fill="#0f0f95"/>
<path d="M351.4 405.4L352.4 409.8L354.2 409.2L353.2 404.9" fill="#24249a"/>
<path d="M353.2 404.9L354.2 409.2L356.0 408.7L355.0 404.4" fill="#19198f"/>
<path d="M355.0 404.4L356.0 408.7L357.8 408.2L356.8 403.9" fill="#111186"/>
<path d="M352.4 409.8L353.4 414.1L355.3 413.6L354.2 409.2" fill="#27278e"/>
<path d="M354.2 409.2L355.3 413.6L357.1 413.1L356.0 408.7" fill="#1c1c82"/>
<path d="M356.0 408.7L357.1 413.1L358.9 412.6L357.8 408.2" fill="#131378"/>
<polygon points="343.6,403.3 347.1,417.9 353.3,415.1 349.8,400.2" fill="#4949bf"/>
<path d="M344.2 404.0L345.2 408.3L347.0 407.4L346.0 403.1" fill="#5454d8"/>
<path d="M346.0 403.1L347.0 407.4L348.8 406.6L347.8 402.2" fill="#4343c9"/>
<path d="M347.8 402.2L348.8 406.6L350.7 405.7L349.6 401.3" fill="#3333ba"/>
<path d="M345.2 408.3L346.2 412.6L348.0 411.7L347.0 407.4" fill="#5a5acd"/>
<path d="M347.0 407.4L348.0 411.7L349.9 410.9L348.8 406.6" fill="#4848bd"/>
<path d="M348.8 406.6L349.9 410.9L351.7 410.0L350.7 405.7" fill="#3737ad"/>
<path d="M346.2 412.6L347.2 416.8L349.1 416.0L348.0 411.7" fill="#5f5fc2"/>
<path d="M348.0 411.7L349.1 416.0L350.9 415.2L349.9 410.9" fill="#4d4db1"/>
<path d="M349.9 410.9L350.9 415.2L352.7 414.4L351.7 410.0" fill="#3c3ca1"/>
<polygon points="337.3,407.7 340.8,421.5 347.1,417.9 343.6,403.3" fill="#8686f5"/>
<path d="M337.9 408.3L338.9 412.3L340.7 411.1L339.7 407.0" fill="#8b8bff"/>
<path d="M339.7 407.0L340.7 411.1L342.6 409.9L341.6 405.7" fill="#7d7dfb"/>
<path d="M341.6 405.7L342.6 409.9L344.4 408.7L343.4 404.5" fill="#6d6dee"/>
<path d="M338.9 412.3L339.9 416.4L341.8 415.2L340.7 411.1" fill="#9494fe"/>
<path d="M340.7 411.1L341.8 415.2L343.6 414.1L342.6 409.9" fill="#8585f2"/>
<path d="M342.6 409.9L343.6 414.1L345.5 413.0L344.4 408.7" fill="#7474e4"/>
<path d="M339.9 416.4L341.0 420.5L342.8 419.4L341.8 415.2" fill="#9a9af5"/>
<path d="M341.8 415.2L342.8 419.4L344.6 418.3L343.6 414.1" fill="#8b8be9"/>
<path d="M343.6 414.1L344.6 418.3L346.5 417.2L345.5 413.0" fill="#7a7ada"/>
<polygon points="331.0,413.0 334.5,425.8 340.8,421.5 337.3,407.7" fill="#a9a9ff"/>
<path d="M331.5 413.5L332.6 417.2L334.4 415.8L333.4 411.9" fill="#9e9eff"/>
<path d="M333.4 411.9L334.4 415.8L336.3 414.3L335.3 410.4" fill="#9e9eff"/>
<path d="M335.3 410.4L336.3 414.3L338.1 412.9L337.1 408.8" fill="#9999ff"/>
<path d="M332.6 417.2L333.6 421.0L335.5 419.6L334.4 415.8" fill="#a8a8ff"/>
<path d="M334.4 415.8L335.5 419.6L337.3 418.3L336.3 414.3" fill="#a8a8ff"/>
<path d="M336.3 414.3L337.3 418.3L339.2 416.9L338.1 412.9" fill="#a3a3ff"/>
<path d="M333.6 421.0L334.6 424.8L336.5 423.5L335.5 419.6" fill="#acacfb"/>
<path d="M335.5 419.6L336.5 423.5L338.4 422.2L337.3 418.3" fill="#adadff"/>
<path d="M337.3 418.3L338.4 422.2L340.2 420.9L339.2 416.9" fill="#a8a8ff"/>
<polygon points="324.6,419.0 328.1,430.5 334.5,425.8 331.0,413.0" fill="#9595e7"/>
<path d="M325.2 419.4L326.2 422.7L328.1 421.1L327.1 417.6" fill="#8080d8"/>
<path d="M327.1 417.6L328.1 421.1L329.9 419.5L328.9 415.9" fill="#8d8dea"/>
<path d="M328.9 415.9L329.9 419.5L331.8 417.9L330.8 414.1" fill="#9797fa"/>
<path d="M326.2 422.7L327.2 426.1L329.1 424.6L328.1 421.1" fill="#8888d2"/>
<path d="M328.1 421.1L329.1 424.6L331.0 423.1L329.9 419.5" fill="#9696e6"/>
<path d="M329.9 419.5L331.0 423.1L332.8 421.6L331.8 417.9" fill="#a1a1f6"/>
<path d="M327.2 426.1L328.3 429.5L330.1 428.1L329.1 424.6" fill="#8484c3"/>
<path d="M329.1 424.6L330.1 428.1L332.0 426.7L331.0 423.1" fill="#9595d9"/>
<path d="M331.0 423.1L332.0 426.7L333.9 425.3L332.8 421.6" fill="#a2a2ea"/>
<polygon points="318.2,425.3 321.7,435.2 328.1,430.5 324.6,419.0" fill="#5b5b9a"/>
<path d="M318.8 425.5L319.8 428.4L321.7 426.8L320.7 423.7" fill="#4b4b8d"/>
<path d="M320.7 423.7L321.7 426.8L323.6 425.1L322.6 421.9" fill="#5b5ba4"/>
<path d="M322.6 421.9L323.6 425.1L325.5 423.4L324.4 420.1" fill="#6b6bba"/>
<path d="M319.8 428.4L320.9 431.4L322.7 429.8L321.7 426.8" fill="#494981"/>
<path d="M321.7 426.8L322.7 429.8L324.6 428.3L323.6 425.1" fill="#5d5d9a"/>
<path d="M323.6 425.1L324.6 428.3L326.5 426.7L325.5 423.4" fill="#7070b2"/>
<path d="M320.9 431.4L321.9 434.3L323.8 432.9L322.7 429.8" fill="#3e3e6c"/>
<path d="M322.7 429.8L323.8 432.9L325.6 431.5L324.6 428.3" fill="#535385"/>
<path d="M324.6 428.3L325.6 431.5L327.5 430.1L326.5 426.7" fill="#6868a0"/>
<polygon points="311.8,431.4 315.3,439.7 321.7,435.2 318.2,425.3" fill="#20204c"/>
<path d="M312.4 431.5L313.4 434.0L315.3 432.3L314.3 429.8" fill="#1a1a48"/>
<path d="M314.3 429.8L315.3 432.3L317.2 430.7L316.2 428.0" fill="#27275a"/>
<path d="M316.2 428.0L317.2 430.7L319.1 429.1L318.0 426.2" fill="#35356e"/>
<path d="M313.4 434.0L314.4 436.4L316.3 434.9L315.3 432.3" fill="#141439"/>
<path d="M315.3 432.3L316.3 434.9L318.2 433.5L317.2 430.7" fill="#21214b"/>
<path d="M317.2 430.7L318.2 433.5L320.1 432.0L319.1 429.1" fill="#303060"/>
<path d="M314.4 436.4L315.5 438.9L317.4 437.6L316.3 434.9" fill="#0b0b29"/>
<path d="M316.3 434.9L317.4 437.6L319.2 436.2L318.2 433.5" fill="#151538"/>
<path d="M318.2 433.5L319.2 436.2L321.1 434.9L320.1 432.0" fill="#24244b"/>
<polygon points="305.4,436.9 308.8,443.5 315.3,439.7 311.8,431.4" fill="#03031f"/>
<path d="M306.0 436.9L307.5 439.9L310.3 437.8L308.8 434.6" fill="#03031e"/>
<path d="M308.8 434.6L310.3 437.8L313.2 435.8L311.6 432.2" fill="#0a0a2c"/>
<path d="M307.5 439.9L309.0 442.9L311.9 441.1L310.3 437.8" fill="#000013"/>
<path d="M310.3 437.8L311.9 441.1L314.7 439.4L313.2 435.8" fill="#03031c"/>
<polygon points="298.9,441.4 302.3,446.5 308.8,443.5 305.4,436.9" fill="#00000f"/>
<polygon points="235.6,429.2 238.4,430.0 246.0,433.2 243.2,432.9" fill="#000020"/>
<polygon points="227.9,426.2 230.7,427.7 238.4,430.0 235.6,429.2" fill="#000053"/>
<polygon points="220.2,424.3 223.0,426.6 230.7,427.7 227.9,426.2" fill="#00006f"/>
<polygon points="212.5,423.7 215.3,426.8 223.0,426.6 220.2,424.3" fill="#00008f"/>
<polygon points="204.8,424.7 207.6,428.6 215.3,426.8 212.5,423.7" fill="#0000ac"/>
<polygon points="197.1,427.3 199.9,431.9 207.6,428.6 204.8,424.7" fill="#0000bd"/>
<polygon points="189.6,431.3 192.3,436.5 199.9,431.9 197.1,427.3" fill="#0000bd"/>
<polygon points="182.0,436.6 184.8,442.1 192.3,436.5 189.6,431.3" fill="#0000b2"/>
<polygon points="489.2,355.1 493.5,359.0 498.2,360.8 493.9,356.7" fill="#000087"/>
<polygon points="484.3,354.4 488.7,357.9 493.5,359.0 489.2,355.1" fill="#000099"/>
<polygon points="479.3,354.8 483.7,357.8 488.7,357.9 484.3,354.4" fill="#0000a9"/>
<polygon points="474.0,356.5 478.5,358.8 483.7,357.8 479.3,354.8" fill="#0000af"/>
<polygon points="468.6,359.5 473.1,361.1 478.5,358.8 474.0,356.5" fill="#0000a9"/>
<polygon points="463.1,363.7 467.6,364.6 473.1,361.1 468.6,359.5" fill="#000096"/>
<polygon points="457.4,369.1 462.0,369.3 467.6,364.6 463.1,363.7" fill="#00007f"/>
<polygon points="451.7,375.2 456.2,374.9 462.0,369.3 457.4,369.1" fill="#000067"/>
<polygon points="445.9,381.9 450.4,381.1 456.2,374.9 451.7,375.2" fill="#000052"/>
<polygon points="440.1,388.6 444.6,387.7 450.4,381.1 445.9,381.9" fill="#00003f"/>
<polygon points="434.2,395.2 438.7,394.2 444.6,387.7 440.1,388.6" fill="#000030"/>
<polygon points="428.5,401.1 432.9,400.5 438.7,394.2 434.2,395.2" fill="#000023"/>
<polygon points="422.7,406.3 427.0,406.2 432.9,400.5 428.5,401.1" fill="#000019"/>
<polygon points="417.0,410.4 421.2,411.0 427.0,406.2 422.7,406.3" fill="#000011"/>
<polygon points="411.4,413.3 415.5,415.0 421.2,411.0 417.0,410.4" fill="#00000b"/>
<polygon points="405.8,415.2 409.8,418.1 415.5,415.0 411.4,413.3" fill="#000007"/>
<polygon points="400.1,415.9 404.0,420.2 409.8,418.1 405.8,415.2" fill="#000007"/>
<polygon points="394.5,415.8 398.3,421.5 404.0,420.2 400.1,415.9" fill="#00000b"/>
<polygon points="388.9,415.1 392.6,422.2 398.3,421.5 394.5,415.8" fill="#000012"/>
<polygon points="383.1,414.1 386.8,422.6 392.6,422.2 388.9,415.1" fill="#00001c"/>
<polygon points="377.3,413.2 381.0,422.9 386.8,422.6 383.1,414.1" fill="#000027"/>
<path d="M377.9 413.8L379.5 418.0L382.1 418.2L380.5 414.2" fill="#00002f"/>
<path d="M380.5 414.2L382.1 418.2L384.6 418.3L383.0 414.6" fill="#00002a"/>
<path d="M379.5 418.0L381.1 422.3L383.7 422.2L382.1 418.2" fill="#000022"/>
<path d="M382.1 418.2L383.7 422.2L386.2 422.1L384.6 418.3" fill="#00001e"/>
<polygon points="371.5,412.5 375.0,423.2 381.0,422.9 377.3,413.2" fill="#000033"/>
<path d="M372.0 413.2L373.6 417.9L376.2 417.9L374.6 413.4" fill="#00003b"/>
<path d="M374.6 413.4L376.2 417.9L378.8 418.0L377.2 413.7" fill="#000036"/>
<path d="M373.6 417.9L375.2 422.6L377.8 422.4L376.2 417.9" fill="#00002c"/>
<path d="M376.2 417.9L377.8 422.4L380.4 422.3L378.8 418.0" fill="#000028"/>
<polygon points="365.5,412.5 369.0,424.0 375.0,423.2 371.5,412.5" fill="#02023d"/>
<path d="M366.1 413.2L367.6 418.2L370.3 418.1L368.7 413.2" fill="#020247"/>
<path d="M368.7 413.2L370.3 418.1L372.9 417.9L371.3 413.2" fill="#010142"/>
<path d="M367.6 418.2L369.2 423.2L371.8 422.9L370.3 418.1" fill="#020236"/>
<path d="M370.3 418.1L371.8 422.9L374.5 422.6L372.9 417.9" fill="#010131"/>
<polygon points="359.4,413.3 363.0,425.2 369.0,424.0 365.5,412.5" fill="#09094b"/>
<path d="M360.0 414.0L361.6 419.2L364.2 418.8L362.7 413.6" fill="#0c0c57"/>
<path d="M362.7 413.6L364.2 418.8L366.9 418.3L365.3 413.2" fill="#06064f"/>
<path d="M361.6 419.2L363.1 424.4L365.8 423.9L364.2 418.8" fill="#0c0c45"/>
<path d="M364.2 418.8L365.8 423.9L368.5 423.4L366.9 418.3" fill="#06063d"/>
<polygon points="353.3,415.1 356.8,427.1 363.0,425.2 359.4,413.3" fill="#202066"/>
<path d="M353.9 415.7L354.9 419.2L356.7 418.7L355.7 415.2" fill="#2b2b7d"/>
<path d="M355.7 415.2L356.7 418.7L358.5 418.2L357.5 414.7" fill="#202071"/>
<path d="M357.5 414.7L358.5 418.2L360.3 417.6L359.3 414.2" fill="#161667"/>
<path d="M354.9 419.2L355.9 422.7L357.8 422.2L356.7 418.7" fill="#2b2b6f"/>
<path d="M356.7 418.7L357.8 422.2L359.6 421.7L358.5 418.2" fill="#202064"/>
<path d="M358.5 418.2L359.6 421.7L361.4 421.1L360.3 417.6" fill="#17175a"/>
<path d="M355.9 422.7L357.0 426.2L358.8 425.7L357.8 422.2" fill="#27275f"/>
<path d="M357.8 422.2L358.8 425.7L360.6 425.2L359.6 421.7" fill="#1d1d55"/>
<path d="M359.6 421.7L360.6 425.2L362.4 424.6L361.4 421.1" fill="#15154d"/>
<polygon points="347.1,417.9 350.6,429.5 356.8,427.1 353.3,415.1" fill="#4d4d92"/>
<path d="M347.7 418.4L348.7 421.8L350.5 421.1L349.5 417.6" fill="#6262b1"/>
<path d="M349.5 417.6L350.5 421.1L352.3 420.3L351.3 416.8" fill="#5050a0"/>
<path d="M351.3 416.8L352.3 420.3L354.2 419.5L353.1 416.0" fill="#404091"/>
<path d="M348.7 421.8L349.7 425.2L351.6 424.5L350.5 421.1" fill="#5d5d9e"/>
<path d="M350.5 421.1L351.6 424.5L353.4 423.7L352.3 420.3" fill="#4d4d90"/>
<path d="M352.3 420.3L353.4 423.7L355.2 423.0L354.2 419.5" fill="#3e3e82"/>
<path d="M349.7 425.2L350.8 428.7L352.6 427.9L351.6 424.5" fill="#4e4e84"/>
<path d="M351.6 424.5L352.6 427.9L354.4 427.2L353.4 423.7" fill="#434379"/>
<path d="M353.4 423.7L354.4 427.2L356.2 426.5L355.2 423.0" fill="#37376e"/>
<polygon points="340.8,421.5 344.4,432.5 350.6,429.5 347.1,417.9" fill="#7d7dbc"/>
<path d="M341.4 421.9L342.4 425.2L344.3 424.2L343.2 420.9" fill="#9696de"/>
<path d="M343.2 420.9L344.3 424.2L346.1 423.2L345.1 419.8" fill="#8a8ad4"/>
<path d="M345.1 419.8L346.1 423.2L347.9 422.2L346.9 418.8" fill="#7a7ac7"/>
<path d="M342.4 425.2L343.5 428.4L345.3 427.5L344.3 424.2" fill="#8585c1"/>
<path d="M344.3 424.2L345.3 427.5L347.2 426.5L346.1 423.2" fill="#7d7dbb"/>
<path d="M346.1 423.2L347.2 426.5L349.0 425.6L347.9 422.2" fill="#7171b1"/>
<path d="M343.5 428.4L344.5 431.7L346.4 430.8L345.3 427.5" fill="#666696"/>
<path d="M345.3 427.5L346.4 430.8L348.2 429.9L347.2 426.5" fill="#636395"/>
<path d="M347.2 426.5L348.2 429.9L350.0 429.0L349.0 425.6" fill="#5c5c90"/>
<polygon points="334.5,425.8 338.0,435.9 344.4,432.5 340.8,421.5" fill="#8484bb"/>
<path d="M335.1 426.1L336.1 429.1L338.0 427.9L336.9 424.9" fill="#9c9cd9"/>
<path d="M336.9 424.9L338.0 427.9L339.8 426.8L338.8 423.7" fill="#a1a1e2"/>
<path d="M338.8 423.7L339.8 426.8L341.7 425.6L340.6 422.4" fill="#a1a1e4"/>
<path d="M336.1 429.1L337.1 432.1L339.0 431.0L338.0 427.9" fill="#7d7dae"/>
<path d="M338.0 427.9L339.0 431.0L340.9 429.9L339.8 426.8" fill="#8686ba"/>
<path d="M339.8 426.8L340.9 429.9L342.7 428.8L341.7 425.6" fill="#8989c1"/>
<path d="M337.1 432.1L338.2 435.0L340.1 434.0L339.0 431.0" fill="#505078"/>
<path d="M339.0 431.0L340.1 434.0L341.9 433.0L340.9 429.9" fill="#5b5b86"/>
<path d="M340.9 429.9L341.9 433.0L343.8 432.0L342.7 428.8" fill="#636390"/>
<polygon points="328.1,430.5 331.7,439.4 338.0,435.9 334.5,425.8" fill="#53537f"/>
<path d="M328.7 430.7L330.3 434.7L333.1 432.9L331.5 428.7" fill="#636391"/>
<path d="M331.5 428.7L333.1 432.9L335.9 431.1L334.3 426.7" fill="#8080b4"/>
<path d="M330.3 434.7L331.8 438.6L334.6 437.0L333.1 432.9" fill="#29294a"/>
<path d="M333.1 432.9L334.6 437.0L337.4 435.5L335.9 431.1" fill="#424268"/>
<polygon points="321.7,435.2 325.2,442.8 331.7,439.4 328.1,430.5" fill="#171736"/>
<path d="M322.3 435.4L323.9 438.7L326.7 436.9L325.1 433.3" fill="#1e1e3f"/>
<path d="M325.1 433.3L326.7 436.9L329.5 435.2L327.9 431.3" fill="#3a3a60"/>
<path d="M323.9 438.7L325.4 442.1L328.2 440.6L326.7 436.9" fill="#05051b"/>
<path d="M326.7 436.9L328.2 440.6L331.1 439.0L329.5 435.2" fill="#10102b"/>
<polygon points="315.3,439.7 318.8,445.8 325.2,442.8 321.7,435.2" fill="#010116"/>
<path d="M315.9 439.8L317.4 442.5L320.3 440.9L318.7 437.8" fill="#020216"/>
<path d="M318.7 437.8L320.3 440.9L323.1 439.2L321.5 435.9" fill="#080822"/>
<path d="M317.4 442.5L319.0 445.3L321.8 443.9L320.3 440.9" fill="#00000d"/>
<path d="M320.3 440.9L321.8 443.9L324.6 442.5L323.1 439.2" fill="#010111"/>
<polygon points="308.8,443.5 312.3,448.3 318.8,445.8 315.3,439.7" fill="#00000c"/>
<polygon points="238.4,430.0 241.3,431.0 248.9,433.5 246.0,433.2" fill="#000023"/>
<polygon points="230.7,427.7 233.6,429.5 241.3,431.0 238.4,430.0" fill="#000060"/>
<polygon points="223.0,426.6 225.9,429.2 233.6,429.5 230.7,427.7" fill="#00007f"/>
<polygon points="215.3,426.8 218.1,430.4 225.9,429.2 223.0,426.6" fill="#00009f"/>
<path d="M215.9 427.0L217.2 428.5L220.6 428.2L219.3 426.9" fill="#0000a3"/>
<path d="M219.3 426.9L220.6 428.2L224.0 427.9L222.7 426.7" fill="#000095"/>
<path d="M217.2 428.5L218.4 430.1L221.8 429.6L220.6 428.2" fill="#0000a9"/>
<path d="M220.6 428.2L221.8 429.6L225.2 429.1L224.0 427.9" fill="#00009c"/>
<polygon points="207.6,428.6 210.5,432.9 218.1,430.4 215.3,426.8" fill="#0000b7"/>
<polygon points="199.9,431.9 202.8,436.9 210.5,432.9 207.6,428.6" fill="#0000c0"/>
<polygon points="192.3,436.5 195.2,442.0 202.8,436.9 199.9,431.9" fill="#0000bc"/>
<polygon points="184.8,442.1 187.6,448.0 195.2,442.0 192.3,436.5" fill="#0000ae"/>
<polygon points="493.5,359.0 497.9,363.2 502.5,365.2 498.2,360.8" fill="#000081"/>
<polygon points="488.7,357.9 493.1,361.8 497.9,363.2 493.5,359.0" fill="#000093"/>
<polygon points="483.7,357.8 488.1,361.2 493.1,361.8 488.7,357.9" fill="#0000a4"/>
<polygon points="478.5,358.8 483.0,361.6 488.1,361.2 483.7,357.8" fill="#0000af"/>
<polygon points="473.1,361.1 477.7,363.2 483.0,361.6 478.5,358.8" fill="#0000ae"/>
<polygon points="467.6,364.6 472.2,365.9 477.7,363.2 473.1,361.1" fill="#0000a1"/>
<polygon points="462.0,369.3 466.6,369.8 472.2,365.9 467.6,364.6" fill="#00008b"/>
<polygon points="456.2,374.9 460.9,374.7 466.6,369.8 462.0,369.3" fill="#000073"/>
<polygon points="450.4,381.1 455.1,380.4 460.9,374.7 456.2,374.9" fill="#00005d"/>
<polygon points="444.6,387.7 449.2,386.6 455.1,380.4 450.4,381.1" fill="#000049"/>
<polygon points="438.7,394.2 443.3,392.9 449.2,386.6 444.6,387.7" fill="#000039"/>
<polygon points="432.9,400.5 437.4,399.2 443.3,392.9 438.7,394.2" fill="#00002b"/>
<polygon points="427.0,406.2 431.5,405.2 437.4,399.2 432.9,400.5" fill="#000020"/>
<polygon points="421.2,411.0 425.6,410.6 431.5,405.2 427.0,406.2" fill="#000017"/>
<polygon points="415.5,415.0 419.8,415.4 425.6,410.6 421.2,411.0" fill="#000011"/>
<polygon points="409.8,418.1 413.9,419.4 419.8,415.4 415.5,415.0" fill="#00000b"/>
<polygon points="404.0,420.2 408.1,422.6 413.9,419.4 409.8,418.1" fill="#000008"/>
<polygon points="398.3,421.5 402.3,425.1 408.1,422.6 404.0,420.2" fill="#000007"/>
<polygon points="392.6,422.2 396.5,427.0 402.3,425.1 398.3,421.5" fill="#000008"/>
<polygon points="386.8,422.6 390.6,428.5 396.5,427.0 392.6,422.2" fill="#00000c"/>
<polygon points="381.0,422.9 384.7,429.8 390.6,428.5 386.8,422.6" fill="#000011"/>
<polygon points="375.0,423.2 378.7,431.1 384.7,429.8 381.0,422.9" fill="#000017"/>
<polygon points="369.0,424.0 372.7,432.4 378.7,431.1 375.0,423.2" fill="#00001d"/>
<polygon points="363.0,425.2 366.6,434.0 372.7,432.4 369.0,424.0" fill="#030323"/>
<path d="M363.6 425.7L365.2 429.5L367.8 428.9L366.2 425.1" fill="#07072c"/>
<path d="M366.2 425.1L367.8 428.9L370.5 428.3L368.9 424.6" fill="#040427"/>
<path d="M365.2 429.5L366.8 433.4L369.5 432.7L367.8 428.9" fill="#02021a"/>
<path d="M367.8 428.9L369.5 432.7L372.1 432.0L370.5 428.3" fill="#010119"/>
<polygon points="356.8,427.1 360.5,435.9 366.6,434.0 363.0,425.2" fill="#09092b"/>
<path d="M357.4 427.5L359.0 431.4L361.7 430.5L360.1 426.7" fill="#14143b"/>
<path d="M360.1 426.7L361.7 430.5L364.4 429.7L362.8 425.9" fill="#0d0d34"/>
<path d="M359.0 431.4L360.6 435.2L363.3 434.4L361.7 430.5" fill="#05051e"/>
<path d="M361.7 430.5L363.3 434.4L366.0 433.6L364.4 429.7" fill="#03031d"/>
<polygon points="350.6,429.5 354.3,438.1 360.5,435.9 356.8,427.1" fill="#111131"/>
<path d="M351.2 429.9L352.8 433.7L355.5 432.6L353.9 428.8" fill="#242449"/>
<path d="M353.9 428.8L355.5 432.6L358.3 431.6L356.7 427.7" fill="#1e1e43"/>
<path d="M352.8 433.7L354.4 437.4L357.2 436.5L355.5 432.6" fill="#07071f"/>
<path d="M355.5 432.6L357.2 436.5L359.9 435.5L358.3 431.6" fill="#06061f"/>
<polygon points="344.4,432.5 348.0,440.5 354.3,438.1 350.6,429.5" fill="#11112e"/>
<path d="M344.9 432.8L346.5 436.3L349.3 435.2L347.7 431.5" fill="#252545"/>
<path d="M347.7 431.5L349.3 435.2L352.1 434.0L350.5 430.2" fill="#27274a"/>
<path d="M346.5 436.3L348.1 439.9L350.9 438.8L349.3 435.2" fill="#040419"/>
<path d="M349.3 435.2L350.9 438.8L353.7 437.7L352.1 434.0" fill="#06061d"/>
<polygon points="338.0,435.9 341.7,443.1 348.0,440.5 344.4,432.5" fill="#07071f"/>
<path d="M338.6 436.1L340.2 439.3L343.0 438.0L341.4 434.6" fill="#12122c"/>
<path d="M341.4 434.6L343.0 438.0L345.8 436.7L344.2 433.2" fill="#1c1c39"/>
<path d="M340.2 439.3L341.8 442.5L344.6 441.4L343.0 438.0" fill="#010111"/>
<path d="M343.0 438.0L344.6 441.4L347.4 440.2L345.8 436.7" fill="#020215"/>
<polygon points="331.7,439.4 335.3,445.7 341.7,443.1 338.0,435.9" fill="#010113"/>
<path d="M332.3 439.5L333.8 442.3L336.7 441.0L335.1 438.0" fill="#020216"/>
<path d="M335.1 438.0L336.7 441.0L339.5 439.7L337.9 436.5" fill="#07071e"/>
<path d="M333.8 442.3L335.4 445.1L338.2 444.0L336.7 441.0" fill="#00000c"/>
<path d="M336.7 441.0L338.2 444.0L341.1 442.8L339.5 439.7" fill="#00000e"/>
<polygon points="325.2,442.8 328.8,448.0 335.3,445.7 331.7,439.4" fill="#00000d"/>
<polygon points="248.9,433.5 251.9,434.0 259.5,436.5 256.5,436.7" fill="#000022"/>
<polygon points="241.3,431.0 244.2,432.3 251.9,434.0 248.9,433.5" fill="#000054"/>
<polygon points="233.6,429.5 236.5,431.7 244.2,432.3 241.3,431.0" fill="#000070"/>
<polygon points="225.9,429.2 228.8,432.4 236.5,431.7 233.6,429.5" fill="#000091"/>
<polygon points="218.1,430.4 221.1,434.4 228.8,432.4 225.9,429.2" fill="#0000ae"/>
<path d="M218.8 430.5L220.1 432.3L223.5 431.6L222.2 430.0" fill="#0000b1"/>
<path d="M222.2 430.0L223.5 431.6L226.9 430.9L225.6 429.5" fill="#0000a6"/>
<path d="M220.1 432.3L221.4 434.0L224.8 433.2L223.5 431.6" fill="#0000b7"/>
<path d="M223.5 431.6L224.8 433.2L228.2 432.3L226.9 430.9" fill="#0000ad"/>
<polygon points="210.5,432.9 213.4,437.8 221.1,434.4 218.1,430.4" fill="#0000bf"/>
<polygon points="202.8,436.9 205.7,442.4 213.4,437.8 210.5,432.9" fill="#0000c1"/>
<polygon points="195.2,442.0 198.1,448.0 205.7,442.4 202.8,436.9" fill="#0000b8"/>
<polygon points="187.6,448.0 190.5,454.2 198.1,448.0 195.2,442.0" fill="#0000a8"/>
<polygon points="497.9,363.2 502.2,367.7 506.9,369.8 502.5,365.2" fill="#00007c"/>
<polygon points="493.1,361.8 497.5,366.0 502.2,367.7 497.9,363.2" fill="#00008d"/>
<polygon points="488.1,361.2 492.5,365.0 497.5,366.0 493.1,361.8" fill="#00009e"/>
<polygon points="483.0,361.6 487.5,364.8 492.5,365.0 488.1,361.2" fill="#0000ac"/>
<polygon points="477.7,363.2 482.2,365.7 487.5,364.8 483.0,361.6" fill="#0000b1"/>
<polygon points="472.2,365.9 476.8,367.7 482.2,365.7 477.7,363.2" fill="#0000aa"/>
<polygon points="466.6,369.8 471.3,370.8 476.8,367.7 472.2,365.9" fill="#000098"/>
<polygon points="460.9,374.7 465.6,374.9 471.3,370.8 466.6,369.8" fill="#000081"/>
<path d="M461.5 374.4L463.6 374.5L466.1 372.6L464.0 372.3" fill="#000079"/>
<path d="M464.0 372.3L466.1 372.6L468.6 370.6L466.5 370.2" fill="#000083"/>
<path d="M463.6 374.5L465.6 374.6L468.2 372.8L466.1 372.6" fill="#000080"/>
<path d="M466.1 372.6L468.2 372.8L470.7 371.0L468.6 370.6" fill="#00008a"/>
<polygon points="455.1,380.4 459.8,379.9 465.6,374.9 460.9,374.7" fill="#00006a"/>
<polygon points="449.2,386.6 453.9,385.5 459.8,379.9 455.1,380.4" fill="#000055"/>
<polygon points="443.3,392.9 448.0,391.5 453.9,385.5 449.2,386.6" fill="#000043"/>
<polygon points="437.4,399.2 442.0,397.6 448.0,391.5 443.3,392.9" fill="#000034"/>
<polygon points="431.5,405.2 436.1,403.7 442.0,397.6 437.4,399.2" fill="#000028"/>
<polygon points="425.6,410.6 430.1,409.4 436.1,403.7 431.5,405.2" fill="#00001f"/>
<polygon points="419.8,415.4 424.2,414.6 430.1,409.4 425.6,410.6" fill="#000017"/>
<polygon points="413.9,419.4 418.3,419.2 424.2,414.6 419.8,415.4" fill="#000011"/>
<polygon points="408.1,422.6 412.4,423.2 418.3,419.2 413.9,419.4" fill="#00000d"/>
<polygon points="402.3,425.1 406.5,426.7 412.4,423.2 408.1,422.6" fill="#000009"/>
<polygon points="396.5,427.0 400.5,429.5 406.5,426.7 402.3,425.1" fill="#000007"/>
<polygon points="390.6,428.5 394.6,432.0 400.5,429.5 396.5,427.0" fill="#000007"/>
<polygon points="384.7,429.8 388.6,434.1 394.6,432.0 390.6,428.5" fill="#000007"/>
<polygon points="378.7,431.1 382.6,436.0 388.6,434.1 384.7,429.8" fill="#000009"/>
<polygon points="372.7,432.4 376.6,437.9 382.6,436.0 378.7,431.1" fill="#00000a"/>
<polygon points="366.6,434.0 370.4,439.7 376.6,437.9 372.7,432.4" fill="#00000c"/>
<polygon points="360.5,435.9 364.2,441.7 370.4,439.7 366.6,434.0" fill="#00000c"/>
<polygon points="354.3,438.1 358.0,443.7 364.2,441.7 360.5,435.9" fill="#00000c"/>
<polygon points="348.0,440.5 351.7,445.7 358.0,443.7 354.3,438.1" fill="#00000b"/>
<polygon points="341.7,443.1 345.4,447.6 351.7,445.7 348.0,440.5" fill="#000009"/>
<polygon points="251.9,434.0 255.0,434.9 262.6,436.6 259.5,436.5" fill="#000025"/>
<polygon points="244.2,432.3 247.3,434.1 255.0,434.9 251.9,434.0" fill="#000066"/>
<polygon points="236.5,431.7 239.6,434.5 247.3,434.1 244.2,432.3" fill="#000085"/>
<polygon points="228.8,432.4 231.9,436.1 239.6,434.5 236.5,431.7" fill="#0000a4"/>
<path d="M229.5 432.5L230.8 434.2L234.2 433.7L232.9 432.2" fill="#0000a7"/>
<path d="M232.9 432.2L234.2 433.7L237.6 433.2L236.3 431.9" fill="#00009a"/>
<path d="M230.8 434.2L232.2 435.8L235.6 435.1L234.2 433.7" fill="#0000af"/>
<path d="M234.2 433.7L235.6 435.1L239.0 434.4L237.6 433.2" fill="#0000a3"/>
<polygon points="221.1,434.4 224.2,439.0 231.9,436.1 228.8,432.4" fill="#0000bb"/>
<polygon points="213.4,437.8 216.5,443.2 224.2,439.0 221.1,434.4" fill="#0000c4"/>
<polygon points="205.7,442.4 208.8,448.3 216.5,443.2 213.4,437.8" fill="#0000bf"/>
<polygon points="198.1,448.0 201.1,454.3 208.8,448.3 205.7,442.4" fill="#0000b2"/>
<polygon points="190.5,454.2 193.5,460.8 201.1,454.3 198.1,448.0" fill="#0000a1"/>
<polygon points="502.2,367.7 506.7,372.5 511.3,374.6 506.9,369.8" fill="#000075"/>
<polygon points="497.5,366.0 501.9,370.7 506.7,372.5 502.2,367.7" fill="#000086"/>
<polygon points="492.5,365.0 497.0,369.3 501.9,370.7 497.5,366.0" fill="#000097"/>
<polygon points="487.5,364.8 492.0,368.6 497.0,369.3 492.5,365.0" fill="#0000a6"/>
<polygon points="482.2,365.7 486.8,368.8 492.0,368.6 487.5,364.8" fill="#0000b1"/>
<polygon points="476.8,367.7 481.5,370.1 486.8,368.8 482.2,365.7" fill="#0000b1"/>
<polygon points="471.3,370.8 476.0,372.3 481.5,370.1 476.8,367.7" fill="#0000a5"/>
<polygon points="465.6,374.9 470.3,375.6 476.0,372.3 471.3,370.8" fill="#000091"/>
<path d="M466.2 374.7L468.3 375.0L470.8 373.4L468.7 372.9" fill="#000089"/>
<path d="M468.7 372.9L470.8 373.4L473.3 371.8L471.2 371.1" fill="#000093"/>
<path d="M468.3 375.0L470.4 375.4L472.9 373.9L470.8 373.4" fill="#000090"/>
<path d="M470.8 373.4L472.9 373.9L475.4 372.4L473.3 371.8" fill="#00009a"/>
<polygon points="459.8,379.9 464.6,379.8 470.3,375.6 465.6,374.9" fill="#000079"/>
<path d="M460.4 379.6L462.5 379.5L465.1 377.5L463.0 377.4" fill="#000071"/>
<path d="M463.0 377.4L465.1 377.5L467.6 375.5L465.5 375.2" fill="#00007b"/>
<path d="M462.5 379.5L464.6 379.5L467.2 377.7L465.1 377.5" fill="#000078"/>
<path d="M465.1 377.5L467.2 377.7L469.7 375.8L467.6 375.5" fill="#000083"/>
<polygon points="453.9,385.5 458.7,384.7 464.6,379.8 459.8,379.9" fill="#000063"/>
<polygon points="448.0,391.5 452.8,390.1 458.7,384.7 453.9,385.5" fill="#000050"/>
<polygon points="442.0,397.6 446.8,395.9 452.8,390.1 448.0,391.5" fill="#00003f"/>
<polygon points="436.1,403.7 440.8,401.7 446.8,395.9 442.0,397.6" fill="#000032"/>
<polygon points="430.1,409.4 434.8,407.4 440.8,401.7 436.1,403.7" fill="#000027"/>
<polygon points="424.2,414.6 428.8,412.9 434.8,407.4 430.1,409.4" fill="#00001f"/>
<polygon points="418.3,419.2 422.8,417.9 428.8,412.9 424.2,414.6" fill="#000018"/>
<polygon points="412.4,423.2 416.8,422.4 422.8,417.9 418.3,419.2" fill="#000013"/>
<polygon points="406.5,426.7 410.8,426.5 416.8,422.4 412.4,423.2" fill="#00000f"/>
<polygon points="400.5,429.5 404.8,430.0 410.8,426.5 406.5,426.7" fill="#00000c"/>
<polygon points="394.6,432.0 398.8,433.1 404.8,430.0 400.5,429.5" fill="#00000a"/>
<polygon points="388.6,434.1 392.7,435.9 398.8,433.1 394.6,432.0" fill="#000008"/>
<polygon points="382.6,436.0 386.7,438.3 392.7,435.9 388.6,434.1" fill="#000007"/>
<polygon points="262.6,436.6 265.8,437.1 273.3,438.7 270.1,438.9" fill="#000025"/>
<polygon points="255.0,434.9 258.1,436.4 265.8,437.1 262.6,436.6" fill="#00005e"/>
<polygon points="247.3,434.1 250.5,436.6 258.1,436.4 255.0,434.9" fill="#00007c"/>
<polygon points="239.6,434.5 242.7,438.0 250.5,436.6 247.3,434.1" fill="#00009c"/>
<path d="M240.3 434.7L241.6 436.2L245.0 435.8L243.7 434.5" fill="#00009e"/>
<path d="M243.7 434.5L245.0 435.8L248.4 435.4L247.0 434.3" fill="#000090"/>
<path d="M241.6 436.2L243.0 437.7L246.4 437.1L245.0 435.8" fill="#0000a8"/>
<path d="M245.0 435.8L246.4 437.1L249.8 436.6L248.4 435.4" fill="#00009b"/>
<polygon points="231.9,436.1 235.0,440.6 242.7,438.0 239.6,434.5" fill="#0000b6"/>
<polygon points="224.2,439.0 227.3,444.3 235.0,440.6 231.9,436.1" fill="#0000c4"/>
<polygon points="216.5,443.2 219.6,449.1 227.3,444.3 224.2,439.0" fill="#0000c4"/>
<polygon points="208.8,448.3 211.9,454.8 219.6,449.1 216.5,443.2" fill="#0000bb"/>
<polygon points="201.1,454.3 204.2,461.0 211.9,454.8 208.8,448.3" fill="#0000ab"/>
<polygon points="193.5,460.8 196.5,467.6 204.2,461.0 201.1,454.3" fill="#000099"/>
<polygon points="506.7,372.5 511.1,377.6 515.8,379.5 511.3,374.6" fill="#00006f"/>
<polygon points="501.9,370.7 506.4,375.7 511.1,377.6 506.7,372.5" fill="#00007e"/>
<polygon points="497.0,369.3 501.5,374.1 506.4,375.7 501.9,370.7" fill="#00008f"/>
<polygon points="492.0,368.6 496.5,373.0 501.5,374.1 497.0,369.3" fill="#00009f"/>
<polygon points="486.8,368.8 491.4,372.6 496.5,373.0 492.0,368.6" fill="#0000ad"/>
<polygon points="481.5,370.1 486.1,373.1 491.4,372.6 486.8,368.8" fill="#0000b3"/>
<polygon points="476.0,372.3 480.7,374.5 486.1,373.1 481.5,370.1" fill="#0000b0"/>
<polygon points="470.3,375.6 475.1,377.0 480.7,374.5 476.0,372.3" fill="#0000a1"/>
<polygon points="464.6,379.8 469.4,380.3 475.1,377.0 470.3,375.6" fill="#00008b"/>
<path d="M465.2 379.6L467.3 379.8L469.8 378.1L467.7 377.7" fill="#000083"/>
<path d="M467.7 377.7L469.8 378.1L472.4 376.5L470.3 375.9" fill="#00008d"/>
<path d="M467.3 379.8L469.4 380.0L472.0 378.6L469.8 378.1" fill="#00008b"/>
<path d="M469.8 378.1L472.0 378.6L474.5 377.1L472.4 376.5" fill="#000095"/>
<polygon points="458.7,384.7 463.6,384.4 469.4,380.3 464.6,379.8" fill="#000074"/>
<path d="M459.4 384.4L461.5 384.3L464.1 382.3L461.9 382.2" fill="#00006c"/>
<path d="M461.9 382.2L464.1 382.3L466.6 380.3L464.5 380.1" fill="#000076"/>
<path d="M461.5 384.3L463.6 384.1L466.2 382.3L464.1 382.3" fill="#000074"/>
<path d="M464.1 382.3L466.2 382.3L468.8 380.5L466.6 380.3" fill="#00007e"/>
<polygon points="452.8,390.1 457.7,389.1 463.6,384.4 458.7,384.7" fill="#00005f"/>
<polygon points="446.8,395.9 451.7,394.3 457.7,389.1 452.8,390.1" fill="#00004d"/>
<polygon points="440.8,401.7 445.7,399.7 451.7,394.3 446.8,395.9" fill="#00003d"/>
<polygon points="434.8,407.4 439.6,405.2 445.7,399.7 440.8,401.7" fill="#000031"/>
<polygon points="428.8,412.9 433.5,410.6 439.6,405.2 434.8,407.4" fill="#000027"/>
<polygon points="422.8,417.9 427.5,415.7 433.5,410.6 428.8,412.9" fill="#000020"/>
<polygon points="416.8,422.4 421.4,420.5 427.5,415.7 422.8,417.9" fill="#00001a"/>
<polygon points="410.8,426.5 415.3,424.9 421.4,420.5 416.8,422.4" fill="#000015"/>
<polygon points="404.8,430.0 409.2,428.9 415.3,424.9 410.8,426.5" fill="#000012"/>
<polygon points="273.3,438.7 276.6,439.0 284.1,440.2 280.7,440.7" fill="#000025"/>
<polygon points="265.8,437.1 269.0,438.4 276.6,439.0 273.3,438.7" fill="#00005a"/>
<polygon points="258.1,436.4 261.4,438.6 269.0,438.4 265.8,437.1" fill="#000077"/>
<polygon points="250.5,436.6 253.7,439.9 261.4,438.6 258.1,436.4" fill="#000096"/>
<path d="M251.1 436.8L252.5 438.2L255.9 437.9L254.5 436.7" fill="#000097"/>
<path d="M254.5 436.7L255.9 437.9L259.3 437.6L257.9 436.5" fill="#000089"/>
<path d="M252.5 438.2L254.0 439.6L257.4 439.1L255.9 437.9" fill="#0000a3"/>
<path d="M255.9 437.9L257.4 439.1L260.8 438.6L259.3 437.6" fill="#000095"/>
<polygon points="242.7,438.0 246.0,442.3 253.7,439.9 250.5,436.6" fill="#0000b1"/>
<path d="M243.4 438.2L244.8 440.0L248.2 439.2L246.8 437.5" fill="#0000b3"/>
<path d="M246.8 437.5L248.2 439.2L251.6 438.4L250.2 436.9" fill="#0000a8"/>
<path d="M244.8 440.0L246.3 441.9L249.7 440.9L248.2 439.2" fill="#0000bb"/>
<path d="M248.2 439.2L249.7 440.9L253.1 439.9L251.6 438.4" fill="#0000b2"/>
<polygon points="235.0,440.6 238.3,445.7 246.0,442.3 242.7,438.0" fill="#0000c3"/>
<polygon points="227.3,444.3 230.5,450.2 238.3,445.7 235.0,440.6" fill="#0000c8"/>
<polygon points="219.6,449.1 222.8,455.6 230.5,450.2 227.3,444.3" fill="#0000c1"/>
<polygon points="211.9,454.8 215.1,461.6 222.8,455.6 219.6,449.1" fill="#0000b3"/>
<polygon points="204.2,461.0 207.3,468.1 215.1,461.6 211.9,454.8" fill="#0000a2"/>
<polygon points="196.5,467.6 199.6,474.6 207.3,468.1 204.2,461.0" fill="#000090"/>
<polygon points="511.1,377.6 515.6,382.8 520.3,384.5 515.8,379.5" fill="#000069"/>
<polygon points="506.4,375.7 510.8,381.0 515.6,382.8 511.1,377.6" fill="#000077"/>
<polygon points="501.5,374.1 506.0,379.2 510.8,381.0 506.4,375.7" fill="#000086"/>
<polygon points="496.5,373.0 501.1,377.8 506.0,379.2 501.5,374.1" fill="#000097"/>
<polygon points="491.4,372.6 496.0,377.0 501.1,377.8 496.5,373.0" fill="#0000a6"/>
<polygon points="486.1,373.1 490.8,376.9 496.0,377.0 491.4,372.6" fill="#0000b1"/>
<polygon points="480.7,374.5 485.4,377.5 490.8,376.9 486.1,373.1" fill="#0000b5"/>
<polygon points="475.1,377.0 479.9,379.1 485.4,377.5 480.7,374.5" fill="#0000af"/>
<polygon points="469.4,380.3 474.2,381.6 479.9,379.1 475.1,377.0" fill="#00009e"/>
<polygon points="463.6,384.4 468.5,384.8 474.2,381.6 469.4,380.3" fill="#000089"/>
<path d="M464.2 384.2L466.4 384.4L468.9 382.7L466.8 382.4" fill="#00007f"/>
<path d="M466.8 382.4L468.9 382.7L471.5 381.1L469.3 380.6" fill="#00008a"/>
<path d="M466.4 384.4L468.5 384.6L471.1 383.1L468.9 382.7" fill="#000089"/>
<path d="M468.9 382.7L471.1 383.1L473.6 381.7L471.5 381.1" fill="#000093"/>
<polygon points="457.7,389.1 462.6,388.7 468.5,384.8 463.6,384.4" fill="#000072"/>
<polygon points="451.7,394.3 456.6,393.2 462.6,388.7 457.7,389.1" fill="#00005e"/>
<polygon points="445.7,399.7 450.6,398.0 456.6,393.2 451.7,394.3" fill="#00004c"/>
<polygon points="439.6,405.2 444.5,403.1 450.6,398.0 445.7,399.7" fill="#00003d"/>
<polygon points="433.5,410.6 438.4,408.1 444.5,403.1 439.6,405.2" fill="#000032"/>
<polygon points="427.5,415.7 432.3,413.1 438.4,408.1 433.5,410.6" fill="#000029"/>
<polygon points="421.4,420.5 426.2,417.9 432.3,413.1 427.5,415.7" fill="#000021"/>
<polygon points="415.3,424.9 420.0,422.4 426.2,417.9 421.4,420.5" fill="#00001c"/>
<polygon points="409.2,428.9 413.9,426.5 420.0,422.4 415.3,424.9" fill="#000018"/>
<polygon points="284.1,440.2 287.6,440.4 295.0,441.3 291.5,441.9" fill="#000025"/>
<polygon points="276.6,439.0 280.0,440.1 287.6,440.4 284.1,440.2" fill="#00005a"/>
<polygon points="269.0,438.4 272.4,440.5 280.0,440.1 276.6,439.0" fill="#000075"/>
<polygon points="261.4,438.6 264.8,441.8 272.4,440.5 269.0,438.4" fill="#000093"/>
<path d="M262.1 438.8L263.6 440.2L266.9 439.8L265.4 438.7" fill="#000094"/>
<path d="M265.4 438.7L266.9 439.8L270.3 439.5L268.8 438.5" fill="#000086"/>
<path d="M263.6 440.2L265.1 441.6L268.4 441.0L266.9 439.8" fill="#0000a0"/>
<path d="M266.9 439.8L268.4 441.0L271.8 440.5L270.3 439.5" fill="#000093"/>
<polygon points="253.7,439.9 257.1,444.1 264.8,441.8 261.4,438.6" fill="#0000af"/>
<path d="M254.4 440.1L255.9 441.9L259.3 441.1L257.8 439.5" fill="#0000b0"/>
<path d="M257.8 439.5L259.3 441.1L262.6 440.3L261.2 438.9" fill="#0000a4"/>
<path d="M255.9 441.9L257.4 443.7L260.7 442.8L259.3 441.1" fill="#0000ba"/>
<path d="M259.3 441.1L260.7 442.8L264.1 441.8L262.6 440.3" fill="#0000af"/>
<polygon points="246.0,442.3 249.4,447.4 257.1,444.1 253.7,439.9" fill="#0000c2"/>
<polygon points="238.3,445.7 241.6,451.7 249.4,447.4 246.0,442.3" fill="#0000c9"/>
<polygon points="230.5,450.2 233.9,456.8 241.6,451.7 238.3,445.7" fill="#0000c5"/>
<polygon points="222.8,455.6 226.1,462.6 233.9,456.8 230.5,450.2" fill="#0000ba"/>
<polygon points="215.1,461.6 218.3,468.9 226.1,462.6 222.8,455.6" fill="#0000aa"/>
<polygon points="207.3,468.1 210.5,475.4 218.3,468.9 215.1,461.6" fill="#000098"/>
<polygon points="199.6,474.6 202.7,481.7 210.5,475.4 207.3,468.1" fill="#000086"/>
<polygon points="515.6,382.8 520.1,388.1 524.9,389.5 520.3,384.5" fill="#000062"/>
<polygon points="510.8,381.0 515.4,386.4 520.1,388.1 515.6,382.8" fill="#00006f"/>
<polygon points="506.0,379.2 510.5,384.7 515.4,386.4 510.8,381.0" fill="#00007e"/>
<polygon points="501.1,377.8 505.6,383.2 510.5,384.7 506.0,379.2" fill="#00008d"/>
<polygon points="496.0,377.0 500.6,382.0 505.6,383.2 501.1,377.8" fill="#00009d"/>
<polygon points="490.8,376.9 495.4,381.3 500.6,382.0 496.0,377.0" fill="#0000ab"/>
<polygon points="485.4,377.5 490.1,381.4 495.4,381.3 490.8,376.9" fill="#0000b5"/>
<polygon points="479.9,379.1 484.7,382.2 490.1,381.4 485.4,377.5" fill="#0000b6"/>
<polygon points="474.2,381.6 479.1,383.8 484.7,382.2 479.9,379.1" fill="#0000af"/>
<polygon points="468.5,384.8 473.4,386.1 479.1,383.8 474.2,381.6" fill="#00009e"/>
<path d="M469.1 384.7L471.2 385.3L473.8 384.0L471.6 383.3" fill="#000095"/>
<path d="M471.6 383.3L473.8 384.0L476.3 382.8L474.2 381.9" fill="#00009f"/>
<path d="M471.2 385.3L473.4 385.9L475.9 384.8L473.8 384.0" fill="#00009f"/>
<path d="M473.8 384.0L475.9 384.8L478.4 383.8L476.3 382.8" fill="#0000a7"/>
<polygon points="462.6,388.7 467.5,389.2 473.4,386.1 468.5,384.8" fill="#000089"/>
<path d="M463.2 388.5L465.4 388.7L468.0 387.2L465.8 386.8" fill="#00007f"/>
<path d="M465.8 386.8L468.0 387.2L470.5 385.7L468.4 385.1" fill="#000089"/>
<path d="M465.4 388.7L467.6 389.0L470.1 387.6L468.0 387.2" fill="#00008a"/>
<path d="M468.0 387.2L470.1 387.6L472.7 386.2L470.5 385.7" fill="#000094"/>
<polygon points="456.6,393.2 461.6,392.8 467.5,389.2 462.6,388.7" fill="#000073"/>
<polygon points="450.6,398.0 455.6,396.9 461.6,392.8 456.6,393.2" fill="#00005f"/>
<polygon points="444.5,403.1 449.5,401.4 455.6,396.9 450.6,398.0" fill="#00004e"/>
<polygon points="438.4,408.1 443.4,406.0 449.5,401.4 444.5,403.1" fill="#000040"/>
<polygon points="432.3,413.1 437.2,410.6 443.4,406.0 438.4,408.1" fill="#000035"/>
<polygon points="426.2,417.9 431.1,415.1 437.2,410.6 432.3,413.1" fill="#00002c"/>
<polygon points="420.0,422.4 424.9,419.5 431.1,415.1 426.2,417.9" fill="#000025"/>
<polygon points="413.9,426.5 418.7,423.6 424.9,419.5 420.0,422.4" fill="#00001f"/>
<polygon points="295.0,441.3 298.6,441.5 306.0,441.9 302.3,442.5" fill="#000026"/>
<polygon points="287.6,440.4 291.1,441.5 298.6,441.5 295.0,441.3" fill="#00005e"/>
<polygon points="280.0,440.1 283.6,442.2 291.1,441.5 287.6,440.4" fill="#000077"/>
<polygon points="272.4,440.5 276.0,443.7 283.6,442.2 280.0,440.1" fill="#000094"/>
<path d="M273.1 440.7L274.7 442.1L278.0 441.6L276.5 440.5" fill="#000094"/>
<path d="M276.5 440.5L278.0 441.6L281.3 441.2L279.8 440.2" fill="#000087"/>
<path d="M274.7 442.1L276.2 443.4L279.6 442.8L278.0 441.6" fill="#0000a2"/>
<path d="M278.0 441.6L279.6 442.8L282.9 442.2L281.3 441.2" fill="#000095"/>
<polygon points="264.8,441.8 268.3,446.0 276.0,443.7 272.4,440.5" fill="#0000af"/>
<path d="M265.5 442.0L267.0 443.8L270.4 443.0L268.8 441.4" fill="#0000af"/>
<path d="M268.8 441.4L270.4 443.0L273.7 442.2L272.2 440.8" fill="#0000a4"/>
<path d="M267.0 443.8L268.5 445.7L271.9 444.7L270.4 443.0" fill="#0000ba"/>
<path d="M270.4 443.0L271.9 444.7L275.3 443.7L273.7 442.2" fill="#0000b0"/>
<polygon points="257.1,444.1 260.6,449.3 268.3,446.0 264.8,441.8" fill="#0000c2"/>
<polygon points="249.4,447.4 252.8,453.4 260.6,449.3 257.1,444.1" fill="#0000cb"/>
<polygon points="241.6,451.7 245.1,458.4 252.8,453.4 249.4,447.4" fill="#0000c9"/>
<polygon points="233.9,456.8 237.3,464.0 245.1,458.4 241.6,451.7" fill="#0000bf"/>
<polygon points="226.1,462.6 229.5,470.1 237.3,464.0 233.9,456.8" fill="#0000b0"/>
<polygon points="218.3,468.9 221.7,476.4 229.5,470.1 226.1,462.6" fill="#00009f"/>
<polygon points="210.5,475.4 213.8,482.8 221.7,476.4 218.3,468.9" fill="#00008d"/>
<polygon points="202.7,481.7 205.9,488.9 213.8,482.8 210.5,475.4" fill="#00007c"/>
<polygon points="520.1,388.1 524.8,393.4 529.6,394.4 524.9,389.5" fill="#00005c"/>
<polygon points="515.4,386.4 520.0,392.0 524.8,393.4 520.1,388.1" fill="#000067"/>
<polygon points="510.5,384.7 515.1,390.5 520.0,392.0 515.4,386.4" fill="#000075"/>
<polygon points="505.6,383.2 510.2,388.9 515.1,390.5 510.5,384.7" fill="#000084"/>
<polygon points="500.6,382.0 505.2,387.5 510.2,388.9 505.6,383.2" fill="#000093"/>
<polygon points="495.4,381.3 500.1,386.5 505.2,387.5 500.6,382.0" fill="#0000a2"/>
<polygon points="490.1,381.4 494.8,386.0 500.1,386.5 495.4,381.3" fill="#0000af"/>
<polygon points="484.7,382.2 489.4,386.2 494.8,386.0 490.1,381.4" fill="#0000b7"/>
<polygon points="479.1,383.8 483.9,387.0 489.4,386.2 484.7,382.2" fill="#0000b8"/>
<polygon points="473.4,386.1 478.2,388.5 483.9,387.0 479.1,383.8" fill="#0000b0"/>
<polygon points="467.5,389.2 472.5,390.7 478.2,388.5 473.4,386.1" fill="#0000a1"/>
<path d="M468.2 389.1L470.3 389.8L472.9 388.6L470.7 387.8" fill="#000098"/>
<path d="M470.7 387.8L472.9 388.6L475.4 387.5L473.3 386.4" fill="#0000a1"/>
<path d="M470.3 389.8L472.5 390.5L475.1 389.5L472.9 388.6" fill="#0000a2"/>
<path d="M472.9 388.6L475.1 389.5L477.6 388.5L475.4 387.5" fill="#0000aa"/>
<polygon points="461.6,392.8 466.6,393.5 472.5,390.7 467.5,389.2" fill="#00008d"/>
<path d="M462.2 392.7L464.4 393.0L467.0 391.5L464.9 391.1" fill="#000083"/>
<path d="M464.9 391.1L467.0 391.5L469.6 390.1L467.5 389.5" fill="#00008c"/>
<path d="M464.4 393.0L466.6 393.3L469.2 392.0L467.0 391.5" fill="#00008e"/>
<path d="M467.0 391.5L469.2 392.0L471.8 390.8L469.6 390.1" fill="#000098"/>
<polygon points="455.6,396.9 460.6,396.8 466.6,393.5 461.6,392.8" fill="#000078"/>
<polygon points="449.5,401.4 454.5,400.5 460.6,396.8 455.6,396.9" fill="#000064"/>
<polygon points="443.4,406.0 448.4,404.5 454.5,400.5 449.5,401.4" fill="#000054"/>
<polygon points="437.2,410.6 442.3,408.6 448.4,404.5 443.4,406.0" fill="#000046"/>
<polygon points="431.1,415.1 436.1,412.7 442.3,408.6 437.2,410.6" fill="#00003a"/>
<polygon points="424.9,419.5 429.8,416.8 436.1,412.7 431.1,415.1" fill="#000031"/>
<polygon points="418.7,423.6 423.6,420.6 429.8,416.8 424.9,419.5" fill="#00002a"/>
<polygon points="412.4,427.4 417.3,424.3 423.6,420.6 418.7,423.6" fill="#000019"/>
<polygon points="306.0,441.9 309.7,442.3 317.1,442.1 313.2,442.6" fill="#000028"/>
<polygon points="298.6,441.5 302.3,442.8 309.7,442.3 306.0,441.9" fill="#000065"/>
<polygon points="291.1,441.5 294.8,443.9 302.3,442.8 298.6,441.5" fill="#00007e"/>
<polygon points="283.6,442.2 287.2,445.6 294.8,443.9 291.1,441.5" fill="#000099"/>
<path d="M284.3 442.4L285.9 443.8L289.2 443.3L287.6 442.1" fill="#000098"/>
<path d="M287.6 442.1L289.2 443.3L292.5 442.8L290.9 441.7" fill="#00008c"/>
<path d="M285.9 443.8L287.5 445.3L290.8 444.5L289.2 443.3" fill="#0000a7"/>
<path d="M289.2 443.3L290.8 444.5L294.1 443.8L292.5 442.8" fill="#00009b"/>
<polygon points="276.0,443.7 279.6,448.1 287.2,445.6 283.6,442.2" fill="#0000b2"/>
<path d="M276.6 443.9L278.2 445.8L281.6 444.9L280.0 443.2" fill="#0000b2"/>
<path d="M280.0 443.2L281.6 444.9L284.9 444.0L283.3 442.5" fill="#0000a7"/>
<path d="M278.2 445.8L279.8 447.7L283.2 446.6L281.6 444.9" fill="#0000bd"/>
<path d="M281.6 444.9L283.2 446.6L286.6 445.5L284.9 444.0" fill="#0000b4"/>
<polygon points="268.3,446.0 271.9,451.3 279.6,448.1 276.0,443.7" fill="#0000c4"/>
<polygon points="260.6,449.3 264.2,455.4 271.9,451.3 268.3,446.0" fill="#0000cc"/>
<polygon points="252.8,453.4 256.4,460.2 264.2,455.4 260.6,449.3" fill="#0000cb"/>
<polygon points="245.1,458.4 248.6,465.7 256.4,460.2 252.8,453.4" fill="#0000c2"/>
<polygon points="237.3,464.0 240.8,471.6 248.6,465.7 245.1,458.4" fill="#0000b5"/>
<polygon points="229.5,470.1 232.9,477.9 240.8,471.6 237.3,464.0" fill="#0000a4"/>
<polygon points="221.7,476.4 225.1,484.1 232.9,477.9 229.5,470.1" fill="#000093"/>
<polygon points="213.8,482.8 217.1,490.3 225.1,484.1 221.7,476.4" fill="#000082"/>
<polygon points="205.9,488.9 209.1,496.0 217.1,490.3 213.8,482.8" fill="#000072"/>
<polygon points="524.8,393.4 529.5,398.6 534.3,399.1 529.6,394.4" fill="#000056"/>
<polygon points="520.0,392.0 524.6,397.6 529.5,398.6 524.8,393.4" fill="#000060"/>
<polygon points="515.1,390.5 519.7,396.4 524.6,397.6 520.0,392.0" fill="#00006c"/>
<polygon points="510.2,388.9 514.8,394.9 519.7,396.4 515.1,390.5" fill="#00007a"/>
<polygon points="505.2,387.5 509.8,393.5 514.8,394.9 510.2,388.9" fill="#000088"/>
<polygon points="500.1,386.5 504.7,392.3 509.8,393.5 505.2,387.5" fill="#000097"/>
<polygon points="494.8,386.0 499.5,391.4 504.7,392.3 500.1,386.5" fill="#0000a6"/>
<polygon points="489.4,386.2 494.1,391.1 499.5,391.4 494.8,386.0" fill="#0000b2"/>
<polygon points="483.9,387.0 488.7,391.2 494.1,391.1 489.4,386.2" fill="#0000b9"/>
<polygon points="478.2,388.5 483.1,392.0 488.7,391.2 483.9,387.0" fill="#0000bb"/>
<polygon points="472.5,390.7 477.4,393.4 483.1,392.0 478.2,388.5" fill="#0000b4"/>
<polygon points="466.6,393.5 471.5,395.4 477.4,393.4 472.5,390.7" fill="#0000a6"/>
<polygon points="460.6,396.8 465.6,397.9 471.5,395.4 466.6,393.5" fill="#000094"/>
<path d="M461.3 396.7L463.5 397.2L466.1 395.9L463.9 395.2" fill="#00008a"/>
<path d="M463.9 395.2L466.1 395.9L468.7 394.6L466.5 393.8" fill="#000093"/>
<path d="M463.5 397.2L465.7 397.7L468.3 396.5L466.1 395.9" fill="#000097"/>
<path d="M466.1 395.9L468.3 396.5L470.9 395.4L468.7 394.6" fill="#00009f"/>
<polygon points="454.5,400.5 459.6,400.8 465.6,397.9 460.6,396.8" fill="#000080"/>
<polygon points="448.4,404.5 453.5,404.0 459.6,400.8 454.5,400.5" fill="#00006e"/>
<polygon points="442.3,408.6 447.3,407.5 453.5,404.0 448.4,404.5" fill="#00005d"/>
<polygon points="436.1,412.7 441.1,411.1 447.3,407.5 442.3,408.6" fill="#00004f"/>
<polygon points="429.8,416.8 434.9,414.7 441.1,411.1 436.1,412.7" fill="#000043"/>
<polygon points="423.6,420.6 428.6,418.2 434.9,414.7 429.8,416.8" fill="#00003a"/>
<polygon points="417.3,424.3 422.2,421.6 428.6,418.2 423.6,420.6" fill="#000033"/>
<polygon points="411.0,427.7 415.9,424.8 422.2,421.6 417.3,424.3" fill="#00001e"/>
<polygon points="404.6,430.8 409.5,427.8 415.9,424.8 411.0,427.7" fill="#00001d"/>
<polygon points="331.4,442.5 335.5,441.8 342.6,441.4 338.4,442.8" fill="#000025"/>
<polygon points="324.3,442.3 328.3,442.3 335.5,441.8 331.4,442.5" fill="#000027"/>
<polygon points="317.1,442.1 321.0,442.9 328.3,442.3 324.3,442.3" fill="#00005d"/>
<polygon points="309.7,442.3 313.6,444.0 321.0,442.9 317.1,442.1" fill="#000072"/>
<polygon points="302.3,442.8 306.1,445.5 313.6,444.0 309.7,442.3" fill="#000089"/>
<polygon points="294.8,443.9 298.6,447.5 306.1,445.5 302.3,442.8" fill="#0000a2"/>
<path d="M295.5 444.0L297.2 445.6L300.5 444.9L298.8 443.5" fill="#0000a0"/>
<path d="M298.8 443.5L300.5 444.9L303.8 444.2L302.1 443.0" fill="#000095"/>
<path d="M297.2 445.6L298.8 447.2L302.2 446.3L300.5 444.9" fill="#0000af"/>
<path d="M300.5 444.9L302.2 446.3L305.5 445.4L303.8 444.2" fill="#0000a5"/>
<polygon points="287.2,445.6 291.0,450.2 298.6,447.5 294.8,443.9" fill="#0000b8"/>
<path d="M287.9 445.7L289.6 447.7L292.9 446.8L291.3 445.0" fill="#0000b7"/>
<path d="M291.3 445.0L292.9 446.8L296.2 445.8L294.6 444.2" fill="#0000ae"/>
<path d="M289.6 447.7L291.2 449.8L294.6 448.6L292.9 446.8" fill="#0000c2"/>
<path d="M292.9 446.8L294.6 448.6L297.9 447.4L296.2 445.8" fill="#0000bb"/>
<polygon points="279.6,448.1 283.3,453.6 291.0,450.2 287.2,445.6" fill="#0000c7"/>
<polygon points="271.9,451.3 275.6,457.7 283.3,453.6 279.6,448.1" fill="#0000ce"/>
<polygon points="264.2,455.4 267.8,462.4 275.6,457.7 271.9,451.3" fill="#0000cd"/>
<polygon points="256.4,460.2 260.0,467.8 267.8,462.4 264.2,455.4" fill="#0000c4"/>
<polygon points="248.6,465.7 252.2,473.6 260.0,467.8 256.4,460.2" fill="#0000b8"/>
<polygon points="240.8,471.6 244.4,479.7 252.2,473.6 248.6,465.7" fill="#0000a8"/>
<path d="M241.5 471.8L242.5 474.1L244.8 472.3L243.8 470.0" fill="#0000a7"/>
<path d="M243.8 470.0L244.8 472.3L247.1 470.6L246.1 468.3" fill="#0000ac"/>
<path d="M246.1 468.3L247.1 470.6L249.4 468.8L248.3 466.5" fill="#0000b1"/>
<path d="M242.5 474.1L243.6 476.5L245.9 474.7L244.8 472.3" fill="#0000a3"/>
<path d="M244.8 472.3L245.9 474.7L248.2 472.9L247.1 470.6" fill="#0000a8"/>
<path d="M247.1 470.6L248.2 472.9L250.5 471.1L249.4 468.8" fill="#0000ad"/>
<path d="M243.6 476.5L244.6 478.8L246.9 477.0L245.9 474.7" fill="#00009f"/>
<path d="M245.9 474.7L246.9 477.0L249.2 475.2L248.2 472.9" fill="#0000a4"/>
<path d="M248.2 472.9L249.2 475.2L251.5 473.5L250.5 471.1" fill="#0000a9"/>
<polygon points="232.9,477.9 236.5,485.8 244.4,479.7 240.8,471.6" fill="#000097"/>
<path d="M233.6 478.0L234.7 480.3L237.0 478.5L235.9 476.1" fill="#000096"/>
<path d="M235.9 476.1L237.0 478.5L239.3 476.7L238.2 474.3" fill="#00009b"/>
<path d="M238.2 474.3L239.3 476.7L241.6 474.8L240.5 472.5" fill="#0000a0"/>
<path d="M234.7 480.3L235.7 482.6L238.0 480.8L237.0 478.5" fill="#000092"/>
<path d="M237.0 478.5L238.0 480.8L240.3 479.0L239.3 476.7" fill="#000097"/>
<path d="M239.3 476.7L240.3 479.0L242.6 477.2L241.6 474.8" fill="#00009c"/>
<path d="M235.7 482.6L236.7 485.0L239.0 483.2L238.0 480.8" fill="#00008f"/>
<path d="M238.0 480.8L239.0 483.2L241.4 481.4L240.3 479.0" fill="#000093"/>
<path d="M240.3 479.0L241.4 481.4L243.7 479.5L242.6 477.2" fill="#000098"/>
<polygon points="225.1,484.1 228.5,491.9 236.5,485.8 232.9,477.9" fill="#000087"/>
<polygon points="217.1,490.3 220.5,497.6 228.5,491.9 225.1,484.1" fill="#000077"/>
<polygon points="209.1,496.0 212.3,502.8 220.5,497.6 217.1,490.3" fill="#000069"/>
<polygon points="529.5,398.6 534.3,403.6 539.2,403.5 534.3,399.1" fill="#000051"/>
<polygon points="524.6,397.6 529.3,403.1 534.3,403.6 529.5,398.6" fill="#000059"/>
<polygon points="519.7,396.4 524.4,402.2 529.3,403.1 524.6,397.6" fill="#000064"/>
<polygon points="514.8,394.9 519.4,401.1 524.4,402.2 519.7,396.4" fill="#000070"/>
<polygon points="509.8,393.5 514.4,399.8 519.4,401.1 514.8,394.9" fill="#00007d"/>
<polygon points="504.7,392.3 509.3,398.5 514.4,399.8 509.8,393.5" fill="#00008c"/>
<polygon points="499.5,391.4 504.1,397.5 509.3,398.5 504.7,392.3" fill="#00009a"/>
<polygon points="494.1,391.1 498.9,396.8 504.1,397.5 499.5,391.4" fill="#0000a8"/>
<polygon points="488.7,391.2 493.4,396.5 498.9,396.8 494.1,391.1" fill="#0000b3"/>
<polygon points="483.1,392.0 487.9,396.6 493.4,396.5 488.7,391.2" fill="#0000bb"/>
<polygon points="477.4,393.4 482.2,397.3 487.9,396.6 483.1,392.0" fill="#0000bd"/>
<polygon points="471.5,395.4 476.5,398.6 482.2,397.3 477.4,393.4" fill="#0000b9"/>
<polygon points="465.6,397.9 470.6,400.3 476.5,398.6 471.5,395.4" fill="#0000ae"/>
<polygon points="459.6,400.8 464.6,402.4 470.6,400.3 465.6,397.9" fill="#00009f"/>
<path d="M460.3 400.7L462.4 401.5L465.1 400.3L462.9 399.4" fill="#000095"/>
<path d="M462.9 399.4L465.1 400.3L467.7 399.2L465.5 398.2" fill="#00009d"/>
<path d="M462.4 401.5L464.7 402.2L467.3 401.2L465.1 400.3" fill="#0000a2"/>
<path d="M465.1 400.3L467.3 401.2L469.9 400.3L467.7 399.2" fill="#0000a9"/>
<polygon points="453.5,404.0 458.5,405.0 464.6,402.4 459.6,400.8" fill="#00008d"/>
<path d="M454.2 403.9L456.4 404.3L459.1 403.0L456.8 402.5" fill="#000083"/>
<path d="M456.8 402.5L459.1 403.0L461.7 401.8L459.5 401.1" fill="#00008b"/>
<path d="M456.4 404.3L458.6 404.7L461.3 403.6L459.1 403.0" fill="#000091"/>
<path d="M459.1 403.0L461.3 403.6L463.9 402.5L461.7 401.8" fill="#000099"/>
<polygon points="447.3,407.5 452.4,407.8 458.5,405.0 453.5,404.0" fill="#00007c"/>
<polygon points="441.1,411.1 446.2,410.7 452.4,407.8 447.3,407.5" fill="#00006c"/>
<polygon points="434.9,414.7 439.9,413.8 446.2,410.7 441.1,411.1" fill="#00005e"/>
<polygon points="428.6,418.2 433.6,416.9 439.9,413.8 434.9,414.7" fill="#000052"/>
<polygon points="422.2,421.6 427.2,420.0 433.6,416.9 428.6,418.2" fill="#000049"/>
<polygon points="415.9,424.8 420.8,422.9 427.2,420.0 422.2,421.6" fill="#000041"/>
<polygon points="409.5,427.8 414.4,425.6 420.8,422.9 415.9,424.8" fill="#00003b"/>
<polygon points="403.0,430.4 407.9,428.2 414.4,425.6 409.5,427.8" fill="#000023"/>
<polygon points="396.6,432.8 401.4,430.5 407.9,428.2 403.0,430.4" fill="#000022"/>
<polygon points="390.0,434.9 394.8,432.5 401.4,430.5 396.6,432.8" fill="#000022"/>
<polygon points="383.5,436.6 388.1,434.4 394.8,432.5 390.0,434.9" fill="#000022"/>
<polygon points="376.8,438.0 381.4,435.9 388.1,434.4 383.5,436.6" fill="#000023"/>
<polygon points="370.1,439.1 374.7,437.3 381.4,435.9 376.8,438.0" fill="#000023"/>
<polygon points="363.4,440.0 367.8,438.5 374.7,437.3 370.1,439.1" fill="#000024"/>
<polygon points="356.5,440.6 360.9,439.5 367.8,438.5 363.4,440.0" fill="#000025"/>
<polygon points="349.6,441.1 353.9,440.5 360.9,439.5 356.5,440.6" fill="#000027"/>
<polygon points="342.6,441.4 346.8,441.4 353.9,440.5 349.6,441.1" fill="#000051"/>
<polygon points="335.5,441.8 339.6,442.5 346.8,441.4 342.6,441.4" fill="#00005f"/>
<polygon points="328.3,442.3 332.4,443.7 339.6,442.5 335.5,441.8" fill="#000070"/>
<polygon points="321.0,442.9 325.0,445.3 332.4,443.7 328.3,442.3" fill="#000084"/>
<polygon points="313.6,444.0 317.6,447.2 325.0,445.3 321.0,442.9" fill="#000099"/>
<path d="M314.3 444.1L316.0 445.5L319.3 444.8L317.6 443.6" fill="#000096"/>
<path d="M317.6 443.6L319.3 444.8L322.6 444.2L320.8 443.1" fill="#00008c"/>
<path d="M316.0 445.5L317.8 446.9L321.1 446.0L319.3 444.8" fill="#0000a7"/>
<path d="M319.3 444.8L321.1 446.0L324.3 445.2L322.6 444.2" fill="#00009e"/>
<polygon points="306.1,445.5 310.1,449.6 317.6,447.2 313.6,444.0" fill="#0000ae"/>
<path d="M306.8 445.6L308.6 447.4L311.9 446.5L310.1 444.9" fill="#0000ac"/>
<path d="M310.1 444.9L311.9 446.5L315.1 445.7L313.4 444.3" fill="#0000a3"/>
<path d="M308.6 447.4L310.3 449.2L313.6 448.2L311.9 446.5" fill="#0000ba"/>
<path d="M311.9 446.5L313.6 448.2L316.9 447.1L315.1 445.7" fill="#0000b2"/>
<polygon points="298.6,447.5 302.5,452.5 310.1,449.6 306.1,445.5" fill="#0000c0"/>
<polygon points="291.0,450.2 294.8,456.1 302.5,452.5 298.6,447.5" fill="#0000cc"/>
<polygon points="283.3,453.6 287.1,460.2 294.8,456.1 291.0,450.2" fill="#0000d0"/>
<polygon points="275.6,457.7 279.4,465.0 287.1,460.2 283.3,453.6" fill="#0000ce"/>
<polygon points="267.8,462.4 271.6,470.2 279.4,465.0 275.6,457.7" fill="#0000c5"/>
<polygon points="260.0,467.8 263.8,475.9 271.6,470.2 267.8,462.4" fill="#0000b9"/>
<polygon points="252.2,473.6 255.9,481.8 263.8,475.9 260.0,467.8" fill="#0000aa"/>
<path d="M252.9 473.7L254.0 476.1L256.3 474.4L255.2 472.0" fill="#0000aa"/>
<path d="M255.2 472.0L256.3 474.4L258.6 472.7L257.5 470.3" fill="#0000af"/>
<path d="M257.5 470.3L258.6 472.7L260.9 471.0L259.8 468.6" fill="#0000b3"/>
<path d="M254.0 476.1L255.1 478.5L257.4 476.8L256.3 474.4" fill="#0000a6"/>
<path d="M256.3 474.4L257.4 476.8L259.7 475.1L258.6 472.7" fill="#0000aa"/>
<path d="M258.6 472.7L259.7 475.1L262.0 473.4L260.9 471.0" fill="#0000af"/>
<path d="M255.1 478.5L256.1 481.0L258.5 479.2L257.4 476.8" fill="#0000a1"/>
<path d="M257.4 476.8L258.5 479.2L260.8 477.5L259.7 475.1" fill="#0000a6"/>
<path d="M259.7 475.1L260.8 477.5L263.1 475.7L262.0 473.4" fill="#0000ab"/>
<polygon points="244.4,479.7 248.0,487.9 255.9,481.8 252.2,473.6" fill="#00009a"/>
<path d="M245.0 479.8L246.1 482.2L248.4 480.4L247.4 478.0" fill="#00009a"/>
<path d="M247.4 478.0L248.4 480.4L250.7 478.6L249.7 476.2" fill="#00009e"/>
<path d="M249.7 476.2L250.7 478.6L253.0 476.8L252.0 474.4" fill="#0000a3"/>
<path d="M246.1 482.2L247.2 484.6L249.5 482.8L248.4 480.4" fill="#000095"/>
<path d="M248.4 480.4L249.5 482.8L251.8 481.0L250.7 478.6" fill="#00009a"/>
<path d="M250.7 478.6L251.8 481.0L254.1 479.3L253.0 476.8" fill="#00009f"/>
<path d="M247.2 484.6L248.2 487.0L250.6 485.2L249.5 482.8" fill="#000091"/>
<path d="M249.5 482.8L250.6 485.2L252.9 483.5L251.8 481.0" fill="#000096"/>
<path d="M251.8 481.0L252.9 483.5L255.2 481.7L254.1 479.3" fill="#00009b"/>
<polygon points="236.5,485.8 240.0,493.8 248.0,487.9 244.4,479.7" fill="#00008a"/>
<polygon points="228.5,491.9 232.0,499.5 240.0,493.8 236.5,485.8" fill="#00007a"/>
<polygon points="220.5,497.6 223.8,504.8 232.0,499.5 228.5,491.9" fill="#00006c"/>
<polygon points="212.3,502.8 215.6,509.4 223.8,504.8 220.5,497.6" fill="#000060"/>
<polygon points="534.3,403.6 539.2,408.2 544.3,407.5 539.2,403.5" fill="#00004d"/>
<polygon points="529.3,403.1 534.2,408.3 539.2,408.2 534.3,403.6" fill="#000053"/>
<polygon points="524.4,402.2 529.2,407.9 534.2,408.3 529.3,403.1" fill="#00005c"/>
<polygon points="519.4,401.1 524.2,407.2 529.2,407.9 524.4,402.2" fill="#000066"/>
<polygon points="514.4,399.8 519.1,406.2 524.2,407.2 519.4,401.1" fill="#000072"/>
<polygon points="509.3,398.5 514.0,405.1 519.1,406.2 514.4,399.8" fill="#000080"/>
<polygon points="504.1,397.5 508.8,404.0 514.0,405.1 509.3,398.5" fill="#00008e"/>
<polygon points="498.9,396.8 503.6,403.1 508.8,404.0 504.1,397.5" fill="#00009c"/>
<polygon points="493.4,396.5 498.2,402.5 503.6,403.1 498.9,396.8" fill="#0000a9"/>
<polygon points="487.9,396.6 492.7,402.3 498.2,402.5 493.4,396.5" fill="#0000b4"/>
<polygon points="482.2,397.3 487.1,402.4 492.7,402.3 487.9,396.6" fill="#0000bc"/>
<polygon points="476.5,398.6 481.4,403.1 487.1,402.4 482.2,397.3" fill="#0000c0"/>
<polygon points="470.6,400.3 475.5,404.1 481.4,403.1 476.5,398.6" fill="#0000bf"/>
<polygon points="464.6,402.4 469.6,405.6 475.5,404.1 470.6,400.3" fill="#0000b8"/>
<polygon points="458.5,405.0 463.6,407.4 469.6,405.6 464.6,402.4" fill="#0000ac"/>
<polygon points="452.4,407.8 457.4,409.5 463.6,407.4 458.5,405.0" fill="#00009e"/>
<path d="M453.1 407.7L455.3 408.5L458.0 407.4L455.8 406.5" fill="#000094"/>
<path d="M455.8 406.5L458.0 407.4L460.7 406.3L458.5 405.3" fill="#00009b"/>
<path d="M455.3 408.5L457.5 409.3L460.2 408.3L458.0 407.4" fill="#0000a3"/>
<path d="M458.0 407.4L460.2 408.3L462.9 407.4L460.7 406.3" fill="#0000a9"/>
<polygon points="446.2,410.7 451.2,411.9 457.4,409.5 452.4,407.8" fill="#00008f"/>
<path d="M446.9 410.6L449.1 411.2L451.8 410.0L449.6 409.3" fill="#000084"/>
<path d="M449.6 409.3L451.8 410.0L454.5 408.8L452.3 408.0" fill="#00008b"/>
<path d="M449.1 411.2L451.3 411.7L454.0 410.6L451.8 410.0" fill="#000095"/>
<path d="M451.8 410.0L454.0 410.6L456.8 409.6L454.5 408.8" fill="#00009b"/>
<polygon points="439.9,413.8 445.0,414.4 451.2,411.9 446.2,410.7" fill="#000081"/>
<polygon points="433.6,416.9 438.7,417.1 445.0,414.4 439.9,413.8" fill="#000074"/>
<polygon points="427.2,420.0 432.3,419.7 438.7,417.1 433.6,416.9" fill="#000069"/>
<polygon points="420.8,422.9 425.8,422.3 432.3,419.7 427.2,420.0" fill="#000060"/>
<polygon points="414.4,425.6 419.4,424.8 425.8,422.3 420.8,422.9" fill="#000058"/>
<polygon points="407.9,428.2 412.8,427.2 419.4,424.8 414.4,425.6" fill="#000053"/>
<polygon points="401.4,430.5 406.2,429.5 412.8,427.2 407.9,428.2" fill="#00004f"/>
<polygon points="394.8,432.5 399.6,431.6 406.2,429.5 401.4,430.5" fill="#00004e"/>
<polygon points="388.1,434.4 392.9,433.5 399.6,431.6 394.8,432.5" fill="#00004d"/>
<polygon points="381.4,435.9 386.1,435.3 392.9,433.5 388.1,434.4" fill="#00004f"/>
<polygon points="374.7,437.3 379.2,436.9 386.1,435.3 381.4,435.9" fill="#000053"/>
<polygon points="367.8,438.5 372.3,438.4 379.2,436.9 374.7,437.3" fill="#000059"/>
<polygon points="360.9,439.5 365.3,439.9 372.3,438.4 367.8,438.5" fill="#000061"/>
<polygon points="353.9,440.5 358.3,441.4 365.3,439.9 360.9,439.5" fill="#00006b"/>
<polygon points="346.8,441.4 351.1,443.0 358.3,441.4 353.9,440.5" fill="#000079"/>
<polygon points="339.6,442.5 343.9,444.8 351.1,443.0 346.8,441.4" fill="#000088"/>
<polygon points="332.4,443.7 336.6,446.8 343.9,444.8 339.6,442.5" fill="#00009a"/>
<path d="M333.1 443.8L334.9 445.2L338.1 444.5L336.3 443.3" fill="#000095"/>
<path d="M336.3 443.3L338.1 444.5L341.3 443.7L339.5 442.7" fill="#00008d"/>
<path d="M334.9 445.2L336.7 446.5L340.0 445.7L338.1 444.5" fill="#0000a7"/>
<path d="M338.1 444.5L340.0 445.7L343.2 444.8L341.3 443.7" fill="#0000a0"/>
<polygon points="325.0,445.3 329.2,449.2 336.6,446.8 332.4,443.7" fill="#0000ac"/>
<path d="M325.7 445.4L327.5 447.1L330.8 446.2L329.0 444.7" fill="#0000a8"/>
<path d="M329.0 444.7L330.8 446.2L334.0 445.4L332.2 444.0" fill="#0000a0"/>
<path d="M327.5 447.1L329.3 448.8L332.6 447.8L330.8 446.2" fill="#0000b8"/>
<path d="M330.8 446.2L332.6 447.8L335.9 446.8L334.0 445.4" fill="#0000b1"/>
<polygon points="317.6,447.2 321.7,451.9 329.2,449.2 325.0,445.3" fill="#0000bc"/>
<path d="M318.3 447.3L320.1 449.4L323.4 448.4L321.6 446.5" fill="#0000ba"/>
<path d="M321.6 446.5L323.4 448.4L326.6 447.3L324.8 445.6" fill="#0000b2"/>
<path d="M320.1 449.4L321.9 451.5L325.2 450.3L323.4 448.4" fill="#0000c6"/>
<path d="M323.4 448.4L325.2 450.3L328.5 449.1L326.6 447.3" fill="#0000c0"/>
<polygon points="310.1,449.6 314.1,455.1 321.7,451.9 317.6,447.2" fill="#0000c9"/>
<polygon points="302.5,452.5 306.5,458.9 314.1,455.1 310.1,449.6" fill="#0000d0"/>
<polygon points="294.8,456.1 298.8,463.1 306.5,458.9 302.5,452.5" fill="#0000d2"/>
<polygon points="287.1,460.2 291.1,467.8 298.8,463.1 294.8,456.1" fill="#0000cd"/>
<polygon points="279.4,465.0 283.3,473.0 291.1,467.8 287.1,460.2" fill="#0000c5"/>
<polygon points="271.6,470.2 275.4,478.6 283.3,473.0 279.4,465.0" fill="#0000b9"/>
<polygon points="263.8,475.9 267.6,484.4 275.4,478.6 271.6,470.2" fill="#0000ab"/>
<path d="M264.5 476.0L265.6 478.5L267.9 476.8L266.8 474.4" fill="#0000ab"/>
<path d="M266.8 474.4L267.9 476.8L270.2 475.2L269.1 472.7" fill="#0000af"/>
<path d="M269.1 472.7L270.2 475.2L272.5 473.5L271.4 471.1" fill="#0000b4"/>
<path d="M265.6 478.5L266.7 481.0L269.0 479.3L267.9 476.8" fill="#0000a6"/>
<path d="M267.9 476.8L269.0 479.3L271.3 477.6L270.2 475.2" fill="#0000ab"/>
<path d="M270.2 475.2L271.3 477.6L273.6 475.9L272.5 473.5" fill="#0000af"/>
<path d="M266.7 481.0L267.8 483.5L270.1 481.8L269.0 479.3" fill="#0000a2"/>
<path d="M269.0 479.3L270.1 481.8L272.4 480.1L271.3 477.6" fill="#0000a6"/>
<path d="M271.3 477.6L272.4 480.1L274.7 478.4L273.6 475.9" fill="#0000ab"/>
<polygon points="255.9,481.8 259.6,490.2 267.6,484.4 263.8,475.9" fill="#00009b"/>
<path d="M256.6 482.0L257.7 484.4L260.0 482.7L258.9 480.2" fill="#00009b"/>
<path d="M258.9 480.2L260.0 482.7L262.3 481.0L261.2 478.5" fill="#0000a0"/>
<path d="M261.2 478.5L262.3 481.0L264.6 479.2L263.5 476.7" fill="#0000a4"/>
<path d="M257.7 484.4L258.8 486.9L261.1 485.2L260.0 482.7" fill="#000097"/>
<path d="M260.0 482.7L261.1 485.2L263.4 483.4L262.3 481.0" fill="#00009b"/>
<path d="M262.3 481.0L263.4 483.4L265.7 481.7L264.6 479.2" fill="#0000a0"/>
<path d="M258.8 486.9L259.9 489.4L262.2 487.7L261.1 485.2" fill="#000092"/>
<path d="M261.1 485.2L262.2 487.7L264.5 485.9L263.4 483.4" fill="#000097"/>
<path d="M263.4 483.4L264.5 485.9L266.9 484.2L265.7 481.7" fill="#00009b"/>
<polygon points="248.0,487.9 251.7,496.1 259.6,490.2 255.9,481.8" fill="#00008c"/>
<path d="M248.7 488.0L249.7 490.4L252.1 488.6L251.0 486.2" fill="#00008b"/>
<path d="M251.0 486.2L252.1 488.6L254.4 486.9L253.3 484.4" fill="#000090"/>
<path d="M253.3 484.4L254.4 486.9L256.7 485.1L255.6 482.7" fill="#000094"/>
<path d="M249.7 490.4L250.8 492.8L253.2 491.1L252.1 488.6" fill="#000087"/>
<path d="M252.1 488.6L253.2 491.1L255.5 489.3L254.4 486.9" fill="#00008b"/>
<path d="M254.4 486.9L255.5 489.3L257.8 487.6L256.7 485.1" fill="#000090"/>
<path d="M250.8 492.8L251.9 495.2L254.3 493.5L253.2 491.1" fill="#000083"/>
<path d="M253.2 491.1L254.3 493.5L256.6 491.8L255.5 489.3" fill="#000087"/>
<path d="M255.5 489.3L256.6 491.8L258.9 490.1L257.8 487.6" fill="#00008c"/>
<polygon points="240.0,493.8 243.6,501.7 251.7,496.1 248.0,487.9" fill="#00007c"/>
<polygon points="232.0,499.5 235.5,506.9 243.6,501.7 240.0,493.8" fill="#00006e"/>
<polygon points="223.8,504.8 227.2,511.6 235.5,506.9 232.0,499.5" fill="#000062"/>
<polygon points="215.6,509.4 218.9,515.6 227.2,511.6 223.8,504.8" fill="#000058"/>
<polygon points="539.2,408.2 544.3,412.4 549.5,411.1 544.3,407.5" fill="#00004a"/>
<polygon points="534.2,408.3 539.2,413.2 544.3,412.4 539.2,408.2" fill="#00004e"/>
<polygon points="529.2,407.9 534.1,413.4 539.2,413.2 534.2,408.3" fill="#000055"/>
<polygon points="524.2,407.2 529.0,413.1 534.1,413.4 529.2,407.9" fill="#00005e"/>
<polygon points="519.1,406.2 523.9,412.5 529.0,413.1 524.2,407.2" fill="#000068"/>
<polygon points="514.0,405.1 518.7,411.7 523.9,412.5 519.1,406.2" fill="#000074"/>
<polygon points="508.8,404.0 513.5,410.8 518.7,411.7 514.0,405.1" fill="#000081"/>
<polygon points="503.6,403.1 508.3,410.0 513.5,410.8 508.8,404.0" fill="#00008e"/>
<polygon points="498.2,402.5 502.9,409.3 508.3,410.0 503.6,403.1" fill="#00009b"/>
<polygon points="492.7,402.3 497.4,408.8 502.9,409.3 498.2,402.5" fill="#0000a8"/>
<polygon points="487.1,402.4 491.9,408.6 497.4,408.8 492.7,402.3" fill="#0000b3"/>
<polygon points="481.4,403.1 486.2,408.7 491.9,408.6 487.1,402.4" fill="#0000bc"/>
<polygon points="475.5,404.1 480.4,409.3 486.2,408.7 481.4,403.1" fill="#0000c2"/>
<polygon points="469.6,405.6 474.5,410.2 480.4,409.3 475.5,404.1" fill="#0000c3"/>
<polygon points="463.6,407.4 468.5,411.4 474.5,410.2 469.6,405.6" fill="#0000c1"/>
<polygon points="457.4,409.5 462.4,413.0 468.5,411.4 463.6,407.4" fill="#0000ba"/>
<polygon points="451.2,411.9 456.3,414.8 462.4,413.0 457.4,409.5" fill="#0000b1"/>
<polygon points="445.0,414.4 450.0,416.8 456.3,414.8 451.2,411.9" fill="#0000a6"/>
<path d="M445.7 414.4L447.9 415.5L450.6 414.5L448.4 413.3" fill="#00009c"/>
<path d="M448.4 413.3L450.6 414.5L453.4 413.5L451.2 412.2" fill="#0000a2"/>
<path d="M447.9 415.5L450.1 416.5L452.8 415.6L450.6 414.5" fill="#0000ac"/>
<path d="M450.6 414.5L452.8 415.6L455.6 414.7L453.4 413.5" fill="#0000b0"/>
<polygon points="438.7,417.1 443.7,418.9 450.0,416.8 445.0,414.4" fill="#00009b"/>
<path d="M439.3 417.0L441.5 417.9L444.3 416.8L442.1 415.9" fill="#000090"/>
<path d="M442.1 415.9L444.3 416.8L447.1 415.7L444.9 414.7" fill="#000095"/>
<path d="M441.5 417.9L443.8 418.7L446.5 417.7L444.3 416.8" fill="#0000a2"/>
<path d="M444.3 416.8L446.5 417.7L449.3 416.8L447.1 415.7" fill="#0000a6"/>
<polygon points="432.3,419.7 437.3,421.2 443.7,418.9 438.7,417.1" fill="#000090"/>
<path d="M433.0 419.6L435.2 420.3L438.0 419.2L435.8 418.5" fill="#000086"/>
<path d="M435.8 418.5L438.0 419.2L440.8 418.1L438.6 417.3" fill="#00008a"/>
<path d="M435.2 420.3L437.4 421.0L440.2 420.0L438.0 419.2" fill="#000098"/>
<path d="M438.0 419.2L440.2 420.0L443.0 419.0L440.8 418.1" fill="#00009c"/>
<polygon points="425.8,422.3 430.8,423.5 437.3,421.2 432.3,419.7" fill="#000087"/>
<polygon points="419.4,424.8 424.3,425.8 430.8,423.5 425.8,422.3" fill="#000080"/>
<polygon points="412.8,427.2 417.7,428.0 424.3,425.8 419.4,424.8" fill="#00007a"/>
<polygon points="406.2,429.5 411.1,430.2 417.7,428.0 412.8,427.2" fill="#000076"/>
<polygon points="399.6,431.6 404.4,432.3 411.1,430.2 406.2,429.5" fill="#000075"/>
<polygon points="392.9,433.5 397.6,434.4 404.4,432.3 399.6,431.6" fill="#000075"/>
<polygon points="386.1,435.3 390.8,436.3 397.6,434.4 392.9,433.5" fill="#000077"/>
<polygon points="379.2,436.9 383.9,438.3 390.8,436.3 386.1,435.3" fill="#00007c"/>
<polygon points="372.3,438.4 376.9,440.2 383.9,438.3 379.2,436.9" fill="#000083"/>
<polygon points="365.3,439.9 369.8,442.2 376.9,440.2 372.3,438.4" fill="#00008c"/>
<polygon points="358.3,441.4 362.7,444.2 369.8,442.2 365.3,439.9" fill="#000098"/>
<path d="M359.0 441.5L360.9 442.7L364.0 441.9L362.1 440.8" fill="#000091"/>
<path d="M362.1 440.8L364.0 441.9L367.2 441.2L365.2 440.2" fill="#00008b"/>
<path d="M360.9 442.7L362.9 444.0L366.0 443.1L364.0 441.9" fill="#0000a4"/>
<path d="M364.0 441.9L366.0 443.1L369.1 442.2L367.2 441.2" fill="#00009f"/>
<polygon points="351.1,443.0 355.5,446.5 362.7,444.2 358.3,441.4" fill="#0000a4"/>
<path d="M351.8 443.2L353.7 444.6L356.9 443.8L355.0 442.4" fill="#00009f"/>
<path d="M355.0 442.4L356.9 443.8L360.1 443.0L358.1 441.7" fill="#000098"/>
<path d="M353.7 444.6L355.7 446.1L358.8 445.2L356.9 443.8" fill="#0000b1"/>
<path d="M356.9 443.8L358.8 445.2L362.0 444.2L360.1 443.0" fill="#0000ab"/>
<polygon points="343.9,444.8 348.2,448.9 355.5,446.5 351.1,443.0" fill="#0000b2"/>
<path d="M344.6 445.0L346.5 446.7L349.7 445.8L347.8 444.2" fill="#0000ad"/>
<path d="M347.8 444.2L349.7 445.8L352.9 444.9L350.9 443.4" fill="#0000a7"/>
<path d="M346.5 446.7L348.4 448.5L351.6 447.5L349.7 445.8" fill="#0000bd"/>
<path d="M349.7 445.8L351.6 447.5L354.8 446.4L352.9 444.9" fill="#0000b8"/>
<polygon points="336.6,446.8 340.8,451.6 348.2,448.9 343.9,444.8" fill="#0000be"/>
<path d="M337.3 447.0L339.1 449.1L342.4 448.0L340.5 446.1" fill="#0000bb"/>
<path d="M340.5 446.1L342.4 448.0L345.6 447.0L343.7 445.2" fill="#0000b5"/>
<path d="M339.1 449.1L341.0 451.2L344.2 450.0L342.4 448.0" fill="#0000c8"/>
<path d="M342.4 448.0L344.2 450.0L347.5 448.8L345.6 447.0" fill="#0000c3"/>
<polygon points="329.2,449.2 333.3,454.7 340.8,451.6 336.6,446.8" fill="#0000c9"/>
<polygon points="321.7,451.9 325.8,458.2 333.3,454.7 329.2,449.2" fill="#0000d0"/>
<polygon points="314.1,455.1 318.2,462.0 325.8,458.2 321.7,451.9" fill="#0000d3"/>
<polygon points="306.5,458.9 310.5,466.4 318.2,462.0 314.1,455.1" fill="#0000d2"/>
<polygon points="298.8,463.1 302.8,471.1 310.5,466.4 306.5,458.9" fill="#0000cc"/>
<polygon points="291.1,467.8 295.0,476.2 302.8,471.1 298.8,463.1" fill="#0101c3"/>
<polygon points="283.3,473.0 287.2,481.6 295.0,476.2 291.1,467.8" fill="#0101b7"/>
<polygon points="275.4,478.6 279.3,487.3 287.2,481.6 283.3,473.0" fill="#0101aa"/>
<path d="M276.1 478.8L277.3 481.3L279.6 479.7L278.4 477.1" fill="#0101aa"/>
<path d="M278.4 477.1L279.6 479.7L281.9 478.0L280.7 475.5" fill="#0101af"/>
<path d="M280.7 475.5L281.9 478.0L284.2 476.4L283.0 473.9" fill="#0101b3"/>
<path d="M277.3 481.3L278.4 483.8L280.7 482.2L279.6 479.7" fill="#0101a6"/>
<path d="M279.6 479.7L280.7 482.2L283.0 480.6L281.9 478.0" fill="#0101aa"/>
<path d="M281.9 478.0L283.0 480.6L285.3 478.9L284.2 476.4" fill="#0101ae"/>
<path d="M278.4 483.8L279.6 486.4L281.9 484.8L280.7 482.2" fill="#0101a1"/>
<path d="M280.7 482.2L281.9 484.8L284.2 483.1L283.0 480.6" fill="#0101a5"/>
<path d="M283.0 480.6L284.2 483.1L286.5 481.5L285.3 478.9" fill="#0101a9"/>
<polygon points="267.6,484.4 271.4,493.0 279.3,487.3 275.4,478.6" fill="#01019b"/>
<path d="M268.3 484.5L269.4 487.0L271.7 485.4L270.6 482.8" fill="#00009b"/>
<path d="M270.6 482.8L271.7 485.4L274.0 483.7L272.9 481.1" fill="#0000a0"/>
<path d="M272.9 481.1L274.0 483.7L276.3 482.0L275.2 479.4" fill="#0101a4"/>
<path d="M269.4 487.0L270.5 489.6L272.8 487.9L271.7 485.4" fill="#000096"/>
<path d="M271.7 485.4L272.8 487.9L275.2 486.2L274.0 483.7" fill="#01019b"/>
<path d="M274.0 483.7L275.2 486.2L277.5 484.5L276.3 482.0" fill="#01019f"/>
<path d="M270.5 489.6L271.7 492.1L274.0 490.4L272.8 487.9" fill="#010192"/>
<path d="M272.8 487.9L274.0 490.4L276.3 488.8L275.2 486.2" fill="#010196"/>
<path d="M275.2 486.2L276.3 488.8L278.6 487.1L277.5 484.5" fill="#01019a"/>
<polygon points="259.6,490.2 263.4,498.6 271.4,493.0 267.6,484.4" fill="#00008c"/>
<path d="M260.3 490.4L261.4 492.9L263.8 491.1L262.7 488.7" fill="#00008c"/>
<path d="M262.7 488.7L263.8 491.1L266.1 489.4L265.0 486.9" fill="#000090"/>
<path d="M265.0 486.9L266.1 489.4L268.4 487.7L267.3 485.2" fill="#000095"/>
<path d="M261.4 492.9L262.6 495.3L264.9 493.6L263.8 491.1" fill="#000087"/>
<path d="M263.8 491.1L264.9 493.6L267.2 491.9L266.1 489.4" fill="#00008c"/>
<path d="M266.1 489.4L267.2 491.9L269.6 490.3L268.4 487.7" fill="#000090"/>
<path d="M262.6 495.3L263.7 497.8L266.0 496.1L264.9 493.6" fill="#000083"/>
<path d="M264.9 493.6L266.0 496.1L268.4 494.5L267.2 491.9" fill="#000087"/>
<path d="M267.2 491.9L268.4 494.5L270.7 492.8L269.6 490.3" fill="#00008b"/>
<polygon points="251.7,496.1 255.4,504.1 263.4,498.6 259.6,490.2" fill="#00007d"/>
<polygon points="243.6,501.7 247.2,509.2 255.4,504.1 251.7,496.1" fill="#000070"/>
<polygon points="235.5,506.9 239.0,513.9 247.2,509.2 243.6,501.7" fill="#000064"/>
<polygon points="227.2,511.6 230.7,517.9 239.0,513.9 235.5,506.9" fill="#000059"/>
<polygon points="218.9,515.6 222.2,521.3 230.7,517.9 227.2,511.6" fill="#000051"/>
<polygon points="544.3,412.4 549.6,416.1 554.8,414.2 549.5,411.1" fill="#000047"/>
<polygon points="539.2,413.2 544.3,417.5 549.6,416.1 544.3,412.4" fill="#00004a"/>
<polygon points="534.1,413.4 539.1,418.4 544.3,417.5 539.2,413.2" fill="#00004f"/>
<polygon points="529.0,413.1 533.9,418.7 539.1,418.4 534.1,413.4" fill="#000056"/>
<polygon points="523.9,412.5 528.8,418.6 533.9,418.7 529.0,413.1" fill="#00005f"/>
<polygon points="518.7,411.7 523.6,418.3 528.8,418.6 523.9,412.5" fill="#000069"/>
<polygon points="513.5,410.8 518.3,417.7 523.6,418.3 518.7,411.7" fill="#000074"/>
<polygon points="508.3,410.0 513.0,417.0 518.3,417.7 513.5,410.8" fill="#000080"/>
<polygon points="502.9,409.3 507.7,416.4 513.0,417.0 508.3,410.0" fill="#00008d"/>
<polygon points="497.4,408.8 502.2,415.9 507.7,416.4 502.9,409.3" fill="#000099"/>
<polygon points="491.9,408.6 496.6,415.5 502.2,415.9 497.4,408.8" fill="#0000a6"/>
<polygon points="486.2,408.7 491.0,415.4 496.6,415.5 491.9,408.6" fill="#0000b1"/>
<polygon points="480.4,409.3 485.2,415.6 491.0,415.4 486.2,408.7" fill="#0000ba"/>
<polygon points="474.5,410.2 479.4,416.1 485.2,415.6 480.4,409.3" fill="#0000c1"/>
<polygon points="468.5,411.4 473.4,416.9 479.4,416.1 474.5,410.2" fill="#0000c5"/>
<polygon points="462.4,413.0 467.4,418.0 473.4,416.9 468.5,411.4" fill="#0000c7"/>
<polygon points="456.3,414.8 461.2,419.3 467.4,418.0 462.4,413.0" fill="#0000c5"/>
<polygon points="450.0,416.8 455.0,420.9 461.2,419.3 456.3,414.8" fill="#0000c1"/>
<polygon points="443.7,418.9 448.7,422.6 455.0,420.9 450.0,416.8" fill="#0000bc"/>
<polygon points="437.3,421.2 442.3,424.5 448.7,422.6 443.7,418.9" fill="#0000b5"/>
<polygon points="430.8,423.5 435.8,426.6 442.3,424.5 437.3,421.2" fill="#0000af"/>
<path d="M431.5 423.5L433.7 424.9L436.5 423.9L434.4 422.5" fill="#0000a6"/>
<path d="M434.4 422.5L436.5 423.9L439.4 423.0L437.2 421.5" fill="#0000a9"/>
<path d="M433.7 424.9L435.9 426.2L438.7 425.4L436.5 423.9" fill="#0000b6"/>
<path d="M436.5 423.9L438.7 425.4L441.6 424.5L439.4 423.0" fill="#0000b8"/>
<polygon points="424.3,425.8 429.2,428.6 435.8,426.6 430.8,423.5" fill="#0000a9"/>
<path d="M425.0 425.8L427.2 427.1L430.0 426.1L427.9 424.8" fill="#0000a0"/>
<path d="M427.9 424.8L430.0 426.1L432.9 425.1L430.7 423.8" fill="#0000a3"/>
<path d="M427.2 427.1L429.3 428.3L432.2 427.4L430.0 426.1" fill="#0000b1"/>
<path d="M430.0 426.1L432.2 427.4L435.1 426.5L432.9 425.1" fill="#0000b3"/>
<polygon points="417.7,428.0 422.6,430.8 429.2,428.6 424.3,425.8" fill="#0000a5"/>
<path d="M418.4 428.1L420.6 429.2L423.5 428.3L421.3 427.1" fill="#00009c"/>
<path d="M421.3 427.1L423.5 428.3L426.4 427.3L424.2 426.1" fill="#00009d"/>
<path d="M420.6 429.2L422.7 430.5L425.7 429.5L423.5 428.3" fill="#0000ae"/>
<path d="M423.5 428.3L425.7 429.5L428.6 428.6L426.4 427.3" fill="#0000af"/>
<polygon points="411.1,430.2 416.0,432.9 422.6,430.8 417.7,428.0" fill="#0000a2"/>
<path d="M411.8 430.2L413.9 431.4L416.9 430.5L414.7 429.3" fill="#000099"/>
<path d="M414.7 429.3L416.9 430.5L419.8 429.5L417.6 428.3" fill="#00009a"/>
<path d="M413.9 431.4L416.1 432.6L419.0 431.7L416.9 430.5" fill="#0000ab"/>
<path d="M416.9 430.5L419.0 431.7L421.9 430.7L419.8 429.5" fill="#0000ac"/>
<polygon points="404.4,432.3 409.2,435.0 416.0,432.9 411.1,430.2" fill="#0000a1"/>
<path d="M405.1 432.4L407.2 433.5L410.2 432.6L408.0 431.4" fill="#000098"/>
<path d="M408.0 431.4L410.2 432.6L413.1 431.7L411.0 430.5" fill="#000098"/>
<path d="M407.2 433.5L409.3 434.7L412.3 433.8L410.2 432.6" fill="#0000ab"/>
<path d="M410.2 432.6L412.3 433.8L415.3 432.9L413.1 431.7" fill="#0000ab"/>
<polygon points="397.6,434.4 402.4,437.2 409.2,435.0 404.4,432.3" fill="#0000a2"/>
<path d="M398.3 434.4L400.4 435.7L403.4 434.7L401.3 433.5" fill="#000099"/>
<path d="M401.3 433.5L403.4 434.7L406.4 433.8L404.3 432.6" fill="#000098"/>
<path d="M400.4 435.7L402.5 436.9L405.5 436.0L403.4 434.7" fill="#0000ac"/>
<path d="M403.4 434.7L405.5 436.0L408.5 435.0L406.4 433.8" fill="#0000ab"/>
<polygon points="390.8,436.3 395.5,439.4 402.4,437.2 397.6,434.4" fill="#0000a5"/>
<path d="M391.5 436.4L393.5 437.7L396.6 436.8L394.5 435.5" fill="#00009c"/>
<path d="M394.5 435.5L396.6 436.8L399.6 435.9L397.5 434.7" fill="#00009b"/>
<path d="M393.5 437.7L395.6 439.1L398.7 438.1L396.6 436.8" fill="#0000af"/>
<path d="M396.6 436.8L398.7 438.1L401.7 437.2L399.6 435.9" fill="#0000ae"/>
<polygon points="383.9,438.3 388.5,441.6 395.5,439.4 390.8,436.3" fill="#0000a9"/>
<path d="M384.6 438.4L386.6 439.8L389.7 438.9L387.6 437.5" fill="#0000a2"/>
<path d="M387.6 437.5L389.7 438.9L392.7 438.0L390.7 436.6" fill="#00009f"/>
<path d="M386.6 439.8L388.7 441.3L391.7 440.3L389.7 438.9" fill="#0000b4"/>
<path d="M389.7 438.9L391.7 440.3L394.8 439.3L392.7 438.0" fill="#0000b1"/>
<polygon points="376.9,440.2 381.5,443.9 388.5,441.6 383.9,438.3" fill="#0000af"/>
<path d="M377.6 440.3L379.6 441.9L382.7 441.0L380.7 439.5" fill="#0000a9"/>
<path d="M380.7 439.5L382.7 441.0L385.8 440.1L383.7 438.6" fill="#0000a5"/>
<path d="M379.6 441.9L381.6 443.6L384.7 442.6L382.7 441.0" fill="#0000ba"/>
<path d="M382.7 441.0L384.7 442.6L387.8 441.6L385.8 440.1" fill="#0000b7"/>
<polygon points="369.8,442.2 374.4,446.3 381.5,443.9 376.9,440.2" fill="#0000b6"/>
<path d="M370.5 442.3L372.5 444.1L375.7 443.2L373.7 441.4" fill="#0000b1"/>
<path d="M373.7 441.4L375.7 443.2L378.8 442.2L376.8 440.6" fill="#0000ad"/>
<path d="M372.5 444.1L374.5 445.9L377.7 444.9L375.7 443.2" fill="#0000c0"/>
<path d="M375.7 443.2L377.7 444.9L380.8 443.8L378.8 442.2" fill="#0000bd"/>
<polygon points="362.7,444.2 367.2,448.9 374.4,446.3 369.8,442.2" fill="#0000be"/>
<polygon points="355.5,446.5 359.9,451.7 367.2,448.9 362.7,444.2" fill="#0000c6"/>
<polygon points="348.2,448.9 352.5,454.7 359.9,451.7 355.5,446.5" fill="#0000cd"/>
<polygon points="340.8,451.6 345.1,458.0 352.5,454.7 348.2,448.9" fill="#0000d2"/>
<polygon points="333.3,454.7 337.6,461.7 345.1,458.0 340.8,451.6" fill="#0000d4"/>
<polygon points="325.8,458.2 330.0,465.7 337.6,461.7 333.3,454.7" fill="#0000d3"/>
<polygon points="318.2,462.0 322.4,470.1 330.0,465.7 325.8,458.2" fill="#0000cf"/>
<polygon points="310.5,466.4 314.7,474.8 322.4,470.1 318.2,462.0" fill="#0101c9"/>
<polygon points="302.8,471.1 306.9,479.8 314.7,474.8 310.5,466.4" fill="#0202c0"/>
<polygon points="295.0,476.2 299.1,485.1 306.9,479.8 302.8,471.1" fill="#0202b5"/>
<polygon points="287.2,481.6 291.2,490.6 299.1,485.1 295.0,476.2" fill="#0202a8"/>
<path d="M287.9 481.8L289.1 484.4L291.4 482.9L290.2 480.3" fill="#0202a9"/>
<path d="M290.2 480.3L291.4 482.9L293.7 481.3L292.5 478.7" fill="#0202ad"/>
<path d="M292.5 478.7L293.7 481.3L296.0 479.7L294.8 477.1" fill="#0202b1"/>
<path d="M289.1 484.4L290.3 487.1L292.6 485.5L291.4 482.9" fill="#0202a4"/>
<path d="M291.4 482.9L292.6 485.5L294.9 483.9L293.7 481.3" fill="#0202a8"/>
<path d="M293.7 481.3L294.9 483.9L297.2 482.3L296.0 479.7" fill="#0202ac"/>
<path d="M290.3 487.1L291.5 489.7L293.8 488.1L292.6 485.5" fill="#02029f"/>
<path d="M292.6 485.5L293.8 488.1L296.1 486.5L294.9 483.9" fill="#0303a3"/>
<path d="M294.9 483.9L296.1 486.5L298.4 484.9L297.2 482.3" fill="#0303a7"/>
<polygon points="279.3,487.3 283.3,496.1 291.2,490.6 287.2,481.6" fill="#010199"/>
<path d="M280.0 487.5L281.2 490.0L283.5 488.4L282.4 485.8" fill="#01019a"/>
<path d="M282.4 485.8L283.5 488.4L285.8 486.7L284.7 484.2" fill="#01019e"/>
<path d="M284.7 484.2L285.8 486.7L288.2 485.1L287.0 482.5" fill="#0101a3"/>
<path d="M281.2 490.0L282.4 492.6L284.7 491.0L283.5 488.4" fill="#010195"/>
<path d="M283.5 488.4L284.7 491.0L287.0 489.3L285.8 486.7" fill="#010199"/>
<path d="M285.8 486.7L287.0 489.3L289.3 487.7L288.2 485.1" fill="#02029e"/>
<path d="M282.4 492.6L283.5 495.2L285.9 493.6L284.7 491.0" fill="#010190"/>
<path d="M284.7 491.0L285.9 493.6L288.2 492.0L287.0 489.3" fill="#020294"/>
<path d="M287.0 489.3L288.2 492.0L290.5 490.3L289.3 487.7" fill="#020298"/>
<polygon points="271.4,493.0 275.3,501.5 283.3,496.1 279.3,487.3" fill="#01018a"/>
<path d="M272.1 493.2L273.3 495.7L275.6 494.0L274.4 491.5" fill="#01018b"/>
<path d="M274.4 491.5L275.6 494.0L277.9 492.3L276.8 489.8" fill="#01018f"/>
<path d="M276.8 489.8L277.9 492.3L280.3 490.7L279.1 488.1" fill="#010194"/>
<path d="M273.3 495.7L274.4 498.2L276.7 496.5L275.6 494.0" fill="#010186"/>
<path d="M275.6 494.0L276.7 496.5L279.1 494.9L277.9 492.3" fill="#01018a"/>
<path d="M277.9 492.3L279.1 494.9L281.4 493.3L280.3 490.7" fill="#01018f"/>
<path d="M274.4 498.2L275.6 500.7L277.9 499.1L276.7 496.5" fill="#000081"/>
<path d="M276.7 496.5L277.9 499.1L280.2 497.5L279.1 494.9" fill="#010185"/>
<path d="M279.1 494.9L280.2 497.5L282.6 495.9L281.4 493.3" fill="#01018a"/>
<polygon points="263.4,498.6 267.3,506.8 275.3,501.5 271.4,493.0" fill="#00007c"/>
<polygon points="255.4,504.1 259.1,511.8 267.3,506.8 263.4,498.6" fill="#00006f"/>
<polygon points="247.2,509.2 250.9,516.3 259.1,511.8 255.4,504.1" fill="#000064"/>
<polygon points="239.0,513.9 242.6,520.3 250.9,516.3 247.2,509.2" fill="#00005a"/>
<polygon points="230.7,517.9 234.1,523.7 242.6,520.3 239.0,513.9" fill="#000052"/>
<polygon points="222.2,521.3 225.5,526.5 234.1,523.7 230.7,517.9" fill="#00004b"/>
<polygon points="549.6,416.1 555.0,419.3 560.4,416.8 554.8,414.2" fill="#000046"/>
<polygon points="544.3,417.5 549.6,421.3 555.0,419.3 549.6,416.1" fill="#000048"/>
<polygon points="539.1,418.4 544.3,422.8 549.6,421.3 544.3,417.5" fill="#00004b"/>
<polygon points="533.9,418.7 539.0,423.8 544.3,422.8 539.1,418.4" fill="#000050"/>
<polygon points="528.8,418.6 533.8,424.3 539.0,423.8 533.9,418.7" fill="#000056"/>
<polygon points="523.6,418.3 528.5,424.5 533.8,424.3 528.8,418.6" fill="#00005f"/>
<polygon points="518.3,417.7 523.2,424.4 528.5,424.5 523.6,418.3" fill="#000068"/>
<polygon points="513.0,417.0 517.9,424.1 523.2,424.4 518.3,417.7" fill="#000073"/>
<polygon points="507.7,416.4 512.5,423.7 517.9,424.1 513.0,417.0" fill="#00007e"/>
<polygon points="502.2,415.9 507.0,423.3 512.5,423.7 507.7,416.4" fill="#00008a"/>
<polygon points="496.6,415.5 501.4,423.0 507.0,423.3 502.2,415.9" fill="#000096"/>
<polygon points="491.0,415.4 495.8,422.8 501.4,423.0 496.6,415.5" fill="#0000a1"/>
<polygon points="485.2,415.6 490.0,422.8 495.8,422.8 491.0,415.4" fill="#0000ac"/>
<polygon points="479.4,416.1 484.2,423.1 490.0,422.8 485.2,415.6" fill="#0000b6"/>
<polygon points="473.4,416.9 478.3,423.6 484.2,423.1 479.4,416.1" fill="#0000be"/>
<polygon points="467.4,418.0 472.2,424.4 478.3,423.6 473.4,416.9" fill="#0000c4"/>
<polygon points="461.2,419.3 466.1,425.4 472.2,424.4 467.4,418.0" fill="#0000c8"/>
<polygon points="455.0,420.9 459.9,426.6 466.1,425.4 461.2,419.3" fill="#0000ca"/>
<polygon points="448.7,422.6 453.6,428.1 459.9,426.6 455.0,420.9" fill="#0000cb"/>
<polygon points="442.3,424.5 447.2,429.7 453.6,428.1 448.7,422.6" fill="#0000ca"/>
<polygon points="435.8,426.6 440.7,431.5 447.2,429.7 442.3,424.5" fill="#0000c9"/>
<polygon points="429.2,428.6 434.1,433.4 440.7,431.5 435.8,426.6" fill="#0000c7"/>
<polygon points="422.6,430.8 427.5,435.4 434.1,433.4 429.2,428.6" fill="#0000c5"/>
<polygon points="416.0,432.9 420.8,437.5 427.5,435.4 422.6,430.8" fill="#0000c4"/>
<polygon points="409.2,435.0 414.0,439.7 420.8,437.5 416.0,432.9" fill="#0000c4"/>
<polygon points="402.4,437.2 407.2,442.0 414.0,439.7 409.2,435.0" fill="#0000c5"/>
<polygon points="395.5,439.4 400.2,444.4 407.2,442.0 402.4,437.2" fill="#0000c7"/>
<polygon points="388.5,441.6 393.2,446.9 400.2,444.4 395.5,439.4" fill="#0000c9"/>
<polygon points="381.5,443.9 386.1,449.5 393.2,446.9 388.5,441.6" fill="#0000cd"/>
<polygon points="374.4,446.3 378.9,452.3 386.1,449.5 381.5,443.9" fill="#0000d0"/>
<polygon points="367.2,448.9 371.7,455.3 378.9,452.3 374.4,446.3" fill="#0000d3"/>
<polygon points="359.9,451.7 364.4,458.5 371.7,455.3 367.2,448.9" fill="#0000d4"/>
<polygon points="352.5,454.7 357.0,462.0 364.4,458.5 359.9,451.7" fill="#0000d5"/>
<polygon points="345.1,458.0 349.5,465.8 357.0,462.0 352.5,454.7" fill="#0000d3"/>
<polygon points="337.6,461.7 341.9,469.9 349.5,465.8 345.1,458.0" fill="#0101d0"/>
<polygon points="330.0,465.7 334.3,474.2 341.9,469.9 337.6,461.7" fill="#0202cc"/>
<polygon points="322.4,470.1 326.6,478.9 334.3,474.2 330.0,465.7" fill="#0404c6"/>
<polygon points="314.7,474.8 318.9,483.8 326.6,478.9 322.4,470.1" fill="#0606bd"/>
<polygon points="306.9,479.8 311.1,488.9 318.9,483.8 314.7,474.8" fill="#0606b2"/>
<polygon points="299.1,485.1 303.2,494.2 311.1,488.9 306.9,479.8" fill="#0505a5"/>
<path d="M299.8 485.3L301.0 488.0L303.3 486.4L302.1 483.8" fill="#0404a6"/>
<path d="M302.1 483.8L303.3 486.4L305.6 484.9L304.4 482.2" fill="#0404aa"/>
<path d="M304.4 482.2L305.6 484.9L307.9 483.3L306.7 480.7" fill="#0404ae"/>
<path d="M301.0 488.0L302.2 490.6L304.5 489.1L303.3 486.4" fill="#0404a1"/>
<path d="M303.3 486.4L304.5 489.1L306.8 487.5L305.6 484.9" fill="#0505a5"/>
<path d="M305.6 484.9L306.8 487.5L309.1 486.0L307.9 483.3" fill="#0505a9"/>
<path d="M302.2 490.6L303.4 493.3L305.7 491.8L304.5 489.1" fill="#04049b"/>
<path d="M304.5 489.1L305.7 491.8L308.1 490.2L306.8 487.5" fill="#0505a0"/>
<path d="M306.8 487.5L308.1 490.2L310.4 488.7L309.1 486.0" fill="#0606a4"/>
<polygon points="291.2,490.6 295.3,499.5 303.2,494.2 299.1,485.1" fill="#030396"/>
<path d="M291.9 490.8L293.1 493.4L295.4 491.8L294.3 489.2" fill="#020297"/>
<path d="M294.3 489.2L295.4 491.8L297.8 490.2L296.6 487.6" fill="#03039c"/>
<path d="M296.6 487.6L297.8 490.2L300.1 488.6L298.9 486.0" fill="#0303a0"/>
<path d="M293.1 493.4L294.3 496.0L296.6 494.4L295.4 491.8" fill="#030392"/>
<path d="M295.4 491.8L296.6 494.4L299.0 492.8L297.8 490.2" fill="#030396"/>
<path d="M297.8 490.2L299.0 492.8L301.3 491.3L300.1 488.6" fill="#04049b"/>
<path d="M294.3 496.0L295.5 498.6L297.8 497.1L296.6 494.4" fill="#02028d"/>
<path d="M296.6 494.4L297.8 497.1L300.2 495.5L299.0 492.8" fill="#030391"/>
<path d="M299.0 492.8L300.2 495.5L302.5 493.9L301.3 491.3" fill="#040495"/>
<polygon points="283.3,496.1 287.3,504.7 295.3,499.5 291.2,490.6" fill="#010188"/>
<path d="M284.0 496.3L285.2 498.8L287.5 497.2L286.3 494.6" fill="#010189"/>
<path d="M286.3 494.6L287.5 497.2L289.9 495.6L288.7 493.0" fill="#02028d"/>
<path d="M288.7 493.0L289.9 495.6L292.2 494.0L291.0 491.4" fill="#020291"/>
<path d="M285.2 498.8L286.4 501.3L288.7 499.7L287.5 497.2" fill="#010183"/>
<path d="M287.5 497.2L288.7 499.7L291.0 498.2L289.9 495.6" fill="#010188"/>
<path d="M289.9 495.6L291.0 498.2L293.4 496.6L292.2 494.0" fill="#02028c"/>
<path d="M286.4 501.3L287.5 503.9L289.9 502.3L288.7 499.7" fill="#01017e"/>
<path d="M288.7 499.7L289.9 502.3L292.2 500.8L291.0 498.2" fill="#010182"/>
<path d="M291.0 498.2L292.2 500.8L294.6 499.2L293.4 496.6" fill="#020287"/>
<polygon points="275.3,501.5 279.3,509.8 287.3,504.7 283.3,496.1" fill="#00007a"/>
<polygon points="267.3,506.8 271.1,514.6 279.3,509.8 275.3,501.5" fill="#00006e"/>
<polygon points="259.1,511.8 262.9,519.0 271.1,514.6 267.3,506.8" fill="#000063"/>
<polygon points="250.9,516.3 254.6,522.9 262.9,519.0 259.1,511.8" fill="#00005a"/>
<polygon points="242.6,520.3 246.2,526.2 254.6,522.9 250.9,516.3" fill="#000052"/>
<polygon points="234.1,523.7 237.6,529.0 246.2,526.2 242.6,520.3" fill="#00004b"/>
<polygon points="225.5,526.5 228.9,531.1 237.6,529.0 234.1,523.7" fill="#000047"/>
</g>
<text transform="matrix(0.356 0.604 -0.839 0.327 247.50 589.79)" y="3.6" font-size="10" text-anchor="middle" fill="#333333" fill-opacity="0.85">-8.00</text>
<text transform="matrix(0.418 0.538 -0.748 0.291 329.28 557.94)" y="3.6" font-size="10" text-anchor="middle" fill="#333333" fill-opacity="0.85">-4.80</text>
<text transform="matrix(0.465 0.483 -0.671 0.261 402.38 529.47)" y="3.6" font-size="10" text-anchor="middle" fill="#333333" fill-opacity="0.80">-1.60</text>
<text transform="matrix(0.501 0.435 -0.605 0.236 468.12 503.87)" y="3.6" font-size="10" text-anchor="middle" fill="#333333" fill-opacity="0.75">1.60</text>
<text transform="matrix(0.528 0.395 -0.548 0.213 527.55 480.72)" y="3.6" font-size="10" text-anchor="middle" fill="#333333" fill-opacity="0.70">4.80</text>
<text transform="matrix(0.548 0.359 -0.499 0.194 581.55 459.69)" y="3.6" font-size="10" text-anchor="middle" fill="#333333" fill-opacity="0.60">8.00</text>
<text transform="matrix(0.590 -0.132 0.123 0.245 93.71 382.78)" y="3.6" font-size="10" text-anchor="middle" fill="#333333" fill-opacity="0.30">-8.00</text>
<text transform="matrix(0.629 -0.153 0.142 0.283 107.33 409.94)" y="3.6" font-size="10" text-anchor="middle" fill="#333333" fill-opacity="0.40">-4.80</text>
<text transform="matrix(0.674 -0.179 0.166 0.330 123.17 441.50)" y="3.6" font-size="10" text-anchor="middle" fill="#333333" fill-opacity="0.50">-1.60</text>
<text transform="matrix(0.724 -0.212 0.196 0.391 141.79 478.62)" y="3.6" font-size="10" text-anchor="middle" fill="#333333" fill-opacity="0.62">1.60</text>
<text transform="matrix(0.783 -0.255 0.236 0.471 164.01 522.91)" y="3.6" font-size="10" text-anchor="middle" fill="#333333" fill-opacity="0.72">4.80</text>
<text transform="matrix(0.852 -0.312 0.289 0.577 190.99 576.69)" y="3.6" font-size="10" text-anchor="middle" fill="#333333" fill-opacity="0.80">8.00</text>
<text transform="translate(67.4 227.4) rotate(-4.0)" y="2.41" font-size="6.70" text-anchor="middle" fill="#333333" fill-opacity="0.80">2.00</text>
<text transform="translate(72.8 257.4) rotate(-4.0)" y="2.38" font-size="6.60" text-anchor="middle" fill="#333333" fill-opacity="0.80">1.60</text>
<text transform="translate(77.0 287.2) rotate(-4.0)" y="2.34" font-size="6.50" text-anchor="middle" fill="#333333" fill-opacity="0.80">1.20</text>
<text transform="translate(81.2 316.0) rotate(-4.0)" y="2.30" font-size="6.40" text-anchor="middle" fill="#333333" fill-opacity="0.80">0.80</text>
<text transform="translate(85.4 343.6) rotate(-4.0)" y="2.27" font-size="6.30" text-anchor="middle" fill="#333333" fill-opacity="0.80">0.40</text>
<text transform="translate(89.6 370.0) rotate(-4.0)" y="2.23" font-size="6.20" text-anchor="middle" fill="#333333" fill-opacity="0.80">0.00</text>
<text transform="translate(594.4 447.3) rotate(21.0)" y="2.16" font-size="6.00" text-anchor="middle" fill="#333333" fill-opacity="0.75">0.00</text>
<text transform="translate(599.8 416.0) rotate(21.0)" y="2.20" font-size="6.10" text-anchor="middle" fill="#333333" fill-opacity="0.75">0.40</text>
<text transform="translate(606.0 383.4) rotate(21.0)" y="2.23" font-size="6.20" text-anchor="middle" fill="#333333" fill-opacity="0.75">0.80</text>
<text transform="translate(612.2 350.0) rotate(21.0)" y="2.27" font-size="6.30" text-anchor="middle" fill="#333333" fill-opacity="0.75">1.20</text>
<text transform="translate(618.4 313.6) rotate(21.0)" y="2.30" font-size="6.40" text-anchor="middle" fill="#333333" fill-opacity="0.75">1.60</text>
<rect x="304" y="285" width="57" height="13" fill="#dcdcd9" fill-opacity="0.93"/>
<text x="332.9" y="294.6" font-size="6.9" text-anchor="middle" fill="#4a4a4a">1.47, 1.46, -0.16</text>
<defs><radialGradient id="sg" cx="0.5" cy="0.45" r="0.55"><stop offset="0" stop-color="#e8fbff"/><stop offset="0.35" stop-color="#6fd0ff"/><stop offset="0.75" stop-color="#1ea6f5"/><stop offset="1" stop-color="#1a8fe0"/></radialGradient></defs>
<circle cx="332.6" cy="302.2" r="4.3" fill="url(#sg)"/>
</svg></div>
<span class="t11" style="left:646.5px;top:46px">Model</span>
<div class="gb" style="left:639px;top:60px;width:160px;height:62px"></div>
<span class="t11" style="left:646px;top:128px">Selection Mode</span>
<div class="gb" style="left:639px;top:142px;width:160px;height:101px"></div>
<div class="rb on" style="left:653px;top:75.8px"><i></i></div><span class="t13" style="left:673px;top:76.2px">Sqrt &amp; Sin</span>
<div class="rb" style="left:653px;top:94.5px"></div><span class="t13" style="left:673px;top:94.9px">Height Map</span>
<div class="rb" style="left:653px;top:157.6px"></div><span class="t13" style="left:673px;top:158.0px">No selection</span>
<div class="rb on" style="left:653px;top:176.6px"><i></i></div><span class="t13" style="left:673px;top:177.0px">Item</span>
<div class="rb" style="left:653px;top:195.5px"></div><span class="t13" style="left:673px;top:195.9px">Row Slice</span>
<div class="rb" style="left:653px;top:214.5px"></div><span class="t13" style="left:673px;top:214.9px">Column Slice</span>
<span class="t13" style="left:639px;top:259.5px;letter-spacing:0.4px">Column range</span>
<span class="t13" style="left:639px;top:337.5px;letter-spacing:0.4px">Row range</span>
<span class="t13" style="left:639px;top:415.5px;letter-spacing:0.4px">Theme</span>
<div class="sl" style="top:288.0px"></div><div class="kn" style="left:640.5px;top:282.8px"></div>
<div class="sl" style="top:315.0px"></div><div class="kn" style="left:780.0px;top:309.8px"></div>
<div class="sl" style="top:366.0px"></div><div class="kn" style="left:640.5px;top:360.8px"></div>
<div class="sl" style="top:393.0px"></div><div class="kn" style="left:780.0px;top:387.8px"></div>
<div id="combo"><span class="t13" style="left:8px;top:1.5px">Army Blue</span><svg style="position:absolute;left:146px;top:4px" width="8" height="12" viewBox="0 0 8 12"><path d="M4 0.800L6.800 4.600H1.200zM4 11.200L6.800 7.400H1.200z" fill="#3c3c3c"/></svg></div>
<span class="t11" style="left:646px;top:464px">Custom gradient</span>
<div class="gb" style="left:639px;top:478px;width:160px;height:134px"></div>
<div class="gbtn" style="left:654px"><b style="background:linear-gradient(#ffff00 0%,#ffe400 5%,#ff0000 33%,#0000ff 67%,#000000 100%)"></b></div>
<div class="gbtn" style="left:726px"><b style="background:linear-gradient(#8b0000 0%,#ff0000 20%,#ffff00 50%,#008000 100%)"></b></div>
</div></body></html>
